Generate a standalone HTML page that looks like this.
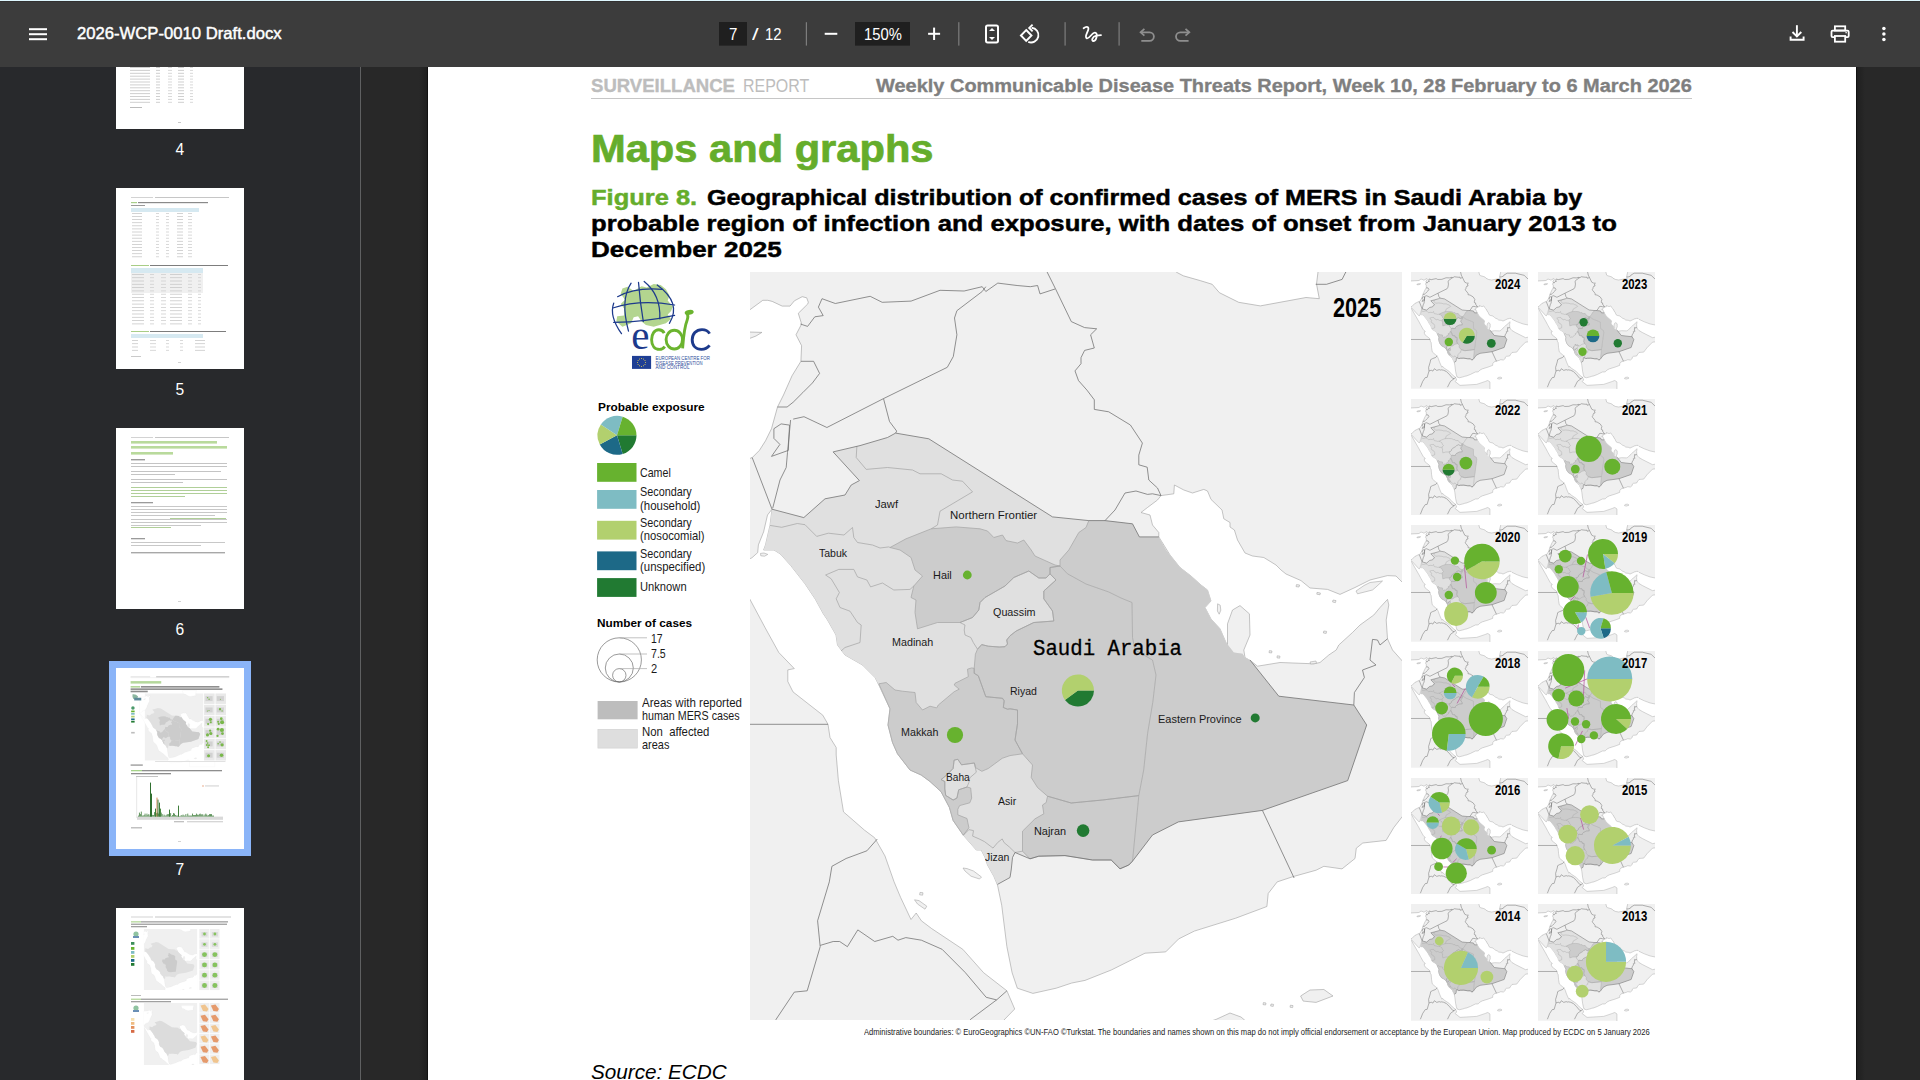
<!DOCTYPE html>
<html><head><meta charset="utf-8"><title>2026-WCP-0010 Draft.docx</title>
<style>
*{margin:0;padding:0;box-sizing:border-box}
html,body{width:1920px;height:1080px;overflow:hidden;background:#282828;font-family:"Liberation Sans",sans-serif}
.abs{position:absolute}
.t{position:absolute;white-space:pre;transform-origin:0 0;line-height:1}
svg{display:block}
</style></head><body>
<div class="abs" style="left:0;top:0;width:1920px;height:1px;background:#dff8ff"></div>
<div class="abs" style="left:0;top:1px;width:1920px;height:1px;background:#333131"></div>
<div class="abs" style="left:0;top:2px;width:1920px;height:65px;background:#3c3c3c"></div>
<svg class="abs" style="left:0;top:0" width="1920" height="67" viewBox="0 0 1920 67"><rect x="29" y="28.2" width="18" height="2" fill="#ffffff"/><rect x="29" y="33.2" width="18" height="2" fill="#ffffff"/><rect x="29" y="38.2" width="18" height="2" fill="#ffffff"/><rect x="719" y="22" width="28" height="23.6" fill="#1f1f1f"/><rect x="855" y="22" width="55" height="23.6" fill="#1f1f1f"/><rect x="805.8" y="22.2" width="1.2" height="23.4" fill="#7d7d7d"/><rect x="958.2" y="22.2" width="1.2" height="23.4" fill="#7d7d7d"/><rect x="1064.5" y="22.2" width="1.2" height="23.4" fill="#7d7d7d"/><rect x="1118.5" y="22.2" width="1.2" height="23.4" fill="#7d7d7d"/><rect x="824.7" y="32.8" width="12.6" height="2" fill="#fff"/><rect x="928.1" y="32.8" width="12" height="2" fill="#fff"/><rect x="933.1" y="27.6" width="2" height="12.4" fill="#fff"/><rect x="986" y="25.4" width="12" height="17" rx="1.6" fill="none" stroke="#fff" stroke-width="2"/><polygon points="989,31.1 992,28.1 995,31.1" fill="#fff"/><polygon points="989,36.9 992,39.9 995,36.9" fill="#fff"/><polygon points="1026.2,30 1031.5,35.5 1026.2,41 1020.9,35.5" fill="none" stroke="#fff" stroke-width="1.9"/><path d="M1028.3,41.8 A7.3,7.3 0 1 0 1031.6,27.8" fill="none" stroke="#fff" stroke-width="1.9"/><path d="M1032.6,24.6 L1029.2,27.9 L1032.6,31.3" fill="none" stroke="#fff" stroke-width="1.9"/><path d="M1083.6,28.2 C1085.5,26.6 1088.6,25.8 1088.4,29 C1088.1,32 1084.2,36.6 1086.6,38.2 C1089,39.6 1091.6,33 1094.6,32.6 C1098.4,32 1096.6,40.8 1093.6,41 C1091,41.2 1092.2,36.4 1096.4,35.6 L1101,35.2" fill="none" stroke="#fff" stroke-width="1.8" stroke-linecap="round" stroke-linejoin="round"/><path d="M1141.2,32.3 L1149.6,32.3 A4.3,4.3 0 0 1 1149.6,40.9 L1141.3,40.9" fill="none" stroke="#8e8e8e" stroke-width="1.8"/><path d="M1144.4,28.9 L1140.6,32.3 L1144.4,35.7" fill="none" stroke="#8e8e8e" stroke-width="1.8"/><path d="M1188.7,32.3 L1180.3,32.3 A4.3,4.3 0 0 0 1180.3,40.9 L1188.6,40.9" fill="none" stroke="#8e8e8e" stroke-width="1.8"/><path d="M1185.5,28.9 L1189.3,32.3 L1185.5,35.7" fill="none" stroke="#8e8e8e" stroke-width="1.8"/><path d="M1796.9,25.2 L1796.9,36.4" stroke="#fff" stroke-width="1.9" fill="none"/><path d="M1792.5,32 L1796.9,36.5 L1801.3,32" stroke="#fff" stroke-width="1.9" fill="none"/><path d="M1790.6,36.6 L1790.6,39.8 L1803.6,39.8 L1803.6,36.6" stroke="#fff" stroke-width="1.9" fill="none"/><rect x="1834.9" y="26.3" width="10.3" height="4.2" fill="none" stroke="#fff" stroke-width="1.8"/><rect x="1831.5" y="30.6" width="17.2" height="6.6" rx="1.2" fill="none" stroke="#fff" stroke-width="1.8"/><rect x="1834.9" y="36" width="10.3" height="5.7" fill="#3c3c3c" stroke="#fff" stroke-width="1.8"/><rect x="1845.5" y="32" width="1.3" height="1.3" fill="#fff"/><circle cx="1883.9" cy="28.6" r="1.75" fill="#fff"/><circle cx="1883.9" cy="34.1" r="1.75" fill="#fff"/><circle cx="1883.9" cy="39.5" r="1.75" fill="#fff"/></svg>
<div class="abs" style="left:0;top:67px;width:360px;height:1013px;background:#28292c;overflow:hidden"><svg class="abs" style="left:0;top:0" width="360" height="1013" viewBox="0 67 360 1013"><rect x="116" y="-52" width="128" height="181" fill="#fff"/><rect x="130" y="67.0" width="20" height="1" fill="#cfcfcf"/><rect x="156" y="67.0" width="4" height="1" fill="#cfcfcf"/><rect x="168" y="67.0" width="4" height="1" fill="#d9d9d9"/><rect x="178" y="67.0" width="6" height="1" fill="#cfcfcf"/><rect x="190" y="67.0" width="3" height="1" fill="#d9d9d9"/><rect x="130" y="69.9" width="20" height="1" fill="#cfcfcf"/><rect x="156" y="69.9" width="4" height="1" fill="#cfcfcf"/><rect x="168" y="69.9" width="4" height="1" fill="#d9d9d9"/><rect x="178" y="69.9" width="6" height="1" fill="#cfcfcf"/><rect x="190" y="69.9" width="3" height="1" fill="#d9d9d9"/><rect x="130" y="72.8" width="20" height="1" fill="#cfcfcf"/><rect x="156" y="72.8" width="4" height="1" fill="#cfcfcf"/><rect x="168" y="72.8" width="4" height="1" fill="#d9d9d9"/><rect x="178" y="72.8" width="6" height="1" fill="#cfcfcf"/><rect x="190" y="72.8" width="3" height="1" fill="#d9d9d9"/><rect x="130" y="75.7" width="20" height="1" fill="#cfcfcf"/><rect x="156" y="75.7" width="4" height="1" fill="#cfcfcf"/><rect x="168" y="75.7" width="4" height="1" fill="#d9d9d9"/><rect x="178" y="75.7" width="6" height="1" fill="#cfcfcf"/><rect x="190" y="75.7" width="3" height="1" fill="#d9d9d9"/><rect x="130" y="78.6" width="20" height="1" fill="#cfcfcf"/><rect x="156" y="78.6" width="4" height="1" fill="#cfcfcf"/><rect x="168" y="78.6" width="4" height="1" fill="#d9d9d9"/><rect x="178" y="78.6" width="6" height="1" fill="#cfcfcf"/><rect x="190" y="78.6" width="3" height="1" fill="#d9d9d9"/><rect x="130" y="81.5" width="20" height="1" fill="#cfcfcf"/><rect x="156" y="81.5" width="4" height="1" fill="#cfcfcf"/><rect x="168" y="81.5" width="4" height="1" fill="#d9d9d9"/><rect x="178" y="81.5" width="6" height="1" fill="#cfcfcf"/><rect x="190" y="81.5" width="3" height="1" fill="#d9d9d9"/><rect x="130" y="84.4" width="20" height="1" fill="#cfcfcf"/><rect x="156" y="84.4" width="4" height="1" fill="#cfcfcf"/><rect x="168" y="84.4" width="4" height="1" fill="#d9d9d9"/><rect x="178" y="84.4" width="6" height="1" fill="#cfcfcf"/><rect x="190" y="84.4" width="3" height="1" fill="#d9d9d9"/><rect x="130" y="87.3" width="20" height="1" fill="#cfcfcf"/><rect x="156" y="87.3" width="4" height="1" fill="#cfcfcf"/><rect x="168" y="87.3" width="4" height="1" fill="#d9d9d9"/><rect x="178" y="87.3" width="6" height="1" fill="#cfcfcf"/><rect x="190" y="87.3" width="3" height="1" fill="#d9d9d9"/><rect x="130" y="90.2" width="20" height="1" fill="#cfcfcf"/><rect x="156" y="90.2" width="4" height="1" fill="#cfcfcf"/><rect x="168" y="90.2" width="4" height="1" fill="#d9d9d9"/><rect x="178" y="90.2" width="6" height="1" fill="#cfcfcf"/><rect x="190" y="90.2" width="3" height="1" fill="#d9d9d9"/><rect x="130" y="93.1" width="20" height="1" fill="#cfcfcf"/><rect x="156" y="93.1" width="4" height="1" fill="#cfcfcf"/><rect x="168" y="93.1" width="4" height="1" fill="#d9d9d9"/><rect x="178" y="93.1" width="6" height="1" fill="#cfcfcf"/><rect x="190" y="93.1" width="3" height="1" fill="#d9d9d9"/><rect x="130" y="96.0" width="20" height="1" fill="#cfcfcf"/><rect x="156" y="96.0" width="4" height="1" fill="#cfcfcf"/><rect x="168" y="96.0" width="4" height="1" fill="#d9d9d9"/><rect x="178" y="96.0" width="6" height="1" fill="#cfcfcf"/><rect x="190" y="96.0" width="3" height="1" fill="#d9d9d9"/><rect x="130" y="98.9" width="20" height="1" fill="#cfcfcf"/><rect x="156" y="98.9" width="4" height="1" fill="#cfcfcf"/><rect x="168" y="98.9" width="4" height="1" fill="#d9d9d9"/><rect x="178" y="98.9" width="6" height="1" fill="#cfcfcf"/><rect x="190" y="98.9" width="3" height="1" fill="#d9d9d9"/><rect x="130" y="101.8" width="20" height="1" fill="#cfcfcf"/><rect x="156" y="101.8" width="4" height="1" fill="#cfcfcf"/><rect x="168" y="101.8" width="4" height="1" fill="#d9d9d9"/><rect x="178" y="101.8" width="6" height="1" fill="#cfcfcf"/><rect x="190" y="101.8" width="3" height="1" fill="#d9d9d9"/><rect x="130" y="107" width="12" height="1" fill="#bbbbbb"/><rect x="178" y="122" width="3" height="1" fill="#c8c8c8"/><rect x="116" y="188" width="128" height="181" fill="#fff"/><rect x="131" y="197" width="22" height="0.8" fill="#c8c8c8"/><rect x="155" y="197" width="74" height="0.8" fill="#b8b8b8"/><rect x="131" y="202" width="6" height="1.2" fill="#a9cf8a"/><rect x="138" y="202" width="70" height="1.2" fill="#8a8a8a"/><rect x="131" y="205" width="14" height="1" fill="#9a9a9a"/><rect x="131" y="208" width="68" height="4" fill="#d6e9f1"/><rect x="132" y="213.0" width="10" height="0.8" fill="#c9c9c9"/><rect x="156" y="213.0" width="3" height="0.8" fill="#d0d0d0"/><rect x="166" y="213.0" width="3" height="0.8" fill="#d0d0d0"/><rect x="177" y="213.0" width="6" height="0.8" fill="#c9c9c9"/><rect x="188" y="213.0" width="4" height="0.8" fill="#d0d0d0"/><rect x="132" y="216.1" width="10" height="0.8" fill="#c9c9c9"/><rect x="156" y="216.1" width="3" height="0.8" fill="#d0d0d0"/><rect x="166" y="216.1" width="3" height="0.8" fill="#d0d0d0"/><rect x="177" y="216.1" width="6" height="0.8" fill="#c9c9c9"/><rect x="188" y="216.1" width="4" height="0.8" fill="#d0d0d0"/><rect x="132" y="219.2" width="10" height="0.8" fill="#c9c9c9"/><rect x="156" y="219.2" width="3" height="0.8" fill="#d0d0d0"/><rect x="166" y="219.2" width="3" height="0.8" fill="#d0d0d0"/><rect x="177" y="219.2" width="6" height="0.8" fill="#c9c9c9"/><rect x="188" y="219.2" width="4" height="0.8" fill="#d0d0d0"/><rect x="132" y="222.3" width="10" height="0.8" fill="#c9c9c9"/><rect x="156" y="222.3" width="3" height="0.8" fill="#d0d0d0"/><rect x="166" y="222.3" width="3" height="0.8" fill="#d0d0d0"/><rect x="177" y="222.3" width="6" height="0.8" fill="#c9c9c9"/><rect x="188" y="222.3" width="4" height="0.8" fill="#d0d0d0"/><rect x="132" y="225.4" width="10" height="0.8" fill="#c9c9c9"/><rect x="156" y="225.4" width="3" height="0.8" fill="#d0d0d0"/><rect x="166" y="225.4" width="3" height="0.8" fill="#d0d0d0"/><rect x="177" y="225.4" width="6" height="0.8" fill="#c9c9c9"/><rect x="188" y="225.4" width="4" height="0.8" fill="#d0d0d0"/><rect x="132" y="228.5" width="10" height="0.8" fill="#c9c9c9"/><rect x="156" y="228.5" width="3" height="0.8" fill="#d0d0d0"/><rect x="166" y="228.5" width="3" height="0.8" fill="#d0d0d0"/><rect x="177" y="228.5" width="6" height="0.8" fill="#c9c9c9"/><rect x="188" y="228.5" width="4" height="0.8" fill="#d0d0d0"/><rect x="132" y="231.6" width="10" height="0.8" fill="#c9c9c9"/><rect x="156" y="231.6" width="3" height="0.8" fill="#d0d0d0"/><rect x="166" y="231.6" width="3" height="0.8" fill="#d0d0d0"/><rect x="177" y="231.6" width="6" height="0.8" fill="#c9c9c9"/><rect x="188" y="231.6" width="4" height="0.8" fill="#d0d0d0"/><rect x="132" y="234.7" width="10" height="0.8" fill="#c9c9c9"/><rect x="156" y="234.7" width="3" height="0.8" fill="#d0d0d0"/><rect x="166" y="234.7" width="3" height="0.8" fill="#d0d0d0"/><rect x="177" y="234.7" width="6" height="0.8" fill="#c9c9c9"/><rect x="188" y="234.7" width="4" height="0.8" fill="#d0d0d0"/><rect x="132" y="237.8" width="10" height="0.8" fill="#c9c9c9"/><rect x="156" y="237.8" width="3" height="0.8" fill="#d0d0d0"/><rect x="166" y="237.8" width="3" height="0.8" fill="#d0d0d0"/><rect x="177" y="237.8" width="6" height="0.8" fill="#c9c9c9"/><rect x="188" y="237.8" width="4" height="0.8" fill="#d0d0d0"/><rect x="132" y="240.9" width="10" height="0.8" fill="#c9c9c9"/><rect x="156" y="240.9" width="3" height="0.8" fill="#d0d0d0"/><rect x="166" y="240.9" width="3" height="0.8" fill="#d0d0d0"/><rect x="177" y="240.9" width="6" height="0.8" fill="#c9c9c9"/><rect x="188" y="240.9" width="4" height="0.8" fill="#d0d0d0"/><rect x="132" y="244.0" width="10" height="0.8" fill="#c9c9c9"/><rect x="156" y="244.0" width="3" height="0.8" fill="#d0d0d0"/><rect x="166" y="244.0" width="3" height="0.8" fill="#d0d0d0"/><rect x="177" y="244.0" width="6" height="0.8" fill="#c9c9c9"/><rect x="188" y="244.0" width="4" height="0.8" fill="#d0d0d0"/><rect x="132" y="247.1" width="10" height="0.8" fill="#c9c9c9"/><rect x="156" y="247.1" width="3" height="0.8" fill="#d0d0d0"/><rect x="166" y="247.1" width="3" height="0.8" fill="#d0d0d0"/><rect x="177" y="247.1" width="6" height="0.8" fill="#c9c9c9"/><rect x="188" y="247.1" width="4" height="0.8" fill="#d0d0d0"/><rect x="132" y="250.2" width="10" height="0.8" fill="#c9c9c9"/><rect x="156" y="250.2" width="3" height="0.8" fill="#d0d0d0"/><rect x="166" y="250.2" width="3" height="0.8" fill="#d0d0d0"/><rect x="177" y="250.2" width="6" height="0.8" fill="#c9c9c9"/><rect x="188" y="250.2" width="4" height="0.8" fill="#d0d0d0"/><rect x="132" y="253.3" width="10" height="0.8" fill="#c9c9c9"/><rect x="156" y="253.3" width="3" height="0.8" fill="#d0d0d0"/><rect x="166" y="253.3" width="3" height="0.8" fill="#d0d0d0"/><rect x="177" y="253.3" width="6" height="0.8" fill="#c9c9c9"/><rect x="188" y="253.3" width="4" height="0.8" fill="#d0d0d0"/><rect x="132" y="256.4" width="10" height="0.8" fill="#c9c9c9"/><rect x="156" y="256.4" width="3" height="0.8" fill="#d0d0d0"/><rect x="166" y="256.4" width="3" height="0.8" fill="#d0d0d0"/><rect x="177" y="256.4" width="6" height="0.8" fill="#c9c9c9"/><rect x="188" y="256.4" width="4" height="0.8" fill="#d0d0d0"/><rect x="131" y="265" width="18" height="1" fill="#a8cd86"/><rect x="150" y="265" width="78" height="1" fill="#7d7d7d"/><rect x="131" y="268" width="72" height="5" fill="#d6e9f1"/><rect x="131" y="273" width="72" height="20" fill="#f0f0f0"/><rect x="132" y="274.0" width="12" height="0.8" fill="#c9c9c9"/><rect x="150" y="274.0" width="4" height="0.8" fill="#d0d0d0"/><rect x="161" y="274.0" width="5" height="0.8" fill="#d0d0d0"/><rect x="170" y="274.0" width="12" height="0.8" fill="#c9c9c9"/><rect x="188" y="274.0" width="4" height="0.8" fill="#d0d0d0"/><rect x="198" y="274.0" width="3" height="0.8" fill="#d0d0d0"/><rect x="132" y="277.3" width="12" height="0.8" fill="#c9c9c9"/><rect x="150" y="277.3" width="4" height="0.8" fill="#d0d0d0"/><rect x="161" y="277.3" width="5" height="0.8" fill="#d0d0d0"/><rect x="170" y="277.3" width="12" height="0.8" fill="#c9c9c9"/><rect x="188" y="277.3" width="4" height="0.8" fill="#d0d0d0"/><rect x="198" y="277.3" width="3" height="0.8" fill="#d0d0d0"/><rect x="132" y="280.6" width="12" height="0.8" fill="#c9c9c9"/><rect x="150" y="280.6" width="4" height="0.8" fill="#d0d0d0"/><rect x="161" y="280.6" width="5" height="0.8" fill="#d0d0d0"/><rect x="170" y="280.6" width="12" height="0.8" fill="#c9c9c9"/><rect x="188" y="280.6" width="4" height="0.8" fill="#d0d0d0"/><rect x="198" y="280.6" width="3" height="0.8" fill="#d0d0d0"/><rect x="132" y="283.9" width="12" height="0.8" fill="#c9c9c9"/><rect x="150" y="283.9" width="4" height="0.8" fill="#d0d0d0"/><rect x="161" y="283.9" width="5" height="0.8" fill="#d0d0d0"/><rect x="170" y="283.9" width="12" height="0.8" fill="#c9c9c9"/><rect x="188" y="283.9" width="4" height="0.8" fill="#d0d0d0"/><rect x="198" y="283.9" width="3" height="0.8" fill="#d0d0d0"/><rect x="132" y="287.2" width="12" height="0.8" fill="#c9c9c9"/><rect x="150" y="287.2" width="4" height="0.8" fill="#d0d0d0"/><rect x="161" y="287.2" width="5" height="0.8" fill="#d0d0d0"/><rect x="170" y="287.2" width="12" height="0.8" fill="#c9c9c9"/><rect x="188" y="287.2" width="4" height="0.8" fill="#d0d0d0"/><rect x="198" y="287.2" width="3" height="0.8" fill="#d0d0d0"/><rect x="132" y="290.5" width="12" height="0.8" fill="#c9c9c9"/><rect x="150" y="290.5" width="4" height="0.8" fill="#d0d0d0"/><rect x="161" y="290.5" width="5" height="0.8" fill="#d0d0d0"/><rect x="170" y="290.5" width="12" height="0.8" fill="#c9c9c9"/><rect x="188" y="290.5" width="4" height="0.8" fill="#d0d0d0"/><rect x="198" y="290.5" width="3" height="0.8" fill="#d0d0d0"/><rect x="132" y="293.8" width="12" height="0.8" fill="#c9c9c9"/><rect x="150" y="293.8" width="4" height="0.8" fill="#d0d0d0"/><rect x="161" y="293.8" width="5" height="0.8" fill="#d0d0d0"/><rect x="170" y="293.8" width="12" height="0.8" fill="#c9c9c9"/><rect x="188" y="293.8" width="4" height="0.8" fill="#d0d0d0"/><rect x="198" y="293.8" width="3" height="0.8" fill="#d0d0d0"/><rect x="132" y="297.1" width="12" height="0.8" fill="#c9c9c9"/><rect x="150" y="297.1" width="4" height="0.8" fill="#d0d0d0"/><rect x="161" y="297.1" width="5" height="0.8" fill="#d0d0d0"/><rect x="170" y="297.1" width="12" height="0.8" fill="#c9c9c9"/><rect x="188" y="297.1" width="4" height="0.8" fill="#d0d0d0"/><rect x="198" y="297.1" width="3" height="0.8" fill="#d0d0d0"/><rect x="132" y="300.4" width="12" height="0.8" fill="#c9c9c9"/><rect x="150" y="300.4" width="4" height="0.8" fill="#d0d0d0"/><rect x="161" y="300.4" width="5" height="0.8" fill="#d0d0d0"/><rect x="170" y="300.4" width="12" height="0.8" fill="#c9c9c9"/><rect x="188" y="300.4" width="4" height="0.8" fill="#d0d0d0"/><rect x="198" y="300.4" width="3" height="0.8" fill="#d0d0d0"/><rect x="132" y="303.7" width="12" height="0.8" fill="#c9c9c9"/><rect x="150" y="303.7" width="4" height="0.8" fill="#d0d0d0"/><rect x="161" y="303.7" width="5" height="0.8" fill="#d0d0d0"/><rect x="170" y="303.7" width="12" height="0.8" fill="#c9c9c9"/><rect x="188" y="303.7" width="4" height="0.8" fill="#d0d0d0"/><rect x="198" y="303.7" width="3" height="0.8" fill="#d0d0d0"/><rect x="132" y="307.0" width="12" height="0.8" fill="#c9c9c9"/><rect x="150" y="307.0" width="4" height="0.8" fill="#d0d0d0"/><rect x="161" y="307.0" width="5" height="0.8" fill="#d0d0d0"/><rect x="170" y="307.0" width="12" height="0.8" fill="#c9c9c9"/><rect x="188" y="307.0" width="4" height="0.8" fill="#d0d0d0"/><rect x="198" y="307.0" width="3" height="0.8" fill="#d0d0d0"/><rect x="132" y="310.3" width="12" height="0.8" fill="#c9c9c9"/><rect x="150" y="310.3" width="4" height="0.8" fill="#d0d0d0"/><rect x="161" y="310.3" width="5" height="0.8" fill="#d0d0d0"/><rect x="170" y="310.3" width="12" height="0.8" fill="#c9c9c9"/><rect x="188" y="310.3" width="4" height="0.8" fill="#d0d0d0"/><rect x="198" y="310.3" width="3" height="0.8" fill="#d0d0d0"/><rect x="132" y="313.6" width="12" height="0.8" fill="#c9c9c9"/><rect x="150" y="313.6" width="4" height="0.8" fill="#d0d0d0"/><rect x="161" y="313.6" width="5" height="0.8" fill="#d0d0d0"/><rect x="170" y="313.6" width="12" height="0.8" fill="#c9c9c9"/><rect x="188" y="313.6" width="4" height="0.8" fill="#d0d0d0"/><rect x="198" y="313.6" width="3" height="0.8" fill="#d0d0d0"/><rect x="132" y="316.9" width="12" height="0.8" fill="#c9c9c9"/><rect x="150" y="316.9" width="4" height="0.8" fill="#d0d0d0"/><rect x="161" y="316.9" width="5" height="0.8" fill="#d0d0d0"/><rect x="170" y="316.9" width="12" height="0.8" fill="#c9c9c9"/><rect x="188" y="316.9" width="4" height="0.8" fill="#d0d0d0"/><rect x="198" y="316.9" width="3" height="0.8" fill="#d0d0d0"/><rect x="132" y="320.2" width="12" height="0.8" fill="#c9c9c9"/><rect x="150" y="320.2" width="4" height="0.8" fill="#d0d0d0"/><rect x="161" y="320.2" width="5" height="0.8" fill="#d0d0d0"/><rect x="170" y="320.2" width="12" height="0.8" fill="#c9c9c9"/><rect x="188" y="320.2" width="4" height="0.8" fill="#d0d0d0"/><rect x="198" y="320.2" width="3" height="0.8" fill="#d0d0d0"/><rect x="132" y="323.5" width="12" height="0.8" fill="#c9c9c9"/><rect x="150" y="323.5" width="4" height="0.8" fill="#d0d0d0"/><rect x="161" y="323.5" width="5" height="0.8" fill="#d0d0d0"/><rect x="170" y="323.5" width="12" height="0.8" fill="#c9c9c9"/><rect x="188" y="323.5" width="4" height="0.8" fill="#d0d0d0"/><rect x="198" y="323.5" width="3" height="0.8" fill="#d0d0d0"/><rect x="131" y="331" width="18" height="1" fill="#a8cd86"/><rect x="150" y="331" width="76" height="1" fill="#7d7d7d"/><rect x="131" y="334" width="72" height="4" fill="#d6e9f1"/><rect x="132" y="340.0" width="6" height="0.8" fill="#c9c9c9"/><rect x="150" y="340.0" width="6" height="0.8" fill="#d0d0d0"/><rect x="166" y="340.0" width="3" height="0.8" fill="#d0d0d0"/><rect x="180" y="340.0" width="3" height="0.8" fill="#d0d0d0"/><rect x="195" y="340.0" width="10" height="0.8" fill="#c9c9c9"/><rect x="132" y="343.3" width="6" height="0.8" fill="#c9c9c9"/><rect x="150" y="343.3" width="6" height="0.8" fill="#d0d0d0"/><rect x="166" y="343.3" width="3" height="0.8" fill="#d0d0d0"/><rect x="180" y="343.3" width="3" height="0.8" fill="#d0d0d0"/><rect x="195" y="343.3" width="10" height="0.8" fill="#c9c9c9"/><rect x="132" y="346.6" width="6" height="0.8" fill="#c9c9c9"/><rect x="150" y="346.6" width="6" height="0.8" fill="#d0d0d0"/><rect x="166" y="346.6" width="3" height="0.8" fill="#d0d0d0"/><rect x="180" y="346.6" width="3" height="0.8" fill="#d0d0d0"/><rect x="195" y="346.6" width="10" height="0.8" fill="#c9c9c9"/><rect x="132" y="349.9" width="6" height="0.8" fill="#c9c9c9"/><rect x="150" y="349.9" width="6" height="0.8" fill="#d0d0d0"/><rect x="166" y="349.9" width="3" height="0.8" fill="#d0d0d0"/><rect x="180" y="349.9" width="3" height="0.8" fill="#d0d0d0"/><rect x="195" y="349.9" width="10" height="0.8" fill="#c9c9c9"/><rect x="131" y="356" width="10" height="0.8" fill="#bdbdbd"/><rect x="178" y="362" width="3" height="0.8" fill="#c8c8c8"/><rect x="116" y="428" width="128" height="181" fill="#fff"/><rect x="131" y="437" width="22" height="0.8" fill="#c8c8c8"/><rect x="155" y="437" width="74" height="0.8" fill="#b8b8b8"/><rect x="131" y="441" width="86" height="2.6" fill="#b9da9c"/><rect x="131" y="446" width="96" height="2.6" fill="#b9da9c"/><rect x="131" y="452" width="42" height="2.6" fill="#b9da9c"/><rect x="131" y="459" width="14" height="1.4" fill="#9a9a9a"/><rect x="131" y="463" width="96" height="1" fill="#c4c4c4"/><rect x="131" y="466" width="96" height="1" fill="#c4c4c4"/><rect x="131" y="471" width="90" height="1" fill="#c4c4c4"/><rect x="131" y="474" width="44" height="1" fill="#c4c4c4"/><rect x="131" y="479" width="96" height="1" fill="#c4c4c4"/><rect x="131" y="482" width="52" height="1" fill="#c4c4c4"/><rect x="131" y="487" width="96" height="1" fill="#b0cf98"/><rect x="131" y="490" width="96" height="1" fill="#b0cf98"/><rect x="131" y="493" width="96" height="1" fill="#b0cf98"/><rect x="131" y="496" width="54" height="1" fill="#b0cf98"/><rect x="131" y="502" width="22" height="1.3" fill="#9a9a9a"/><rect x="131" y="506" width="96" height="1" fill="#c8c8c8"/><rect x="131" y="509" width="96" height="1" fill="#c8c8c8"/><rect x="131" y="512" width="96" height="1" fill="#c8c8c8"/><rect x="131" y="515" width="84" height="1" fill="#c8c8c8"/><rect x="131" y="519" width="96" height="1" fill="#c8c8c8"/><rect x="131" y="522" width="96" height="1" fill="#c8c8c8"/><rect x="131" y="525" width="70" height="1" fill="#c8c8c8"/><rect x="170" y="518" width="56" height="1" fill="#b0cf98"/><rect x="131" y="527" width="40" height="1" fill="#b0cf98"/><rect x="131" y="538" width="14" height="1.3" fill="#9a9a9a"/><rect x="131" y="542" width="94" height="1" fill="#c8c8c8"/><rect x="131" y="545" width="70" height="1" fill="#c8c8c8"/><rect x="131" y="552" width="94" height="1.4" fill="#a8a8a8"/><rect x="178" y="601" width="3" height="0.8" fill="#c8c8c8"/><rect x="109" y="661" width="142" height="195" fill="#8ab4f8"/><rect x="116" y="668" width="128" height="181" fill="#fff"/><g transform="matrix(0.0896,0,0,0.0896,77.65,669.08)"><rect x="591" y="97.4" width="1101" height="2.5" fill="#c6c6c6"/><rect x="591" y="79" width="218" height="14" fill="#e6e6e6"/><rect x="876" y="79" width="816" height="14" fill="#c9c9c9"/><rect x="591" y="134" width="342" height="28" fill="#b5d89c"/><rect x="591" y="189" width="106" height="18" fill="#b3d79a"/><rect x="706" y="189" width="876" height="18" fill="#8e8e8e"/><rect x="591" y="215" width="1025" height="18" fill="#8e8e8e"/><rect x="591" y="241" width="191" height="18" fill="#8e8e8e"/><rect x="750" y="272" width="652" height="748" fill="#f0f0f0"/><polygon points="690.0,313.0 750.0,309.7 762.8,300.3 767.8,300.3 772.2,301.4 782.2,306.1 790.0,306.1 794.4,300.8 802.2,296.7 806.7,297.8 808.3,302.2 807.8,303.9 798.3,313.3 801.6,324.0 796.0,334.8 801.6,345.7 800.9,361.3 792.0,375.8 783.5,395.0 777.5,407.0 771.5,428.7 765.5,440.8 759.4,450.4 752.2,457.6 740.0,462.0 720.0,472.0 700.0,492.0 690.0,496.0" fill="#ffffff" stroke="#9a9a9a" stroke-width="0.6"/><polygon points="735.0,336.0 748.0,332.0 761.9,332.4 756.0,336.0 749.8,338.4 738.0,340.0" fill="#f0f0f0" stroke="#9a9a9a" stroke-width="0.6"/><polygon points="1168.0,240.0 1176.1,272.0 1183.3,275.8 1200.2,280.6 1212.2,284.3 1219.4,292.7 1238.7,302.3 1260.3,305.9 1306.0,297.5 1319.3,298.7 1316.5,284.0 1318.0,272.0 1326.0,240.0" fill="#ffffff" stroke="#9a9a9a" stroke-width="0.6"/><polygon points="772.0,509.2 770.0,525.4 765.5,544.9 763.6,550.0 774.0,550.0 780.4,554.0 790.8,565.6 805.0,583.8 815.4,599.3 823.2,613.6 827.5,620.0 836.0,635.0 837.5,645.0 845.0,655.0 862.5,665.0 875.0,677.5 878.8,685.0 890.0,708.8 888.0,725.0 892.5,742.5 897.5,753.8 910.0,770.0 921.2,775.0 930.0,781.5 941.1,791.7 949.4,807.4 953.1,820.4 963.3,835.2 976.3,850.0 981.2,850.0 985.0,857.5 987.5,865.0 993.8,876.2 997.5,885.0 1001.7,905.2 1004.3,926.0 1006.9,946.7 1012.1,972.7 1017.3,988.2 1032.9,993.4 1056.2,988.2 1071.8,983.0 1085.0,980.4 1111.3,970.0 1145.0,953.2 1165.7,951.9 1178.7,938.9 1194.3,931.1 1235.7,918.2 1266.9,906.5 1268.2,893.5 1277.2,881.9 1292.8,876.7 1316.1,870.2 1323.9,866.3 1342.0,868.9 1355.0,858.5 1356.3,848.2 1362.8,843.0 1386.1,840.4 1393.9,827.4 1403.0,815.7 1436.0,813.0 1459.0,782.6 1498.0,743.0 1530.0,740.0 1530.0,1090.0 1248.0,1090.0 1248.0,1023.0 1241.0,1017.0 1230.0,1013.0 1216.3,1019.3 1155.0,1040.0 1038.0,1047.0 1004.0,1020.0 1014.7,1009.0 1006.9,990.8 983.6,972.7 962.8,949.3 931.7,928.6 921.4,920.8 916.2,913.0 911.0,919.5 900.6,897.4 894.1,881.9 885.0,856.0 874.7,837.8 864.3,830.0 853.9,820.9 843.5,811.9 838.4,780.7 836.2,755.0 836.2,747.5 830.0,737.5 828.0,724.3 822.8,715.2 793.0,691.9 787.8,681.5 787.8,669.9 794.3,668.6 778.8,652.5 765.0,627.5 761.0,620.0 750.3,600.0 700.0,512.0 694.0,504.0 698.0,502.0 750.3,558.5 751.9,557.8 757.7,552.6 758.4,544.9 763.6,531.9 767.5,515.0" fill="#ffffff" stroke="#a0a0a0" stroke-width="0.6"/><polygon points="1300.6,996.0 1310.0,990.0 1323.9,989.5 1333.0,996.0 1316.1,1002.4 1303.2,1001.1" fill="#f0f0f0" stroke="#a0a0a0" stroke-width="0.6"/><polygon points="1161.0,495.6 1173.8,493.8 1174.4,485.0 1183.8,490.0 1192.5,493.0 1203.8,489.4 1207.5,491.0 1211.0,499.4 1222.0,510.0 1223.8,518.8 1230.0,522.5 1230.0,527.0 1234.4,530.0 1237.5,540.0 1245.0,553.0 1252.5,556.0 1263.8,557.5 1276.0,565.0 1281.0,570.0 1286.0,574.0 1301.0,580.6 1310.0,588.0 1327.5,589.4 1340.0,594.4 1355.0,587.5 1370.0,580.0 1387.5,575.6 1396.0,576.0 1402.5,582.5 1440.0,600.0 1480.0,615.0 1530.0,625.0 1530.0,705.0 1498.0,711.6 1428.0,676.0 1402.5,661.2 1392.5,650.0 1387.5,638.8 1386.2,620.0 1388.8,605.0 1387.5,599.4 1380.0,607.5 1373.8,615.0 1360.0,625.0 1352.5,632.5 1338.8,645.0 1336.2,650.0 1328.8,655.0 1320.0,662.5 1313.8,663.8 1280.0,662.5 1257.5,666.2 1251.2,661.2 1245.0,657.5 1243.8,650.0 1250.0,635.0 1249.4,613.8 1240.0,605.6 1232.5,610.0 1227.5,623.8 1227.5,645.0 1226.0,642.5 1220.0,628.8 1211.0,619.0 1205.0,607.5 1211.0,601.0 1207.5,590.0 1201.0,585.0 1191.0,576.0 1180.0,567.5 1170.0,555.0 1158.8,536.9 1158.8,532.5 1152.5,525.0 1150.0,515.0 1141.0,512.5 1147.5,507.5 1157.5,500.0" fill="#ffffff" stroke="#a0a0a0" stroke-width="0.6"/><polygon points="772.0,509.2 803.8,517.6 825.0,498.8 845.0,495.0 851.2,485.0 859.4,480.6 833.1,451.9 860.0,445.6 887.5,437.5 895.6,433.1 928.8,438.8 1052.5,516.9 1088.8,520.6 1105.0,520.6 1132.5,523.8 1139.4,536.9 1158.8,536.9 1166.0,550.0 1170.0,555.0 1180.0,567.5 1191.0,576.0 1201.0,585.0 1207.5,590.0 1211.0,601.0 1205.0,607.5 1211.0,619.0 1220.0,628.8 1226.0,642.5 1233.8,652.5 1242.5,653.8 1245.0,657.5 1250.0,660.0 1278.8,696.2 1353.8,705.0 1366.7,725.0 1347.7,780.6 1262.4,810.4 1178.4,821.9 1152.5,835.0 1132.5,861.2 1128.8,865.0 1120.0,868.8 1111.2,860.0 1092.5,860.0 1065.0,855.6 1038.8,856.2 1030.0,858.8 1015.0,852.5 1012.5,857.5 1011.2,870.0 1010.0,877.5 997.5,884.4 993.8,876.2 987.5,865.0 985.0,857.5 981.2,850.0 976.3,850.0 963.3,835.2 953.1,820.4 949.4,807.4 941.1,791.7 930.0,781.5 921.2,775.0 910.0,770.0 897.5,753.8 892.5,742.5 888.0,725.0 890.0,708.8 878.8,685.0 875.0,677.5 862.5,665.0 845.0,655.0 837.5,645.0 836.0,635.0 827.5,620.0 823.2,613.6 815.4,599.3 805.0,583.8 790.8,565.6 780.4,554.0 774.0,550.0 763.6,550.0 765.5,544.9 770.0,525.4" fill="#e0e0e0"/><polygon points="890.0,547.5 906.0,538.8 931.2,528.8 956.2,526.9 980.0,528.8 987.5,531.0 993.8,537.5 1002.5,535.0 1006.0,540.6 1017.5,543.0 1023.8,540.0 1031.2,550.0 1035.0,556.0 1055.0,565.0 1060.0,566.0 1050.0,567.5 1050.0,573.8 1046.0,578.0 1038.8,578.0 1028.8,571.0 1013.8,577.5 1005.0,586.0 985.0,597.5 980.0,602.5 978.8,610.0 972.5,617.5 960.0,622.5 937.5,622.5 917.5,628.8 915.0,612.5 916.0,600.0 911.0,597.5 913.8,586.0 922.5,576.0 915.0,570.0 911.0,557.5 900.0,550.0" fill="#cccccc"/><polygon points="1060.0,566.0 1067.5,573.8 1086.0,584.0 1108.8,592.0 1121.0,598.0 1132.0,602.5 1132.5,637.5 1135.0,650.0 1152.5,660.0 1156.0,675.0 1152.8,702.2 1147.6,733.3 1143.7,770.0 1138.8,795.6 1102.5,800.0 1071.2,803.0 1047.5,796.2 1037.5,787.5 1031.2,777.5 1032.5,765.0 1022.5,753.8 1015.0,740.0 1017.5,723.8 1017.5,710.0 1010.0,708.8 1007.5,709.2 1003.3,707.5 1004.2,700.8 1002.5,698.3 985.8,696.7 978.3,675.8 974.2,673.3 974.2,668.3 975.4,654.2 977.5,649.2 981.7,644.6 988.3,646.2 999.2,647.0 1005.0,646.7 1007.5,644.0 1006.7,640.0 1010.0,635.8 1016.2,631.0 1033.8,622.5 1053.8,621.0 1052.5,611.0 1043.8,598.8 1043.8,591.0 1056.0,580.0 1050.0,573.8 1050.0,567.5" fill="#cccccc"/><polygon points="1088.8,520.6 1105.0,520.6 1132.5,523.8 1139.4,536.9 1158.8,536.9 1166.0,550.0 1170.0,555.0 1180.0,567.5 1191.0,576.0 1201.0,585.0 1207.5,590.0 1211.0,601.0 1205.0,607.5 1211.0,619.0 1220.0,628.8 1226.0,642.5 1233.8,652.5 1242.5,653.8 1245.0,657.5 1250.0,660.0 1278.8,696.2 1353.8,705.0 1366.7,725.0 1347.7,780.6 1262.4,810.4 1178.4,821.9 1152.5,835.0 1132.5,861.2 1138.8,795.6 1143.7,770.0 1147.6,733.3 1152.8,702.2 1156.0,675.0 1152.5,660.0 1135.0,650.0 1132.5,637.5 1132.0,602.5 1121.0,598.0 1108.8,592.0 1086.0,584.0 1067.5,573.8 1060.0,566.0 1060.0,560.0 1068.8,550.0 1078.8,532.5 1086.0,527.5" fill="#cccccc"/><polygon points="878.8,683.8 886.2,682.5 895.0,690.0 902.5,691.2 915.0,692.5 916.2,702.5 922.5,710.0 930.0,706.2 936.7,707.9 938.3,705.0 954.2,691.7 959.2,689.2 954.2,685.0 955.0,683.3 968.3,676.7 967.5,669.2 971.7,667.9 974.2,668.3 974.2,673.3 978.3,675.8 985.8,696.7 1002.5,698.3 1004.2,700.8 1003.3,707.5 1007.5,709.2 1010.0,708.8 1017.5,710.0 1017.5,723.8 1015.0,740.0 1022.5,753.8 1010.0,755.6 1002.2,758.3 988.3,768.5 981.9,771.3 975.4,767.6 974.4,763.0 961.5,764.8 957.8,759.3 954.1,760.2 953.1,768.5 946.7,775.0 941.1,779.6 944.8,781.5 944.8,788.9 945.7,795.4 953.1,800.0 956.9,798.1 958.7,789.8 967.0,787.0 970.7,788.0 971.7,798.1 969.8,802.8 959.6,805.6 957.8,809.3 957.8,814.8 967.0,818.5 968.9,827.8 963.3,835.2 953.1,820.4 949.4,807.4 941.1,791.7 930.0,781.5 921.2,775.0 910.0,770.0 897.5,753.8 892.5,742.5 888.0,725.0 890.0,708.8" fill="#cccccc"/><polygon points="1047.5,796.2 1071.2,803.0 1102.5,800.0 1138.8,795.6 1132.5,861.2 1128.8,865.0 1120.0,868.8 1111.2,860.0 1092.5,860.0 1065.0,855.6 1038.8,856.2 1030.0,858.8 1022.5,851.2 1022.5,831.2 1035.0,818.8 1043.8,813.8 1042.5,805.0 1046.2,802.5" fill="#cccccc"/><rect x="1411.1" y="272.1" width="117.4" height="116.7" fill="#e9e9e9"/><rect x="1426.1" y="302.1" width="80" height="55" fill="#d2d2d2"/><rect x="1411.1" y="398.5" width="117.4" height="116.7" fill="#e9e9e9"/><rect x="1426.1" y="428.5" width="80" height="55" fill="#d2d2d2"/><rect x="1411.1" y="525.0" width="117.4" height="116.7" fill="#e9e9e9"/><rect x="1426.1" y="555.0" width="80" height="55" fill="#d2d2d2"/><rect x="1411.1" y="651.4" width="117.4" height="116.7" fill="#e9e9e9"/><rect x="1426.1" y="681.4" width="80" height="55" fill="#d2d2d2"/><rect x="1411.1" y="777.8" width="117.4" height="116.7" fill="#e9e9e9"/><rect x="1426.1" y="807.8" width="80" height="55" fill="#d2d2d2"/><rect x="1411.1" y="904.2" width="117.4" height="116.7" fill="#e9e9e9"/><rect x="1426.1" y="934.2" width="80" height="55" fill="#d2d2d2"/><rect x="1538.0" y="272.1" width="117.4" height="116.7" fill="#e9e9e9"/><rect x="1553.0" y="302.1" width="80" height="55" fill="#d2d2d2"/><rect x="1538.0" y="398.5" width="117.4" height="116.7" fill="#e9e9e9"/><rect x="1553.0" y="428.5" width="80" height="55" fill="#d2d2d2"/><rect x="1538.0" y="525.0" width="117.4" height="116.7" fill="#e9e9e9"/><rect x="1553.0" y="555.0" width="80" height="55" fill="#d2d2d2"/><rect x="1538.0" y="651.4" width="117.4" height="116.7" fill="#e9e9e9"/><rect x="1553.0" y="681.4" width="80" height="55" fill="#d2d2d2"/><rect x="1538.0" y="777.8" width="117.4" height="116.7" fill="#e9e9e9"/><rect x="1553.0" y="807.8" width="80" height="55" fill="#d2d2d2"/><rect x="1538.0" y="904.2" width="117.4" height="116.7" fill="#e9e9e9"/><rect x="1553.0" y="934.2" width="80" height="55" fill="#d2d2d2"/><circle cx="1451.1" cy="319.1" r="7" fill="#79b84a"/><circle cx="1467.1" cy="336.1" r="8" fill="#79b84a"/><circle cx="1593.0" cy="336.1" r="6" fill="#79b84a"/><circle cx="1466.1" cy="462.5" r="6" fill="#79b84a"/><circle cx="1449.1" cy="468.5" r="6" fill="#79b84a"/><circle cx="1589.0" cy="448.5" r="13" fill="#79b84a"/><circle cx="1612.0" cy="466.5" r="8" fill="#79b84a"/><circle cx="1482.1" cy="561.0" r="18" fill="#79b84a"/><circle cx="1486.1" cy="593.0" r="11" fill="#79b84a"/><circle cx="1456.1" cy="614.0" r="12" fill="#79b84a"/><circle cx="1603.0" cy="554.0" r="15" fill="#79b84a"/><circle cx="1612.0" cy="593.0" r="22" fill="#79b84a"/><circle cx="1568.0" cy="587.0" r="11" fill="#79b84a"/><circle cx="1575.0" cy="612.0" r="12" fill="#79b84a"/><circle cx="1478.1" cy="687.4" r="12" fill="#79b84a"/><circle cx="1449.1" cy="734.4" r="17" fill="#79b84a"/><circle cx="1486.1" cy="719.4" r="17" fill="#79b84a"/><circle cx="1568.0" cy="670.4" r="16" fill="#79b84a"/><circle cx="1610.0" cy="679.4" r="23" fill="#79b84a"/><circle cx="1616.0" cy="719.4" r="15" fill="#79b84a"/><circle cx="1561.0" cy="746.4" r="13" fill="#79b84a"/><circle cx="1439.1" cy="802.8" r="11" fill="#79b84a"/><circle cx="1451.1" cy="825.8" r="9" fill="#79b84a"/><circle cx="1442.1" cy="847.8" r="11" fill="#79b84a"/><circle cx="1466.1" cy="848.8" r="11" fill="#79b84a"/><circle cx="1456.1" cy="872.8" r="11" fill="#79b84a"/><circle cx="1589.0" cy="814.8" r="9" fill="#79b84a"/><circle cx="1612.0" cy="844.8" r="18" fill="#79b84a"/><circle cx="1568.0" cy="833.8" r="9" fill="#79b84a"/><circle cx="1461.1" cy="968.2" r="17" fill="#79b84a"/><circle cx="1606.0" cy="962.2" r="20" fill="#79b84a"/><circle cx="617" cy="435" r="19.5" fill="#4b9a6a"/><path d="M612,281 Q650,275 675,306 Q672,332 622,334 Q608,310 612,281Z" fill="#8cb7a0"/><rect x="631" y="320" width="79" height="30" fill="#5d8a9a"/><rect x="597" y="463" width="39" height="19" fill="#67b22f"/><rect x="597" y="490" width="39" height="19" fill="#7ebcc3"/><rect x="597" y="521" width="39" height="19" fill="#b2d06e"/><rect x="597" y="551" width="39" height="19" fill="#1d6987"/><rect x="597" y="578" width="39" height="19" fill="#217a32"/><rect x="597" y="701" width="40" height="18" fill="#bdbdbd"/><rect x="864" y="1028" width="786" height="7" fill="#d0d0d0"/><rect x="591" y="1064" width="136" height="15" fill="#9a9a9a"/></g><rect x="131" y="770" width="11" height="1.3" fill="#a6d38a"/><rect x="142" y="770" width="80" height="1.3" fill="#8e8e8e"/><rect x="131" y="773" width="40" height="1.3" fill="#8e8e8e"/><rect x="136" y="776" width="22" height="0.7" fill="#aaa"/><rect x="136.5" y="777" width="0.6" height="41" fill="#d8d8d8"/><rect x="137" y="816.6" width="86" height="3.2" fill="#d9d9d9"/><rect x="138.00" y="815.60" width="0.8" height="1" fill="#3e7d3a"/><rect x="138.95" y="812.60" width="0.8" height="4" fill="#3e7d3a"/><rect x="139.90" y="814.10" width="0.8" height="2.5" fill="#3e7d3a"/><rect x="140.85" y="811.60" width="0.8" height="5" fill="#3e7d3a"/><rect x="141.80" y="815.60" width="0.8" height="1" fill="#3e7d3a"/><rect x="142.75" y="815.60" width="0.8" height="1" fill="#3e7d3a"/><rect x="143.70" y="815.10" width="0.8" height="1.5" fill="#3e7d3a"/><rect x="144.65" y="813.60" width="0.8" height="3" fill="#3e7d3a"/><rect x="145.60" y="815.60" width="0.8" height="1" fill="#3e7d3a"/><rect x="146.55" y="813.60" width="0.8" height="3" fill="#3e7d3a"/><rect x="147.50" y="815.10" width="0.8" height="1.5" fill="#3e7d3a"/><rect x="148.45" y="814.10" width="0.8" height="2.5" fill="#3e7d3a"/><rect x="149.40" y="815.60" width="0.8" height="1" fill="#3e7d3a"/><rect x="150.35" y="814.60" width="0.8" height="2" fill="#3e7d3a"/><rect x="151.30" y="813.60" width="0.8" height="3" fill="#3e7d3a"/><rect x="152.25" y="815.10" width="0.8" height="1.5" fill="#3e7d3a"/><rect x="153.20" y="815.10" width="0.8" height="1.5" fill="#3e7d3a"/><rect x="154.15" y="812.10" width="0.8" height="4.5" fill="#3e7d3a"/><rect x="155.10" y="815.60" width="0.8" height="1" fill="#3e7d3a"/><rect x="156.05" y="813.10" width="0.8" height="3.5" fill="#3e7d3a"/><rect x="157.00" y="812.60" width="0.8" height="4" fill="#3e7d3a"/><rect x="157.95" y="813.60" width="0.8" height="3" fill="#3e7d3a"/><rect x="158.90" y="812.60" width="0.8" height="4" fill="#3e7d3a"/><rect x="159.85" y="811.60" width="0.8" height="5" fill="#3e7d3a"/><rect x="160.80" y="812.60" width="0.8" height="4" fill="#3e7d3a"/><rect x="161.75" y="814.10" width="0.8" height="2.5" fill="#3e7d3a"/><rect x="162.70" y="816.10" width="0.8" height="0.5" fill="#3e7d3a"/><rect x="163.65" y="814.60" width="0.8" height="2" fill="#3e7d3a"/><rect x="164.60" y="815.60" width="0.8" height="1" fill="#3e7d3a"/><rect x="165.55" y="815.60" width="0.8" height="1" fill="#3e7d3a"/><rect x="166.50" y="814.60" width="0.8" height="2" fill="#3e7d3a"/><rect x="167.45" y="814.10" width="0.8" height="2.5" fill="#3e7d3a"/><rect x="168.40" y="814.10" width="0.8" height="2.5" fill="#3e7d3a"/><rect x="169.35" y="814.60" width="0.8" height="2" fill="#3e7d3a"/><rect x="170.30" y="813.10" width="0.8" height="3.5" fill="#3e7d3a"/><rect x="171.25" y="816.10" width="0.8" height="0.5" fill="#3e7d3a"/><rect x="172.20" y="815.10" width="0.8" height="1.5" fill="#3e7d3a"/><rect x="173.15" y="813.10" width="0.8" height="3.5" fill="#3e7d3a"/><rect x="174.10" y="813.60" width="0.8" height="3" fill="#3e7d3a"/><rect x="175.05" y="815.10" width="0.8" height="1.5" fill="#3e7d3a"/><rect x="176.00" y="815.60" width="0.8" height="1" fill="#3e7d3a"/><rect x="176.95" y="815.60" width="0.8" height="1" fill="#3e7d3a"/><rect x="177.90" y="816.10" width="0.8" height="0.5" fill="#3e7d3a"/><rect x="178.85" y="816.10" width="0.8" height="0.5" fill="#3e7d3a"/><rect x="179.80" y="816.10" width="0.8" height="0.5" fill="#3e7d3a"/><rect x="180.75" y="815.10" width="0.8" height="1.5" fill="#3e7d3a"/><rect x="181.70" y="815.60" width="0.8" height="1" fill="#3e7d3a"/><rect x="182.65" y="814.60" width="0.8" height="2" fill="#3e7d3a"/><rect x="183.60" y="815.60" width="0.8" height="1" fill="#3e7d3a"/><rect x="184.55" y="815.60" width="0.8" height="1" fill="#3e7d3a"/><rect x="185.50" y="814.10" width="0.8" height="2.5" fill="#3e7d3a"/><rect x="186.45" y="816.10" width="0.8" height="0.5" fill="#3e7d3a"/><rect x="187.40" y="813.60" width="0.8" height="3" fill="#3e7d3a"/><rect x="188.35" y="815.60" width="0.8" height="1" fill="#3e7d3a"/><rect x="189.30" y="815.60" width="0.8" height="1" fill="#3e7d3a"/><rect x="190.25" y="815.60" width="0.8" height="1" fill="#3e7d3a"/><rect x="191.20" y="815.60" width="0.8" height="1" fill="#3e7d3a"/><rect x="192.15" y="813.60" width="0.8" height="3" fill="#3e7d3a"/><rect x="193.10" y="815.10" width="0.8" height="1.5" fill="#3e7d3a"/><rect x="194.05" y="815.10" width="0.8" height="1.5" fill="#3e7d3a"/><rect x="195.00" y="815.10" width="0.8" height="1.5" fill="#3e7d3a"/><rect x="195.95" y="813.60" width="0.8" height="3" fill="#3e7d3a"/><rect x="196.90" y="814.60" width="0.8" height="2" fill="#3e7d3a"/><rect x="197.85" y="815.10" width="0.8" height="1.5" fill="#3e7d3a"/><rect x="198.80" y="814.10" width="0.8" height="2.5" fill="#3e7d3a"/><rect x="199.75" y="813.60" width="0.8" height="3" fill="#3e7d3a"/><rect x="200.70" y="814.60" width="0.8" height="2" fill="#3e7d3a"/><rect x="201.65" y="814.10" width="0.8" height="2.5" fill="#3e7d3a"/><rect x="202.60" y="814.60" width="0.8" height="2" fill="#3e7d3a"/><rect x="203.55" y="816.10" width="0.8" height="0.5" fill="#3e7d3a"/><rect x="204.50" y="814.60" width="0.8" height="2" fill="#3e7d3a"/><rect x="205.45" y="813.60" width="0.8" height="3" fill="#3e7d3a"/><rect x="206.40" y="814.60" width="0.8" height="2" fill="#3e7d3a"/><rect x="207.35" y="815.60" width="0.8" height="1" fill="#3e7d3a"/><rect x="208.30" y="815.10" width="0.8" height="1.5" fill="#3e7d3a"/><rect x="209.25" y="814.10" width="0.8" height="2.5" fill="#3e7d3a"/><rect x="210.20" y="814.10" width="0.8" height="2.5" fill="#3e7d3a"/><rect x="211.15" y="814.10" width="0.8" height="2.5" fill="#3e7d3a"/><rect x="212.10" y="815.60" width="0.8" height="1" fill="#3e7d3a"/><rect x="213.05" y="815.60" width="0.8" height="1" fill="#3e7d3a"/><rect x="150" y="782.6" width="1" height="34" fill="#2f6f2f"/><rect x="151" y="793.6" width="1" height="23" fill="#2f6f2f"/><rect x="156.5" y="797.6" width="1" height="19" fill="#d98b5f"/><rect x="157.5" y="799.6" width="1" height="17" fill="#3e7d3a"/><rect x="155" y="808.6" width="1" height="8" fill="#3e7d3a"/><rect x="159" y="802.6" width="1" height="14" fill="#3e7d3a"/><rect x="169" y="809.6" width="1" height="7" fill="#3e7d3a"/><rect x="178" y="805.6" width="1" height="11" fill="#3e7d3a"/><rect x="160" y="808.6" width="1" height="8" fill="#4a8a45"/><rect x="202" y="785.6" width="2" height="0.8" fill="#e39a70"/><rect x="205" y="785.6" width="14" height="0.7" fill="#bbb"/><rect x="174" y="821.4" width="10" height="0.8" fill="#999"/><rect x="187" y="821.4" width="36" height="0.8" fill="#bbb"/><rect x="131" y="827.4" width="11" height="0.9" fill="#999"/><rect x="178" y="841" width="3" height="0.8" fill="#c8c8c8"/><rect x="116" y="908" width="128" height="200" fill="#fff"/><rect x="131" y="916.6" width="22" height="0.8" fill="#c8c8c8"/><rect x="155" y="916.6" width="76" height="0.8" fill="#b8b8b8"/><rect x="131" y="921.2" width="10" height="1.3" fill="#b4d89a"/><rect x="141" y="921.2" width="87" height="1.3" fill="#a0a0a0"/><rect x="131" y="923.6" width="96" height="1.3" fill="#a0a0a0"/><rect x="131" y="926" width="16" height="1.3" fill="#a0a0a0"/><defs><clipPath id="th8a"><rect x="143.7" y="929" width="53.7" height="61.2"/></clipPath><clipPath id="th8b"><rect x="143.7" y="1003" width="53.7" height="62"/></clipPath></defs><g clip-path="url(#th8a)"><rect x="143.7" y="929" width="53.7" height="61.2" fill="#f0f0f0"/><g transform="matrix(0.0824,0,0,0.0815,81.9,906.8)"><polygon points="690.0,313.0 750.0,309.7 762.8,300.3 767.8,300.3 772.2,301.4 782.2,306.1 790.0,306.1 794.4,300.8 802.2,296.7 806.7,297.8 808.3,302.2 807.8,303.9 798.3,313.3 801.6,324.0 796.0,334.8 801.6,345.7 800.9,361.3 792.0,375.8 783.5,395.0 777.5,407.0 771.5,428.7 765.5,440.8 759.4,450.4 752.2,457.6 740.0,462.0 720.0,472.0 700.0,492.0 690.0,496.0" fill="#ffffff" stroke="#9a9a9a" stroke-width="0.6"/><polygon points="735.0,336.0 748.0,332.0 761.9,332.4 756.0,336.0 749.8,338.4 738.0,340.0" fill="#f0f0f0" stroke="#9a9a9a" stroke-width="0.6"/><polygon points="1168.0,240.0 1176.1,272.0 1183.3,275.8 1200.2,280.6 1212.2,284.3 1219.4,292.7 1238.7,302.3 1260.3,305.9 1306.0,297.5 1319.3,298.7 1316.5,284.0 1318.0,272.0 1326.0,240.0" fill="#ffffff" stroke="#9a9a9a" stroke-width="0.6"/><polygon points="772.0,509.2 770.0,525.4 765.5,544.9 763.6,550.0 774.0,550.0 780.4,554.0 790.8,565.6 805.0,583.8 815.4,599.3 823.2,613.6 827.5,620.0 836.0,635.0 837.5,645.0 845.0,655.0 862.5,665.0 875.0,677.5 878.8,685.0 890.0,708.8 888.0,725.0 892.5,742.5 897.5,753.8 910.0,770.0 921.2,775.0 930.0,781.5 941.1,791.7 949.4,807.4 953.1,820.4 963.3,835.2 976.3,850.0 981.2,850.0 985.0,857.5 987.5,865.0 993.8,876.2 997.5,885.0 1001.7,905.2 1004.3,926.0 1006.9,946.7 1012.1,972.7 1017.3,988.2 1032.9,993.4 1056.2,988.2 1071.8,983.0 1085.0,980.4 1111.3,970.0 1145.0,953.2 1165.7,951.9 1178.7,938.9 1194.3,931.1 1235.7,918.2 1266.9,906.5 1268.2,893.5 1277.2,881.9 1292.8,876.7 1316.1,870.2 1323.9,866.3 1342.0,868.9 1355.0,858.5 1356.3,848.2 1362.8,843.0 1386.1,840.4 1393.9,827.4 1403.0,815.7 1436.0,813.0 1459.0,782.6 1498.0,743.0 1530.0,740.0 1530.0,1090.0 1248.0,1090.0 1248.0,1023.0 1241.0,1017.0 1230.0,1013.0 1216.3,1019.3 1155.0,1040.0 1038.0,1047.0 1004.0,1020.0 1014.7,1009.0 1006.9,990.8 983.6,972.7 962.8,949.3 931.7,928.6 921.4,920.8 916.2,913.0 911.0,919.5 900.6,897.4 894.1,881.9 885.0,856.0 874.7,837.8 864.3,830.0 853.9,820.9 843.5,811.9 838.4,780.7 836.2,755.0 836.2,747.5 830.0,737.5 828.0,724.3 822.8,715.2 793.0,691.9 787.8,681.5 787.8,669.9 794.3,668.6 778.8,652.5 765.0,627.5 761.0,620.0 750.3,600.0 700.0,512.0 694.0,504.0 698.0,502.0 750.3,558.5 751.9,557.8 757.7,552.6 758.4,544.9 763.6,531.9 767.5,515.0" fill="#ffffff" stroke="#a0a0a0" stroke-width="0.6"/><polygon points="1300.6,996.0 1310.0,990.0 1323.9,989.5 1333.0,996.0 1316.1,1002.4 1303.2,1001.1" fill="#f0f0f0" stroke="#a0a0a0" stroke-width="0.6"/><polygon points="1161.0,495.6 1173.8,493.8 1174.4,485.0 1183.8,490.0 1192.5,493.0 1203.8,489.4 1207.5,491.0 1211.0,499.4 1222.0,510.0 1223.8,518.8 1230.0,522.5 1230.0,527.0 1234.4,530.0 1237.5,540.0 1245.0,553.0 1252.5,556.0 1263.8,557.5 1276.0,565.0 1281.0,570.0 1286.0,574.0 1301.0,580.6 1310.0,588.0 1327.5,589.4 1340.0,594.4 1355.0,587.5 1370.0,580.0 1387.5,575.6 1396.0,576.0 1402.5,582.5 1440.0,600.0 1480.0,615.0 1530.0,625.0 1530.0,705.0 1498.0,711.6 1428.0,676.0 1402.5,661.2 1392.5,650.0 1387.5,638.8 1386.2,620.0 1388.8,605.0 1387.5,599.4 1380.0,607.5 1373.8,615.0 1360.0,625.0 1352.5,632.5 1338.8,645.0 1336.2,650.0 1328.8,655.0 1320.0,662.5 1313.8,663.8 1280.0,662.5 1257.5,666.2 1251.2,661.2 1245.0,657.5 1243.8,650.0 1250.0,635.0 1249.4,613.8 1240.0,605.6 1232.5,610.0 1227.5,623.8 1227.5,645.0 1226.0,642.5 1220.0,628.8 1211.0,619.0 1205.0,607.5 1211.0,601.0 1207.5,590.0 1201.0,585.0 1191.0,576.0 1180.0,567.5 1170.0,555.0 1158.8,536.9 1158.8,532.5 1152.5,525.0 1150.0,515.0 1141.0,512.5 1147.5,507.5 1157.5,500.0" fill="#ffffff" stroke="#a0a0a0" stroke-width="0.6"/><polygon points="772.0,509.2 803.8,517.6 825.0,498.8 845.0,495.0 851.2,485.0 859.4,480.6 833.1,451.9 860.0,445.6 887.5,437.5 895.6,433.1 928.8,438.8 1052.5,516.9 1088.8,520.6 1105.0,520.6 1132.5,523.8 1139.4,536.9 1158.8,536.9 1166.0,550.0 1170.0,555.0 1180.0,567.5 1191.0,576.0 1201.0,585.0 1207.5,590.0 1211.0,601.0 1205.0,607.5 1211.0,619.0 1220.0,628.8 1226.0,642.5 1233.8,652.5 1242.5,653.8 1245.0,657.5 1250.0,660.0 1278.8,696.2 1353.8,705.0 1366.7,725.0 1347.7,780.6 1262.4,810.4 1178.4,821.9 1152.5,835.0 1132.5,861.2 1128.8,865.0 1120.0,868.8 1111.2,860.0 1092.5,860.0 1065.0,855.6 1038.8,856.2 1030.0,858.8 1015.0,852.5 1012.5,857.5 1011.2,870.0 1010.0,877.5 997.5,884.4 993.8,876.2 987.5,865.0 985.0,857.5 981.2,850.0 976.3,850.0 963.3,835.2 953.1,820.4 949.4,807.4 941.1,791.7 930.0,781.5 921.2,775.0 910.0,770.0 897.5,753.8 892.5,742.5 888.0,725.0 890.0,708.8 878.8,685.0 875.0,677.5 862.5,665.0 845.0,655.0 837.5,645.0 836.0,635.0 827.5,620.0 823.2,613.6 815.4,599.3 805.0,583.8 790.8,565.6 780.4,554.0 774.0,550.0 763.6,550.0 765.5,544.9 770.0,525.4" fill="#e0e0e0"/><polygon points="1060.0,566.0 1067.5,573.8 1086.0,584.0 1108.8,592.0 1121.0,598.0 1132.0,602.5 1132.5,637.5 1135.0,650.0 1152.5,660.0 1156.0,675.0 1152.8,702.2 1147.6,733.3 1143.7,770.0 1138.8,795.6 1102.5,800.0 1071.2,803.0 1047.5,796.2 1037.5,787.5 1031.2,777.5 1032.5,765.0 1022.5,753.8 1015.0,740.0 1017.5,723.8 1017.5,710.0 1010.0,708.8 1007.5,709.2 1003.3,707.5 1004.2,700.8 1002.5,698.3 985.8,696.7 978.3,675.8 974.2,673.3 974.2,668.3 975.4,654.2 977.5,649.2 981.7,644.6 988.3,646.2 999.2,647.0 1005.0,646.7 1007.5,644.0 1006.7,640.0 1010.0,635.8 1016.2,631.0 1033.8,622.5 1053.8,621.0 1052.5,611.0 1043.8,598.8 1043.8,591.0 1056.0,580.0 1050.0,573.8 1050.0,567.5" fill="#cccccc"/></g></g><circle cx="136" cy="934" r="2.6" fill="#8fc3a0"/><rect x="133" y="936" width="6" height="2" fill="#6a8fb5"/><rect x="131" y="942" width="3.4" height="2.8" fill="#3d8f5a"/><rect x="131" y="947" width="3.4" height="2.8" fill="#67b22f"/><rect x="131" y="951" width="3.4" height="2.8" fill="#7ebcc3"/><rect x="131" y="955" width="3.4" height="2.8" fill="#b2d06e"/><rect x="131" y="959" width="3.4" height="2.8" fill="#1d6987"/><rect x="131" y="963" width="3.4" height="2.8" fill="#217a32"/><rect x="199.3" y="929.0" width="9.8" height="9.6" fill="#eeeeee"/><rect x="201.5" y="932.0" width="6" height="4.5" fill="#dadada"/><circle cx="204.5" cy="934.0" r="1.4" fill="#86c35e"/><rect x="209.70000000000002" y="929.0" width="9.8" height="9.6" fill="#eeeeee"/><rect x="211.9" y="932.0" width="6" height="4.5" fill="#dadada"/><circle cx="214.9" cy="934.0" r="1.4" fill="#86c35e"/><rect x="199.3" y="939.3" width="9.8" height="9.6" fill="#eeeeee"/><rect x="201.5" y="942.3" width="6" height="4.5" fill="#dadada"/><circle cx="204.5" cy="944.3" r="1.4" fill="#86c35e"/><rect x="209.70000000000002" y="939.3" width="9.8" height="9.6" fill="#eeeeee"/><rect x="211.9" y="942.3" width="6" height="4.5" fill="#dadada"/><circle cx="214.9" cy="944.3" r="1.4" fill="#86c35e"/><rect x="199.3" y="949.6" width="9.8" height="9.6" fill="#eeeeee"/><rect x="201.5" y="952.6" width="6" height="4.5" fill="#dadada"/><circle cx="204.5" cy="954.6" r="2.4" fill="#86c35e"/><rect x="209.70000000000002" y="949.6" width="9.8" height="9.6" fill="#eeeeee"/><rect x="211.9" y="952.6" width="6" height="4.5" fill="#dadada"/><circle cx="214.9" cy="954.6" r="2.4" fill="#86c35e"/><rect x="199.3" y="959.9" width="9.8" height="9.6" fill="#eeeeee"/><rect x="201.5" y="962.9" width="6" height="4.5" fill="#dadada"/><circle cx="204.5" cy="964.9" r="2.4" fill="#86c35e"/><rect x="209.70000000000002" y="959.9" width="9.8" height="9.6" fill="#eeeeee"/><rect x="211.9" y="962.9" width="6" height="4.5" fill="#dadada"/><circle cx="214.9" cy="964.9" r="2.4" fill="#86c35e"/><rect x="199.3" y="970.2" width="9.8" height="9.6" fill="#eeeeee"/><rect x="201.5" y="973.2" width="6" height="4.5" fill="#dadada"/><circle cx="204.5" cy="975.2" r="2.4" fill="#86c35e"/><rect x="209.70000000000002" y="970.2" width="9.8" height="9.6" fill="#eeeeee"/><rect x="211.9" y="973.2" width="6" height="4.5" fill="#dadada"/><circle cx="214.9" cy="975.2" r="2.4" fill="#86c35e"/><rect x="199.3" y="980.5" width="9.8" height="9.6" fill="#eeeeee"/><rect x="201.5" y="983.5" width="6" height="4.5" fill="#dadada"/><circle cx="204.5" cy="985.5" r="2.4" fill="#86c35e"/><rect x="209.70000000000002" y="980.5" width="9.8" height="9.6" fill="#eeeeee"/><rect x="211.9" y="983.5" width="6" height="4.5" fill="#dadada"/><circle cx="214.9" cy="985.5" r="2.4" fill="#86c35e"/><rect x="131" y="995.2" width="10" height="0.8" fill="#aaa"/><rect x="131" y="998.6" width="10" height="1.3" fill="#b4d89a"/><rect x="141" y="998.6" width="87" height="1.3" fill="#a0a0a0"/><rect x="131" y="1001" width="40" height="1.3" fill="#a0a0a0"/><g clip-path="url(#th8b)"><rect x="143.7" y="1003" width="53.7" height="62" fill="#f0f0f0"/><g transform="matrix(0.0795,0,0,0.078,88.3,986.9)"><polygon points="690.0,313.0 750.0,309.7 762.8,300.3 767.8,300.3 772.2,301.4 782.2,306.1 790.0,306.1 794.4,300.8 802.2,296.7 806.7,297.8 808.3,302.2 807.8,303.9 798.3,313.3 801.6,324.0 796.0,334.8 801.6,345.7 800.9,361.3 792.0,375.8 783.5,395.0 777.5,407.0 771.5,428.7 765.5,440.8 759.4,450.4 752.2,457.6 740.0,462.0 720.0,472.0 700.0,492.0 690.0,496.0" fill="#ffffff" stroke="#9a9a9a" stroke-width="0.6"/><polygon points="735.0,336.0 748.0,332.0 761.9,332.4 756.0,336.0 749.8,338.4 738.0,340.0" fill="#f0f0f0" stroke="#9a9a9a" stroke-width="0.6"/><polygon points="1168.0,240.0 1176.1,272.0 1183.3,275.8 1200.2,280.6 1212.2,284.3 1219.4,292.7 1238.7,302.3 1260.3,305.9 1306.0,297.5 1319.3,298.7 1316.5,284.0 1318.0,272.0 1326.0,240.0" fill="#ffffff" stroke="#9a9a9a" stroke-width="0.6"/><polygon points="772.0,509.2 770.0,525.4 765.5,544.9 763.6,550.0 774.0,550.0 780.4,554.0 790.8,565.6 805.0,583.8 815.4,599.3 823.2,613.6 827.5,620.0 836.0,635.0 837.5,645.0 845.0,655.0 862.5,665.0 875.0,677.5 878.8,685.0 890.0,708.8 888.0,725.0 892.5,742.5 897.5,753.8 910.0,770.0 921.2,775.0 930.0,781.5 941.1,791.7 949.4,807.4 953.1,820.4 963.3,835.2 976.3,850.0 981.2,850.0 985.0,857.5 987.5,865.0 993.8,876.2 997.5,885.0 1001.7,905.2 1004.3,926.0 1006.9,946.7 1012.1,972.7 1017.3,988.2 1032.9,993.4 1056.2,988.2 1071.8,983.0 1085.0,980.4 1111.3,970.0 1145.0,953.2 1165.7,951.9 1178.7,938.9 1194.3,931.1 1235.7,918.2 1266.9,906.5 1268.2,893.5 1277.2,881.9 1292.8,876.7 1316.1,870.2 1323.9,866.3 1342.0,868.9 1355.0,858.5 1356.3,848.2 1362.8,843.0 1386.1,840.4 1393.9,827.4 1403.0,815.7 1436.0,813.0 1459.0,782.6 1498.0,743.0 1530.0,740.0 1530.0,1090.0 1248.0,1090.0 1248.0,1023.0 1241.0,1017.0 1230.0,1013.0 1216.3,1019.3 1155.0,1040.0 1038.0,1047.0 1004.0,1020.0 1014.7,1009.0 1006.9,990.8 983.6,972.7 962.8,949.3 931.7,928.6 921.4,920.8 916.2,913.0 911.0,919.5 900.6,897.4 894.1,881.9 885.0,856.0 874.7,837.8 864.3,830.0 853.9,820.9 843.5,811.9 838.4,780.7 836.2,755.0 836.2,747.5 830.0,737.5 828.0,724.3 822.8,715.2 793.0,691.9 787.8,681.5 787.8,669.9 794.3,668.6 778.8,652.5 765.0,627.5 761.0,620.0 750.3,600.0 700.0,512.0 694.0,504.0 698.0,502.0 750.3,558.5 751.9,557.8 757.7,552.6 758.4,544.9 763.6,531.9 767.5,515.0" fill="#ffffff" stroke="#a0a0a0" stroke-width="0.6"/><polygon points="1300.6,996.0 1310.0,990.0 1323.9,989.5 1333.0,996.0 1316.1,1002.4 1303.2,1001.1" fill="#f0f0f0" stroke="#a0a0a0" stroke-width="0.6"/><polygon points="1161.0,495.6 1173.8,493.8 1174.4,485.0 1183.8,490.0 1192.5,493.0 1203.8,489.4 1207.5,491.0 1211.0,499.4 1222.0,510.0 1223.8,518.8 1230.0,522.5 1230.0,527.0 1234.4,530.0 1237.5,540.0 1245.0,553.0 1252.5,556.0 1263.8,557.5 1276.0,565.0 1281.0,570.0 1286.0,574.0 1301.0,580.6 1310.0,588.0 1327.5,589.4 1340.0,594.4 1355.0,587.5 1370.0,580.0 1387.5,575.6 1396.0,576.0 1402.5,582.5 1440.0,600.0 1480.0,615.0 1530.0,625.0 1530.0,705.0 1498.0,711.6 1428.0,676.0 1402.5,661.2 1392.5,650.0 1387.5,638.8 1386.2,620.0 1388.8,605.0 1387.5,599.4 1380.0,607.5 1373.8,615.0 1360.0,625.0 1352.5,632.5 1338.8,645.0 1336.2,650.0 1328.8,655.0 1320.0,662.5 1313.8,663.8 1280.0,662.5 1257.5,666.2 1251.2,661.2 1245.0,657.5 1243.8,650.0 1250.0,635.0 1249.4,613.8 1240.0,605.6 1232.5,610.0 1227.5,623.8 1227.5,645.0 1226.0,642.5 1220.0,628.8 1211.0,619.0 1205.0,607.5 1211.0,601.0 1207.5,590.0 1201.0,585.0 1191.0,576.0 1180.0,567.5 1170.0,555.0 1158.8,536.9 1158.8,532.5 1152.5,525.0 1150.0,515.0 1141.0,512.5 1147.5,507.5 1157.5,500.0" fill="#ffffff" stroke="#a0a0a0" stroke-width="0.6"/><polygon points="772.0,509.2 803.8,517.6 825.0,498.8 845.0,495.0 851.2,485.0 859.4,480.6 833.1,451.9 860.0,445.6 887.5,437.5 895.6,433.1 928.8,438.8 1052.5,516.9 1088.8,520.6 1105.0,520.6 1132.5,523.8 1139.4,536.9 1158.8,536.9 1166.0,550.0 1170.0,555.0 1180.0,567.5 1191.0,576.0 1201.0,585.0 1207.5,590.0 1211.0,601.0 1205.0,607.5 1211.0,619.0 1220.0,628.8 1226.0,642.5 1233.8,652.5 1242.5,653.8 1245.0,657.5 1250.0,660.0 1278.8,696.2 1353.8,705.0 1366.7,725.0 1347.7,780.6 1262.4,810.4 1178.4,821.9 1152.5,835.0 1132.5,861.2 1128.8,865.0 1120.0,868.8 1111.2,860.0 1092.5,860.0 1065.0,855.6 1038.8,856.2 1030.0,858.8 1015.0,852.5 1012.5,857.5 1011.2,870.0 1010.0,877.5 997.5,884.4 993.8,876.2 987.5,865.0 985.0,857.5 981.2,850.0 976.3,850.0 963.3,835.2 953.1,820.4 949.4,807.4 941.1,791.7 930.0,781.5 921.2,775.0 910.0,770.0 897.5,753.8 892.5,742.5 888.0,725.0 890.0,708.8 878.8,685.0 875.0,677.5 862.5,665.0 845.0,655.0 837.5,645.0 836.0,635.0 827.5,620.0 823.2,613.6 815.4,599.3 805.0,583.8 790.8,565.6 780.4,554.0 774.0,550.0 763.6,550.0 765.5,544.9 770.0,525.4" fill="#dcdcdc"/></g></g><circle cx="136" cy="1008" r="2.6" fill="#8fc3a0"/><rect x="133" y="1010" width="6" height="2" fill="#6a8fb5"/><rect x="131" y="1018" width="3.4" height="2.8" fill="#f7e0b0"/><rect x="131" y="1022" width="3.4" height="2.8" fill="#efbb82"/><rect x="131" y="1026" width="3.4" height="2.8" fill="#e3915e"/><rect x="131" y="1030" width="3.4" height="2.8" fill="#d66a45"/><rect x="199.3" y="1003.0" width="9.8" height="9.6" fill="#efefef"/><polygon points="200.5,1005.5 205.0,1004.5 208.5,1009.0 207.0,1011.5 203.0,1011.0" fill="#f0c48e"/><rect x="209.70000000000002" y="1003.0" width="9.8" height="9.6" fill="#efefef"/><polygon points="210.9,1005.5 215.4,1004.5 218.9,1009.0 217.4,1011.5 213.4,1011.0" fill="#e59a6c"/><rect x="199.3" y="1013.3" width="9.8" height="9.6" fill="#efefef"/><polygon points="200.5,1015.8 205.0,1014.8 208.5,1019.3 207.0,1021.8 203.0,1021.3" fill="#e59a6c"/><rect x="209.70000000000002" y="1013.3" width="9.8" height="9.6" fill="#efefef"/><polygon points="210.9,1015.8 215.4,1014.8 218.9,1019.3 217.4,1021.8 213.4,1021.3" fill="#e59a6c"/><rect x="199.3" y="1023.6" width="9.8" height="9.6" fill="#efefef"/><polygon points="200.5,1026.1 205.0,1025.1 208.5,1029.6 207.0,1032.1 203.0,1031.6" fill="#e59a6c"/><rect x="209.70000000000002" y="1023.6" width="9.8" height="9.6" fill="#efefef"/><polygon points="210.9,1026.1 215.4,1025.1 218.9,1029.6 217.4,1032.1 213.4,1031.6" fill="#f0c48e"/><rect x="199.3" y="1033.9" width="9.8" height="9.6" fill="#efefef"/><polygon points="200.5,1036.4 205.0,1035.4 208.5,1039.9 207.0,1042.4 203.0,1041.9" fill="#f0c48e"/><rect x="209.70000000000002" y="1033.9" width="9.8" height="9.6" fill="#efefef"/><polygon points="210.9,1036.4 215.4,1035.4 218.9,1039.9 217.4,1042.4 213.4,1041.9" fill="#e59a6c"/><rect x="199.3" y="1044.2" width="9.8" height="9.6" fill="#efefef"/><polygon points="200.5,1046.7 205.0,1045.7 208.5,1050.2 207.0,1052.7 203.0,1052.2" fill="#e59a6c"/><rect x="209.70000000000002" y="1044.2" width="9.8" height="9.6" fill="#efefef"/><polygon points="210.9,1046.7 215.4,1045.7 218.9,1050.2 217.4,1052.7 213.4,1052.2" fill="#e59a6c"/><rect x="199.3" y="1054.5" width="9.8" height="9.6" fill="#efefef"/><polygon points="200.5,1057.0 205.0,1056.0 208.5,1060.5 207.0,1063.0 203.0,1062.5" fill="#e59a6c"/><rect x="209.70000000000002" y="1054.5" width="9.8" height="9.6" fill="#efefef"/><polygon points="210.9,1057.0 215.4,1056.0 218.9,1060.5 217.4,1063.0 213.4,1062.5" fill="#f0c48e"/></svg></div><div class="abs" style="left:360px;top:67px;width:1px;height:1013px;background:#5f6061"></div>
<div class="abs" style="left:419px;top:67px;width:8px;height:1013px;background:linear-gradient(to right,#282828,#1f1f1f)"></div>
<div class="abs" style="left:427px;top:67px;width:1px;height:1013px;background:#111"></div>
<div class="abs" style="left:1857px;top:67px;width:8px;height:1013px;background:linear-gradient(to left,#282828,#1f1f1f)"></div>
<div class="abs" style="left:1856px;top:67px;width:1px;height:1013px;background:#111"></div>
<div class="abs" style="left:428px;top:67px;width:1428px;height:1013px;background:#fff"></div>
<div class="abs" style="left:591px;top:97.8px;width:1101px;height:1.4px;background:#c6c6c6"></div>
<svg class="abs" style="left:590px;top:275px" width="160" height="490" viewBox="590 275 160 490"><path d="M622.4,288.4 L627.6,286.7 L633.7,291.1 L641.6,286.3 L646.8,287.6 L653.7,284.1 L660.7,285 L665.9,289.3 L669.4,295.4 L667.7,300.6 L672.9,306.7 L671.1,311.1 L667.7,314.6 L671.1,318.9 L665.9,323.3 L653.7,326.7 L645.9,325 L641.6,321.5 L638.1,316.3 L633.7,317.2 L631.1,323.3 L622.4,326.7 L616.3,321.5 L617.2,316.3 L624.1,315.4 L624.1,308.5 L620.7,304.1 L625,299.8 L620.7,293.7Z" fill="#b3d58f"/><g fill="none" stroke="#1d3a8c" stroke-width="1.25" stroke-linecap="round"><path d="M617.6,296.7 Q635,287 662.4,289.3"/><path d="M612.8,308 Q640,299 674.6,305"/><path d="M613.7,322.4 Q645,322 674.6,315.4"/><path d="M613.7,303.2 Q609,316 621.5,333.7"/><path d="M631.1,283.2 Q620,300 628.5,331.1"/><path d="M638.5,282.4 Q640,302 643.3,321.5"/><path d="M644.2,281.5 Q661,295 659.8,318.9"/><path d="M657.2,285 Q682,303 669.4,323.3"/></g><text x="631.2" y="349.4" font-family="Liberation Serif" font-size="41" fill="#1d3a8c">e</text><path d="M664.2,333.2 C662.8,330.4 660.6,329.8 658.8,329.8 C654.4,329.8 651.6,334.2 651.6,339.8 C651.6,345.6 654.8,349.4 659.4,349.4 C661.8,349.4 663.6,348.2 664.8,346.6" fill="none" stroke="#6bb42f" stroke-width="2.9"/><ellipse cx="674.3" cy="339.6" rx="8.2" ry="9.4" fill="none" stroke="#6bb42f" stroke-width="2.9"/><path d="M682.6,348.4 C683.4,338 684,328 687.2,320 C688.4,316.8 687.6,314 686.2,312.4" fill="none" stroke="#6bb42f" stroke-width="2.9"/><ellipse cx="689.2" cy="312.4" rx="4.6" ry="2.4" transform="rotate(-12 689.2 312.4)" fill="#6bb42f"/><path d="M709.6,333.6 C708,330.8 705,329.6 702,329.6 C696,329.6 692.2,334.2 692.2,339.8 C692.2,345.8 696,349.4 701.4,349.4 C704.8,349.4 707.6,347.8 709.6,345.4" fill="none" stroke="#1d3a8c" stroke-width="2.9"/><rect x="632" y="355.9" width="19.1" height="13" fill="#1f3f95"/><circle cx="645.55" cy="362.40" r="0.5" fill="#f1d94a"/><circle cx="645.01" cy="364.40" r="0.5" fill="#f1d94a"/><circle cx="643.55" cy="365.86" r="0.5" fill="#f1d94a"/><circle cx="641.55" cy="366.40" r="0.5" fill="#f1d94a"/><circle cx="639.55" cy="365.86" r="0.5" fill="#f1d94a"/><circle cx="638.09" cy="364.40" r="0.5" fill="#f1d94a"/><circle cx="637.55" cy="362.40" r="0.5" fill="#f1d94a"/><circle cx="638.09" cy="360.40" r="0.5" fill="#f1d94a"/><circle cx="639.55" cy="358.94" r="0.5" fill="#f1d94a"/><circle cx="641.55" cy="358.40" r="0.5" fill="#f1d94a"/><circle cx="643.55" cy="358.94" r="0.5" fill="#f1d94a"/><circle cx="645.01" cy="360.40" r="0.5" fill="#f1d94a"/><text x="655.5" y="360.1" font-family="Liberation Sans" font-size="4.9" fill="#2b4b9b" textLength="54.4" lengthAdjust="spacingAndGlyphs">EUROPEAN CENTRE FOR</text><text x="655.5" y="364.6" font-family="Liberation Sans" font-size="4.9" fill="#2b4b9b" textLength="47" lengthAdjust="spacingAndGlyphs">DISEASE PREVENTION</text><text x="655.5" y="369.1" font-family="Liberation Sans" font-size="4.9" fill="#2b4b9b" textLength="34" lengthAdjust="spacingAndGlyphs">AND CONTROL</text><path d="M617.00,435.30L636.50,435.30A19.50,19.50 0 0 1 622.70,453.95Z" fill="#217a32"/><path d="M617.00,435.30L622.70,453.95A19.50,19.50 0 0 1 599.78,444.45Z" fill="#1d6987"/><path d="M617.00,435.30L599.78,444.45A19.50,19.50 0 0 1 600.83,424.40Z" fill="#b2d06e"/><path d="M617.00,435.30L600.83,424.40A19.50,19.50 0 0 1 622.70,416.65Z" fill="#7ebcc3"/><path d="M617.00,435.30L622.70,416.65A19.50,19.50 0 0 1 636.50,435.30Z" fill="#67b22f"/><rect x="597.1" y="463" width="39.4" height="18.8" fill="#67b22f"/><rect x="597.1" y="490" width="39.4" height="18.8" fill="#7ebcc3"/><rect x="597.1" y="520.8" width="39.4" height="18.8" fill="#b2d06e"/><rect x="597.1" y="551.4" width="39.4" height="18.8" fill="#1d6987"/><rect x="597.1" y="578.1" width="39.4" height="18.8" fill="#217a32"/><circle cx="619.3" cy="659.9" r="22.1" fill="none" stroke="#6e6e6e" stroke-width="0.7"/><line x1="619.3" y1="637.8" x2="647" y2="637.8" stroke="#a8a8a8" stroke-width="0.7"/><circle cx="619.3" cy="668.0" r="14" fill="none" stroke="#6e6e6e" stroke-width="0.7"/><line x1="619.3" y1="654.0" x2="647" y2="654.0" stroke="#a8a8a8" stroke-width="0.7"/><circle cx="619.3" cy="675.3" r="6.7" fill="none" stroke="#6e6e6e" stroke-width="0.7"/><line x1="619.3" y1="668.6" x2="647" y2="668.6" stroke="#a8a8a8" stroke-width="0.7"/><rect x="597.6" y="701" width="40" height="18.3" fill="#bdbdbd"/><rect x="597.9" y="729.3" width="39.4" height="18.8" fill="#dedede" stroke="#cfcfcf" stroke-width="0.6"/></svg>
<svg class="abs" style="left:750px;top:272px" width="652" height="748" viewBox="750 272 652 748"><rect x="750" y="272" width="652" height="748" fill="#f0f0f0"/><polygon points="690.0,313.0 750.0,309.7 762.8,300.3 767.8,300.3 772.2,301.4 782.2,306.1 790.0,306.1 794.4,300.8 802.2,296.7 806.7,297.8 808.3,302.2 807.8,303.9 798.3,313.3 801.6,324.0 796.0,334.8 801.6,345.7 800.9,361.3 792.0,375.8 783.5,395.0 777.5,407.0 771.5,428.7 765.5,440.8 759.4,450.4 752.2,457.6 740.0,462.0 720.0,472.0 700.0,492.0 690.0,496.0" fill="#ffffff" stroke="#9a9a9a" stroke-width="0.6"/><polygon points="735.0,336.0 748.0,332.0 761.9,332.4 756.0,336.0 749.8,338.4 738.0,340.0" fill="#f0f0f0" stroke="#9a9a9a" stroke-width="0.6"/><polygon points="1168.0,240.0 1176.1,272.0 1183.3,275.8 1200.2,280.6 1212.2,284.3 1219.4,292.7 1238.7,302.3 1260.3,305.9 1306.0,297.5 1319.3,298.7 1316.5,284.0 1318.0,272.0 1326.0,240.0" fill="#ffffff" stroke="#9a9a9a" stroke-width="0.6"/><polygon points="772.0,509.2 770.0,525.4 765.5,544.9 763.6,550.0 774.0,550.0 780.4,554.0 790.8,565.6 805.0,583.8 815.4,599.3 823.2,613.6 827.5,620.0 836.0,635.0 837.5,645.0 845.0,655.0 862.5,665.0 875.0,677.5 878.8,685.0 890.0,708.8 888.0,725.0 892.5,742.5 897.5,753.8 910.0,770.0 921.2,775.0 930.0,781.5 941.1,791.7 949.4,807.4 953.1,820.4 963.3,835.2 976.3,850.0 981.2,850.0 985.0,857.5 987.5,865.0 993.8,876.2 997.5,885.0 1001.7,905.2 1004.3,926.0 1006.9,946.7 1012.1,972.7 1017.3,988.2 1032.9,993.4 1056.2,988.2 1071.8,983.0 1085.0,980.4 1111.3,970.0 1145.0,953.2 1165.7,951.9 1178.7,938.9 1194.3,931.1 1235.7,918.2 1266.9,906.5 1268.2,893.5 1277.2,881.9 1292.8,876.7 1316.1,870.2 1323.9,866.3 1342.0,868.9 1355.0,858.5 1356.3,848.2 1362.8,843.0 1386.1,840.4 1393.9,827.4 1403.0,815.7 1436.0,813.0 1459.0,782.6 1498.0,743.0 1530.0,740.0 1530.0,1090.0 1248.0,1090.0 1248.0,1023.0 1241.0,1017.0 1230.0,1013.0 1216.3,1019.3 1155.0,1040.0 1038.0,1047.0 1004.0,1020.0 1014.7,1009.0 1006.9,990.8 983.6,972.7 962.8,949.3 931.7,928.6 921.4,920.8 916.2,913.0 911.0,919.5 900.6,897.4 894.1,881.9 885.0,856.0 874.7,837.8 864.3,830.0 853.9,820.9 843.5,811.9 838.4,780.7 836.2,755.0 836.2,747.5 830.0,737.5 828.0,724.3 822.8,715.2 793.0,691.9 787.8,681.5 787.8,669.9 794.3,668.6 778.8,652.5 765.0,627.5 761.0,620.0 750.3,600.0 700.0,512.0 694.0,504.0 698.0,502.0 750.3,558.5 751.9,557.8 757.7,552.6 758.4,544.9 763.6,531.9 767.5,515.0" fill="#ffffff" stroke="#a0a0a0" stroke-width="0.6"/><polygon points="1300.6,996.0 1310.0,990.0 1323.9,989.5 1333.0,996.0 1316.1,1002.4 1303.2,1001.1" fill="#f0f0f0" stroke="#a0a0a0" stroke-width="0.6"/><polygon points="1161.0,495.6 1173.8,493.8 1174.4,485.0 1183.8,490.0 1192.5,493.0 1203.8,489.4 1207.5,491.0 1211.0,499.4 1222.0,510.0 1223.8,518.8 1230.0,522.5 1230.0,527.0 1234.4,530.0 1237.5,540.0 1245.0,553.0 1252.5,556.0 1263.8,557.5 1276.0,565.0 1281.0,570.0 1286.0,574.0 1301.0,580.6 1310.0,588.0 1327.5,589.4 1340.0,594.4 1355.0,587.5 1370.0,580.0 1387.5,575.6 1396.0,576.0 1402.5,582.5 1440.0,600.0 1480.0,615.0 1530.0,625.0 1530.0,705.0 1498.0,711.6 1428.0,676.0 1402.5,661.2 1392.5,650.0 1387.5,638.8 1386.2,620.0 1388.8,605.0 1387.5,599.4 1380.0,607.5 1373.8,615.0 1360.0,625.0 1352.5,632.5 1338.8,645.0 1336.2,650.0 1328.8,655.0 1320.0,662.5 1313.8,663.8 1280.0,662.5 1257.5,666.2 1251.2,661.2 1245.0,657.5 1243.8,650.0 1250.0,635.0 1249.4,613.8 1240.0,605.6 1232.5,610.0 1227.5,623.8 1227.5,645.0 1226.0,642.5 1220.0,628.8 1211.0,619.0 1205.0,607.5 1211.0,601.0 1207.5,590.0 1201.0,585.0 1191.0,576.0 1180.0,567.5 1170.0,555.0 1158.8,536.9 1158.8,532.5 1152.5,525.0 1150.0,515.0 1141.0,512.5 1147.5,507.5 1157.5,500.0" fill="#ffffff" stroke="#a0a0a0" stroke-width="0.6"/><polygon points="1217.6,603.8 1220.2,605.2 1220.8,610.2 1219.2,614.2 1217.4,611.0" fill="#f0f0f0" stroke="#a8a8a8" stroke-width="0.6"/><polygon points="1356.0,591.0 1364.0,585.5 1370.0,582.5 1382.5,581.0 1376.0,587.0 1372.5,590.0 1357.5,593.8" fill="#f0f0f0" stroke="#a8a8a8" stroke-width="0.6"/><polygon points="1296.5,584.6 1299.6,585.0 1299.0,587.0 1296.0,586.6" fill="#f0f0f0" stroke="#a8a8a8" stroke-width="0.6"/><polygon points="1317.0,592.4 1320.4,593.0 1320.0,594.8 1316.8,594.2" fill="#f0f0f0" stroke="#a8a8a8" stroke-width="0.6"/><polygon points="1333.0,600.0 1336.0,600.6 1335.4,602.6 1332.6,602.0" fill="#f0f0f0" stroke="#a8a8a8" stroke-width="0.6"/><polygon points="1323.8,631.0 1326.6,631.4 1326.2,633.4 1323.4,633.0" fill="#f0f0f0" stroke="#a8a8a8" stroke-width="0.6"/><polygon points="1269.4,650.6 1272.0,651.0 1271.6,653.0 1269.0,652.6" fill="#f0f0f0" stroke="#a8a8a8" stroke-width="0.6"/><polygon points="1277.2,655.8 1280.0,656.2 1279.6,658.2 1277.0,657.8" fill="#f0f0f0" stroke="#a8a8a8" stroke-width="0.6"/><polygon points="1310.0,662.0 1316.0,661.0 1316.5,663.4 1310.6,664.0" fill="#f0f0f0" stroke="#a8a8a8" stroke-width="0.6"/><polygon points="963.0,868.0 967.0,868.6 973.5,871.0 981.5,877.0 979.5,879.0 971.0,876.2 965.0,871.0" fill="#f0f0f0" stroke="#a8a8a8" stroke-width="0.6"/><polygon points="914.5,899.8 919.0,900.6 926.8,906.2 925.0,909.2 917.5,904.0" fill="#f0f0f0" stroke="#a8a8a8" stroke-width="0.6"/><polygon points="920.0,892.4 923.0,892.8 922.6,895.2 919.6,894.8" fill="#f0f0f0" stroke="#a8a8a8" stroke-width="0.6"/><polygon points="1263.4,1002.6 1266.0,1003.0 1265.6,1005.0 1263.0,1004.6" fill="#f0f0f0" stroke="#a8a8a8" stroke-width="0.6"/><polygon points="1271.0,1004.0 1273.6,1004.4 1273.2,1006.4 1270.6,1006.0" fill="#f0f0f0" stroke="#a8a8a8" stroke-width="0.6"/><polygon points="1290.4,1005.2 1293.0,1005.6 1292.6,1007.6 1290.0,1007.2" fill="#f0f0f0" stroke="#a8a8a8" stroke-width="0.6"/><polygon points="760.5,553.4 764.0,553.0 767.8,554.4 764.5,556.2 760.8,555.8" fill="#f0f0f0" stroke="#a8a8a8" stroke-width="0.6"/><polygon points="772.0,509.2 803.8,517.6 825.0,498.8 845.0,495.0 851.2,485.0 859.4,480.6 833.1,451.9 860.0,445.6 887.5,437.5 895.6,433.1 928.8,438.8 1052.5,516.9 1088.8,520.6 1105.0,520.6 1132.5,523.8 1139.4,536.9 1158.8,536.9 1166.0,550.0 1170.0,555.0 1180.0,567.5 1191.0,576.0 1201.0,585.0 1207.5,590.0 1211.0,601.0 1205.0,607.5 1211.0,619.0 1220.0,628.8 1226.0,642.5 1233.8,652.5 1242.5,653.8 1245.0,657.5 1250.0,660.0 1278.8,696.2 1353.8,705.0 1366.7,725.0 1347.7,780.6 1262.4,810.4 1178.4,821.9 1152.5,835.0 1132.5,861.2 1128.8,865.0 1120.0,868.8 1111.2,860.0 1092.5,860.0 1065.0,855.6 1038.8,856.2 1030.0,858.8 1015.0,852.5 1012.5,857.5 1011.2,870.0 1010.0,877.5 997.5,884.4 993.8,876.2 987.5,865.0 985.0,857.5 981.2,850.0 976.3,850.0 963.3,835.2 953.1,820.4 949.4,807.4 941.1,791.7 930.0,781.5 921.2,775.0 910.0,770.0 897.5,753.8 892.5,742.5 888.0,725.0 890.0,708.8 878.8,685.0 875.0,677.5 862.5,665.0 845.0,655.0 837.5,645.0 836.0,635.0 827.5,620.0 823.2,613.6 815.4,599.3 805.0,583.8 790.8,565.6 780.4,554.0 774.0,550.0 763.6,550.0 765.5,544.9 770.0,525.4" fill="#e0e0e0"/><polygon points="890.0,547.5 906.0,538.8 931.2,528.8 956.2,526.9 980.0,528.8 987.5,531.0 993.8,537.5 1002.5,535.0 1006.0,540.6 1017.5,543.0 1023.8,540.0 1031.2,550.0 1035.0,556.0 1055.0,565.0 1060.0,566.0 1050.0,567.5 1050.0,573.8 1046.0,578.0 1038.8,578.0 1028.8,571.0 1013.8,577.5 1005.0,586.0 985.0,597.5 980.0,602.5 978.8,610.0 972.5,617.5 960.0,622.5 937.5,622.5 917.5,628.8 915.0,612.5 916.0,600.0 911.0,597.5 913.8,586.0 922.5,576.0 915.0,570.0 911.0,557.5 900.0,550.0" fill="#cccccc"/><polygon points="1060.0,566.0 1067.5,573.8 1086.0,584.0 1108.8,592.0 1121.0,598.0 1132.0,602.5 1132.5,637.5 1135.0,650.0 1152.5,660.0 1156.0,675.0 1152.8,702.2 1147.6,733.3 1143.7,770.0 1138.8,795.6 1102.5,800.0 1071.2,803.0 1047.5,796.2 1037.5,787.5 1031.2,777.5 1032.5,765.0 1022.5,753.8 1015.0,740.0 1017.5,723.8 1017.5,710.0 1010.0,708.8 1007.5,709.2 1003.3,707.5 1004.2,700.8 1002.5,698.3 985.8,696.7 978.3,675.8 974.2,673.3 974.2,668.3 975.4,654.2 977.5,649.2 981.7,644.6 988.3,646.2 999.2,647.0 1005.0,646.7 1007.5,644.0 1006.7,640.0 1010.0,635.8 1016.2,631.0 1033.8,622.5 1053.8,621.0 1052.5,611.0 1043.8,598.8 1043.8,591.0 1056.0,580.0 1050.0,573.8 1050.0,567.5" fill="#cccccc"/><polygon points="1088.8,520.6 1105.0,520.6 1132.5,523.8 1139.4,536.9 1158.8,536.9 1166.0,550.0 1170.0,555.0 1180.0,567.5 1191.0,576.0 1201.0,585.0 1207.5,590.0 1211.0,601.0 1205.0,607.5 1211.0,619.0 1220.0,628.8 1226.0,642.5 1233.8,652.5 1242.5,653.8 1245.0,657.5 1250.0,660.0 1278.8,696.2 1353.8,705.0 1366.7,725.0 1347.7,780.6 1262.4,810.4 1178.4,821.9 1152.5,835.0 1132.5,861.2 1138.8,795.6 1143.7,770.0 1147.6,733.3 1152.8,702.2 1156.0,675.0 1152.5,660.0 1135.0,650.0 1132.5,637.5 1132.0,602.5 1121.0,598.0 1108.8,592.0 1086.0,584.0 1067.5,573.8 1060.0,566.0 1060.0,560.0 1068.8,550.0 1078.8,532.5 1086.0,527.5" fill="#cccccc"/><polygon points="878.8,683.8 886.2,682.5 895.0,690.0 902.5,691.2 915.0,692.5 916.2,702.5 922.5,710.0 930.0,706.2 936.7,707.9 938.3,705.0 954.2,691.7 959.2,689.2 954.2,685.0 955.0,683.3 968.3,676.7 967.5,669.2 971.7,667.9 974.2,668.3 974.2,673.3 978.3,675.8 985.8,696.7 1002.5,698.3 1004.2,700.8 1003.3,707.5 1007.5,709.2 1010.0,708.8 1017.5,710.0 1017.5,723.8 1015.0,740.0 1022.5,753.8 1010.0,755.6 1002.2,758.3 988.3,768.5 981.9,771.3 975.4,767.6 974.4,763.0 961.5,764.8 957.8,759.3 954.1,760.2 953.1,768.5 946.7,775.0 941.1,779.6 944.8,781.5 944.8,788.9 945.7,795.4 953.1,800.0 956.9,798.1 958.7,789.8 967.0,787.0 970.7,788.0 971.7,798.1 969.8,802.8 959.6,805.6 957.8,809.3 957.8,814.8 967.0,818.5 968.9,827.8 963.3,835.2 953.1,820.4 949.4,807.4 941.1,791.7 930.0,781.5 921.2,775.0 910.0,770.0 897.5,753.8 892.5,742.5 888.0,725.0 890.0,708.8" fill="#cccccc"/><polygon points="1047.5,796.2 1071.2,803.0 1102.5,800.0 1138.8,795.6 1132.5,861.2 1128.8,865.0 1120.0,868.8 1111.2,860.0 1092.5,860.0 1065.0,855.6 1038.8,856.2 1030.0,858.8 1022.5,851.2 1022.5,831.2 1035.0,818.8 1043.8,813.8 1042.5,805.0 1046.2,802.5" fill="#cccccc"/><polygon points="890.0,547.5 906.0,538.8 931.2,528.8 956.2,526.9 980.0,528.8 987.5,531.0 993.8,537.5 1002.5,535.0 1006.0,540.6 1017.5,543.0 1023.8,540.0 1031.2,550.0 1035.0,556.0 1055.0,565.0 1060.0,566.0 1050.0,567.5 1050.0,573.8 1046.0,578.0 1038.8,578.0 1028.8,571.0 1013.8,577.5 1005.0,586.0 985.0,597.5 980.0,602.5 978.8,610.0 972.5,617.5 960.0,622.5 937.5,622.5 917.5,628.8 915.0,612.5 916.0,600.0 911.0,597.5 913.8,586.0 922.5,576.0 915.0,570.0 911.0,557.5 900.0,550.0" fill="none" stroke="#a4a4a4" stroke-width="0.7"/><polygon points="980.0,602.5 985.0,597.5 1005.0,586.0 1013.8,577.5 1028.8,571.0 1038.8,578.0 1046.0,578.0 1050.0,573.8 1056.0,580.0 1043.8,591.0 1043.8,598.8 1052.5,611.0 1053.8,621.0 1033.8,622.5 1016.2,631.0 1010.0,635.8 1006.7,640.0 1007.5,644.0 1005.0,646.7 999.2,647.0 988.3,646.2 981.7,644.6 977.5,649.2 973.3,642.5 970.8,637.5 965.0,635.0 964.2,630.0 965.0,625.0 960.0,622.5 972.5,617.5 978.8,610.0" fill="none" stroke="#a4a4a4" stroke-width="0.7"/><polygon points="1060.0,566.0 1067.5,573.8 1086.0,584.0 1108.8,592.0 1121.0,598.0 1132.0,602.5 1132.5,637.5 1135.0,650.0 1152.5,660.0 1156.0,675.0 1152.8,702.2 1147.6,733.3 1143.7,770.0 1138.8,795.6 1102.5,800.0 1071.2,803.0 1047.5,796.2 1037.5,787.5 1031.2,777.5 1032.5,765.0 1022.5,753.8 1015.0,740.0 1017.5,723.8 1017.5,710.0 1010.0,708.8 1007.5,709.2 1003.3,707.5 1004.2,700.8 1002.5,698.3 985.8,696.7 978.3,675.8 974.2,673.3 974.2,668.3 975.4,654.2 977.5,649.2 981.7,644.6 988.3,646.2 999.2,647.0 1005.0,646.7 1007.5,644.0 1006.7,640.0 1010.0,635.8 1016.2,631.0 1033.8,622.5 1053.8,621.0 1052.5,611.0 1043.8,598.8 1043.8,591.0 1056.0,580.0 1050.0,573.8 1050.0,567.5" fill="none" stroke="#a4a4a4" stroke-width="0.7"/><polygon points="878.8,683.8 886.2,682.5 895.0,690.0 902.5,691.2 915.0,692.5 916.2,702.5 922.5,710.0 930.0,706.2 936.7,707.9 938.3,705.0 954.2,691.7 959.2,689.2 954.2,685.0 955.0,683.3 968.3,676.7 967.5,669.2 971.7,667.9 974.2,668.3 974.2,673.3 978.3,675.8 985.8,696.7 1002.5,698.3 1004.2,700.8 1003.3,707.5 1007.5,709.2 1010.0,708.8 1017.5,710.0 1017.5,723.8 1015.0,740.0 1022.5,753.8 1010.0,755.6 1002.2,758.3 988.3,768.5 981.9,771.3 975.4,767.6 974.4,763.0 961.5,764.8 957.8,759.3 954.1,760.2 953.1,768.5 946.7,775.0 941.1,779.6 944.8,781.5 944.8,788.9 945.7,795.4 953.1,800.0 956.9,798.1 958.7,789.8 967.0,787.0 970.7,788.0 971.7,798.1 969.8,802.8 959.6,805.6 957.8,809.3 957.8,814.8 967.0,818.5 968.9,827.8 963.3,835.2 953.1,820.4 949.4,807.4 941.1,791.7 930.0,781.5 921.2,775.0 910.0,770.0 897.5,753.8 892.5,742.5 888.0,725.0 890.0,708.8" fill="none" stroke="#a4a4a4" stroke-width="0.7"/><polygon points="1047.5,796.2 1071.2,803.0 1102.5,800.0 1138.8,795.6 1132.5,861.2 1128.8,865.0 1120.0,868.8 1111.2,860.0 1092.5,860.0 1065.0,855.6 1038.8,856.2 1030.0,858.8 1022.5,851.2 1022.5,831.2 1035.0,818.8 1043.8,813.8 1042.5,805.0 1046.2,802.5" fill="none" stroke="#a4a4a4" stroke-width="0.7"/><polygon points="941.1,779.6 946.7,775.0 953.1,768.5 954.1,760.2 957.8,759.3 961.5,764.8 974.4,763.0 975.4,767.6 976.3,772.2 969.8,777.8 968.9,782.4 967.0,787.0 958.7,789.8 956.9,798.1 953.1,800.0 945.7,795.4 944.8,788.9 944.8,781.5" fill="none" stroke="#a4a4a4" stroke-width="0.7"/><polyline points="770.0,525.4 781.7,527.3 797.3,523.5 805.0,524.7 816.7,536.4 828.4,533.2 844.0,535.0 852.5,527.5 853.8,537.5 857.5,542.5 872.5,545.0 880.0,548.0 888.8,546.9 890.0,547.5" fill="none" stroke="#a4a4a4" stroke-width="0.7"/><polyline points="856.9,446.2 856.2,457.5 866.2,469.4 887.5,467.5 912.5,470.0 920.0,473.8 941.2,473.8 952.5,480.0 962.5,481.2 972.5,491.9 940.0,511.2 937.5,525.0 931.2,528.8" fill="none" stroke="#a4a4a4" stroke-width="0.7"/><polyline points="1088.8,520.6 1086.0,527.5 1078.8,532.5 1068.8,550.0 1060.0,560.0 1060.0,566.0" fill="none" stroke="#a4a4a4" stroke-width="0.7"/><polyline points="825.6,575.0 838.8,569.4 853.8,569.4 857.5,576.9 866.9,580.0 870.6,586.9 882.5,583.0 893.8,590.0 910.0,589.4 913.8,586.0" fill="none" stroke="#a4a4a4" stroke-width="0.7"/><polyline points="825.6,575.0 831.2,578.8 839.4,592.5 836.2,598.8 840.0,607.5 850.0,611.2 857.5,622.5 861.2,625.0 860.0,642.5 845.0,647.5 841.0,651.0" fill="none" stroke="#a4a4a4" stroke-width="0.7"/><polyline points="1022.5,851.2 1015.0,852.5" fill="none" stroke="#a4a4a4" stroke-width="0.7"/><polyline points="963.3,835.2 968.9,829.6 973.5,830.6 972.6,836.1 979.1,838.9 984.6,841.7 993.0,848.1 997.6,842.6 1002.2,838.9 1004.1,842.6 1009.6,847.2 1015.0,852.5" fill="none" stroke="#a4a4a4" stroke-width="0.7"/><polyline points="752.2,457.6 772.0,509.2" fill="none" stroke="#6e6e6e" stroke-width="0.75"/><polyline points="790.6,420.0 787.5,452.5 786.2,467.5 780.0,480.0 772.7,508.2" fill="none" stroke="#6e6e6e" stroke-width="0.75"/><polyline points="793.2,419.1 804.0,416.7 826.9,427.5 883.5,398.6 947.3,367.3 953.3,356.5 956.9,334.8 954.5,318.0 956.9,310.7 982.2,291.5 985.8,286.7" fill="none" stroke="#6e6e6e" stroke-width="0.75"/><polyline points="883.5,398.6 889.5,421.5 896.7,431.1 895.6,433.1" fill="none" stroke="#6e6e6e" stroke-width="0.75"/><polyline points="800.4,324.0 807.6,326.4 814.8,316.8 823.2,315.6 818.4,307.1 822.0,298.7 835.3,303.5 870.2,296.3 882.2,302.3 911.1,301.1 940.0,290.3 964.1,291.0 982.2,286.7 985.8,291.5 997.8,283.1 1017.1,285.5 1030.3,286.7 1037.6,285.5 1040.0,293.9 1055.0,289.0" fill="none" stroke="#6e6e6e" stroke-width="0.75"/><polyline points="1040.0,240.0 1047.1,272.0 1055.6,289.0 1071.3,321.6 1084.6,327.6 1096.7,328.8 1090.6,334.8 1094.3,348.0 1084.6,350.4 1081.0,357.7 1081.0,363.7 1075.0,370.9 1078.5,380.6 1087.0,390.2 1094.3,399.8 1094.3,409.4 1108.7,411.8 1130.4,425.0 1142.4,443.1 1138.8,455.1 1138.8,464.8 1147.2,467.2 1148.8,480.0 1157.5,488.0 1161.0,495.6" fill="none" stroke="#6e6e6e" stroke-width="0.75"/><polyline points="1105.0,520.6 1115.0,510.0 1125.0,493.0 1136.0,491.0 1147.5,494.4 1152.5,493.8 1161.0,495.6" fill="none" stroke="#6e6e6e" stroke-width="0.75"/><polyline points="800.9,361.3 813.6,361.3 819.6,373.4 812.4,383.0 802.8,392.6 793.2,402.2 787.1,407.0 777.5,407.0" fill="none" stroke="#6e6e6e" stroke-width="0.75"/><polyline points="781.1,423.9 789.5,425.1 788.3,450.4 771.5,456.4 779.9,444.4 773.9,438.4 773.9,428.7 781.1,423.9" fill="none" stroke="#6e6e6e" stroke-width="0.75"/><polyline points="690.0,724.3 828.0,724.3" fill="none" stroke="#6e6e6e" stroke-width="0.75"/><polyline points="877.3,839.0 866.9,850.8 846.1,858.5 831.9,866.3 829.3,881.9 817.6,920.8 820.2,946.7 807.2,990.8 794.3,992.1 776.1,1019.3 760.0,1060.0" fill="none" stroke="#6e6e6e" stroke-width="0.75"/><polyline points="820.2,945.4 833.2,941.5 839.7,941.5 847.4,946.7 857.8,929.9 874.7,941.5 892.8,936.3 898.0,940.2 905.8,937.6 921.4,940.2 942.1,949.3 965.4,972.7 986.2,997.3 996.6,999.9 1006.9,990.8" fill="none" stroke="#6e6e6e" stroke-width="0.75"/><polyline points="996.6,999.9 970.6,1019.3 950.0,1060.0" fill="none" stroke="#6e6e6e" stroke-width="0.75"/><polyline points="1250.0,660.0 1278.8,696.2 1353.8,705.0 1366.7,725.0 1347.7,780.6 1262.4,810.4 1178.4,821.9 1152.5,835.0 1132.5,861.2 1128.8,865.0 1120.0,868.8 1111.2,860.0 1092.5,860.0 1065.0,855.6 1038.8,856.2 1030.0,858.8 1015.0,852.5 1012.5,857.5 1011.2,870.0 1010.0,877.5 997.5,884.4" fill="none" stroke="#6e6e6e" stroke-width="0.75"/><polyline points="772.0,509.2 803.8,517.6 825.0,498.8 845.0,495.0 851.2,485.0 859.4,480.6 833.1,451.9 860.0,445.6 887.5,437.5 895.6,433.1 928.8,438.8 1052.5,516.9 1088.8,520.6 1105.0,520.6 1132.5,523.8 1139.4,536.9 1158.8,536.9" fill="none" stroke="#6e6e6e" stroke-width="0.75"/><polyline points="1353.8,705.0 1354.4,692.5 1364.4,677.5 1362.5,670.0 1376.0,665.0 1370.0,660.0 1372.5,639.4 1377.5,640.0 1380.0,645.0 1387.5,638.8" fill="none" stroke="#6e6e6e" stroke-width="0.75"/><polyline points="1262.4,810.4 1294.1,878.0" fill="none" stroke="#6e6e6e" stroke-width="0.75"/><polyline points="1315.7,284.3 1326.5,284.3 1342.1,279.4 1345.8,272.0 1369.0,258.0 1426.0,258.0 1488.0,273.0 1519.0,302.5 1540.0,320.0" fill="none" stroke="#6e6e6e" stroke-width="0.75"/><circle cx="967.30" cy="575.00" r="4.40" fill="#67b22f"/><circle cx="955.00" cy="735.00" r="8.10" fill="#67b22f"/><circle cx="1255.20" cy="717.90" r="4.50" fill="#217a32"/><circle cx="1083.10" cy="830.60" r="6.30" fill="#217a32"/><path d="M1077.90,690.50L1094.00,690.50A16.10,16.10 0 0 1 1064.94,700.05Z" fill="#217a32"/><path d="M1077.90,690.50L1064.94,700.05A16.10,16.10 0 1 1 1094.00,690.50Z" fill="#b2d06e"/></svg>
<svg class="abs" style="left:1411.1px;top:272.1px" width="117.4" height="116.7" viewBox="0 0 117.4 116.7"><rect width="117.4" height="116.7" fill="#f0f0f0"/><g transform="matrix(0.1425,0,0,0.1422,-98.9,-35.5)" vector-effect="non-scaling-stroke"><polygon points="690.0,313.0 750.0,309.7 762.8,300.3 767.8,300.3 772.2,301.4 782.2,306.1 790.0,306.1 794.4,300.8 802.2,296.7 806.7,297.8 808.3,302.2 807.8,303.9 798.3,313.3 801.6,324.0 796.0,334.8 801.6,345.7 800.9,361.3 792.0,375.8 783.5,395.0 777.5,407.0 771.5,428.7 765.5,440.8 759.4,450.4 752.2,457.6 740.0,462.0 720.0,472.0 700.0,492.0 690.0,496.0" fill="#ffffff" stroke="#9a9a9a" stroke-width="3"/><polygon points="735.0,336.0 748.0,332.0 761.9,332.4 756.0,336.0 749.8,338.4 738.0,340.0" fill="#f0f0f0" stroke="#9a9a9a" stroke-width="3"/><polygon points="1168.0,240.0 1176.1,272.0 1183.3,275.8 1200.2,280.6 1212.2,284.3 1219.4,292.7 1238.7,302.3 1260.3,305.9 1306.0,297.5 1319.3,298.7 1316.5,284.0 1318.0,272.0 1326.0,240.0" fill="#ffffff" stroke="#9a9a9a" stroke-width="3"/><polygon points="772.0,509.2 770.0,525.4 765.5,544.9 763.6,550.0 774.0,550.0 780.4,554.0 790.8,565.6 805.0,583.8 815.4,599.3 823.2,613.6 827.5,620.0 836.0,635.0 837.5,645.0 845.0,655.0 862.5,665.0 875.0,677.5 878.8,685.0 890.0,708.8 888.0,725.0 892.5,742.5 897.5,753.8 910.0,770.0 921.2,775.0 930.0,781.5 941.1,791.7 949.4,807.4 953.1,820.4 963.3,835.2 976.3,850.0 981.2,850.0 985.0,857.5 987.5,865.0 993.8,876.2 997.5,885.0 1001.7,905.2 1004.3,926.0 1006.9,946.7 1012.1,972.7 1017.3,988.2 1032.9,993.4 1056.2,988.2 1071.8,983.0 1085.0,980.4 1111.3,970.0 1145.0,953.2 1165.7,951.9 1178.7,938.9 1194.3,931.1 1235.7,918.2 1266.9,906.5 1268.2,893.5 1277.2,881.9 1292.8,876.7 1316.1,870.2 1323.9,866.3 1342.0,868.9 1355.0,858.5 1356.3,848.2 1362.8,843.0 1386.1,840.4 1393.9,827.4 1403.0,815.7 1436.0,813.0 1459.0,782.6 1498.0,743.0 1530.0,740.0 1530.0,1090.0 1248.0,1090.0 1248.0,1023.0 1241.0,1017.0 1230.0,1013.0 1216.3,1019.3 1155.0,1040.0 1038.0,1047.0 1004.0,1020.0 1014.7,1009.0 1006.9,990.8 983.6,972.7 962.8,949.3 931.7,928.6 921.4,920.8 916.2,913.0 911.0,919.5 900.6,897.4 894.1,881.9 885.0,856.0 874.7,837.8 864.3,830.0 853.9,820.9 843.5,811.9 838.4,780.7 836.2,755.0 836.2,747.5 830.0,737.5 828.0,724.3 822.8,715.2 793.0,691.9 787.8,681.5 787.8,669.9 794.3,668.6 778.8,652.5 765.0,627.5 761.0,620.0 750.3,600.0 700.0,512.0 694.0,504.0 698.0,502.0 750.3,558.5 751.9,557.8 757.7,552.6 758.4,544.9 763.6,531.9 767.5,515.0" fill="#ffffff" stroke="#a0a0a0" stroke-width="3"/><polygon points="1300.6,996.0 1310.0,990.0 1323.9,989.5 1333.0,996.0 1316.1,1002.4 1303.2,1001.1" fill="#f0f0f0" stroke="#a0a0a0" stroke-width="3"/><polygon points="1161.0,495.6 1173.8,493.8 1174.4,485.0 1183.8,490.0 1192.5,493.0 1203.8,489.4 1207.5,491.0 1211.0,499.4 1222.0,510.0 1223.8,518.8 1230.0,522.5 1230.0,527.0 1234.4,530.0 1237.5,540.0 1245.0,553.0 1252.5,556.0 1263.8,557.5 1276.0,565.0 1281.0,570.0 1286.0,574.0 1301.0,580.6 1310.0,588.0 1327.5,589.4 1340.0,594.4 1355.0,587.5 1370.0,580.0 1387.5,575.6 1396.0,576.0 1402.5,582.5 1440.0,600.0 1480.0,615.0 1530.0,625.0 1530.0,705.0 1498.0,711.6 1428.0,676.0 1402.5,661.2 1392.5,650.0 1387.5,638.8 1386.2,620.0 1388.8,605.0 1387.5,599.4 1380.0,607.5 1373.8,615.0 1360.0,625.0 1352.5,632.5 1338.8,645.0 1336.2,650.0 1328.8,655.0 1320.0,662.5 1313.8,663.8 1280.0,662.5 1257.5,666.2 1251.2,661.2 1245.0,657.5 1243.8,650.0 1250.0,635.0 1249.4,613.8 1240.0,605.6 1232.5,610.0 1227.5,623.8 1227.5,645.0 1226.0,642.5 1220.0,628.8 1211.0,619.0 1205.0,607.5 1211.0,601.0 1207.5,590.0 1201.0,585.0 1191.0,576.0 1180.0,567.5 1170.0,555.0 1158.8,536.9 1158.8,532.5 1152.5,525.0 1150.0,515.0 1141.0,512.5 1147.5,507.5 1157.5,500.0" fill="#ffffff" stroke="#a0a0a0" stroke-width="3"/><polygon points="772.0,509.2 803.8,517.6 825.0,498.8 845.0,495.0 851.2,485.0 859.4,480.6 833.1,451.9 860.0,445.6 887.5,437.5 895.6,433.1 928.8,438.8 1052.5,516.9 1088.8,520.6 1105.0,520.6 1132.5,523.8 1139.4,536.9 1158.8,536.9 1166.0,550.0 1170.0,555.0 1180.0,567.5 1191.0,576.0 1201.0,585.0 1207.5,590.0 1211.0,601.0 1205.0,607.5 1211.0,619.0 1220.0,628.8 1226.0,642.5 1233.8,652.5 1242.5,653.8 1245.0,657.5 1250.0,660.0 1278.8,696.2 1353.8,705.0 1366.7,725.0 1347.7,780.6 1262.4,810.4 1178.4,821.9 1152.5,835.0 1132.5,861.2 1128.8,865.0 1120.0,868.8 1111.2,860.0 1092.5,860.0 1065.0,855.6 1038.8,856.2 1030.0,858.8 1015.0,852.5 1012.5,857.5 1011.2,870.0 1010.0,877.5 997.5,884.4 993.8,876.2 987.5,865.0 985.0,857.5 981.2,850.0 976.3,850.0 963.3,835.2 953.1,820.4 949.4,807.4 941.1,791.7 930.0,781.5 921.2,775.0 910.0,770.0 897.5,753.8 892.5,742.5 888.0,725.0 890.0,708.8 878.8,685.0 875.0,677.5 862.5,665.0 845.0,655.0 837.5,645.0 836.0,635.0 827.5,620.0 823.2,613.6 815.4,599.3 805.0,583.8 790.8,565.6 780.4,554.0 774.0,550.0 763.6,550.0 765.5,544.9 770.0,525.4" fill="#e0e0e0"/><polygon points="890.0,547.5 906.0,538.8 931.2,528.8 956.2,526.9 980.0,528.8 987.5,531.0 993.8,537.5 1002.5,535.0 1006.0,540.6 1017.5,543.0 1023.8,540.0 1031.2,550.0 1035.0,556.0 1055.0,565.0 1060.0,566.0 1050.0,567.5 1050.0,573.8 1046.0,578.0 1038.8,578.0 1028.8,571.0 1013.8,577.5 1005.0,586.0 985.0,597.5 980.0,602.5 978.8,610.0 972.5,617.5 960.0,622.5 937.5,622.5 917.5,628.8 915.0,612.5 916.0,600.0 911.0,597.5 913.8,586.0 922.5,576.0 915.0,570.0 911.0,557.5 900.0,550.0" fill="#cccccc"/><polygon points="1060.0,566.0 1067.5,573.8 1086.0,584.0 1108.8,592.0 1121.0,598.0 1132.0,602.5 1132.5,637.5 1135.0,650.0 1152.5,660.0 1156.0,675.0 1152.8,702.2 1147.6,733.3 1143.7,770.0 1138.8,795.6 1102.5,800.0 1071.2,803.0 1047.5,796.2 1037.5,787.5 1031.2,777.5 1032.5,765.0 1022.5,753.8 1015.0,740.0 1017.5,723.8 1017.5,710.0 1010.0,708.8 1007.5,709.2 1003.3,707.5 1004.2,700.8 1002.5,698.3 985.8,696.7 978.3,675.8 974.2,673.3 974.2,668.3 975.4,654.2 977.5,649.2 981.7,644.6 988.3,646.2 999.2,647.0 1005.0,646.7 1007.5,644.0 1006.7,640.0 1010.0,635.8 1016.2,631.0 1033.8,622.5 1053.8,621.0 1052.5,611.0 1043.8,598.8 1043.8,591.0 1056.0,580.0 1050.0,573.8 1050.0,567.5" fill="#cccccc"/><polygon points="1088.8,520.6 1105.0,520.6 1132.5,523.8 1139.4,536.9 1158.8,536.9 1166.0,550.0 1170.0,555.0 1180.0,567.5 1191.0,576.0 1201.0,585.0 1207.5,590.0 1211.0,601.0 1205.0,607.5 1211.0,619.0 1220.0,628.8 1226.0,642.5 1233.8,652.5 1242.5,653.8 1245.0,657.5 1250.0,660.0 1278.8,696.2 1353.8,705.0 1366.7,725.0 1347.7,780.6 1262.4,810.4 1178.4,821.9 1152.5,835.0 1132.5,861.2 1138.8,795.6 1143.7,770.0 1147.6,733.3 1152.8,702.2 1156.0,675.0 1152.5,660.0 1135.0,650.0 1132.5,637.5 1132.0,602.5 1121.0,598.0 1108.8,592.0 1086.0,584.0 1067.5,573.8 1060.0,566.0 1060.0,560.0 1068.8,550.0 1078.8,532.5 1086.0,527.5" fill="#cccccc"/><polygon points="878.8,683.8 886.2,682.5 895.0,690.0 902.5,691.2 915.0,692.5 916.2,702.5 922.5,710.0 930.0,706.2 936.7,707.9 938.3,705.0 954.2,691.7 959.2,689.2 954.2,685.0 955.0,683.3 968.3,676.7 967.5,669.2 971.7,667.9 974.2,668.3 974.2,673.3 978.3,675.8 985.8,696.7 1002.5,698.3 1004.2,700.8 1003.3,707.5 1007.5,709.2 1010.0,708.8 1017.5,710.0 1017.5,723.8 1015.0,740.0 1022.5,753.8 1010.0,755.6 1002.2,758.3 988.3,768.5 981.9,771.3 975.4,767.6 974.4,763.0 961.5,764.8 957.8,759.3 954.1,760.2 953.1,768.5 946.7,775.0 941.1,779.6 944.8,781.5 944.8,788.9 945.7,795.4 953.1,800.0 956.9,798.1 958.7,789.8 967.0,787.0 970.7,788.0 971.7,798.1 969.8,802.8 959.6,805.6 957.8,809.3 957.8,814.8 967.0,818.5 968.9,827.8 963.3,835.2 953.1,820.4 949.4,807.4 941.1,791.7 930.0,781.5 921.2,775.0 910.0,770.0 897.5,753.8 892.5,742.5 888.0,725.0 890.0,708.8" fill="#cccccc"/><polygon points="890.0,547.5 906.0,538.8 931.2,528.8 956.2,526.9 980.0,528.8 987.5,531.0 993.8,537.5 1002.5,535.0 1006.0,540.6 1017.5,543.0 1023.8,540.0 1031.2,550.0 1035.0,556.0 1055.0,565.0 1060.0,566.0 1050.0,567.5 1050.0,573.8 1046.0,578.0 1038.8,578.0 1028.8,571.0 1013.8,577.5 1005.0,586.0 985.0,597.5 980.0,602.5 978.8,610.0 972.5,617.5 960.0,622.5 937.5,622.5 917.5,628.8 915.0,612.5 916.0,600.0 911.0,597.5 913.8,586.0 922.5,576.0 915.0,570.0 911.0,557.5 900.0,550.0" fill="none" stroke="#a4a4a4" stroke-width="2.8"/><polygon points="980.0,602.5 985.0,597.5 1005.0,586.0 1013.8,577.5 1028.8,571.0 1038.8,578.0 1046.0,578.0 1050.0,573.8 1056.0,580.0 1043.8,591.0 1043.8,598.8 1052.5,611.0 1053.8,621.0 1033.8,622.5 1016.2,631.0 1010.0,635.8 1006.7,640.0 1007.5,644.0 1005.0,646.7 999.2,647.0 988.3,646.2 981.7,644.6 977.5,649.2 973.3,642.5 970.8,637.5 965.0,635.0 964.2,630.0 965.0,625.0 960.0,622.5 972.5,617.5 978.8,610.0" fill="none" stroke="#a4a4a4" stroke-width="2.8"/><polygon points="1060.0,566.0 1067.5,573.8 1086.0,584.0 1108.8,592.0 1121.0,598.0 1132.0,602.5 1132.5,637.5 1135.0,650.0 1152.5,660.0 1156.0,675.0 1152.8,702.2 1147.6,733.3 1143.7,770.0 1138.8,795.6 1102.5,800.0 1071.2,803.0 1047.5,796.2 1037.5,787.5 1031.2,777.5 1032.5,765.0 1022.5,753.8 1015.0,740.0 1017.5,723.8 1017.5,710.0 1010.0,708.8 1007.5,709.2 1003.3,707.5 1004.2,700.8 1002.5,698.3 985.8,696.7 978.3,675.8 974.2,673.3 974.2,668.3 975.4,654.2 977.5,649.2 981.7,644.6 988.3,646.2 999.2,647.0 1005.0,646.7 1007.5,644.0 1006.7,640.0 1010.0,635.8 1016.2,631.0 1033.8,622.5 1053.8,621.0 1052.5,611.0 1043.8,598.8 1043.8,591.0 1056.0,580.0 1050.0,573.8 1050.0,567.5" fill="none" stroke="#a4a4a4" stroke-width="2.8"/><polygon points="878.8,683.8 886.2,682.5 895.0,690.0 902.5,691.2 915.0,692.5 916.2,702.5 922.5,710.0 930.0,706.2 936.7,707.9 938.3,705.0 954.2,691.7 959.2,689.2 954.2,685.0 955.0,683.3 968.3,676.7 967.5,669.2 971.7,667.9 974.2,668.3 974.2,673.3 978.3,675.8 985.8,696.7 1002.5,698.3 1004.2,700.8 1003.3,707.5 1007.5,709.2 1010.0,708.8 1017.5,710.0 1017.5,723.8 1015.0,740.0 1022.5,753.8 1010.0,755.6 1002.2,758.3 988.3,768.5 981.9,771.3 975.4,767.6 974.4,763.0 961.5,764.8 957.8,759.3 954.1,760.2 953.1,768.5 946.7,775.0 941.1,779.6 944.8,781.5 944.8,788.9 945.7,795.4 953.1,800.0 956.9,798.1 958.7,789.8 967.0,787.0 970.7,788.0 971.7,798.1 969.8,802.8 959.6,805.6 957.8,809.3 957.8,814.8 967.0,818.5 968.9,827.8 963.3,835.2 953.1,820.4 949.4,807.4 941.1,791.7 930.0,781.5 921.2,775.0 910.0,770.0 897.5,753.8 892.5,742.5 888.0,725.0 890.0,708.8" fill="none" stroke="#a4a4a4" stroke-width="2.8"/><polygon points="1047.5,796.2 1071.2,803.0 1102.5,800.0 1138.8,795.6 1132.5,861.2 1128.8,865.0 1120.0,868.8 1111.2,860.0 1092.5,860.0 1065.0,855.6 1038.8,856.2 1030.0,858.8 1022.5,851.2 1022.5,831.2 1035.0,818.8 1043.8,813.8 1042.5,805.0 1046.2,802.5" fill="none" stroke="#a4a4a4" stroke-width="2.8"/><polygon points="941.1,779.6 946.7,775.0 953.1,768.5 954.1,760.2 957.8,759.3 961.5,764.8 974.4,763.0 975.4,767.6 976.3,772.2 969.8,777.8 968.9,782.4 967.0,787.0 958.7,789.8 956.9,798.1 953.1,800.0 945.7,795.4 944.8,788.9 944.8,781.5" fill="none" stroke="#a4a4a4" stroke-width="2.8"/><polyline points="770.0,525.4 781.7,527.3 797.3,523.5 805.0,524.7 816.7,536.4 828.4,533.2 844.0,535.0 852.5,527.5 853.8,537.5 857.5,542.5 872.5,545.0 880.0,548.0 888.8,546.9 890.0,547.5" fill="none" stroke="#a4a4a4" stroke-width="2.8"/><polyline points="856.9,446.2 856.2,457.5 866.2,469.4 887.5,467.5 912.5,470.0 920.0,473.8 941.2,473.8 952.5,480.0 962.5,481.2 972.5,491.9 940.0,511.2 937.5,525.0 931.2,528.8" fill="none" stroke="#a4a4a4" stroke-width="2.8"/><polyline points="1088.8,520.6 1086.0,527.5 1078.8,532.5 1068.8,550.0 1060.0,560.0 1060.0,566.0" fill="none" stroke="#a4a4a4" stroke-width="2.8"/><polyline points="825.6,575.0 838.8,569.4 853.8,569.4 857.5,576.9 866.9,580.0 870.6,586.9 882.5,583.0 893.8,590.0 910.0,589.4 913.8,586.0" fill="none" stroke="#a4a4a4" stroke-width="2.8"/><polyline points="825.6,575.0 831.2,578.8 839.4,592.5 836.2,598.8 840.0,607.5 850.0,611.2 857.5,622.5 861.2,625.0 860.0,642.5 845.0,647.5 841.0,651.0" fill="none" stroke="#a4a4a4" stroke-width="2.8"/><polyline points="1022.5,851.2 1015.0,852.5" fill="none" stroke="#a4a4a4" stroke-width="2.8"/><polyline points="963.3,835.2 968.9,829.6 973.5,830.6 972.6,836.1 979.1,838.9 984.6,841.7 993.0,848.1 997.6,842.6 1002.2,838.9 1004.1,842.6 1009.6,847.2 1015.0,852.5" fill="none" stroke="#a4a4a4" stroke-width="2.8"/><polyline points="752.2,457.6 772.0,509.2" fill="none" stroke="#6e6e6e" stroke-width="3.6"/><polyline points="790.6,420.0 787.5,452.5 786.2,467.5 780.0,480.0 772.7,508.2" fill="none" stroke="#6e6e6e" stroke-width="3.6"/><polyline points="793.2,419.1 804.0,416.7 826.9,427.5 883.5,398.6 947.3,367.3 953.3,356.5 956.9,334.8 954.5,318.0 956.9,310.7 982.2,291.5 985.8,286.7" fill="none" stroke="#6e6e6e" stroke-width="3.6"/><polyline points="883.5,398.6 889.5,421.5 896.7,431.1 895.6,433.1" fill="none" stroke="#6e6e6e" stroke-width="3.6"/><polyline points="800.4,324.0 807.6,326.4 814.8,316.8 823.2,315.6 818.4,307.1 822.0,298.7 835.3,303.5 870.2,296.3 882.2,302.3 911.1,301.1 940.0,290.3 964.1,291.0 982.2,286.7 985.8,291.5 997.8,283.1 1017.1,285.5 1030.3,286.7 1037.6,285.5 1040.0,293.9 1055.0,289.0" fill="none" stroke="#6e6e6e" stroke-width="3.6"/><polyline points="1040.0,240.0 1047.1,272.0 1055.6,289.0 1071.3,321.6 1084.6,327.6 1096.7,328.8 1090.6,334.8 1094.3,348.0 1084.6,350.4 1081.0,357.7 1081.0,363.7 1075.0,370.9 1078.5,380.6 1087.0,390.2 1094.3,399.8 1094.3,409.4 1108.7,411.8 1130.4,425.0 1142.4,443.1 1138.8,455.1 1138.8,464.8 1147.2,467.2 1148.8,480.0 1157.5,488.0 1161.0,495.6" fill="none" stroke="#6e6e6e" stroke-width="3.6"/><polyline points="1105.0,520.6 1115.0,510.0 1125.0,493.0 1136.0,491.0 1147.5,494.4 1152.5,493.8 1161.0,495.6" fill="none" stroke="#6e6e6e" stroke-width="3.6"/><polyline points="800.9,361.3 813.6,361.3 819.6,373.4 812.4,383.0 802.8,392.6 793.2,402.2 787.1,407.0 777.5,407.0" fill="none" stroke="#6e6e6e" stroke-width="3.6"/><polyline points="781.1,423.9 789.5,425.1 788.3,450.4 771.5,456.4 779.9,444.4 773.9,438.4 773.9,428.7 781.1,423.9" fill="none" stroke="#6e6e6e" stroke-width="3.6"/><polyline points="690.0,724.3 828.0,724.3" fill="none" stroke="#6e6e6e" stroke-width="3.6"/><polyline points="877.3,839.0 866.9,850.8 846.1,858.5 831.9,866.3 829.3,881.9 817.6,920.8 820.2,946.7 807.2,990.8 794.3,992.1 776.1,1019.3 760.0,1060.0" fill="none" stroke="#6e6e6e" stroke-width="3.6"/><polyline points="820.2,945.4 833.2,941.5 839.7,941.5 847.4,946.7 857.8,929.9 874.7,941.5 892.8,936.3 898.0,940.2 905.8,937.6 921.4,940.2 942.1,949.3 965.4,972.7 986.2,997.3 996.6,999.9 1006.9,990.8" fill="none" stroke="#6e6e6e" stroke-width="3.6"/><polyline points="996.6,999.9 970.6,1019.3 950.0,1060.0" fill="none" stroke="#6e6e6e" stroke-width="3.6"/><polyline points="1250.0,660.0 1278.8,696.2 1353.8,705.0 1366.7,725.0 1347.7,780.6 1262.4,810.4 1178.4,821.9 1152.5,835.0 1132.5,861.2 1128.8,865.0 1120.0,868.8 1111.2,860.0 1092.5,860.0 1065.0,855.6 1038.8,856.2 1030.0,858.8 1015.0,852.5 1012.5,857.5 1011.2,870.0 1010.0,877.5 997.5,884.4" fill="none" stroke="#6e6e6e" stroke-width="3.6"/><polyline points="772.0,509.2 803.8,517.6 825.0,498.8 845.0,495.0 851.2,485.0 859.4,480.6 833.1,451.9 860.0,445.6 887.5,437.5 895.6,433.1 928.8,438.8 1052.5,516.9 1088.8,520.6 1105.0,520.6 1132.5,523.8 1139.4,536.9 1158.8,536.9" fill="none" stroke="#6e6e6e" stroke-width="3.6"/><polyline points="1353.8,705.0 1354.4,692.5 1364.4,677.5 1362.5,670.0 1376.0,665.0 1370.0,660.0 1372.5,639.4 1377.5,640.0 1380.0,645.0 1387.5,638.8" fill="none" stroke="#6e6e6e" stroke-width="3.6"/><polyline points="1262.4,810.4 1294.1,878.0" fill="none" stroke="#6e6e6e" stroke-width="3.6"/><polyline points="1315.7,284.3 1326.5,284.3 1342.1,279.4 1345.8,272.0 1369.0,258.0 1426.0,258.0 1488.0,273.0 1519.0,302.5 1540.0,320.0" fill="none" stroke="#6e6e6e" stroke-width="3.6"/></g><path d="M39.10,46.70L45.50,46.70A6.40,6.40 0 0 1 32.70,46.70Z" fill="#217a32"/><path d="M39.10,46.70L32.70,46.70A6.40,6.40 0 0 1 45.50,46.70Z" fill="#b2d06e"/><path d="M55.80,63.70L63.80,63.70A8.00,8.00 0 0 1 51.68,70.56Z" fill="#217a32"/><path d="M55.80,63.70L51.68,70.56A8.00,8.00 0 1 1 63.80,63.70Z" fill="#b2d06e"/><circle cx="37.80" cy="70.00" r="4.20" fill="#67b22f"/><circle cx="80.30" cy="71.30" r="4.40" fill="#217a32"/></svg><svg class="abs" style="left:1538.0px;top:272.1px" width="117.4" height="116.7" viewBox="0 0 117.4 116.7"><rect width="117.4" height="116.7" fill="#f0f0f0"/><g transform="matrix(0.1425,0,0,0.1422,-98.9,-35.5)" vector-effect="non-scaling-stroke"><polygon points="690.0,313.0 750.0,309.7 762.8,300.3 767.8,300.3 772.2,301.4 782.2,306.1 790.0,306.1 794.4,300.8 802.2,296.7 806.7,297.8 808.3,302.2 807.8,303.9 798.3,313.3 801.6,324.0 796.0,334.8 801.6,345.7 800.9,361.3 792.0,375.8 783.5,395.0 777.5,407.0 771.5,428.7 765.5,440.8 759.4,450.4 752.2,457.6 740.0,462.0 720.0,472.0 700.0,492.0 690.0,496.0" fill="#ffffff" stroke="#9a9a9a" stroke-width="3"/><polygon points="735.0,336.0 748.0,332.0 761.9,332.4 756.0,336.0 749.8,338.4 738.0,340.0" fill="#f0f0f0" stroke="#9a9a9a" stroke-width="3"/><polygon points="1168.0,240.0 1176.1,272.0 1183.3,275.8 1200.2,280.6 1212.2,284.3 1219.4,292.7 1238.7,302.3 1260.3,305.9 1306.0,297.5 1319.3,298.7 1316.5,284.0 1318.0,272.0 1326.0,240.0" fill="#ffffff" stroke="#9a9a9a" stroke-width="3"/><polygon points="772.0,509.2 770.0,525.4 765.5,544.9 763.6,550.0 774.0,550.0 780.4,554.0 790.8,565.6 805.0,583.8 815.4,599.3 823.2,613.6 827.5,620.0 836.0,635.0 837.5,645.0 845.0,655.0 862.5,665.0 875.0,677.5 878.8,685.0 890.0,708.8 888.0,725.0 892.5,742.5 897.5,753.8 910.0,770.0 921.2,775.0 930.0,781.5 941.1,791.7 949.4,807.4 953.1,820.4 963.3,835.2 976.3,850.0 981.2,850.0 985.0,857.5 987.5,865.0 993.8,876.2 997.5,885.0 1001.7,905.2 1004.3,926.0 1006.9,946.7 1012.1,972.7 1017.3,988.2 1032.9,993.4 1056.2,988.2 1071.8,983.0 1085.0,980.4 1111.3,970.0 1145.0,953.2 1165.7,951.9 1178.7,938.9 1194.3,931.1 1235.7,918.2 1266.9,906.5 1268.2,893.5 1277.2,881.9 1292.8,876.7 1316.1,870.2 1323.9,866.3 1342.0,868.9 1355.0,858.5 1356.3,848.2 1362.8,843.0 1386.1,840.4 1393.9,827.4 1403.0,815.7 1436.0,813.0 1459.0,782.6 1498.0,743.0 1530.0,740.0 1530.0,1090.0 1248.0,1090.0 1248.0,1023.0 1241.0,1017.0 1230.0,1013.0 1216.3,1019.3 1155.0,1040.0 1038.0,1047.0 1004.0,1020.0 1014.7,1009.0 1006.9,990.8 983.6,972.7 962.8,949.3 931.7,928.6 921.4,920.8 916.2,913.0 911.0,919.5 900.6,897.4 894.1,881.9 885.0,856.0 874.7,837.8 864.3,830.0 853.9,820.9 843.5,811.9 838.4,780.7 836.2,755.0 836.2,747.5 830.0,737.5 828.0,724.3 822.8,715.2 793.0,691.9 787.8,681.5 787.8,669.9 794.3,668.6 778.8,652.5 765.0,627.5 761.0,620.0 750.3,600.0 700.0,512.0 694.0,504.0 698.0,502.0 750.3,558.5 751.9,557.8 757.7,552.6 758.4,544.9 763.6,531.9 767.5,515.0" fill="#ffffff" stroke="#a0a0a0" stroke-width="3"/><polygon points="1300.6,996.0 1310.0,990.0 1323.9,989.5 1333.0,996.0 1316.1,1002.4 1303.2,1001.1" fill="#f0f0f0" stroke="#a0a0a0" stroke-width="3"/><polygon points="1161.0,495.6 1173.8,493.8 1174.4,485.0 1183.8,490.0 1192.5,493.0 1203.8,489.4 1207.5,491.0 1211.0,499.4 1222.0,510.0 1223.8,518.8 1230.0,522.5 1230.0,527.0 1234.4,530.0 1237.5,540.0 1245.0,553.0 1252.5,556.0 1263.8,557.5 1276.0,565.0 1281.0,570.0 1286.0,574.0 1301.0,580.6 1310.0,588.0 1327.5,589.4 1340.0,594.4 1355.0,587.5 1370.0,580.0 1387.5,575.6 1396.0,576.0 1402.5,582.5 1440.0,600.0 1480.0,615.0 1530.0,625.0 1530.0,705.0 1498.0,711.6 1428.0,676.0 1402.5,661.2 1392.5,650.0 1387.5,638.8 1386.2,620.0 1388.8,605.0 1387.5,599.4 1380.0,607.5 1373.8,615.0 1360.0,625.0 1352.5,632.5 1338.8,645.0 1336.2,650.0 1328.8,655.0 1320.0,662.5 1313.8,663.8 1280.0,662.5 1257.5,666.2 1251.2,661.2 1245.0,657.5 1243.8,650.0 1250.0,635.0 1249.4,613.8 1240.0,605.6 1232.5,610.0 1227.5,623.8 1227.5,645.0 1226.0,642.5 1220.0,628.8 1211.0,619.0 1205.0,607.5 1211.0,601.0 1207.5,590.0 1201.0,585.0 1191.0,576.0 1180.0,567.5 1170.0,555.0 1158.8,536.9 1158.8,532.5 1152.5,525.0 1150.0,515.0 1141.0,512.5 1147.5,507.5 1157.5,500.0" fill="#ffffff" stroke="#a0a0a0" stroke-width="3"/><polygon points="772.0,509.2 803.8,517.6 825.0,498.8 845.0,495.0 851.2,485.0 859.4,480.6 833.1,451.9 860.0,445.6 887.5,437.5 895.6,433.1 928.8,438.8 1052.5,516.9 1088.8,520.6 1105.0,520.6 1132.5,523.8 1139.4,536.9 1158.8,536.9 1166.0,550.0 1170.0,555.0 1180.0,567.5 1191.0,576.0 1201.0,585.0 1207.5,590.0 1211.0,601.0 1205.0,607.5 1211.0,619.0 1220.0,628.8 1226.0,642.5 1233.8,652.5 1242.5,653.8 1245.0,657.5 1250.0,660.0 1278.8,696.2 1353.8,705.0 1366.7,725.0 1347.7,780.6 1262.4,810.4 1178.4,821.9 1152.5,835.0 1132.5,861.2 1128.8,865.0 1120.0,868.8 1111.2,860.0 1092.5,860.0 1065.0,855.6 1038.8,856.2 1030.0,858.8 1015.0,852.5 1012.5,857.5 1011.2,870.0 1010.0,877.5 997.5,884.4 993.8,876.2 987.5,865.0 985.0,857.5 981.2,850.0 976.3,850.0 963.3,835.2 953.1,820.4 949.4,807.4 941.1,791.7 930.0,781.5 921.2,775.0 910.0,770.0 897.5,753.8 892.5,742.5 888.0,725.0 890.0,708.8 878.8,685.0 875.0,677.5 862.5,665.0 845.0,655.0 837.5,645.0 836.0,635.0 827.5,620.0 823.2,613.6 815.4,599.3 805.0,583.8 790.8,565.6 780.4,554.0 774.0,550.0 763.6,550.0 765.5,544.9 770.0,525.4" fill="#e0e0e0"/><polygon points="890.0,547.5 906.0,538.8 931.2,528.8 956.2,526.9 980.0,528.8 987.5,531.0 993.8,537.5 1002.5,535.0 1006.0,540.6 1017.5,543.0 1023.8,540.0 1031.2,550.0 1035.0,556.0 1055.0,565.0 1060.0,566.0 1050.0,567.5 1050.0,573.8 1046.0,578.0 1038.8,578.0 1028.8,571.0 1013.8,577.5 1005.0,586.0 985.0,597.5 980.0,602.5 978.8,610.0 972.5,617.5 960.0,622.5 937.5,622.5 917.5,628.8 915.0,612.5 916.0,600.0 911.0,597.5 913.8,586.0 922.5,576.0 915.0,570.0 911.0,557.5 900.0,550.0" fill="#cccccc"/><polygon points="980.0,602.5 985.0,597.5 1005.0,586.0 1013.8,577.5 1028.8,571.0 1038.8,578.0 1046.0,578.0 1050.0,573.8 1056.0,580.0 1043.8,591.0 1043.8,598.8 1052.5,611.0 1053.8,621.0 1033.8,622.5 1016.2,631.0 1010.0,635.8 1006.7,640.0 1007.5,644.0 1005.0,646.7 999.2,647.0 988.3,646.2 981.7,644.6 977.5,649.2 973.3,642.5 970.8,637.5 965.0,635.0 964.2,630.0 965.0,625.0 960.0,622.5 972.5,617.5 978.8,610.0" fill="#cccccc"/><polygon points="1060.0,566.0 1067.5,573.8 1086.0,584.0 1108.8,592.0 1121.0,598.0 1132.0,602.5 1132.5,637.5 1135.0,650.0 1152.5,660.0 1156.0,675.0 1152.8,702.2 1147.6,733.3 1143.7,770.0 1138.8,795.6 1102.5,800.0 1071.2,803.0 1047.5,796.2 1037.5,787.5 1031.2,777.5 1032.5,765.0 1022.5,753.8 1015.0,740.0 1017.5,723.8 1017.5,710.0 1010.0,708.8 1007.5,709.2 1003.3,707.5 1004.2,700.8 1002.5,698.3 985.8,696.7 978.3,675.8 974.2,673.3 974.2,668.3 975.4,654.2 977.5,649.2 981.7,644.6 988.3,646.2 999.2,647.0 1005.0,646.7 1007.5,644.0 1006.7,640.0 1010.0,635.8 1016.2,631.0 1033.8,622.5 1053.8,621.0 1052.5,611.0 1043.8,598.8 1043.8,591.0 1056.0,580.0 1050.0,573.8 1050.0,567.5" fill="#cccccc"/><polygon points="1088.8,520.6 1105.0,520.6 1132.5,523.8 1139.4,536.9 1158.8,536.9 1166.0,550.0 1170.0,555.0 1180.0,567.5 1191.0,576.0 1201.0,585.0 1207.5,590.0 1211.0,601.0 1205.0,607.5 1211.0,619.0 1220.0,628.8 1226.0,642.5 1233.8,652.5 1242.5,653.8 1245.0,657.5 1250.0,660.0 1278.8,696.2 1353.8,705.0 1366.7,725.0 1347.7,780.6 1262.4,810.4 1178.4,821.9 1152.5,835.0 1132.5,861.2 1138.8,795.6 1143.7,770.0 1147.6,733.3 1152.8,702.2 1156.0,675.0 1152.5,660.0 1135.0,650.0 1132.5,637.5 1132.0,602.5 1121.0,598.0 1108.8,592.0 1086.0,584.0 1067.5,573.8 1060.0,566.0 1060.0,560.0 1068.8,550.0 1078.8,532.5 1086.0,527.5" fill="#cccccc"/><polygon points="890.0,547.5 906.0,538.8 931.2,528.8 956.2,526.9 980.0,528.8 987.5,531.0 993.8,537.5 1002.5,535.0 1006.0,540.6 1017.5,543.0 1023.8,540.0 1031.2,550.0 1035.0,556.0 1055.0,565.0 1060.0,566.0 1050.0,567.5 1050.0,573.8 1046.0,578.0 1038.8,578.0 1028.8,571.0 1013.8,577.5 1005.0,586.0 985.0,597.5 980.0,602.5 978.8,610.0 972.5,617.5 960.0,622.5 937.5,622.5 917.5,628.8 915.0,612.5 916.0,600.0 911.0,597.5 913.8,586.0 922.5,576.0 915.0,570.0 911.0,557.5 900.0,550.0" fill="none" stroke="#a4a4a4" stroke-width="2.8"/><polygon points="980.0,602.5 985.0,597.5 1005.0,586.0 1013.8,577.5 1028.8,571.0 1038.8,578.0 1046.0,578.0 1050.0,573.8 1056.0,580.0 1043.8,591.0 1043.8,598.8 1052.5,611.0 1053.8,621.0 1033.8,622.5 1016.2,631.0 1010.0,635.8 1006.7,640.0 1007.5,644.0 1005.0,646.7 999.2,647.0 988.3,646.2 981.7,644.6 977.5,649.2 973.3,642.5 970.8,637.5 965.0,635.0 964.2,630.0 965.0,625.0 960.0,622.5 972.5,617.5 978.8,610.0" fill="none" stroke="#a4a4a4" stroke-width="2.8"/><polygon points="1060.0,566.0 1067.5,573.8 1086.0,584.0 1108.8,592.0 1121.0,598.0 1132.0,602.5 1132.5,637.5 1135.0,650.0 1152.5,660.0 1156.0,675.0 1152.8,702.2 1147.6,733.3 1143.7,770.0 1138.8,795.6 1102.5,800.0 1071.2,803.0 1047.5,796.2 1037.5,787.5 1031.2,777.5 1032.5,765.0 1022.5,753.8 1015.0,740.0 1017.5,723.8 1017.5,710.0 1010.0,708.8 1007.5,709.2 1003.3,707.5 1004.2,700.8 1002.5,698.3 985.8,696.7 978.3,675.8 974.2,673.3 974.2,668.3 975.4,654.2 977.5,649.2 981.7,644.6 988.3,646.2 999.2,647.0 1005.0,646.7 1007.5,644.0 1006.7,640.0 1010.0,635.8 1016.2,631.0 1033.8,622.5 1053.8,621.0 1052.5,611.0 1043.8,598.8 1043.8,591.0 1056.0,580.0 1050.0,573.8 1050.0,567.5" fill="none" stroke="#a4a4a4" stroke-width="2.8"/><polygon points="878.8,683.8 886.2,682.5 895.0,690.0 902.5,691.2 915.0,692.5 916.2,702.5 922.5,710.0 930.0,706.2 936.7,707.9 938.3,705.0 954.2,691.7 959.2,689.2 954.2,685.0 955.0,683.3 968.3,676.7 967.5,669.2 971.7,667.9 974.2,668.3 974.2,673.3 978.3,675.8 985.8,696.7 1002.5,698.3 1004.2,700.8 1003.3,707.5 1007.5,709.2 1010.0,708.8 1017.5,710.0 1017.5,723.8 1015.0,740.0 1022.5,753.8 1010.0,755.6 1002.2,758.3 988.3,768.5 981.9,771.3 975.4,767.6 974.4,763.0 961.5,764.8 957.8,759.3 954.1,760.2 953.1,768.5 946.7,775.0 941.1,779.6 944.8,781.5 944.8,788.9 945.7,795.4 953.1,800.0 956.9,798.1 958.7,789.8 967.0,787.0 970.7,788.0 971.7,798.1 969.8,802.8 959.6,805.6 957.8,809.3 957.8,814.8 967.0,818.5 968.9,827.8 963.3,835.2 953.1,820.4 949.4,807.4 941.1,791.7 930.0,781.5 921.2,775.0 910.0,770.0 897.5,753.8 892.5,742.5 888.0,725.0 890.0,708.8" fill="none" stroke="#a4a4a4" stroke-width="2.8"/><polygon points="1047.5,796.2 1071.2,803.0 1102.5,800.0 1138.8,795.6 1132.5,861.2 1128.8,865.0 1120.0,868.8 1111.2,860.0 1092.5,860.0 1065.0,855.6 1038.8,856.2 1030.0,858.8 1022.5,851.2 1022.5,831.2 1035.0,818.8 1043.8,813.8 1042.5,805.0 1046.2,802.5" fill="none" stroke="#a4a4a4" stroke-width="2.8"/><polygon points="941.1,779.6 946.7,775.0 953.1,768.5 954.1,760.2 957.8,759.3 961.5,764.8 974.4,763.0 975.4,767.6 976.3,772.2 969.8,777.8 968.9,782.4 967.0,787.0 958.7,789.8 956.9,798.1 953.1,800.0 945.7,795.4 944.8,788.9 944.8,781.5" fill="none" stroke="#a4a4a4" stroke-width="2.8"/><polyline points="770.0,525.4 781.7,527.3 797.3,523.5 805.0,524.7 816.7,536.4 828.4,533.2 844.0,535.0 852.5,527.5 853.8,537.5 857.5,542.5 872.5,545.0 880.0,548.0 888.8,546.9 890.0,547.5" fill="none" stroke="#a4a4a4" stroke-width="2.8"/><polyline points="856.9,446.2 856.2,457.5 866.2,469.4 887.5,467.5 912.5,470.0 920.0,473.8 941.2,473.8 952.5,480.0 962.5,481.2 972.5,491.9 940.0,511.2 937.5,525.0 931.2,528.8" fill="none" stroke="#a4a4a4" stroke-width="2.8"/><polyline points="1088.8,520.6 1086.0,527.5 1078.8,532.5 1068.8,550.0 1060.0,560.0 1060.0,566.0" fill="none" stroke="#a4a4a4" stroke-width="2.8"/><polyline points="825.6,575.0 838.8,569.4 853.8,569.4 857.5,576.9 866.9,580.0 870.6,586.9 882.5,583.0 893.8,590.0 910.0,589.4 913.8,586.0" fill="none" stroke="#a4a4a4" stroke-width="2.8"/><polyline points="825.6,575.0 831.2,578.8 839.4,592.5 836.2,598.8 840.0,607.5 850.0,611.2 857.5,622.5 861.2,625.0 860.0,642.5 845.0,647.5 841.0,651.0" fill="none" stroke="#a4a4a4" stroke-width="2.8"/><polyline points="1022.5,851.2 1015.0,852.5" fill="none" stroke="#a4a4a4" stroke-width="2.8"/><polyline points="963.3,835.2 968.9,829.6 973.5,830.6 972.6,836.1 979.1,838.9 984.6,841.7 993.0,848.1 997.6,842.6 1002.2,838.9 1004.1,842.6 1009.6,847.2 1015.0,852.5" fill="none" stroke="#a4a4a4" stroke-width="2.8"/><polyline points="752.2,457.6 772.0,509.2" fill="none" stroke="#6e6e6e" stroke-width="3.6"/><polyline points="790.6,420.0 787.5,452.5 786.2,467.5 780.0,480.0 772.7,508.2" fill="none" stroke="#6e6e6e" stroke-width="3.6"/><polyline points="793.2,419.1 804.0,416.7 826.9,427.5 883.5,398.6 947.3,367.3 953.3,356.5 956.9,334.8 954.5,318.0 956.9,310.7 982.2,291.5 985.8,286.7" fill="none" stroke="#6e6e6e" stroke-width="3.6"/><polyline points="883.5,398.6 889.5,421.5 896.7,431.1 895.6,433.1" fill="none" stroke="#6e6e6e" stroke-width="3.6"/><polyline points="800.4,324.0 807.6,326.4 814.8,316.8 823.2,315.6 818.4,307.1 822.0,298.7 835.3,303.5 870.2,296.3 882.2,302.3 911.1,301.1 940.0,290.3 964.1,291.0 982.2,286.7 985.8,291.5 997.8,283.1 1017.1,285.5 1030.3,286.7 1037.6,285.5 1040.0,293.9 1055.0,289.0" fill="none" stroke="#6e6e6e" stroke-width="3.6"/><polyline points="1040.0,240.0 1047.1,272.0 1055.6,289.0 1071.3,321.6 1084.6,327.6 1096.7,328.8 1090.6,334.8 1094.3,348.0 1084.6,350.4 1081.0,357.7 1081.0,363.7 1075.0,370.9 1078.5,380.6 1087.0,390.2 1094.3,399.8 1094.3,409.4 1108.7,411.8 1130.4,425.0 1142.4,443.1 1138.8,455.1 1138.8,464.8 1147.2,467.2 1148.8,480.0 1157.5,488.0 1161.0,495.6" fill="none" stroke="#6e6e6e" stroke-width="3.6"/><polyline points="1105.0,520.6 1115.0,510.0 1125.0,493.0 1136.0,491.0 1147.5,494.4 1152.5,493.8 1161.0,495.6" fill="none" stroke="#6e6e6e" stroke-width="3.6"/><polyline points="800.9,361.3 813.6,361.3 819.6,373.4 812.4,383.0 802.8,392.6 793.2,402.2 787.1,407.0 777.5,407.0" fill="none" stroke="#6e6e6e" stroke-width="3.6"/><polyline points="781.1,423.9 789.5,425.1 788.3,450.4 771.5,456.4 779.9,444.4 773.9,438.4 773.9,428.7 781.1,423.9" fill="none" stroke="#6e6e6e" stroke-width="3.6"/><polyline points="690.0,724.3 828.0,724.3" fill="none" stroke="#6e6e6e" stroke-width="3.6"/><polyline points="877.3,839.0 866.9,850.8 846.1,858.5 831.9,866.3 829.3,881.9 817.6,920.8 820.2,946.7 807.2,990.8 794.3,992.1 776.1,1019.3 760.0,1060.0" fill="none" stroke="#6e6e6e" stroke-width="3.6"/><polyline points="820.2,945.4 833.2,941.5 839.7,941.5 847.4,946.7 857.8,929.9 874.7,941.5 892.8,936.3 898.0,940.2 905.8,937.6 921.4,940.2 942.1,949.3 965.4,972.7 986.2,997.3 996.6,999.9 1006.9,990.8" fill="none" stroke="#6e6e6e" stroke-width="3.6"/><polyline points="996.6,999.9 970.6,1019.3 950.0,1060.0" fill="none" stroke="#6e6e6e" stroke-width="3.6"/><polyline points="1250.0,660.0 1278.8,696.2 1353.8,705.0 1366.7,725.0 1347.7,780.6 1262.4,810.4 1178.4,821.9 1152.5,835.0 1132.5,861.2 1128.8,865.0 1120.0,868.8 1111.2,860.0 1092.5,860.0 1065.0,855.6 1038.8,856.2 1030.0,858.8 1015.0,852.5 1012.5,857.5 1011.2,870.0 1010.0,877.5 997.5,884.4" fill="none" stroke="#6e6e6e" stroke-width="3.6"/><polyline points="772.0,509.2 803.8,517.6 825.0,498.8 845.0,495.0 851.2,485.0 859.4,480.6 833.1,451.9 860.0,445.6 887.5,437.5 895.6,433.1 928.8,438.8 1052.5,516.9 1088.8,520.6 1105.0,520.6 1132.5,523.8 1139.4,536.9 1158.8,536.9" fill="none" stroke="#6e6e6e" stroke-width="3.6"/><polyline points="1353.8,705.0 1354.4,692.5 1364.4,677.5 1362.5,670.0 1376.0,665.0 1370.0,660.0 1372.5,639.4 1377.5,640.0 1380.0,645.0 1387.5,638.8" fill="none" stroke="#6e6e6e" stroke-width="3.6"/><polyline points="1262.4,810.4 1294.1,878.0" fill="none" stroke="#6e6e6e" stroke-width="3.6"/><polyline points="1315.7,284.3 1326.5,284.3 1342.1,279.4 1345.8,272.0 1369.0,258.0 1426.0,258.0 1488.0,273.0 1519.0,302.5 1540.0,320.0" fill="none" stroke="#6e6e6e" stroke-width="3.6"/></g><circle cx="45.60" cy="50.20" r="4.20" fill="#217a32"/><path d="M55.00,63.90L61.40,63.90A6.40,6.40 0 0 1 48.60,63.90Z" fill="#1d6987"/><path d="M55.00,63.90L48.60,63.90A6.40,6.40 0 0 1 61.40,63.90Z" fill="#67b22f"/><circle cx="44.50" cy="79.80" r="4.20" fill="#67b22f"/><circle cx="79.80" cy="71.30" r="4.20" fill="#217a32"/></svg><svg class="abs" style="left:1411.1px;top:398.5px" width="117.4" height="116.7" viewBox="0 0 117.4 116.7"><rect width="117.4" height="116.7" fill="#f0f0f0"/><g transform="matrix(0.1425,0,0,0.1422,-98.9,-35.5)" vector-effect="non-scaling-stroke"><polygon points="690.0,313.0 750.0,309.7 762.8,300.3 767.8,300.3 772.2,301.4 782.2,306.1 790.0,306.1 794.4,300.8 802.2,296.7 806.7,297.8 808.3,302.2 807.8,303.9 798.3,313.3 801.6,324.0 796.0,334.8 801.6,345.7 800.9,361.3 792.0,375.8 783.5,395.0 777.5,407.0 771.5,428.7 765.5,440.8 759.4,450.4 752.2,457.6 740.0,462.0 720.0,472.0 700.0,492.0 690.0,496.0" fill="#ffffff" stroke="#9a9a9a" stroke-width="3"/><polygon points="735.0,336.0 748.0,332.0 761.9,332.4 756.0,336.0 749.8,338.4 738.0,340.0" fill="#f0f0f0" stroke="#9a9a9a" stroke-width="3"/><polygon points="1168.0,240.0 1176.1,272.0 1183.3,275.8 1200.2,280.6 1212.2,284.3 1219.4,292.7 1238.7,302.3 1260.3,305.9 1306.0,297.5 1319.3,298.7 1316.5,284.0 1318.0,272.0 1326.0,240.0" fill="#ffffff" stroke="#9a9a9a" stroke-width="3"/><polygon points="772.0,509.2 770.0,525.4 765.5,544.9 763.6,550.0 774.0,550.0 780.4,554.0 790.8,565.6 805.0,583.8 815.4,599.3 823.2,613.6 827.5,620.0 836.0,635.0 837.5,645.0 845.0,655.0 862.5,665.0 875.0,677.5 878.8,685.0 890.0,708.8 888.0,725.0 892.5,742.5 897.5,753.8 910.0,770.0 921.2,775.0 930.0,781.5 941.1,791.7 949.4,807.4 953.1,820.4 963.3,835.2 976.3,850.0 981.2,850.0 985.0,857.5 987.5,865.0 993.8,876.2 997.5,885.0 1001.7,905.2 1004.3,926.0 1006.9,946.7 1012.1,972.7 1017.3,988.2 1032.9,993.4 1056.2,988.2 1071.8,983.0 1085.0,980.4 1111.3,970.0 1145.0,953.2 1165.7,951.9 1178.7,938.9 1194.3,931.1 1235.7,918.2 1266.9,906.5 1268.2,893.5 1277.2,881.9 1292.8,876.7 1316.1,870.2 1323.9,866.3 1342.0,868.9 1355.0,858.5 1356.3,848.2 1362.8,843.0 1386.1,840.4 1393.9,827.4 1403.0,815.7 1436.0,813.0 1459.0,782.6 1498.0,743.0 1530.0,740.0 1530.0,1090.0 1248.0,1090.0 1248.0,1023.0 1241.0,1017.0 1230.0,1013.0 1216.3,1019.3 1155.0,1040.0 1038.0,1047.0 1004.0,1020.0 1014.7,1009.0 1006.9,990.8 983.6,972.7 962.8,949.3 931.7,928.6 921.4,920.8 916.2,913.0 911.0,919.5 900.6,897.4 894.1,881.9 885.0,856.0 874.7,837.8 864.3,830.0 853.9,820.9 843.5,811.9 838.4,780.7 836.2,755.0 836.2,747.5 830.0,737.5 828.0,724.3 822.8,715.2 793.0,691.9 787.8,681.5 787.8,669.9 794.3,668.6 778.8,652.5 765.0,627.5 761.0,620.0 750.3,600.0 700.0,512.0 694.0,504.0 698.0,502.0 750.3,558.5 751.9,557.8 757.7,552.6 758.4,544.9 763.6,531.9 767.5,515.0" fill="#ffffff" stroke="#a0a0a0" stroke-width="3"/><polygon points="1300.6,996.0 1310.0,990.0 1323.9,989.5 1333.0,996.0 1316.1,1002.4 1303.2,1001.1" fill="#f0f0f0" stroke="#a0a0a0" stroke-width="3"/><polygon points="1161.0,495.6 1173.8,493.8 1174.4,485.0 1183.8,490.0 1192.5,493.0 1203.8,489.4 1207.5,491.0 1211.0,499.4 1222.0,510.0 1223.8,518.8 1230.0,522.5 1230.0,527.0 1234.4,530.0 1237.5,540.0 1245.0,553.0 1252.5,556.0 1263.8,557.5 1276.0,565.0 1281.0,570.0 1286.0,574.0 1301.0,580.6 1310.0,588.0 1327.5,589.4 1340.0,594.4 1355.0,587.5 1370.0,580.0 1387.5,575.6 1396.0,576.0 1402.5,582.5 1440.0,600.0 1480.0,615.0 1530.0,625.0 1530.0,705.0 1498.0,711.6 1428.0,676.0 1402.5,661.2 1392.5,650.0 1387.5,638.8 1386.2,620.0 1388.8,605.0 1387.5,599.4 1380.0,607.5 1373.8,615.0 1360.0,625.0 1352.5,632.5 1338.8,645.0 1336.2,650.0 1328.8,655.0 1320.0,662.5 1313.8,663.8 1280.0,662.5 1257.5,666.2 1251.2,661.2 1245.0,657.5 1243.8,650.0 1250.0,635.0 1249.4,613.8 1240.0,605.6 1232.5,610.0 1227.5,623.8 1227.5,645.0 1226.0,642.5 1220.0,628.8 1211.0,619.0 1205.0,607.5 1211.0,601.0 1207.5,590.0 1201.0,585.0 1191.0,576.0 1180.0,567.5 1170.0,555.0 1158.8,536.9 1158.8,532.5 1152.5,525.0 1150.0,515.0 1141.0,512.5 1147.5,507.5 1157.5,500.0" fill="#ffffff" stroke="#a0a0a0" stroke-width="3"/><polygon points="772.0,509.2 803.8,517.6 825.0,498.8 845.0,495.0 851.2,485.0 859.4,480.6 833.1,451.9 860.0,445.6 887.5,437.5 895.6,433.1 928.8,438.8 1052.5,516.9 1088.8,520.6 1105.0,520.6 1132.5,523.8 1139.4,536.9 1158.8,536.9 1166.0,550.0 1170.0,555.0 1180.0,567.5 1191.0,576.0 1201.0,585.0 1207.5,590.0 1211.0,601.0 1205.0,607.5 1211.0,619.0 1220.0,628.8 1226.0,642.5 1233.8,652.5 1242.5,653.8 1245.0,657.5 1250.0,660.0 1278.8,696.2 1353.8,705.0 1366.7,725.0 1347.7,780.6 1262.4,810.4 1178.4,821.9 1152.5,835.0 1132.5,861.2 1128.8,865.0 1120.0,868.8 1111.2,860.0 1092.5,860.0 1065.0,855.6 1038.8,856.2 1030.0,858.8 1015.0,852.5 1012.5,857.5 1011.2,870.0 1010.0,877.5 997.5,884.4 993.8,876.2 987.5,865.0 985.0,857.5 981.2,850.0 976.3,850.0 963.3,835.2 953.1,820.4 949.4,807.4 941.1,791.7 930.0,781.5 921.2,775.0 910.0,770.0 897.5,753.8 892.5,742.5 888.0,725.0 890.0,708.8 878.8,685.0 875.0,677.5 862.5,665.0 845.0,655.0 837.5,645.0 836.0,635.0 827.5,620.0 823.2,613.6 815.4,599.3 805.0,583.8 790.8,565.6 780.4,554.0 774.0,550.0 763.6,550.0 765.5,544.9 770.0,525.4" fill="#e0e0e0"/><polygon points="1060.0,566.0 1067.5,573.8 1086.0,584.0 1108.8,592.0 1121.0,598.0 1132.0,602.5 1132.5,637.5 1135.0,650.0 1152.5,660.0 1156.0,675.0 1152.8,702.2 1147.6,733.3 1143.7,770.0 1138.8,795.6 1102.5,800.0 1071.2,803.0 1047.5,796.2 1037.5,787.5 1031.2,777.5 1032.5,765.0 1022.5,753.8 1015.0,740.0 1017.5,723.8 1017.5,710.0 1010.0,708.8 1007.5,709.2 1003.3,707.5 1004.2,700.8 1002.5,698.3 985.8,696.7 978.3,675.8 974.2,673.3 974.2,668.3 975.4,654.2 977.5,649.2 981.7,644.6 988.3,646.2 999.2,647.0 1005.0,646.7 1007.5,644.0 1006.7,640.0 1010.0,635.8 1016.2,631.0 1033.8,622.5 1053.8,621.0 1052.5,611.0 1043.8,598.8 1043.8,591.0 1056.0,580.0 1050.0,573.8 1050.0,567.5" fill="#cccccc"/><polygon points="878.8,683.8 886.2,682.5 895.0,690.0 902.5,691.2 915.0,692.5 916.2,702.5 922.5,710.0 930.0,706.2 936.7,707.9 938.3,705.0 954.2,691.7 959.2,689.2 954.2,685.0 955.0,683.3 968.3,676.7 967.5,669.2 971.7,667.9 974.2,668.3 974.2,673.3 978.3,675.8 985.8,696.7 1002.5,698.3 1004.2,700.8 1003.3,707.5 1007.5,709.2 1010.0,708.8 1017.5,710.0 1017.5,723.8 1015.0,740.0 1022.5,753.8 1010.0,755.6 1002.2,758.3 988.3,768.5 981.9,771.3 975.4,767.6 974.4,763.0 961.5,764.8 957.8,759.3 954.1,760.2 953.1,768.5 946.7,775.0 941.1,779.6 944.8,781.5 944.8,788.9 945.7,795.4 953.1,800.0 956.9,798.1 958.7,789.8 967.0,787.0 970.7,788.0 971.7,798.1 969.8,802.8 959.6,805.6 957.8,809.3 957.8,814.8 967.0,818.5 968.9,827.8 963.3,835.2 953.1,820.4 949.4,807.4 941.1,791.7 930.0,781.5 921.2,775.0 910.0,770.0 897.5,753.8 892.5,742.5 888.0,725.0 890.0,708.8" fill="#cccccc"/><polygon points="890.0,547.5 906.0,538.8 931.2,528.8 956.2,526.9 980.0,528.8 987.5,531.0 993.8,537.5 1002.5,535.0 1006.0,540.6 1017.5,543.0 1023.8,540.0 1031.2,550.0 1035.0,556.0 1055.0,565.0 1060.0,566.0 1050.0,567.5 1050.0,573.8 1046.0,578.0 1038.8,578.0 1028.8,571.0 1013.8,577.5 1005.0,586.0 985.0,597.5 980.0,602.5 978.8,610.0 972.5,617.5 960.0,622.5 937.5,622.5 917.5,628.8 915.0,612.5 916.0,600.0 911.0,597.5 913.8,586.0 922.5,576.0 915.0,570.0 911.0,557.5 900.0,550.0" fill="none" stroke="#a4a4a4" stroke-width="2.8"/><polygon points="980.0,602.5 985.0,597.5 1005.0,586.0 1013.8,577.5 1028.8,571.0 1038.8,578.0 1046.0,578.0 1050.0,573.8 1056.0,580.0 1043.8,591.0 1043.8,598.8 1052.5,611.0 1053.8,621.0 1033.8,622.5 1016.2,631.0 1010.0,635.8 1006.7,640.0 1007.5,644.0 1005.0,646.7 999.2,647.0 988.3,646.2 981.7,644.6 977.5,649.2 973.3,642.5 970.8,637.5 965.0,635.0 964.2,630.0 965.0,625.0 960.0,622.5 972.5,617.5 978.8,610.0" fill="none" stroke="#a4a4a4" stroke-width="2.8"/><polygon points="1060.0,566.0 1067.5,573.8 1086.0,584.0 1108.8,592.0 1121.0,598.0 1132.0,602.5 1132.5,637.5 1135.0,650.0 1152.5,660.0 1156.0,675.0 1152.8,702.2 1147.6,733.3 1143.7,770.0 1138.8,795.6 1102.5,800.0 1071.2,803.0 1047.5,796.2 1037.5,787.5 1031.2,777.5 1032.5,765.0 1022.5,753.8 1015.0,740.0 1017.5,723.8 1017.5,710.0 1010.0,708.8 1007.5,709.2 1003.3,707.5 1004.2,700.8 1002.5,698.3 985.8,696.7 978.3,675.8 974.2,673.3 974.2,668.3 975.4,654.2 977.5,649.2 981.7,644.6 988.3,646.2 999.2,647.0 1005.0,646.7 1007.5,644.0 1006.7,640.0 1010.0,635.8 1016.2,631.0 1033.8,622.5 1053.8,621.0 1052.5,611.0 1043.8,598.8 1043.8,591.0 1056.0,580.0 1050.0,573.8 1050.0,567.5" fill="none" stroke="#a4a4a4" stroke-width="2.8"/><polygon points="878.8,683.8 886.2,682.5 895.0,690.0 902.5,691.2 915.0,692.5 916.2,702.5 922.5,710.0 930.0,706.2 936.7,707.9 938.3,705.0 954.2,691.7 959.2,689.2 954.2,685.0 955.0,683.3 968.3,676.7 967.5,669.2 971.7,667.9 974.2,668.3 974.2,673.3 978.3,675.8 985.8,696.7 1002.5,698.3 1004.2,700.8 1003.3,707.5 1007.5,709.2 1010.0,708.8 1017.5,710.0 1017.5,723.8 1015.0,740.0 1022.5,753.8 1010.0,755.6 1002.2,758.3 988.3,768.5 981.9,771.3 975.4,767.6 974.4,763.0 961.5,764.8 957.8,759.3 954.1,760.2 953.1,768.5 946.7,775.0 941.1,779.6 944.8,781.5 944.8,788.9 945.7,795.4 953.1,800.0 956.9,798.1 958.7,789.8 967.0,787.0 970.7,788.0 971.7,798.1 969.8,802.8 959.6,805.6 957.8,809.3 957.8,814.8 967.0,818.5 968.9,827.8 963.3,835.2 953.1,820.4 949.4,807.4 941.1,791.7 930.0,781.5 921.2,775.0 910.0,770.0 897.5,753.8 892.5,742.5 888.0,725.0 890.0,708.8" fill="none" stroke="#a4a4a4" stroke-width="2.8"/><polygon points="1047.5,796.2 1071.2,803.0 1102.5,800.0 1138.8,795.6 1132.5,861.2 1128.8,865.0 1120.0,868.8 1111.2,860.0 1092.5,860.0 1065.0,855.6 1038.8,856.2 1030.0,858.8 1022.5,851.2 1022.5,831.2 1035.0,818.8 1043.8,813.8 1042.5,805.0 1046.2,802.5" fill="none" stroke="#a4a4a4" stroke-width="2.8"/><polygon points="941.1,779.6 946.7,775.0 953.1,768.5 954.1,760.2 957.8,759.3 961.5,764.8 974.4,763.0 975.4,767.6 976.3,772.2 969.8,777.8 968.9,782.4 967.0,787.0 958.7,789.8 956.9,798.1 953.1,800.0 945.7,795.4 944.8,788.9 944.8,781.5" fill="none" stroke="#a4a4a4" stroke-width="2.8"/><polyline points="770.0,525.4 781.7,527.3 797.3,523.5 805.0,524.7 816.7,536.4 828.4,533.2 844.0,535.0 852.5,527.5 853.8,537.5 857.5,542.5 872.5,545.0 880.0,548.0 888.8,546.9 890.0,547.5" fill="none" stroke="#a4a4a4" stroke-width="2.8"/><polyline points="856.9,446.2 856.2,457.5 866.2,469.4 887.5,467.5 912.5,470.0 920.0,473.8 941.2,473.8 952.5,480.0 962.5,481.2 972.5,491.9 940.0,511.2 937.5,525.0 931.2,528.8" fill="none" stroke="#a4a4a4" stroke-width="2.8"/><polyline points="1088.8,520.6 1086.0,527.5 1078.8,532.5 1068.8,550.0 1060.0,560.0 1060.0,566.0" fill="none" stroke="#a4a4a4" stroke-width="2.8"/><polyline points="825.6,575.0 838.8,569.4 853.8,569.4 857.5,576.9 866.9,580.0 870.6,586.9 882.5,583.0 893.8,590.0 910.0,589.4 913.8,586.0" fill="none" stroke="#a4a4a4" stroke-width="2.8"/><polyline points="825.6,575.0 831.2,578.8 839.4,592.5 836.2,598.8 840.0,607.5 850.0,611.2 857.5,622.5 861.2,625.0 860.0,642.5 845.0,647.5 841.0,651.0" fill="none" stroke="#a4a4a4" stroke-width="2.8"/><polyline points="1022.5,851.2 1015.0,852.5" fill="none" stroke="#a4a4a4" stroke-width="2.8"/><polyline points="963.3,835.2 968.9,829.6 973.5,830.6 972.6,836.1 979.1,838.9 984.6,841.7 993.0,848.1 997.6,842.6 1002.2,838.9 1004.1,842.6 1009.6,847.2 1015.0,852.5" fill="none" stroke="#a4a4a4" stroke-width="2.8"/><polyline points="752.2,457.6 772.0,509.2" fill="none" stroke="#6e6e6e" stroke-width="3.6"/><polyline points="790.6,420.0 787.5,452.5 786.2,467.5 780.0,480.0 772.7,508.2" fill="none" stroke="#6e6e6e" stroke-width="3.6"/><polyline points="793.2,419.1 804.0,416.7 826.9,427.5 883.5,398.6 947.3,367.3 953.3,356.5 956.9,334.8 954.5,318.0 956.9,310.7 982.2,291.5 985.8,286.7" fill="none" stroke="#6e6e6e" stroke-width="3.6"/><polyline points="883.5,398.6 889.5,421.5 896.7,431.1 895.6,433.1" fill="none" stroke="#6e6e6e" stroke-width="3.6"/><polyline points="800.4,324.0 807.6,326.4 814.8,316.8 823.2,315.6 818.4,307.1 822.0,298.7 835.3,303.5 870.2,296.3 882.2,302.3 911.1,301.1 940.0,290.3 964.1,291.0 982.2,286.7 985.8,291.5 997.8,283.1 1017.1,285.5 1030.3,286.7 1037.6,285.5 1040.0,293.9 1055.0,289.0" fill="none" stroke="#6e6e6e" stroke-width="3.6"/><polyline points="1040.0,240.0 1047.1,272.0 1055.6,289.0 1071.3,321.6 1084.6,327.6 1096.7,328.8 1090.6,334.8 1094.3,348.0 1084.6,350.4 1081.0,357.7 1081.0,363.7 1075.0,370.9 1078.5,380.6 1087.0,390.2 1094.3,399.8 1094.3,409.4 1108.7,411.8 1130.4,425.0 1142.4,443.1 1138.8,455.1 1138.8,464.8 1147.2,467.2 1148.8,480.0 1157.5,488.0 1161.0,495.6" fill="none" stroke="#6e6e6e" stroke-width="3.6"/><polyline points="1105.0,520.6 1115.0,510.0 1125.0,493.0 1136.0,491.0 1147.5,494.4 1152.5,493.8 1161.0,495.6" fill="none" stroke="#6e6e6e" stroke-width="3.6"/><polyline points="800.9,361.3 813.6,361.3 819.6,373.4 812.4,383.0 802.8,392.6 793.2,402.2 787.1,407.0 777.5,407.0" fill="none" stroke="#6e6e6e" stroke-width="3.6"/><polyline points="781.1,423.9 789.5,425.1 788.3,450.4 771.5,456.4 779.9,444.4 773.9,438.4 773.9,428.7 781.1,423.9" fill="none" stroke="#6e6e6e" stroke-width="3.6"/><polyline points="690.0,724.3 828.0,724.3" fill="none" stroke="#6e6e6e" stroke-width="3.6"/><polyline points="877.3,839.0 866.9,850.8 846.1,858.5 831.9,866.3 829.3,881.9 817.6,920.8 820.2,946.7 807.2,990.8 794.3,992.1 776.1,1019.3 760.0,1060.0" fill="none" stroke="#6e6e6e" stroke-width="3.6"/><polyline points="820.2,945.4 833.2,941.5 839.7,941.5 847.4,946.7 857.8,929.9 874.7,941.5 892.8,936.3 898.0,940.2 905.8,937.6 921.4,940.2 942.1,949.3 965.4,972.7 986.2,997.3 996.6,999.9 1006.9,990.8" fill="none" stroke="#6e6e6e" stroke-width="3.6"/><polyline points="996.6,999.9 970.6,1019.3 950.0,1060.0" fill="none" stroke="#6e6e6e" stroke-width="3.6"/><polyline points="1250.0,660.0 1278.8,696.2 1353.8,705.0 1366.7,725.0 1347.7,780.6 1262.4,810.4 1178.4,821.9 1152.5,835.0 1132.5,861.2 1128.8,865.0 1120.0,868.8 1111.2,860.0 1092.5,860.0 1065.0,855.6 1038.8,856.2 1030.0,858.8 1015.0,852.5 1012.5,857.5 1011.2,870.0 1010.0,877.5 997.5,884.4" fill="none" stroke="#6e6e6e" stroke-width="3.6"/><polyline points="772.0,509.2 803.8,517.6 825.0,498.8 845.0,495.0 851.2,485.0 859.4,480.6 833.1,451.9 860.0,445.6 887.5,437.5 895.6,433.1 928.8,438.8 1052.5,516.9 1088.8,520.6 1105.0,520.6 1132.5,523.8 1139.4,536.9 1158.8,536.9" fill="none" stroke="#6e6e6e" stroke-width="3.6"/><polyline points="1353.8,705.0 1354.4,692.5 1364.4,677.5 1362.5,670.0 1376.0,665.0 1370.0,660.0 1372.5,639.4 1377.5,640.0 1380.0,645.0 1387.5,638.8" fill="none" stroke="#6e6e6e" stroke-width="3.6"/><polyline points="1262.4,810.4 1294.1,878.0" fill="none" stroke="#6e6e6e" stroke-width="3.6"/><polyline points="1315.7,284.3 1326.5,284.3 1342.1,279.4 1345.8,272.0 1369.0,258.0 1426.0,258.0 1488.0,273.0 1519.0,302.5 1540.0,320.0" fill="none" stroke="#6e6e6e" stroke-width="3.6"/></g><circle cx="54.90" cy="64.10" r="6.40" fill="#67b22f"/><path d="M37.60,70.70L43.60,70.70A6.00,6.00 0 0 1 31.60,70.70Z" fill="#217a32"/><path d="M37.60,70.70L31.60,70.70A6.00,6.00 0 0 1 43.60,70.70Z" fill="#67b22f"/></svg><svg class="abs" style="left:1538.0px;top:398.5px" width="117.4" height="116.7" viewBox="0 0 117.4 116.7"><rect width="117.4" height="116.7" fill="#f0f0f0"/><g transform="matrix(0.1425,0,0,0.1422,-98.9,-35.5)" vector-effect="non-scaling-stroke"><polygon points="690.0,313.0 750.0,309.7 762.8,300.3 767.8,300.3 772.2,301.4 782.2,306.1 790.0,306.1 794.4,300.8 802.2,296.7 806.7,297.8 808.3,302.2 807.8,303.9 798.3,313.3 801.6,324.0 796.0,334.8 801.6,345.7 800.9,361.3 792.0,375.8 783.5,395.0 777.5,407.0 771.5,428.7 765.5,440.8 759.4,450.4 752.2,457.6 740.0,462.0 720.0,472.0 700.0,492.0 690.0,496.0" fill="#ffffff" stroke="#9a9a9a" stroke-width="3"/><polygon points="735.0,336.0 748.0,332.0 761.9,332.4 756.0,336.0 749.8,338.4 738.0,340.0" fill="#f0f0f0" stroke="#9a9a9a" stroke-width="3"/><polygon points="1168.0,240.0 1176.1,272.0 1183.3,275.8 1200.2,280.6 1212.2,284.3 1219.4,292.7 1238.7,302.3 1260.3,305.9 1306.0,297.5 1319.3,298.7 1316.5,284.0 1318.0,272.0 1326.0,240.0" fill="#ffffff" stroke="#9a9a9a" stroke-width="3"/><polygon points="772.0,509.2 770.0,525.4 765.5,544.9 763.6,550.0 774.0,550.0 780.4,554.0 790.8,565.6 805.0,583.8 815.4,599.3 823.2,613.6 827.5,620.0 836.0,635.0 837.5,645.0 845.0,655.0 862.5,665.0 875.0,677.5 878.8,685.0 890.0,708.8 888.0,725.0 892.5,742.5 897.5,753.8 910.0,770.0 921.2,775.0 930.0,781.5 941.1,791.7 949.4,807.4 953.1,820.4 963.3,835.2 976.3,850.0 981.2,850.0 985.0,857.5 987.5,865.0 993.8,876.2 997.5,885.0 1001.7,905.2 1004.3,926.0 1006.9,946.7 1012.1,972.7 1017.3,988.2 1032.9,993.4 1056.2,988.2 1071.8,983.0 1085.0,980.4 1111.3,970.0 1145.0,953.2 1165.7,951.9 1178.7,938.9 1194.3,931.1 1235.7,918.2 1266.9,906.5 1268.2,893.5 1277.2,881.9 1292.8,876.7 1316.1,870.2 1323.9,866.3 1342.0,868.9 1355.0,858.5 1356.3,848.2 1362.8,843.0 1386.1,840.4 1393.9,827.4 1403.0,815.7 1436.0,813.0 1459.0,782.6 1498.0,743.0 1530.0,740.0 1530.0,1090.0 1248.0,1090.0 1248.0,1023.0 1241.0,1017.0 1230.0,1013.0 1216.3,1019.3 1155.0,1040.0 1038.0,1047.0 1004.0,1020.0 1014.7,1009.0 1006.9,990.8 983.6,972.7 962.8,949.3 931.7,928.6 921.4,920.8 916.2,913.0 911.0,919.5 900.6,897.4 894.1,881.9 885.0,856.0 874.7,837.8 864.3,830.0 853.9,820.9 843.5,811.9 838.4,780.7 836.2,755.0 836.2,747.5 830.0,737.5 828.0,724.3 822.8,715.2 793.0,691.9 787.8,681.5 787.8,669.9 794.3,668.6 778.8,652.5 765.0,627.5 761.0,620.0 750.3,600.0 700.0,512.0 694.0,504.0 698.0,502.0 750.3,558.5 751.9,557.8 757.7,552.6 758.4,544.9 763.6,531.9 767.5,515.0" fill="#ffffff" stroke="#a0a0a0" stroke-width="3"/><polygon points="1300.6,996.0 1310.0,990.0 1323.9,989.5 1333.0,996.0 1316.1,1002.4 1303.2,1001.1" fill="#f0f0f0" stroke="#a0a0a0" stroke-width="3"/><polygon points="1161.0,495.6 1173.8,493.8 1174.4,485.0 1183.8,490.0 1192.5,493.0 1203.8,489.4 1207.5,491.0 1211.0,499.4 1222.0,510.0 1223.8,518.8 1230.0,522.5 1230.0,527.0 1234.4,530.0 1237.5,540.0 1245.0,553.0 1252.5,556.0 1263.8,557.5 1276.0,565.0 1281.0,570.0 1286.0,574.0 1301.0,580.6 1310.0,588.0 1327.5,589.4 1340.0,594.4 1355.0,587.5 1370.0,580.0 1387.5,575.6 1396.0,576.0 1402.5,582.5 1440.0,600.0 1480.0,615.0 1530.0,625.0 1530.0,705.0 1498.0,711.6 1428.0,676.0 1402.5,661.2 1392.5,650.0 1387.5,638.8 1386.2,620.0 1388.8,605.0 1387.5,599.4 1380.0,607.5 1373.8,615.0 1360.0,625.0 1352.5,632.5 1338.8,645.0 1336.2,650.0 1328.8,655.0 1320.0,662.5 1313.8,663.8 1280.0,662.5 1257.5,666.2 1251.2,661.2 1245.0,657.5 1243.8,650.0 1250.0,635.0 1249.4,613.8 1240.0,605.6 1232.5,610.0 1227.5,623.8 1227.5,645.0 1226.0,642.5 1220.0,628.8 1211.0,619.0 1205.0,607.5 1211.0,601.0 1207.5,590.0 1201.0,585.0 1191.0,576.0 1180.0,567.5 1170.0,555.0 1158.8,536.9 1158.8,532.5 1152.5,525.0 1150.0,515.0 1141.0,512.5 1147.5,507.5 1157.5,500.0" fill="#ffffff" stroke="#a0a0a0" stroke-width="3"/><polygon points="772.0,509.2 803.8,517.6 825.0,498.8 845.0,495.0 851.2,485.0 859.4,480.6 833.1,451.9 860.0,445.6 887.5,437.5 895.6,433.1 928.8,438.8 1052.5,516.9 1088.8,520.6 1105.0,520.6 1132.5,523.8 1139.4,536.9 1158.8,536.9 1166.0,550.0 1170.0,555.0 1180.0,567.5 1191.0,576.0 1201.0,585.0 1207.5,590.0 1211.0,601.0 1205.0,607.5 1211.0,619.0 1220.0,628.8 1226.0,642.5 1233.8,652.5 1242.5,653.8 1245.0,657.5 1250.0,660.0 1278.8,696.2 1353.8,705.0 1366.7,725.0 1347.7,780.6 1262.4,810.4 1178.4,821.9 1152.5,835.0 1132.5,861.2 1128.8,865.0 1120.0,868.8 1111.2,860.0 1092.5,860.0 1065.0,855.6 1038.8,856.2 1030.0,858.8 1015.0,852.5 1012.5,857.5 1011.2,870.0 1010.0,877.5 997.5,884.4 993.8,876.2 987.5,865.0 985.0,857.5 981.2,850.0 976.3,850.0 963.3,835.2 953.1,820.4 949.4,807.4 941.1,791.7 930.0,781.5 921.2,775.0 910.0,770.0 897.5,753.8 892.5,742.5 888.0,725.0 890.0,708.8 878.8,685.0 875.0,677.5 862.5,665.0 845.0,655.0 837.5,645.0 836.0,635.0 827.5,620.0 823.2,613.6 815.4,599.3 805.0,583.8 790.8,565.6 780.4,554.0 774.0,550.0 763.6,550.0 765.5,544.9 770.0,525.4" fill="#e0e0e0"/><polygon points="1060.0,566.0 1067.5,573.8 1086.0,584.0 1108.8,592.0 1121.0,598.0 1132.0,602.5 1132.5,637.5 1135.0,650.0 1152.5,660.0 1156.0,675.0 1152.8,702.2 1147.6,733.3 1143.7,770.0 1138.8,795.6 1102.5,800.0 1071.2,803.0 1047.5,796.2 1037.5,787.5 1031.2,777.5 1032.5,765.0 1022.5,753.8 1015.0,740.0 1017.5,723.8 1017.5,710.0 1010.0,708.8 1007.5,709.2 1003.3,707.5 1004.2,700.8 1002.5,698.3 985.8,696.7 978.3,675.8 974.2,673.3 974.2,668.3 975.4,654.2 977.5,649.2 981.7,644.6 988.3,646.2 999.2,647.0 1005.0,646.7 1007.5,644.0 1006.7,640.0 1010.0,635.8 1016.2,631.0 1033.8,622.5 1053.8,621.0 1052.5,611.0 1043.8,598.8 1043.8,591.0 1056.0,580.0 1050.0,573.8 1050.0,567.5" fill="#cccccc"/><polygon points="1088.8,520.6 1105.0,520.6 1132.5,523.8 1139.4,536.9 1158.8,536.9 1166.0,550.0 1170.0,555.0 1180.0,567.5 1191.0,576.0 1201.0,585.0 1207.5,590.0 1211.0,601.0 1205.0,607.5 1211.0,619.0 1220.0,628.8 1226.0,642.5 1233.8,652.5 1242.5,653.8 1245.0,657.5 1250.0,660.0 1278.8,696.2 1353.8,705.0 1366.7,725.0 1347.7,780.6 1262.4,810.4 1178.4,821.9 1152.5,835.0 1132.5,861.2 1138.8,795.6 1143.7,770.0 1147.6,733.3 1152.8,702.2 1156.0,675.0 1152.5,660.0 1135.0,650.0 1132.5,637.5 1132.0,602.5 1121.0,598.0 1108.8,592.0 1086.0,584.0 1067.5,573.8 1060.0,566.0 1060.0,560.0 1068.8,550.0 1078.8,532.5 1086.0,527.5" fill="#cccccc"/><polygon points="878.8,683.8 886.2,682.5 895.0,690.0 902.5,691.2 915.0,692.5 916.2,702.5 922.5,710.0 930.0,706.2 936.7,707.9 938.3,705.0 954.2,691.7 959.2,689.2 954.2,685.0 955.0,683.3 968.3,676.7 967.5,669.2 971.7,667.9 974.2,668.3 974.2,673.3 978.3,675.8 985.8,696.7 1002.5,698.3 1004.2,700.8 1003.3,707.5 1007.5,709.2 1010.0,708.8 1017.5,710.0 1017.5,723.8 1015.0,740.0 1022.5,753.8 1010.0,755.6 1002.2,758.3 988.3,768.5 981.9,771.3 975.4,767.6 974.4,763.0 961.5,764.8 957.8,759.3 954.1,760.2 953.1,768.5 946.7,775.0 941.1,779.6 944.8,781.5 944.8,788.9 945.7,795.4 953.1,800.0 956.9,798.1 958.7,789.8 967.0,787.0 970.7,788.0 971.7,798.1 969.8,802.8 959.6,805.6 957.8,809.3 957.8,814.8 967.0,818.5 968.9,827.8 963.3,835.2 953.1,820.4 949.4,807.4 941.1,791.7 930.0,781.5 921.2,775.0 910.0,770.0 897.5,753.8 892.5,742.5 888.0,725.0 890.0,708.8" fill="#cccccc"/><polygon points="890.0,547.5 906.0,538.8 931.2,528.8 956.2,526.9 980.0,528.8 987.5,531.0 993.8,537.5 1002.5,535.0 1006.0,540.6 1017.5,543.0 1023.8,540.0 1031.2,550.0 1035.0,556.0 1055.0,565.0 1060.0,566.0 1050.0,567.5 1050.0,573.8 1046.0,578.0 1038.8,578.0 1028.8,571.0 1013.8,577.5 1005.0,586.0 985.0,597.5 980.0,602.5 978.8,610.0 972.5,617.5 960.0,622.5 937.5,622.5 917.5,628.8 915.0,612.5 916.0,600.0 911.0,597.5 913.8,586.0 922.5,576.0 915.0,570.0 911.0,557.5 900.0,550.0" fill="none" stroke="#a4a4a4" stroke-width="2.8"/><polygon points="980.0,602.5 985.0,597.5 1005.0,586.0 1013.8,577.5 1028.8,571.0 1038.8,578.0 1046.0,578.0 1050.0,573.8 1056.0,580.0 1043.8,591.0 1043.8,598.8 1052.5,611.0 1053.8,621.0 1033.8,622.5 1016.2,631.0 1010.0,635.8 1006.7,640.0 1007.5,644.0 1005.0,646.7 999.2,647.0 988.3,646.2 981.7,644.6 977.5,649.2 973.3,642.5 970.8,637.5 965.0,635.0 964.2,630.0 965.0,625.0 960.0,622.5 972.5,617.5 978.8,610.0" fill="none" stroke="#a4a4a4" stroke-width="2.8"/><polygon points="1060.0,566.0 1067.5,573.8 1086.0,584.0 1108.8,592.0 1121.0,598.0 1132.0,602.5 1132.5,637.5 1135.0,650.0 1152.5,660.0 1156.0,675.0 1152.8,702.2 1147.6,733.3 1143.7,770.0 1138.8,795.6 1102.5,800.0 1071.2,803.0 1047.5,796.2 1037.5,787.5 1031.2,777.5 1032.5,765.0 1022.5,753.8 1015.0,740.0 1017.5,723.8 1017.5,710.0 1010.0,708.8 1007.5,709.2 1003.3,707.5 1004.2,700.8 1002.5,698.3 985.8,696.7 978.3,675.8 974.2,673.3 974.2,668.3 975.4,654.2 977.5,649.2 981.7,644.6 988.3,646.2 999.2,647.0 1005.0,646.7 1007.5,644.0 1006.7,640.0 1010.0,635.8 1016.2,631.0 1033.8,622.5 1053.8,621.0 1052.5,611.0 1043.8,598.8 1043.8,591.0 1056.0,580.0 1050.0,573.8 1050.0,567.5" fill="none" stroke="#a4a4a4" stroke-width="2.8"/><polygon points="878.8,683.8 886.2,682.5 895.0,690.0 902.5,691.2 915.0,692.5 916.2,702.5 922.5,710.0 930.0,706.2 936.7,707.9 938.3,705.0 954.2,691.7 959.2,689.2 954.2,685.0 955.0,683.3 968.3,676.7 967.5,669.2 971.7,667.9 974.2,668.3 974.2,673.3 978.3,675.8 985.8,696.7 1002.5,698.3 1004.2,700.8 1003.3,707.5 1007.5,709.2 1010.0,708.8 1017.5,710.0 1017.5,723.8 1015.0,740.0 1022.5,753.8 1010.0,755.6 1002.2,758.3 988.3,768.5 981.9,771.3 975.4,767.6 974.4,763.0 961.5,764.8 957.8,759.3 954.1,760.2 953.1,768.5 946.7,775.0 941.1,779.6 944.8,781.5 944.8,788.9 945.7,795.4 953.1,800.0 956.9,798.1 958.7,789.8 967.0,787.0 970.7,788.0 971.7,798.1 969.8,802.8 959.6,805.6 957.8,809.3 957.8,814.8 967.0,818.5 968.9,827.8 963.3,835.2 953.1,820.4 949.4,807.4 941.1,791.7 930.0,781.5 921.2,775.0 910.0,770.0 897.5,753.8 892.5,742.5 888.0,725.0 890.0,708.8" fill="none" stroke="#a4a4a4" stroke-width="2.8"/><polygon points="1047.5,796.2 1071.2,803.0 1102.5,800.0 1138.8,795.6 1132.5,861.2 1128.8,865.0 1120.0,868.8 1111.2,860.0 1092.5,860.0 1065.0,855.6 1038.8,856.2 1030.0,858.8 1022.5,851.2 1022.5,831.2 1035.0,818.8 1043.8,813.8 1042.5,805.0 1046.2,802.5" fill="none" stroke="#a4a4a4" stroke-width="2.8"/><polygon points="941.1,779.6 946.7,775.0 953.1,768.5 954.1,760.2 957.8,759.3 961.5,764.8 974.4,763.0 975.4,767.6 976.3,772.2 969.8,777.8 968.9,782.4 967.0,787.0 958.7,789.8 956.9,798.1 953.1,800.0 945.7,795.4 944.8,788.9 944.8,781.5" fill="none" stroke="#a4a4a4" stroke-width="2.8"/><polyline points="770.0,525.4 781.7,527.3 797.3,523.5 805.0,524.7 816.7,536.4 828.4,533.2 844.0,535.0 852.5,527.5 853.8,537.5 857.5,542.5 872.5,545.0 880.0,548.0 888.8,546.9 890.0,547.5" fill="none" stroke="#a4a4a4" stroke-width="2.8"/><polyline points="856.9,446.2 856.2,457.5 866.2,469.4 887.5,467.5 912.5,470.0 920.0,473.8 941.2,473.8 952.5,480.0 962.5,481.2 972.5,491.9 940.0,511.2 937.5,525.0 931.2,528.8" fill="none" stroke="#a4a4a4" stroke-width="2.8"/><polyline points="1088.8,520.6 1086.0,527.5 1078.8,532.5 1068.8,550.0 1060.0,560.0 1060.0,566.0" fill="none" stroke="#a4a4a4" stroke-width="2.8"/><polyline points="825.6,575.0 838.8,569.4 853.8,569.4 857.5,576.9 866.9,580.0 870.6,586.9 882.5,583.0 893.8,590.0 910.0,589.4 913.8,586.0" fill="none" stroke="#a4a4a4" stroke-width="2.8"/><polyline points="825.6,575.0 831.2,578.8 839.4,592.5 836.2,598.8 840.0,607.5 850.0,611.2 857.5,622.5 861.2,625.0 860.0,642.5 845.0,647.5 841.0,651.0" fill="none" stroke="#a4a4a4" stroke-width="2.8"/><polyline points="1022.5,851.2 1015.0,852.5" fill="none" stroke="#a4a4a4" stroke-width="2.8"/><polyline points="963.3,835.2 968.9,829.6 973.5,830.6 972.6,836.1 979.1,838.9 984.6,841.7 993.0,848.1 997.6,842.6 1002.2,838.9 1004.1,842.6 1009.6,847.2 1015.0,852.5" fill="none" stroke="#a4a4a4" stroke-width="2.8"/><polyline points="752.2,457.6 772.0,509.2" fill="none" stroke="#6e6e6e" stroke-width="3.6"/><polyline points="790.6,420.0 787.5,452.5 786.2,467.5 780.0,480.0 772.7,508.2" fill="none" stroke="#6e6e6e" stroke-width="3.6"/><polyline points="793.2,419.1 804.0,416.7 826.9,427.5 883.5,398.6 947.3,367.3 953.3,356.5 956.9,334.8 954.5,318.0 956.9,310.7 982.2,291.5 985.8,286.7" fill="none" stroke="#6e6e6e" stroke-width="3.6"/><polyline points="883.5,398.6 889.5,421.5 896.7,431.1 895.6,433.1" fill="none" stroke="#6e6e6e" stroke-width="3.6"/><polyline points="800.4,324.0 807.6,326.4 814.8,316.8 823.2,315.6 818.4,307.1 822.0,298.7 835.3,303.5 870.2,296.3 882.2,302.3 911.1,301.1 940.0,290.3 964.1,291.0 982.2,286.7 985.8,291.5 997.8,283.1 1017.1,285.5 1030.3,286.7 1037.6,285.5 1040.0,293.9 1055.0,289.0" fill="none" stroke="#6e6e6e" stroke-width="3.6"/><polyline points="1040.0,240.0 1047.1,272.0 1055.6,289.0 1071.3,321.6 1084.6,327.6 1096.7,328.8 1090.6,334.8 1094.3,348.0 1084.6,350.4 1081.0,357.7 1081.0,363.7 1075.0,370.9 1078.5,380.6 1087.0,390.2 1094.3,399.8 1094.3,409.4 1108.7,411.8 1130.4,425.0 1142.4,443.1 1138.8,455.1 1138.8,464.8 1147.2,467.2 1148.8,480.0 1157.5,488.0 1161.0,495.6" fill="none" stroke="#6e6e6e" stroke-width="3.6"/><polyline points="1105.0,520.6 1115.0,510.0 1125.0,493.0 1136.0,491.0 1147.5,494.4 1152.5,493.8 1161.0,495.6" fill="none" stroke="#6e6e6e" stroke-width="3.6"/><polyline points="800.9,361.3 813.6,361.3 819.6,373.4 812.4,383.0 802.8,392.6 793.2,402.2 787.1,407.0 777.5,407.0" fill="none" stroke="#6e6e6e" stroke-width="3.6"/><polyline points="781.1,423.9 789.5,425.1 788.3,450.4 771.5,456.4 779.9,444.4 773.9,438.4 773.9,428.7 781.1,423.9" fill="none" stroke="#6e6e6e" stroke-width="3.6"/><polyline points="690.0,724.3 828.0,724.3" fill="none" stroke="#6e6e6e" stroke-width="3.6"/><polyline points="877.3,839.0 866.9,850.8 846.1,858.5 831.9,866.3 829.3,881.9 817.6,920.8 820.2,946.7 807.2,990.8 794.3,992.1 776.1,1019.3 760.0,1060.0" fill="none" stroke="#6e6e6e" stroke-width="3.6"/><polyline points="820.2,945.4 833.2,941.5 839.7,941.5 847.4,946.7 857.8,929.9 874.7,941.5 892.8,936.3 898.0,940.2 905.8,937.6 921.4,940.2 942.1,949.3 965.4,972.7 986.2,997.3 996.6,999.9 1006.9,990.8" fill="none" stroke="#6e6e6e" stroke-width="3.6"/><polyline points="996.6,999.9 970.6,1019.3 950.0,1060.0" fill="none" stroke="#6e6e6e" stroke-width="3.6"/><polyline points="1250.0,660.0 1278.8,696.2 1353.8,705.0 1366.7,725.0 1347.7,780.6 1262.4,810.4 1178.4,821.9 1152.5,835.0 1132.5,861.2 1128.8,865.0 1120.0,868.8 1111.2,860.0 1092.5,860.0 1065.0,855.6 1038.8,856.2 1030.0,858.8 1015.0,852.5 1012.5,857.5 1011.2,870.0 1010.0,877.5 997.5,884.4" fill="none" stroke="#6e6e6e" stroke-width="3.6"/><polyline points="772.0,509.2 803.8,517.6 825.0,498.8 845.0,495.0 851.2,485.0 859.4,480.6 833.1,451.9 860.0,445.6 887.5,437.5 895.6,433.1 928.8,438.8 1052.5,516.9 1088.8,520.6 1105.0,520.6 1132.5,523.8 1139.4,536.9 1158.8,536.9" fill="none" stroke="#6e6e6e" stroke-width="3.6"/><polyline points="1353.8,705.0 1354.4,692.5 1364.4,677.5 1362.5,670.0 1376.0,665.0 1370.0,660.0 1372.5,639.4 1377.5,640.0 1380.0,645.0 1387.5,638.8" fill="none" stroke="#6e6e6e" stroke-width="3.6"/><polyline points="1262.4,810.4 1294.1,878.0" fill="none" stroke="#6e6e6e" stroke-width="3.6"/><polyline points="1315.7,284.3 1326.5,284.3 1342.1,279.4 1345.8,272.0 1369.0,258.0 1426.0,258.0 1488.0,273.0 1519.0,302.5 1540.0,320.0" fill="none" stroke="#6e6e6e" stroke-width="3.6"/></g><circle cx="50.70" cy="49.90" r="13.10" fill="#67b22f"/><circle cx="74.30" cy="67.70" r="8.00" fill="#67b22f"/><circle cx="37.30" cy="70.10" r="4.40" fill="#67b22f"/></svg><svg class="abs" style="left:1411.1px;top:525.0px" width="117.4" height="116.7" viewBox="0 0 117.4 116.7"><rect width="117.4" height="116.7" fill="#f0f0f0"/><g transform="matrix(0.1425,0,0,0.1422,-98.9,-35.5)" vector-effect="non-scaling-stroke"><polygon points="690.0,313.0 750.0,309.7 762.8,300.3 767.8,300.3 772.2,301.4 782.2,306.1 790.0,306.1 794.4,300.8 802.2,296.7 806.7,297.8 808.3,302.2 807.8,303.9 798.3,313.3 801.6,324.0 796.0,334.8 801.6,345.7 800.9,361.3 792.0,375.8 783.5,395.0 777.5,407.0 771.5,428.7 765.5,440.8 759.4,450.4 752.2,457.6 740.0,462.0 720.0,472.0 700.0,492.0 690.0,496.0" fill="#ffffff" stroke="#9a9a9a" stroke-width="3"/><polygon points="735.0,336.0 748.0,332.0 761.9,332.4 756.0,336.0 749.8,338.4 738.0,340.0" fill="#f0f0f0" stroke="#9a9a9a" stroke-width="3"/><polygon points="1168.0,240.0 1176.1,272.0 1183.3,275.8 1200.2,280.6 1212.2,284.3 1219.4,292.7 1238.7,302.3 1260.3,305.9 1306.0,297.5 1319.3,298.7 1316.5,284.0 1318.0,272.0 1326.0,240.0" fill="#ffffff" stroke="#9a9a9a" stroke-width="3"/><polygon points="772.0,509.2 770.0,525.4 765.5,544.9 763.6,550.0 774.0,550.0 780.4,554.0 790.8,565.6 805.0,583.8 815.4,599.3 823.2,613.6 827.5,620.0 836.0,635.0 837.5,645.0 845.0,655.0 862.5,665.0 875.0,677.5 878.8,685.0 890.0,708.8 888.0,725.0 892.5,742.5 897.5,753.8 910.0,770.0 921.2,775.0 930.0,781.5 941.1,791.7 949.4,807.4 953.1,820.4 963.3,835.2 976.3,850.0 981.2,850.0 985.0,857.5 987.5,865.0 993.8,876.2 997.5,885.0 1001.7,905.2 1004.3,926.0 1006.9,946.7 1012.1,972.7 1017.3,988.2 1032.9,993.4 1056.2,988.2 1071.8,983.0 1085.0,980.4 1111.3,970.0 1145.0,953.2 1165.7,951.9 1178.7,938.9 1194.3,931.1 1235.7,918.2 1266.9,906.5 1268.2,893.5 1277.2,881.9 1292.8,876.7 1316.1,870.2 1323.9,866.3 1342.0,868.9 1355.0,858.5 1356.3,848.2 1362.8,843.0 1386.1,840.4 1393.9,827.4 1403.0,815.7 1436.0,813.0 1459.0,782.6 1498.0,743.0 1530.0,740.0 1530.0,1090.0 1248.0,1090.0 1248.0,1023.0 1241.0,1017.0 1230.0,1013.0 1216.3,1019.3 1155.0,1040.0 1038.0,1047.0 1004.0,1020.0 1014.7,1009.0 1006.9,990.8 983.6,972.7 962.8,949.3 931.7,928.6 921.4,920.8 916.2,913.0 911.0,919.5 900.6,897.4 894.1,881.9 885.0,856.0 874.7,837.8 864.3,830.0 853.9,820.9 843.5,811.9 838.4,780.7 836.2,755.0 836.2,747.5 830.0,737.5 828.0,724.3 822.8,715.2 793.0,691.9 787.8,681.5 787.8,669.9 794.3,668.6 778.8,652.5 765.0,627.5 761.0,620.0 750.3,600.0 700.0,512.0 694.0,504.0 698.0,502.0 750.3,558.5 751.9,557.8 757.7,552.6 758.4,544.9 763.6,531.9 767.5,515.0" fill="#ffffff" stroke="#a0a0a0" stroke-width="3"/><polygon points="1300.6,996.0 1310.0,990.0 1323.9,989.5 1333.0,996.0 1316.1,1002.4 1303.2,1001.1" fill="#f0f0f0" stroke="#a0a0a0" stroke-width="3"/><polygon points="1161.0,495.6 1173.8,493.8 1174.4,485.0 1183.8,490.0 1192.5,493.0 1203.8,489.4 1207.5,491.0 1211.0,499.4 1222.0,510.0 1223.8,518.8 1230.0,522.5 1230.0,527.0 1234.4,530.0 1237.5,540.0 1245.0,553.0 1252.5,556.0 1263.8,557.5 1276.0,565.0 1281.0,570.0 1286.0,574.0 1301.0,580.6 1310.0,588.0 1327.5,589.4 1340.0,594.4 1355.0,587.5 1370.0,580.0 1387.5,575.6 1396.0,576.0 1402.5,582.5 1440.0,600.0 1480.0,615.0 1530.0,625.0 1530.0,705.0 1498.0,711.6 1428.0,676.0 1402.5,661.2 1392.5,650.0 1387.5,638.8 1386.2,620.0 1388.8,605.0 1387.5,599.4 1380.0,607.5 1373.8,615.0 1360.0,625.0 1352.5,632.5 1338.8,645.0 1336.2,650.0 1328.8,655.0 1320.0,662.5 1313.8,663.8 1280.0,662.5 1257.5,666.2 1251.2,661.2 1245.0,657.5 1243.8,650.0 1250.0,635.0 1249.4,613.8 1240.0,605.6 1232.5,610.0 1227.5,623.8 1227.5,645.0 1226.0,642.5 1220.0,628.8 1211.0,619.0 1205.0,607.5 1211.0,601.0 1207.5,590.0 1201.0,585.0 1191.0,576.0 1180.0,567.5 1170.0,555.0 1158.8,536.9 1158.8,532.5 1152.5,525.0 1150.0,515.0 1141.0,512.5 1147.5,507.5 1157.5,500.0" fill="#ffffff" stroke="#a0a0a0" stroke-width="3"/><polygon points="772.0,509.2 803.8,517.6 825.0,498.8 845.0,495.0 851.2,485.0 859.4,480.6 833.1,451.9 860.0,445.6 887.5,437.5 895.6,433.1 928.8,438.8 1052.5,516.9 1088.8,520.6 1105.0,520.6 1132.5,523.8 1139.4,536.9 1158.8,536.9 1166.0,550.0 1170.0,555.0 1180.0,567.5 1191.0,576.0 1201.0,585.0 1207.5,590.0 1211.0,601.0 1205.0,607.5 1211.0,619.0 1220.0,628.8 1226.0,642.5 1233.8,652.5 1242.5,653.8 1245.0,657.5 1250.0,660.0 1278.8,696.2 1353.8,705.0 1366.7,725.0 1347.7,780.6 1262.4,810.4 1178.4,821.9 1152.5,835.0 1132.5,861.2 1128.8,865.0 1120.0,868.8 1111.2,860.0 1092.5,860.0 1065.0,855.6 1038.8,856.2 1030.0,858.8 1015.0,852.5 1012.5,857.5 1011.2,870.0 1010.0,877.5 997.5,884.4 993.8,876.2 987.5,865.0 985.0,857.5 981.2,850.0 976.3,850.0 963.3,835.2 953.1,820.4 949.4,807.4 941.1,791.7 930.0,781.5 921.2,775.0 910.0,770.0 897.5,753.8 892.5,742.5 888.0,725.0 890.0,708.8 878.8,685.0 875.0,677.5 862.5,665.0 845.0,655.0 837.5,645.0 836.0,635.0 827.5,620.0 823.2,613.6 815.4,599.3 805.0,583.8 790.8,565.6 780.4,554.0 774.0,550.0 763.6,550.0 765.5,544.9 770.0,525.4" fill="#e0e0e0"/><polygon points="890.0,547.5 906.0,538.8 931.2,528.8 956.2,526.9 980.0,528.8 987.5,531.0 993.8,537.5 1002.5,535.0 1006.0,540.6 1017.5,543.0 1023.8,540.0 1031.2,550.0 1035.0,556.0 1055.0,565.0 1060.0,566.0 1050.0,567.5 1050.0,573.8 1046.0,578.0 1038.8,578.0 1028.8,571.0 1013.8,577.5 1005.0,586.0 985.0,597.5 980.0,602.5 978.8,610.0 972.5,617.5 960.0,622.5 937.5,622.5 917.5,628.8 915.0,612.5 916.0,600.0 911.0,597.5 913.8,586.0 922.5,576.0 915.0,570.0 911.0,557.5 900.0,550.0" fill="#cccccc"/><polygon points="980.0,602.5 985.0,597.5 1005.0,586.0 1013.8,577.5 1028.8,571.0 1038.8,578.0 1046.0,578.0 1050.0,573.8 1056.0,580.0 1043.8,591.0 1043.8,598.8 1052.5,611.0 1053.8,621.0 1033.8,622.5 1016.2,631.0 1010.0,635.8 1006.7,640.0 1007.5,644.0 1005.0,646.7 999.2,647.0 988.3,646.2 981.7,644.6 977.5,649.2 973.3,642.5 970.8,637.5 965.0,635.0 964.2,630.0 965.0,625.0 960.0,622.5 972.5,617.5 978.8,610.0" fill="#cccccc"/><polygon points="1060.0,566.0 1067.5,573.8 1086.0,584.0 1108.8,592.0 1121.0,598.0 1132.0,602.5 1132.5,637.5 1135.0,650.0 1152.5,660.0 1156.0,675.0 1152.8,702.2 1147.6,733.3 1143.7,770.0 1138.8,795.6 1102.5,800.0 1071.2,803.0 1047.5,796.2 1037.5,787.5 1031.2,777.5 1032.5,765.0 1022.5,753.8 1015.0,740.0 1017.5,723.8 1017.5,710.0 1010.0,708.8 1007.5,709.2 1003.3,707.5 1004.2,700.8 1002.5,698.3 985.8,696.7 978.3,675.8 974.2,673.3 974.2,668.3 975.4,654.2 977.5,649.2 981.7,644.6 988.3,646.2 999.2,647.0 1005.0,646.7 1007.5,644.0 1006.7,640.0 1010.0,635.8 1016.2,631.0 1033.8,622.5 1053.8,621.0 1052.5,611.0 1043.8,598.8 1043.8,591.0 1056.0,580.0 1050.0,573.8 1050.0,567.5" fill="#cccccc"/><polygon points="1088.8,520.6 1105.0,520.6 1132.5,523.8 1139.4,536.9 1158.8,536.9 1166.0,550.0 1170.0,555.0 1180.0,567.5 1191.0,576.0 1201.0,585.0 1207.5,590.0 1211.0,601.0 1205.0,607.5 1211.0,619.0 1220.0,628.8 1226.0,642.5 1233.8,652.5 1242.5,653.8 1245.0,657.5 1250.0,660.0 1278.8,696.2 1353.8,705.0 1366.7,725.0 1347.7,780.6 1262.4,810.4 1178.4,821.9 1152.5,835.0 1132.5,861.2 1138.8,795.6 1143.7,770.0 1147.6,733.3 1152.8,702.2 1156.0,675.0 1152.5,660.0 1135.0,650.0 1132.5,637.5 1132.0,602.5 1121.0,598.0 1108.8,592.0 1086.0,584.0 1067.5,573.8 1060.0,566.0 1060.0,560.0 1068.8,550.0 1078.8,532.5 1086.0,527.5" fill="#cccccc"/><polygon points="878.8,683.8 886.2,682.5 895.0,690.0 902.5,691.2 915.0,692.5 916.2,702.5 922.5,710.0 930.0,706.2 936.7,707.9 938.3,705.0 954.2,691.7 959.2,689.2 954.2,685.0 955.0,683.3 968.3,676.7 967.5,669.2 971.7,667.9 974.2,668.3 974.2,673.3 978.3,675.8 985.8,696.7 1002.5,698.3 1004.2,700.8 1003.3,707.5 1007.5,709.2 1010.0,708.8 1017.5,710.0 1017.5,723.8 1015.0,740.0 1022.5,753.8 1010.0,755.6 1002.2,758.3 988.3,768.5 981.9,771.3 975.4,767.6 974.4,763.0 961.5,764.8 957.8,759.3 954.1,760.2 953.1,768.5 946.7,775.0 941.1,779.6 944.8,781.5 944.8,788.9 945.7,795.4 953.1,800.0 956.9,798.1 958.7,789.8 967.0,787.0 970.7,788.0 971.7,798.1 969.8,802.8 959.6,805.6 957.8,809.3 957.8,814.8 967.0,818.5 968.9,827.8 963.3,835.2 953.1,820.4 949.4,807.4 941.1,791.7 930.0,781.5 921.2,775.0 910.0,770.0 897.5,753.8 892.5,742.5 888.0,725.0 890.0,708.8" fill="#cccccc"/><polygon points="1047.5,796.2 1071.2,803.0 1102.5,800.0 1138.8,795.6 1132.5,861.2 1128.8,865.0 1120.0,868.8 1111.2,860.0 1092.5,860.0 1065.0,855.6 1038.8,856.2 1030.0,858.8 1022.5,851.2 1022.5,831.2 1035.0,818.8 1043.8,813.8 1042.5,805.0 1046.2,802.5" fill="#cccccc"/><polygon points="890.0,547.5 906.0,538.8 931.2,528.8 956.2,526.9 980.0,528.8 987.5,531.0 993.8,537.5 1002.5,535.0 1006.0,540.6 1017.5,543.0 1023.8,540.0 1031.2,550.0 1035.0,556.0 1055.0,565.0 1060.0,566.0 1050.0,567.5 1050.0,573.8 1046.0,578.0 1038.8,578.0 1028.8,571.0 1013.8,577.5 1005.0,586.0 985.0,597.5 980.0,602.5 978.8,610.0 972.5,617.5 960.0,622.5 937.5,622.5 917.5,628.8 915.0,612.5 916.0,600.0 911.0,597.5 913.8,586.0 922.5,576.0 915.0,570.0 911.0,557.5 900.0,550.0" fill="none" stroke="#a4a4a4" stroke-width="2.8"/><polygon points="980.0,602.5 985.0,597.5 1005.0,586.0 1013.8,577.5 1028.8,571.0 1038.8,578.0 1046.0,578.0 1050.0,573.8 1056.0,580.0 1043.8,591.0 1043.8,598.8 1052.5,611.0 1053.8,621.0 1033.8,622.5 1016.2,631.0 1010.0,635.8 1006.7,640.0 1007.5,644.0 1005.0,646.7 999.2,647.0 988.3,646.2 981.7,644.6 977.5,649.2 973.3,642.5 970.8,637.5 965.0,635.0 964.2,630.0 965.0,625.0 960.0,622.5 972.5,617.5 978.8,610.0" fill="none" stroke="#a4a4a4" stroke-width="2.8"/><polygon points="1060.0,566.0 1067.5,573.8 1086.0,584.0 1108.8,592.0 1121.0,598.0 1132.0,602.5 1132.5,637.5 1135.0,650.0 1152.5,660.0 1156.0,675.0 1152.8,702.2 1147.6,733.3 1143.7,770.0 1138.8,795.6 1102.5,800.0 1071.2,803.0 1047.5,796.2 1037.5,787.5 1031.2,777.5 1032.5,765.0 1022.5,753.8 1015.0,740.0 1017.5,723.8 1017.5,710.0 1010.0,708.8 1007.5,709.2 1003.3,707.5 1004.2,700.8 1002.5,698.3 985.8,696.7 978.3,675.8 974.2,673.3 974.2,668.3 975.4,654.2 977.5,649.2 981.7,644.6 988.3,646.2 999.2,647.0 1005.0,646.7 1007.5,644.0 1006.7,640.0 1010.0,635.8 1016.2,631.0 1033.8,622.5 1053.8,621.0 1052.5,611.0 1043.8,598.8 1043.8,591.0 1056.0,580.0 1050.0,573.8 1050.0,567.5" fill="none" stroke="#a4a4a4" stroke-width="2.8"/><polygon points="878.8,683.8 886.2,682.5 895.0,690.0 902.5,691.2 915.0,692.5 916.2,702.5 922.5,710.0 930.0,706.2 936.7,707.9 938.3,705.0 954.2,691.7 959.2,689.2 954.2,685.0 955.0,683.3 968.3,676.7 967.5,669.2 971.7,667.9 974.2,668.3 974.2,673.3 978.3,675.8 985.8,696.7 1002.5,698.3 1004.2,700.8 1003.3,707.5 1007.5,709.2 1010.0,708.8 1017.5,710.0 1017.5,723.8 1015.0,740.0 1022.5,753.8 1010.0,755.6 1002.2,758.3 988.3,768.5 981.9,771.3 975.4,767.6 974.4,763.0 961.5,764.8 957.8,759.3 954.1,760.2 953.1,768.5 946.7,775.0 941.1,779.6 944.8,781.5 944.8,788.9 945.7,795.4 953.1,800.0 956.9,798.1 958.7,789.8 967.0,787.0 970.7,788.0 971.7,798.1 969.8,802.8 959.6,805.6 957.8,809.3 957.8,814.8 967.0,818.5 968.9,827.8 963.3,835.2 953.1,820.4 949.4,807.4 941.1,791.7 930.0,781.5 921.2,775.0 910.0,770.0 897.5,753.8 892.5,742.5 888.0,725.0 890.0,708.8" fill="none" stroke="#a4a4a4" stroke-width="2.8"/><polygon points="1047.5,796.2 1071.2,803.0 1102.5,800.0 1138.8,795.6 1132.5,861.2 1128.8,865.0 1120.0,868.8 1111.2,860.0 1092.5,860.0 1065.0,855.6 1038.8,856.2 1030.0,858.8 1022.5,851.2 1022.5,831.2 1035.0,818.8 1043.8,813.8 1042.5,805.0 1046.2,802.5" fill="none" stroke="#a4a4a4" stroke-width="2.8"/><polygon points="941.1,779.6 946.7,775.0 953.1,768.5 954.1,760.2 957.8,759.3 961.5,764.8 974.4,763.0 975.4,767.6 976.3,772.2 969.8,777.8 968.9,782.4 967.0,787.0 958.7,789.8 956.9,798.1 953.1,800.0 945.7,795.4 944.8,788.9 944.8,781.5" fill="none" stroke="#a4a4a4" stroke-width="2.8"/><polyline points="770.0,525.4 781.7,527.3 797.3,523.5 805.0,524.7 816.7,536.4 828.4,533.2 844.0,535.0 852.5,527.5 853.8,537.5 857.5,542.5 872.5,545.0 880.0,548.0 888.8,546.9 890.0,547.5" fill="none" stroke="#a4a4a4" stroke-width="2.8"/><polyline points="856.9,446.2 856.2,457.5 866.2,469.4 887.5,467.5 912.5,470.0 920.0,473.8 941.2,473.8 952.5,480.0 962.5,481.2 972.5,491.9 940.0,511.2 937.5,525.0 931.2,528.8" fill="none" stroke="#a4a4a4" stroke-width="2.8"/><polyline points="1088.8,520.6 1086.0,527.5 1078.8,532.5 1068.8,550.0 1060.0,560.0 1060.0,566.0" fill="none" stroke="#a4a4a4" stroke-width="2.8"/><polyline points="825.6,575.0 838.8,569.4 853.8,569.4 857.5,576.9 866.9,580.0 870.6,586.9 882.5,583.0 893.8,590.0 910.0,589.4 913.8,586.0" fill="none" stroke="#a4a4a4" stroke-width="2.8"/><polyline points="825.6,575.0 831.2,578.8 839.4,592.5 836.2,598.8 840.0,607.5 850.0,611.2 857.5,622.5 861.2,625.0 860.0,642.5 845.0,647.5 841.0,651.0" fill="none" stroke="#a4a4a4" stroke-width="2.8"/><polyline points="1022.5,851.2 1015.0,852.5" fill="none" stroke="#a4a4a4" stroke-width="2.8"/><polyline points="963.3,835.2 968.9,829.6 973.5,830.6 972.6,836.1 979.1,838.9 984.6,841.7 993.0,848.1 997.6,842.6 1002.2,838.9 1004.1,842.6 1009.6,847.2 1015.0,852.5" fill="none" stroke="#a4a4a4" stroke-width="2.8"/><polyline points="752.2,457.6 772.0,509.2" fill="none" stroke="#6e6e6e" stroke-width="3.6"/><polyline points="790.6,420.0 787.5,452.5 786.2,467.5 780.0,480.0 772.7,508.2" fill="none" stroke="#6e6e6e" stroke-width="3.6"/><polyline points="793.2,419.1 804.0,416.7 826.9,427.5 883.5,398.6 947.3,367.3 953.3,356.5 956.9,334.8 954.5,318.0 956.9,310.7 982.2,291.5 985.8,286.7" fill="none" stroke="#6e6e6e" stroke-width="3.6"/><polyline points="883.5,398.6 889.5,421.5 896.7,431.1 895.6,433.1" fill="none" stroke="#6e6e6e" stroke-width="3.6"/><polyline points="800.4,324.0 807.6,326.4 814.8,316.8 823.2,315.6 818.4,307.1 822.0,298.7 835.3,303.5 870.2,296.3 882.2,302.3 911.1,301.1 940.0,290.3 964.1,291.0 982.2,286.7 985.8,291.5 997.8,283.1 1017.1,285.5 1030.3,286.7 1037.6,285.5 1040.0,293.9 1055.0,289.0" fill="none" stroke="#6e6e6e" stroke-width="3.6"/><polyline points="1040.0,240.0 1047.1,272.0 1055.6,289.0 1071.3,321.6 1084.6,327.6 1096.7,328.8 1090.6,334.8 1094.3,348.0 1084.6,350.4 1081.0,357.7 1081.0,363.7 1075.0,370.9 1078.5,380.6 1087.0,390.2 1094.3,399.8 1094.3,409.4 1108.7,411.8 1130.4,425.0 1142.4,443.1 1138.8,455.1 1138.8,464.8 1147.2,467.2 1148.8,480.0 1157.5,488.0 1161.0,495.6" fill="none" stroke="#6e6e6e" stroke-width="3.6"/><polyline points="1105.0,520.6 1115.0,510.0 1125.0,493.0 1136.0,491.0 1147.5,494.4 1152.5,493.8 1161.0,495.6" fill="none" stroke="#6e6e6e" stroke-width="3.6"/><polyline points="800.9,361.3 813.6,361.3 819.6,373.4 812.4,383.0 802.8,392.6 793.2,402.2 787.1,407.0 777.5,407.0" fill="none" stroke="#6e6e6e" stroke-width="3.6"/><polyline points="781.1,423.9 789.5,425.1 788.3,450.4 771.5,456.4 779.9,444.4 773.9,438.4 773.9,428.7 781.1,423.9" fill="none" stroke="#6e6e6e" stroke-width="3.6"/><polyline points="690.0,724.3 828.0,724.3" fill="none" stroke="#6e6e6e" stroke-width="3.6"/><polyline points="877.3,839.0 866.9,850.8 846.1,858.5 831.9,866.3 829.3,881.9 817.6,920.8 820.2,946.7 807.2,990.8 794.3,992.1 776.1,1019.3 760.0,1060.0" fill="none" stroke="#6e6e6e" stroke-width="3.6"/><polyline points="820.2,945.4 833.2,941.5 839.7,941.5 847.4,946.7 857.8,929.9 874.7,941.5 892.8,936.3 898.0,940.2 905.8,937.6 921.4,940.2 942.1,949.3 965.4,972.7 986.2,997.3 996.6,999.9 1006.9,990.8" fill="none" stroke="#6e6e6e" stroke-width="3.6"/><polyline points="996.6,999.9 970.6,1019.3 950.0,1060.0" fill="none" stroke="#6e6e6e" stroke-width="3.6"/><polyline points="1250.0,660.0 1278.8,696.2 1353.8,705.0 1366.7,725.0 1347.7,780.6 1262.4,810.4 1178.4,821.9 1152.5,835.0 1132.5,861.2 1128.8,865.0 1120.0,868.8 1111.2,860.0 1092.5,860.0 1065.0,855.6 1038.8,856.2 1030.0,858.8 1015.0,852.5 1012.5,857.5 1011.2,870.0 1010.0,877.5 997.5,884.4" fill="none" stroke="#6e6e6e" stroke-width="3.6"/><polyline points="772.0,509.2 803.8,517.6 825.0,498.8 845.0,495.0 851.2,485.0 859.4,480.6 833.1,451.9 860.0,445.6 887.5,437.5 895.6,433.1 928.8,438.8 1052.5,516.9 1088.8,520.6 1105.0,520.6 1132.5,523.8 1139.4,536.9 1158.8,536.9" fill="none" stroke="#6e6e6e" stroke-width="3.6"/><polyline points="1353.8,705.0 1354.4,692.5 1364.4,677.5 1362.5,670.0 1376.0,665.0 1370.0,660.0 1372.5,639.4 1377.5,640.0 1380.0,645.0 1387.5,638.8" fill="none" stroke="#6e6e6e" stroke-width="3.6"/><polyline points="1262.4,810.4 1294.1,878.0" fill="none" stroke="#6e6e6e" stroke-width="3.6"/><polyline points="1315.7,284.3 1326.5,284.3 1342.1,279.4 1345.8,272.0 1369.0,258.0 1426.0,258.0 1488.0,273.0 1519.0,302.5 1540.0,320.0" fill="none" stroke="#6e6e6e" stroke-width="3.6"/></g><line x1="53.3" y1="40" x2="55.6" y2="63.3" stroke="#b14f9a" stroke-width="0.7"/><path d="M70.90,36.50L88.70,36.50A17.80,17.80 0 0 1 55.33,45.13Z" fill="#b2d06e"/><path d="M70.90,36.50L55.33,45.13A17.80,17.80 0 1 1 88.70,36.50Z" fill="#67b22f"/><circle cx="43.90" cy="35.60" r="4.20" fill="#67b22f"/><circle cx="46.10" cy="52.00" r="4.20" fill="#67b22f"/><circle cx="37.80" cy="70.00" r="4.20" fill="#67b22f"/><circle cx="74.80" cy="67.80" r="10.90" fill="#67b22f"/><circle cx="45.20" cy="88.90" r="12.00" fill="#b2d06e"/></svg><svg class="abs" style="left:1538.0px;top:525.0px" width="117.4" height="116.7" viewBox="0 0 117.4 116.7"><rect width="117.4" height="116.7" fill="#f0f0f0"/><g transform="matrix(0.1425,0,0,0.1422,-98.9,-35.5)" vector-effect="non-scaling-stroke"><polygon points="690.0,313.0 750.0,309.7 762.8,300.3 767.8,300.3 772.2,301.4 782.2,306.1 790.0,306.1 794.4,300.8 802.2,296.7 806.7,297.8 808.3,302.2 807.8,303.9 798.3,313.3 801.6,324.0 796.0,334.8 801.6,345.7 800.9,361.3 792.0,375.8 783.5,395.0 777.5,407.0 771.5,428.7 765.5,440.8 759.4,450.4 752.2,457.6 740.0,462.0 720.0,472.0 700.0,492.0 690.0,496.0" fill="#ffffff" stroke="#9a9a9a" stroke-width="3"/><polygon points="735.0,336.0 748.0,332.0 761.9,332.4 756.0,336.0 749.8,338.4 738.0,340.0" fill="#f0f0f0" stroke="#9a9a9a" stroke-width="3"/><polygon points="1168.0,240.0 1176.1,272.0 1183.3,275.8 1200.2,280.6 1212.2,284.3 1219.4,292.7 1238.7,302.3 1260.3,305.9 1306.0,297.5 1319.3,298.7 1316.5,284.0 1318.0,272.0 1326.0,240.0" fill="#ffffff" stroke="#9a9a9a" stroke-width="3"/><polygon points="772.0,509.2 770.0,525.4 765.5,544.9 763.6,550.0 774.0,550.0 780.4,554.0 790.8,565.6 805.0,583.8 815.4,599.3 823.2,613.6 827.5,620.0 836.0,635.0 837.5,645.0 845.0,655.0 862.5,665.0 875.0,677.5 878.8,685.0 890.0,708.8 888.0,725.0 892.5,742.5 897.5,753.8 910.0,770.0 921.2,775.0 930.0,781.5 941.1,791.7 949.4,807.4 953.1,820.4 963.3,835.2 976.3,850.0 981.2,850.0 985.0,857.5 987.5,865.0 993.8,876.2 997.5,885.0 1001.7,905.2 1004.3,926.0 1006.9,946.7 1012.1,972.7 1017.3,988.2 1032.9,993.4 1056.2,988.2 1071.8,983.0 1085.0,980.4 1111.3,970.0 1145.0,953.2 1165.7,951.9 1178.7,938.9 1194.3,931.1 1235.7,918.2 1266.9,906.5 1268.2,893.5 1277.2,881.9 1292.8,876.7 1316.1,870.2 1323.9,866.3 1342.0,868.9 1355.0,858.5 1356.3,848.2 1362.8,843.0 1386.1,840.4 1393.9,827.4 1403.0,815.7 1436.0,813.0 1459.0,782.6 1498.0,743.0 1530.0,740.0 1530.0,1090.0 1248.0,1090.0 1248.0,1023.0 1241.0,1017.0 1230.0,1013.0 1216.3,1019.3 1155.0,1040.0 1038.0,1047.0 1004.0,1020.0 1014.7,1009.0 1006.9,990.8 983.6,972.7 962.8,949.3 931.7,928.6 921.4,920.8 916.2,913.0 911.0,919.5 900.6,897.4 894.1,881.9 885.0,856.0 874.7,837.8 864.3,830.0 853.9,820.9 843.5,811.9 838.4,780.7 836.2,755.0 836.2,747.5 830.0,737.5 828.0,724.3 822.8,715.2 793.0,691.9 787.8,681.5 787.8,669.9 794.3,668.6 778.8,652.5 765.0,627.5 761.0,620.0 750.3,600.0 700.0,512.0 694.0,504.0 698.0,502.0 750.3,558.5 751.9,557.8 757.7,552.6 758.4,544.9 763.6,531.9 767.5,515.0" fill="#ffffff" stroke="#a0a0a0" stroke-width="3"/><polygon points="1300.6,996.0 1310.0,990.0 1323.9,989.5 1333.0,996.0 1316.1,1002.4 1303.2,1001.1" fill="#f0f0f0" stroke="#a0a0a0" stroke-width="3"/><polygon points="1161.0,495.6 1173.8,493.8 1174.4,485.0 1183.8,490.0 1192.5,493.0 1203.8,489.4 1207.5,491.0 1211.0,499.4 1222.0,510.0 1223.8,518.8 1230.0,522.5 1230.0,527.0 1234.4,530.0 1237.5,540.0 1245.0,553.0 1252.5,556.0 1263.8,557.5 1276.0,565.0 1281.0,570.0 1286.0,574.0 1301.0,580.6 1310.0,588.0 1327.5,589.4 1340.0,594.4 1355.0,587.5 1370.0,580.0 1387.5,575.6 1396.0,576.0 1402.5,582.5 1440.0,600.0 1480.0,615.0 1530.0,625.0 1530.0,705.0 1498.0,711.6 1428.0,676.0 1402.5,661.2 1392.5,650.0 1387.5,638.8 1386.2,620.0 1388.8,605.0 1387.5,599.4 1380.0,607.5 1373.8,615.0 1360.0,625.0 1352.5,632.5 1338.8,645.0 1336.2,650.0 1328.8,655.0 1320.0,662.5 1313.8,663.8 1280.0,662.5 1257.5,666.2 1251.2,661.2 1245.0,657.5 1243.8,650.0 1250.0,635.0 1249.4,613.8 1240.0,605.6 1232.5,610.0 1227.5,623.8 1227.5,645.0 1226.0,642.5 1220.0,628.8 1211.0,619.0 1205.0,607.5 1211.0,601.0 1207.5,590.0 1201.0,585.0 1191.0,576.0 1180.0,567.5 1170.0,555.0 1158.8,536.9 1158.8,532.5 1152.5,525.0 1150.0,515.0 1141.0,512.5 1147.5,507.5 1157.5,500.0" fill="#ffffff" stroke="#a0a0a0" stroke-width="3"/><polygon points="772.0,509.2 803.8,517.6 825.0,498.8 845.0,495.0 851.2,485.0 859.4,480.6 833.1,451.9 860.0,445.6 887.5,437.5 895.6,433.1 928.8,438.8 1052.5,516.9 1088.8,520.6 1105.0,520.6 1132.5,523.8 1139.4,536.9 1158.8,536.9 1166.0,550.0 1170.0,555.0 1180.0,567.5 1191.0,576.0 1201.0,585.0 1207.5,590.0 1211.0,601.0 1205.0,607.5 1211.0,619.0 1220.0,628.8 1226.0,642.5 1233.8,652.5 1242.5,653.8 1245.0,657.5 1250.0,660.0 1278.8,696.2 1353.8,705.0 1366.7,725.0 1347.7,780.6 1262.4,810.4 1178.4,821.9 1152.5,835.0 1132.5,861.2 1128.8,865.0 1120.0,868.8 1111.2,860.0 1092.5,860.0 1065.0,855.6 1038.8,856.2 1030.0,858.8 1015.0,852.5 1012.5,857.5 1011.2,870.0 1010.0,877.5 997.5,884.4 993.8,876.2 987.5,865.0 985.0,857.5 981.2,850.0 976.3,850.0 963.3,835.2 953.1,820.4 949.4,807.4 941.1,791.7 930.0,781.5 921.2,775.0 910.0,770.0 897.5,753.8 892.5,742.5 888.0,725.0 890.0,708.8 878.8,685.0 875.0,677.5 862.5,665.0 845.0,655.0 837.5,645.0 836.0,635.0 827.5,620.0 823.2,613.6 815.4,599.3 805.0,583.8 790.8,565.6 780.4,554.0 774.0,550.0 763.6,550.0 765.5,544.9 770.0,525.4" fill="#cccccc"/><polygon points="890.0,547.5 906.0,538.8 931.2,528.8 956.2,526.9 980.0,528.8 987.5,531.0 993.8,537.5 1002.5,535.0 1006.0,540.6 1017.5,543.0 1023.8,540.0 1031.2,550.0 1035.0,556.0 1055.0,565.0 1060.0,566.0 1050.0,567.5 1050.0,573.8 1046.0,578.0 1038.8,578.0 1028.8,571.0 1013.8,577.5 1005.0,586.0 985.0,597.5 980.0,602.5 978.8,610.0 972.5,617.5 960.0,622.5 937.5,622.5 917.5,628.8 915.0,612.5 916.0,600.0 911.0,597.5 913.8,586.0 922.5,576.0 915.0,570.0 911.0,557.5 900.0,550.0" fill="none" stroke="#a4a4a4" stroke-width="2.8"/><polygon points="980.0,602.5 985.0,597.5 1005.0,586.0 1013.8,577.5 1028.8,571.0 1038.8,578.0 1046.0,578.0 1050.0,573.8 1056.0,580.0 1043.8,591.0 1043.8,598.8 1052.5,611.0 1053.8,621.0 1033.8,622.5 1016.2,631.0 1010.0,635.8 1006.7,640.0 1007.5,644.0 1005.0,646.7 999.2,647.0 988.3,646.2 981.7,644.6 977.5,649.2 973.3,642.5 970.8,637.5 965.0,635.0 964.2,630.0 965.0,625.0 960.0,622.5 972.5,617.5 978.8,610.0" fill="none" stroke="#a4a4a4" stroke-width="2.8"/><polygon points="1060.0,566.0 1067.5,573.8 1086.0,584.0 1108.8,592.0 1121.0,598.0 1132.0,602.5 1132.5,637.5 1135.0,650.0 1152.5,660.0 1156.0,675.0 1152.8,702.2 1147.6,733.3 1143.7,770.0 1138.8,795.6 1102.5,800.0 1071.2,803.0 1047.5,796.2 1037.5,787.5 1031.2,777.5 1032.5,765.0 1022.5,753.8 1015.0,740.0 1017.5,723.8 1017.5,710.0 1010.0,708.8 1007.5,709.2 1003.3,707.5 1004.2,700.8 1002.5,698.3 985.8,696.7 978.3,675.8 974.2,673.3 974.2,668.3 975.4,654.2 977.5,649.2 981.7,644.6 988.3,646.2 999.2,647.0 1005.0,646.7 1007.5,644.0 1006.7,640.0 1010.0,635.8 1016.2,631.0 1033.8,622.5 1053.8,621.0 1052.5,611.0 1043.8,598.8 1043.8,591.0 1056.0,580.0 1050.0,573.8 1050.0,567.5" fill="none" stroke="#a4a4a4" stroke-width="2.8"/><polygon points="878.8,683.8 886.2,682.5 895.0,690.0 902.5,691.2 915.0,692.5 916.2,702.5 922.5,710.0 930.0,706.2 936.7,707.9 938.3,705.0 954.2,691.7 959.2,689.2 954.2,685.0 955.0,683.3 968.3,676.7 967.5,669.2 971.7,667.9 974.2,668.3 974.2,673.3 978.3,675.8 985.8,696.7 1002.5,698.3 1004.2,700.8 1003.3,707.5 1007.5,709.2 1010.0,708.8 1017.5,710.0 1017.5,723.8 1015.0,740.0 1022.5,753.8 1010.0,755.6 1002.2,758.3 988.3,768.5 981.9,771.3 975.4,767.6 974.4,763.0 961.5,764.8 957.8,759.3 954.1,760.2 953.1,768.5 946.7,775.0 941.1,779.6 944.8,781.5 944.8,788.9 945.7,795.4 953.1,800.0 956.9,798.1 958.7,789.8 967.0,787.0 970.7,788.0 971.7,798.1 969.8,802.8 959.6,805.6 957.8,809.3 957.8,814.8 967.0,818.5 968.9,827.8 963.3,835.2 953.1,820.4 949.4,807.4 941.1,791.7 930.0,781.5 921.2,775.0 910.0,770.0 897.5,753.8 892.5,742.5 888.0,725.0 890.0,708.8" fill="none" stroke="#a4a4a4" stroke-width="2.8"/><polygon points="1047.5,796.2 1071.2,803.0 1102.5,800.0 1138.8,795.6 1132.5,861.2 1128.8,865.0 1120.0,868.8 1111.2,860.0 1092.5,860.0 1065.0,855.6 1038.8,856.2 1030.0,858.8 1022.5,851.2 1022.5,831.2 1035.0,818.8 1043.8,813.8 1042.5,805.0 1046.2,802.5" fill="none" stroke="#a4a4a4" stroke-width="2.8"/><polygon points="941.1,779.6 946.7,775.0 953.1,768.5 954.1,760.2 957.8,759.3 961.5,764.8 974.4,763.0 975.4,767.6 976.3,772.2 969.8,777.8 968.9,782.4 967.0,787.0 958.7,789.8 956.9,798.1 953.1,800.0 945.7,795.4 944.8,788.9 944.8,781.5" fill="none" stroke="#a4a4a4" stroke-width="2.8"/><polyline points="770.0,525.4 781.7,527.3 797.3,523.5 805.0,524.7 816.7,536.4 828.4,533.2 844.0,535.0 852.5,527.5 853.8,537.5 857.5,542.5 872.5,545.0 880.0,548.0 888.8,546.9 890.0,547.5" fill="none" stroke="#a4a4a4" stroke-width="2.8"/><polyline points="856.9,446.2 856.2,457.5 866.2,469.4 887.5,467.5 912.5,470.0 920.0,473.8 941.2,473.8 952.5,480.0 962.5,481.2 972.5,491.9 940.0,511.2 937.5,525.0 931.2,528.8" fill="none" stroke="#a4a4a4" stroke-width="2.8"/><polyline points="1088.8,520.6 1086.0,527.5 1078.8,532.5 1068.8,550.0 1060.0,560.0 1060.0,566.0" fill="none" stroke="#a4a4a4" stroke-width="2.8"/><polyline points="825.6,575.0 838.8,569.4 853.8,569.4 857.5,576.9 866.9,580.0 870.6,586.9 882.5,583.0 893.8,590.0 910.0,589.4 913.8,586.0" fill="none" stroke="#a4a4a4" stroke-width="2.8"/><polyline points="825.6,575.0 831.2,578.8 839.4,592.5 836.2,598.8 840.0,607.5 850.0,611.2 857.5,622.5 861.2,625.0 860.0,642.5 845.0,647.5 841.0,651.0" fill="none" stroke="#a4a4a4" stroke-width="2.8"/><polyline points="1022.5,851.2 1015.0,852.5" fill="none" stroke="#a4a4a4" stroke-width="2.8"/><polyline points="963.3,835.2 968.9,829.6 973.5,830.6 972.6,836.1 979.1,838.9 984.6,841.7 993.0,848.1 997.6,842.6 1002.2,838.9 1004.1,842.6 1009.6,847.2 1015.0,852.5" fill="none" stroke="#a4a4a4" stroke-width="2.8"/><polyline points="752.2,457.6 772.0,509.2" fill="none" stroke="#6e6e6e" stroke-width="3.6"/><polyline points="790.6,420.0 787.5,452.5 786.2,467.5 780.0,480.0 772.7,508.2" fill="none" stroke="#6e6e6e" stroke-width="3.6"/><polyline points="793.2,419.1 804.0,416.7 826.9,427.5 883.5,398.6 947.3,367.3 953.3,356.5 956.9,334.8 954.5,318.0 956.9,310.7 982.2,291.5 985.8,286.7" fill="none" stroke="#6e6e6e" stroke-width="3.6"/><polyline points="883.5,398.6 889.5,421.5 896.7,431.1 895.6,433.1" fill="none" stroke="#6e6e6e" stroke-width="3.6"/><polyline points="800.4,324.0 807.6,326.4 814.8,316.8 823.2,315.6 818.4,307.1 822.0,298.7 835.3,303.5 870.2,296.3 882.2,302.3 911.1,301.1 940.0,290.3 964.1,291.0 982.2,286.7 985.8,291.5 997.8,283.1 1017.1,285.5 1030.3,286.7 1037.6,285.5 1040.0,293.9 1055.0,289.0" fill="none" stroke="#6e6e6e" stroke-width="3.6"/><polyline points="1040.0,240.0 1047.1,272.0 1055.6,289.0 1071.3,321.6 1084.6,327.6 1096.7,328.8 1090.6,334.8 1094.3,348.0 1084.6,350.4 1081.0,357.7 1081.0,363.7 1075.0,370.9 1078.5,380.6 1087.0,390.2 1094.3,399.8 1094.3,409.4 1108.7,411.8 1130.4,425.0 1142.4,443.1 1138.8,455.1 1138.8,464.8 1147.2,467.2 1148.8,480.0 1157.5,488.0 1161.0,495.6" fill="none" stroke="#6e6e6e" stroke-width="3.6"/><polyline points="1105.0,520.6 1115.0,510.0 1125.0,493.0 1136.0,491.0 1147.5,494.4 1152.5,493.8 1161.0,495.6" fill="none" stroke="#6e6e6e" stroke-width="3.6"/><polyline points="800.9,361.3 813.6,361.3 819.6,373.4 812.4,383.0 802.8,392.6 793.2,402.2 787.1,407.0 777.5,407.0" fill="none" stroke="#6e6e6e" stroke-width="3.6"/><polyline points="781.1,423.9 789.5,425.1 788.3,450.4 771.5,456.4 779.9,444.4 773.9,438.4 773.9,428.7 781.1,423.9" fill="none" stroke="#6e6e6e" stroke-width="3.6"/><polyline points="690.0,724.3 828.0,724.3" fill="none" stroke="#6e6e6e" stroke-width="3.6"/><polyline points="877.3,839.0 866.9,850.8 846.1,858.5 831.9,866.3 829.3,881.9 817.6,920.8 820.2,946.7 807.2,990.8 794.3,992.1 776.1,1019.3 760.0,1060.0" fill="none" stroke="#6e6e6e" stroke-width="3.6"/><polyline points="820.2,945.4 833.2,941.5 839.7,941.5 847.4,946.7 857.8,929.9 874.7,941.5 892.8,936.3 898.0,940.2 905.8,937.6 921.4,940.2 942.1,949.3 965.4,972.7 986.2,997.3 996.6,999.9 1006.9,990.8" fill="none" stroke="#6e6e6e" stroke-width="3.6"/><polyline points="996.6,999.9 970.6,1019.3 950.0,1060.0" fill="none" stroke="#6e6e6e" stroke-width="3.6"/><polyline points="1250.0,660.0 1278.8,696.2 1353.8,705.0 1366.7,725.0 1347.7,780.6 1262.4,810.4 1178.4,821.9 1152.5,835.0 1132.5,861.2 1128.8,865.0 1120.0,868.8 1111.2,860.0 1092.5,860.0 1065.0,855.6 1038.8,856.2 1030.0,858.8 1015.0,852.5 1012.5,857.5 1011.2,870.0 1010.0,877.5 997.5,884.4" fill="none" stroke="#6e6e6e" stroke-width="3.6"/><polyline points="772.0,509.2 803.8,517.6 825.0,498.8 845.0,495.0 851.2,485.0 859.4,480.6 833.1,451.9 860.0,445.6 887.5,437.5 895.6,433.1 928.8,438.8 1052.5,516.9 1088.8,520.6 1105.0,520.6 1132.5,523.8 1139.4,536.9 1158.8,536.9" fill="none" stroke="#6e6e6e" stroke-width="3.6"/><polyline points="1353.8,705.0 1354.4,692.5 1364.4,677.5 1362.5,670.0 1376.0,665.0 1370.0,660.0 1372.5,639.4 1377.5,640.0 1380.0,645.0 1387.5,638.8" fill="none" stroke="#6e6e6e" stroke-width="3.6"/><polyline points="1262.4,810.4 1294.1,878.0" fill="none" stroke="#6e6e6e" stroke-width="3.6"/><polyline points="1315.7,284.3 1326.5,284.3 1342.1,279.4 1345.8,272.0 1369.0,258.0 1426.0,258.0 1488.0,273.0 1519.0,302.5 1540.0,320.0" fill="none" stroke="#6e6e6e" stroke-width="3.6"/></g><line x1="49.5" y1="29.5" x2="45" y2="52.3" stroke="#b14f9a" stroke-width="0.7"/><line x1="36.7" y1="71.3" x2="32.2" y2="75.7" stroke="#b14f9a" stroke-width="0.7"/><line x1="47.8" y1="92.2" x2="51.7" y2="103.3" stroke="#b14f9a" stroke-width="0.7"/><line x1="40.6" y1="99.5" x2="39.5" y2="104.5" stroke="#b14f9a" stroke-width="0.7"/><path d="M65.00,28.90L80.00,28.90A15.00,15.00 0 0 1 76.66,38.34Z" fill="#b2d06e"/><path d="M65.00,28.90L76.66,38.34A15.00,15.00 0 0 1 67.35,43.72Z" fill="#7ebcc3"/><path d="M65.00,28.90L67.35,43.72A15.00,15.00 0 1 1 80.00,28.90Z" fill="#67b22f"/><circle cx="27.20" cy="31.10" r="6.40" fill="#67b22f"/><circle cx="43.00" cy="35.90" r="4.20" fill="#67b22f"/><circle cx="20.80" cy="44.20" r="4.20" fill="#67b22f"/><circle cx="29.80" cy="61.90" r="10.90" fill="#67b22f"/><path d="M73.90,68.00L95.60,68.00A21.70,21.70 0 0 1 52.53,71.77Z" fill="#b2d06e"/><path d="M73.90,68.00L52.53,71.77A21.70,21.70 0 0 1 68.28,47.04Z" fill="#7ebcc3"/><path d="M73.90,68.00L68.28,47.04A21.70,21.70 0 0 1 95.60,68.00Z" fill="#67b22f"/><path d="M37.00,87.20L48.90,87.20A11.90,11.90 0 0 1 43.13,97.40Z" fill="#7ebcc3"/><path d="M37.00,87.20L43.13,97.40A11.90,11.90 0 1 1 48.90,87.20Z" fill="#67b22f"/><circle cx="43.30" cy="106.10" r="4.20" fill="#7ebcc3"/><path d="M62.50,103.30L72.90,103.30A10.40,10.40 0 0 1 65.71,113.19Z" fill="#1d6987"/><path d="M62.50,103.30L65.71,113.19A10.40,10.40 0 1 1 65.54,93.35Z" fill="#7ebcc3"/><path d="M62.50,103.30L65.54,93.35A10.40,10.40 0 0 1 72.90,103.30Z" fill="#67b22f"/></svg><svg class="abs" style="left:1411.1px;top:651.4px" width="117.4" height="116.7" viewBox="0 0 117.4 116.7"><rect width="117.4" height="116.7" fill="#f0f0f0"/><g transform="matrix(0.1425,0,0,0.1422,-98.9,-35.5)" vector-effect="non-scaling-stroke"><polygon points="690.0,313.0 750.0,309.7 762.8,300.3 767.8,300.3 772.2,301.4 782.2,306.1 790.0,306.1 794.4,300.8 802.2,296.7 806.7,297.8 808.3,302.2 807.8,303.9 798.3,313.3 801.6,324.0 796.0,334.8 801.6,345.7 800.9,361.3 792.0,375.8 783.5,395.0 777.5,407.0 771.5,428.7 765.5,440.8 759.4,450.4 752.2,457.6 740.0,462.0 720.0,472.0 700.0,492.0 690.0,496.0" fill="#ffffff" stroke="#9a9a9a" stroke-width="3"/><polygon points="735.0,336.0 748.0,332.0 761.9,332.4 756.0,336.0 749.8,338.4 738.0,340.0" fill="#f0f0f0" stroke="#9a9a9a" stroke-width="3"/><polygon points="1168.0,240.0 1176.1,272.0 1183.3,275.8 1200.2,280.6 1212.2,284.3 1219.4,292.7 1238.7,302.3 1260.3,305.9 1306.0,297.5 1319.3,298.7 1316.5,284.0 1318.0,272.0 1326.0,240.0" fill="#ffffff" stroke="#9a9a9a" stroke-width="3"/><polygon points="772.0,509.2 770.0,525.4 765.5,544.9 763.6,550.0 774.0,550.0 780.4,554.0 790.8,565.6 805.0,583.8 815.4,599.3 823.2,613.6 827.5,620.0 836.0,635.0 837.5,645.0 845.0,655.0 862.5,665.0 875.0,677.5 878.8,685.0 890.0,708.8 888.0,725.0 892.5,742.5 897.5,753.8 910.0,770.0 921.2,775.0 930.0,781.5 941.1,791.7 949.4,807.4 953.1,820.4 963.3,835.2 976.3,850.0 981.2,850.0 985.0,857.5 987.5,865.0 993.8,876.2 997.5,885.0 1001.7,905.2 1004.3,926.0 1006.9,946.7 1012.1,972.7 1017.3,988.2 1032.9,993.4 1056.2,988.2 1071.8,983.0 1085.0,980.4 1111.3,970.0 1145.0,953.2 1165.7,951.9 1178.7,938.9 1194.3,931.1 1235.7,918.2 1266.9,906.5 1268.2,893.5 1277.2,881.9 1292.8,876.7 1316.1,870.2 1323.9,866.3 1342.0,868.9 1355.0,858.5 1356.3,848.2 1362.8,843.0 1386.1,840.4 1393.9,827.4 1403.0,815.7 1436.0,813.0 1459.0,782.6 1498.0,743.0 1530.0,740.0 1530.0,1090.0 1248.0,1090.0 1248.0,1023.0 1241.0,1017.0 1230.0,1013.0 1216.3,1019.3 1155.0,1040.0 1038.0,1047.0 1004.0,1020.0 1014.7,1009.0 1006.9,990.8 983.6,972.7 962.8,949.3 931.7,928.6 921.4,920.8 916.2,913.0 911.0,919.5 900.6,897.4 894.1,881.9 885.0,856.0 874.7,837.8 864.3,830.0 853.9,820.9 843.5,811.9 838.4,780.7 836.2,755.0 836.2,747.5 830.0,737.5 828.0,724.3 822.8,715.2 793.0,691.9 787.8,681.5 787.8,669.9 794.3,668.6 778.8,652.5 765.0,627.5 761.0,620.0 750.3,600.0 700.0,512.0 694.0,504.0 698.0,502.0 750.3,558.5 751.9,557.8 757.7,552.6 758.4,544.9 763.6,531.9 767.5,515.0" fill="#ffffff" stroke="#a0a0a0" stroke-width="3"/><polygon points="1300.6,996.0 1310.0,990.0 1323.9,989.5 1333.0,996.0 1316.1,1002.4 1303.2,1001.1" fill="#f0f0f0" stroke="#a0a0a0" stroke-width="3"/><polygon points="1161.0,495.6 1173.8,493.8 1174.4,485.0 1183.8,490.0 1192.5,493.0 1203.8,489.4 1207.5,491.0 1211.0,499.4 1222.0,510.0 1223.8,518.8 1230.0,522.5 1230.0,527.0 1234.4,530.0 1237.5,540.0 1245.0,553.0 1252.5,556.0 1263.8,557.5 1276.0,565.0 1281.0,570.0 1286.0,574.0 1301.0,580.6 1310.0,588.0 1327.5,589.4 1340.0,594.4 1355.0,587.5 1370.0,580.0 1387.5,575.6 1396.0,576.0 1402.5,582.5 1440.0,600.0 1480.0,615.0 1530.0,625.0 1530.0,705.0 1498.0,711.6 1428.0,676.0 1402.5,661.2 1392.5,650.0 1387.5,638.8 1386.2,620.0 1388.8,605.0 1387.5,599.4 1380.0,607.5 1373.8,615.0 1360.0,625.0 1352.5,632.5 1338.8,645.0 1336.2,650.0 1328.8,655.0 1320.0,662.5 1313.8,663.8 1280.0,662.5 1257.5,666.2 1251.2,661.2 1245.0,657.5 1243.8,650.0 1250.0,635.0 1249.4,613.8 1240.0,605.6 1232.5,610.0 1227.5,623.8 1227.5,645.0 1226.0,642.5 1220.0,628.8 1211.0,619.0 1205.0,607.5 1211.0,601.0 1207.5,590.0 1201.0,585.0 1191.0,576.0 1180.0,567.5 1170.0,555.0 1158.8,536.9 1158.8,532.5 1152.5,525.0 1150.0,515.0 1141.0,512.5 1147.5,507.5 1157.5,500.0" fill="#ffffff" stroke="#a0a0a0" stroke-width="3"/><polygon points="772.0,509.2 803.8,517.6 825.0,498.8 845.0,495.0 851.2,485.0 859.4,480.6 833.1,451.9 860.0,445.6 887.5,437.5 895.6,433.1 928.8,438.8 1052.5,516.9 1088.8,520.6 1105.0,520.6 1132.5,523.8 1139.4,536.9 1158.8,536.9 1166.0,550.0 1170.0,555.0 1180.0,567.5 1191.0,576.0 1201.0,585.0 1207.5,590.0 1211.0,601.0 1205.0,607.5 1211.0,619.0 1220.0,628.8 1226.0,642.5 1233.8,652.5 1242.5,653.8 1245.0,657.5 1250.0,660.0 1278.8,696.2 1353.8,705.0 1366.7,725.0 1347.7,780.6 1262.4,810.4 1178.4,821.9 1152.5,835.0 1132.5,861.2 1128.8,865.0 1120.0,868.8 1111.2,860.0 1092.5,860.0 1065.0,855.6 1038.8,856.2 1030.0,858.8 1015.0,852.5 1012.5,857.5 1011.2,870.0 1010.0,877.5 997.5,884.4 993.8,876.2 987.5,865.0 985.0,857.5 981.2,850.0 976.3,850.0 963.3,835.2 953.1,820.4 949.4,807.4 941.1,791.7 930.0,781.5 921.2,775.0 910.0,770.0 897.5,753.8 892.5,742.5 888.0,725.0 890.0,708.8 878.8,685.0 875.0,677.5 862.5,665.0 845.0,655.0 837.5,645.0 836.0,635.0 827.5,620.0 823.2,613.6 815.4,599.3 805.0,583.8 790.8,565.6 780.4,554.0 774.0,550.0 763.6,550.0 765.5,544.9 770.0,525.4" fill="#cccccc"/><polygon points="890.0,547.5 906.0,538.8 931.2,528.8 956.2,526.9 980.0,528.8 987.5,531.0 993.8,537.5 1002.5,535.0 1006.0,540.6 1017.5,543.0 1023.8,540.0 1031.2,550.0 1035.0,556.0 1055.0,565.0 1060.0,566.0 1050.0,567.5 1050.0,573.8 1046.0,578.0 1038.8,578.0 1028.8,571.0 1013.8,577.5 1005.0,586.0 985.0,597.5 980.0,602.5 978.8,610.0 972.5,617.5 960.0,622.5 937.5,622.5 917.5,628.8 915.0,612.5 916.0,600.0 911.0,597.5 913.8,586.0 922.5,576.0 915.0,570.0 911.0,557.5 900.0,550.0" fill="none" stroke="#a4a4a4" stroke-width="2.8"/><polygon points="980.0,602.5 985.0,597.5 1005.0,586.0 1013.8,577.5 1028.8,571.0 1038.8,578.0 1046.0,578.0 1050.0,573.8 1056.0,580.0 1043.8,591.0 1043.8,598.8 1052.5,611.0 1053.8,621.0 1033.8,622.5 1016.2,631.0 1010.0,635.8 1006.7,640.0 1007.5,644.0 1005.0,646.7 999.2,647.0 988.3,646.2 981.7,644.6 977.5,649.2 973.3,642.5 970.8,637.5 965.0,635.0 964.2,630.0 965.0,625.0 960.0,622.5 972.5,617.5 978.8,610.0" fill="none" stroke="#a4a4a4" stroke-width="2.8"/><polygon points="1060.0,566.0 1067.5,573.8 1086.0,584.0 1108.8,592.0 1121.0,598.0 1132.0,602.5 1132.5,637.5 1135.0,650.0 1152.5,660.0 1156.0,675.0 1152.8,702.2 1147.6,733.3 1143.7,770.0 1138.8,795.6 1102.5,800.0 1071.2,803.0 1047.5,796.2 1037.5,787.5 1031.2,777.5 1032.5,765.0 1022.5,753.8 1015.0,740.0 1017.5,723.8 1017.5,710.0 1010.0,708.8 1007.5,709.2 1003.3,707.5 1004.2,700.8 1002.5,698.3 985.8,696.7 978.3,675.8 974.2,673.3 974.2,668.3 975.4,654.2 977.5,649.2 981.7,644.6 988.3,646.2 999.2,647.0 1005.0,646.7 1007.5,644.0 1006.7,640.0 1010.0,635.8 1016.2,631.0 1033.8,622.5 1053.8,621.0 1052.5,611.0 1043.8,598.8 1043.8,591.0 1056.0,580.0 1050.0,573.8 1050.0,567.5" fill="none" stroke="#a4a4a4" stroke-width="2.8"/><polygon points="878.8,683.8 886.2,682.5 895.0,690.0 902.5,691.2 915.0,692.5 916.2,702.5 922.5,710.0 930.0,706.2 936.7,707.9 938.3,705.0 954.2,691.7 959.2,689.2 954.2,685.0 955.0,683.3 968.3,676.7 967.5,669.2 971.7,667.9 974.2,668.3 974.2,673.3 978.3,675.8 985.8,696.7 1002.5,698.3 1004.2,700.8 1003.3,707.5 1007.5,709.2 1010.0,708.8 1017.5,710.0 1017.5,723.8 1015.0,740.0 1022.5,753.8 1010.0,755.6 1002.2,758.3 988.3,768.5 981.9,771.3 975.4,767.6 974.4,763.0 961.5,764.8 957.8,759.3 954.1,760.2 953.1,768.5 946.7,775.0 941.1,779.6 944.8,781.5 944.8,788.9 945.7,795.4 953.1,800.0 956.9,798.1 958.7,789.8 967.0,787.0 970.7,788.0 971.7,798.1 969.8,802.8 959.6,805.6 957.8,809.3 957.8,814.8 967.0,818.5 968.9,827.8 963.3,835.2 953.1,820.4 949.4,807.4 941.1,791.7 930.0,781.5 921.2,775.0 910.0,770.0 897.5,753.8 892.5,742.5 888.0,725.0 890.0,708.8" fill="none" stroke="#a4a4a4" stroke-width="2.8"/><polygon points="1047.5,796.2 1071.2,803.0 1102.5,800.0 1138.8,795.6 1132.5,861.2 1128.8,865.0 1120.0,868.8 1111.2,860.0 1092.5,860.0 1065.0,855.6 1038.8,856.2 1030.0,858.8 1022.5,851.2 1022.5,831.2 1035.0,818.8 1043.8,813.8 1042.5,805.0 1046.2,802.5" fill="none" stroke="#a4a4a4" stroke-width="2.8"/><polygon points="941.1,779.6 946.7,775.0 953.1,768.5 954.1,760.2 957.8,759.3 961.5,764.8 974.4,763.0 975.4,767.6 976.3,772.2 969.8,777.8 968.9,782.4 967.0,787.0 958.7,789.8 956.9,798.1 953.1,800.0 945.7,795.4 944.8,788.9 944.8,781.5" fill="none" stroke="#a4a4a4" stroke-width="2.8"/><polyline points="770.0,525.4 781.7,527.3 797.3,523.5 805.0,524.7 816.7,536.4 828.4,533.2 844.0,535.0 852.5,527.5 853.8,537.5 857.5,542.5 872.5,545.0 880.0,548.0 888.8,546.9 890.0,547.5" fill="none" stroke="#a4a4a4" stroke-width="2.8"/><polyline points="856.9,446.2 856.2,457.5 866.2,469.4 887.5,467.5 912.5,470.0 920.0,473.8 941.2,473.8 952.5,480.0 962.5,481.2 972.5,491.9 940.0,511.2 937.5,525.0 931.2,528.8" fill="none" stroke="#a4a4a4" stroke-width="2.8"/><polyline points="1088.8,520.6 1086.0,527.5 1078.8,532.5 1068.8,550.0 1060.0,560.0 1060.0,566.0" fill="none" stroke="#a4a4a4" stroke-width="2.8"/><polyline points="825.6,575.0 838.8,569.4 853.8,569.4 857.5,576.9 866.9,580.0 870.6,586.9 882.5,583.0 893.8,590.0 910.0,589.4 913.8,586.0" fill="none" stroke="#a4a4a4" stroke-width="2.8"/><polyline points="825.6,575.0 831.2,578.8 839.4,592.5 836.2,598.8 840.0,607.5 850.0,611.2 857.5,622.5 861.2,625.0 860.0,642.5 845.0,647.5 841.0,651.0" fill="none" stroke="#a4a4a4" stroke-width="2.8"/><polyline points="1022.5,851.2 1015.0,852.5" fill="none" stroke="#a4a4a4" stroke-width="2.8"/><polyline points="963.3,835.2 968.9,829.6 973.5,830.6 972.6,836.1 979.1,838.9 984.6,841.7 993.0,848.1 997.6,842.6 1002.2,838.9 1004.1,842.6 1009.6,847.2 1015.0,852.5" fill="none" stroke="#a4a4a4" stroke-width="2.8"/><polyline points="752.2,457.6 772.0,509.2" fill="none" stroke="#6e6e6e" stroke-width="3.6"/><polyline points="790.6,420.0 787.5,452.5 786.2,467.5 780.0,480.0 772.7,508.2" fill="none" stroke="#6e6e6e" stroke-width="3.6"/><polyline points="793.2,419.1 804.0,416.7 826.9,427.5 883.5,398.6 947.3,367.3 953.3,356.5 956.9,334.8 954.5,318.0 956.9,310.7 982.2,291.5 985.8,286.7" fill="none" stroke="#6e6e6e" stroke-width="3.6"/><polyline points="883.5,398.6 889.5,421.5 896.7,431.1 895.6,433.1" fill="none" stroke="#6e6e6e" stroke-width="3.6"/><polyline points="800.4,324.0 807.6,326.4 814.8,316.8 823.2,315.6 818.4,307.1 822.0,298.7 835.3,303.5 870.2,296.3 882.2,302.3 911.1,301.1 940.0,290.3 964.1,291.0 982.2,286.7 985.8,291.5 997.8,283.1 1017.1,285.5 1030.3,286.7 1037.6,285.5 1040.0,293.9 1055.0,289.0" fill="none" stroke="#6e6e6e" stroke-width="3.6"/><polyline points="1040.0,240.0 1047.1,272.0 1055.6,289.0 1071.3,321.6 1084.6,327.6 1096.7,328.8 1090.6,334.8 1094.3,348.0 1084.6,350.4 1081.0,357.7 1081.0,363.7 1075.0,370.9 1078.5,380.6 1087.0,390.2 1094.3,399.8 1094.3,409.4 1108.7,411.8 1130.4,425.0 1142.4,443.1 1138.8,455.1 1138.8,464.8 1147.2,467.2 1148.8,480.0 1157.5,488.0 1161.0,495.6" fill="none" stroke="#6e6e6e" stroke-width="3.6"/><polyline points="1105.0,520.6 1115.0,510.0 1125.0,493.0 1136.0,491.0 1147.5,494.4 1152.5,493.8 1161.0,495.6" fill="none" stroke="#6e6e6e" stroke-width="3.6"/><polyline points="800.9,361.3 813.6,361.3 819.6,373.4 812.4,383.0 802.8,392.6 793.2,402.2 787.1,407.0 777.5,407.0" fill="none" stroke="#6e6e6e" stroke-width="3.6"/><polyline points="781.1,423.9 789.5,425.1 788.3,450.4 771.5,456.4 779.9,444.4 773.9,438.4 773.9,428.7 781.1,423.9" fill="none" stroke="#6e6e6e" stroke-width="3.6"/><polyline points="690.0,724.3 828.0,724.3" fill="none" stroke="#6e6e6e" stroke-width="3.6"/><polyline points="877.3,839.0 866.9,850.8 846.1,858.5 831.9,866.3 829.3,881.9 817.6,920.8 820.2,946.7 807.2,990.8 794.3,992.1 776.1,1019.3 760.0,1060.0" fill="none" stroke="#6e6e6e" stroke-width="3.6"/><polyline points="820.2,945.4 833.2,941.5 839.7,941.5 847.4,946.7 857.8,929.9 874.7,941.5 892.8,936.3 898.0,940.2 905.8,937.6 921.4,940.2 942.1,949.3 965.4,972.7 986.2,997.3 996.6,999.9 1006.9,990.8" fill="none" stroke="#6e6e6e" stroke-width="3.6"/><polyline points="996.6,999.9 970.6,1019.3 950.0,1060.0" fill="none" stroke="#6e6e6e" stroke-width="3.6"/><polyline points="1250.0,660.0 1278.8,696.2 1353.8,705.0 1366.7,725.0 1347.7,780.6 1262.4,810.4 1178.4,821.9 1152.5,835.0 1132.5,861.2 1128.8,865.0 1120.0,868.8 1111.2,860.0 1092.5,860.0 1065.0,855.6 1038.8,856.2 1030.0,858.8 1015.0,852.5 1012.5,857.5 1011.2,870.0 1010.0,877.5 997.5,884.4" fill="none" stroke="#6e6e6e" stroke-width="3.6"/><polyline points="772.0,509.2 803.8,517.6 825.0,498.8 845.0,495.0 851.2,485.0 859.4,480.6 833.1,451.9 860.0,445.6 887.5,437.5 895.6,433.1 928.8,438.8 1052.5,516.9 1088.8,520.6 1105.0,520.6 1132.5,523.8 1139.4,536.9 1158.8,536.9" fill="none" stroke="#6e6e6e" stroke-width="3.6"/><polyline points="1353.8,705.0 1354.4,692.5 1364.4,677.5 1362.5,670.0 1376.0,665.0 1370.0,660.0 1372.5,639.4 1377.5,640.0 1380.0,645.0 1387.5,638.8" fill="none" stroke="#6e6e6e" stroke-width="3.6"/><polyline points="1262.4,810.4 1294.1,878.0" fill="none" stroke="#6e6e6e" stroke-width="3.6"/><polyline points="1315.7,284.3 1326.5,284.3 1342.1,279.4 1345.8,272.0 1369.0,258.0 1426.0,258.0 1488.0,273.0 1519.0,302.5 1540.0,320.0" fill="none" stroke="#6e6e6e" stroke-width="3.6"/></g><line x1="41.1" y1="32.7" x2="43.9" y2="36" stroke="#b14f9a" stroke-width="0.7"/><line x1="54.5" y1="37.1" x2="46.1" y2="52.4" stroke="#b14f9a" stroke-width="0.7"/><path d="M43.90,24.70L52.00,24.70A8.10,8.10 0 0 1 40.22,31.92Z" fill="#b2d06e"/><path d="M43.90,24.70L40.22,31.92A8.10,8.10 0 1 1 52.00,24.70Z" fill="#67b22f"/><path d="M39.20,41.90L45.60,41.90A6.40,6.40 0 0 1 32.80,41.90Z" fill="#7ebcc3"/><path d="M39.20,41.90L32.80,41.90A6.40,6.40 0 0 1 45.60,41.90Z" fill="#67b22f"/><path d="M66.70,35.80L78.60,35.80A11.90,11.90 0 0 1 60.93,46.21Z" fill="#b2d06e"/><path d="M66.70,35.80L60.93,46.21A11.90,11.90 0 1 1 72.65,25.49Z" fill="#7ebcc3"/><path d="M66.70,35.80L72.65,25.49A11.90,11.90 0 0 1 78.60,35.80Z" fill="#67b22f"/><circle cx="30.60" cy="57.10" r="6.40" fill="#67b22f"/><path d="M37.80,83.00L54.60,83.00A16.80,16.80 0 0 1 35.75,99.67Z" fill="#7ebcc3"/><path d="M37.80,83.00L35.75,99.67A16.80,16.80 0 1 1 54.60,83.00Z" fill="#67b22f"/><circle cx="74.80" cy="68.00" r="17.10" fill="#67b22f"/></svg><svg class="abs" style="left:1538.0px;top:651.4px" width="117.4" height="116.7" viewBox="0 0 117.4 116.7"><rect width="117.4" height="116.7" fill="#f0f0f0"/><g transform="matrix(0.1425,0,0,0.1422,-98.9,-35.5)" vector-effect="non-scaling-stroke"><polygon points="690.0,313.0 750.0,309.7 762.8,300.3 767.8,300.3 772.2,301.4 782.2,306.1 790.0,306.1 794.4,300.8 802.2,296.7 806.7,297.8 808.3,302.2 807.8,303.9 798.3,313.3 801.6,324.0 796.0,334.8 801.6,345.7 800.9,361.3 792.0,375.8 783.5,395.0 777.5,407.0 771.5,428.7 765.5,440.8 759.4,450.4 752.2,457.6 740.0,462.0 720.0,472.0 700.0,492.0 690.0,496.0" fill="#ffffff" stroke="#9a9a9a" stroke-width="3"/><polygon points="735.0,336.0 748.0,332.0 761.9,332.4 756.0,336.0 749.8,338.4 738.0,340.0" fill="#f0f0f0" stroke="#9a9a9a" stroke-width="3"/><polygon points="1168.0,240.0 1176.1,272.0 1183.3,275.8 1200.2,280.6 1212.2,284.3 1219.4,292.7 1238.7,302.3 1260.3,305.9 1306.0,297.5 1319.3,298.7 1316.5,284.0 1318.0,272.0 1326.0,240.0" fill="#ffffff" stroke="#9a9a9a" stroke-width="3"/><polygon points="772.0,509.2 770.0,525.4 765.5,544.9 763.6,550.0 774.0,550.0 780.4,554.0 790.8,565.6 805.0,583.8 815.4,599.3 823.2,613.6 827.5,620.0 836.0,635.0 837.5,645.0 845.0,655.0 862.5,665.0 875.0,677.5 878.8,685.0 890.0,708.8 888.0,725.0 892.5,742.5 897.5,753.8 910.0,770.0 921.2,775.0 930.0,781.5 941.1,791.7 949.4,807.4 953.1,820.4 963.3,835.2 976.3,850.0 981.2,850.0 985.0,857.5 987.5,865.0 993.8,876.2 997.5,885.0 1001.7,905.2 1004.3,926.0 1006.9,946.7 1012.1,972.7 1017.3,988.2 1032.9,993.4 1056.2,988.2 1071.8,983.0 1085.0,980.4 1111.3,970.0 1145.0,953.2 1165.7,951.9 1178.7,938.9 1194.3,931.1 1235.7,918.2 1266.9,906.5 1268.2,893.5 1277.2,881.9 1292.8,876.7 1316.1,870.2 1323.9,866.3 1342.0,868.9 1355.0,858.5 1356.3,848.2 1362.8,843.0 1386.1,840.4 1393.9,827.4 1403.0,815.7 1436.0,813.0 1459.0,782.6 1498.0,743.0 1530.0,740.0 1530.0,1090.0 1248.0,1090.0 1248.0,1023.0 1241.0,1017.0 1230.0,1013.0 1216.3,1019.3 1155.0,1040.0 1038.0,1047.0 1004.0,1020.0 1014.7,1009.0 1006.9,990.8 983.6,972.7 962.8,949.3 931.7,928.6 921.4,920.8 916.2,913.0 911.0,919.5 900.6,897.4 894.1,881.9 885.0,856.0 874.7,837.8 864.3,830.0 853.9,820.9 843.5,811.9 838.4,780.7 836.2,755.0 836.2,747.5 830.0,737.5 828.0,724.3 822.8,715.2 793.0,691.9 787.8,681.5 787.8,669.9 794.3,668.6 778.8,652.5 765.0,627.5 761.0,620.0 750.3,600.0 700.0,512.0 694.0,504.0 698.0,502.0 750.3,558.5 751.9,557.8 757.7,552.6 758.4,544.9 763.6,531.9 767.5,515.0" fill="#ffffff" stroke="#a0a0a0" stroke-width="3"/><polygon points="1300.6,996.0 1310.0,990.0 1323.9,989.5 1333.0,996.0 1316.1,1002.4 1303.2,1001.1" fill="#f0f0f0" stroke="#a0a0a0" stroke-width="3"/><polygon points="1161.0,495.6 1173.8,493.8 1174.4,485.0 1183.8,490.0 1192.5,493.0 1203.8,489.4 1207.5,491.0 1211.0,499.4 1222.0,510.0 1223.8,518.8 1230.0,522.5 1230.0,527.0 1234.4,530.0 1237.5,540.0 1245.0,553.0 1252.5,556.0 1263.8,557.5 1276.0,565.0 1281.0,570.0 1286.0,574.0 1301.0,580.6 1310.0,588.0 1327.5,589.4 1340.0,594.4 1355.0,587.5 1370.0,580.0 1387.5,575.6 1396.0,576.0 1402.5,582.5 1440.0,600.0 1480.0,615.0 1530.0,625.0 1530.0,705.0 1498.0,711.6 1428.0,676.0 1402.5,661.2 1392.5,650.0 1387.5,638.8 1386.2,620.0 1388.8,605.0 1387.5,599.4 1380.0,607.5 1373.8,615.0 1360.0,625.0 1352.5,632.5 1338.8,645.0 1336.2,650.0 1328.8,655.0 1320.0,662.5 1313.8,663.8 1280.0,662.5 1257.5,666.2 1251.2,661.2 1245.0,657.5 1243.8,650.0 1250.0,635.0 1249.4,613.8 1240.0,605.6 1232.5,610.0 1227.5,623.8 1227.5,645.0 1226.0,642.5 1220.0,628.8 1211.0,619.0 1205.0,607.5 1211.0,601.0 1207.5,590.0 1201.0,585.0 1191.0,576.0 1180.0,567.5 1170.0,555.0 1158.8,536.9 1158.8,532.5 1152.5,525.0 1150.0,515.0 1141.0,512.5 1147.5,507.5 1157.5,500.0" fill="#ffffff" stroke="#a0a0a0" stroke-width="3"/><polygon points="772.0,509.2 803.8,517.6 825.0,498.8 845.0,495.0 851.2,485.0 859.4,480.6 833.1,451.9 860.0,445.6 887.5,437.5 895.6,433.1 928.8,438.8 1052.5,516.9 1088.8,520.6 1105.0,520.6 1132.5,523.8 1139.4,536.9 1158.8,536.9 1166.0,550.0 1170.0,555.0 1180.0,567.5 1191.0,576.0 1201.0,585.0 1207.5,590.0 1211.0,601.0 1205.0,607.5 1211.0,619.0 1220.0,628.8 1226.0,642.5 1233.8,652.5 1242.5,653.8 1245.0,657.5 1250.0,660.0 1278.8,696.2 1353.8,705.0 1366.7,725.0 1347.7,780.6 1262.4,810.4 1178.4,821.9 1152.5,835.0 1132.5,861.2 1128.8,865.0 1120.0,868.8 1111.2,860.0 1092.5,860.0 1065.0,855.6 1038.8,856.2 1030.0,858.8 1015.0,852.5 1012.5,857.5 1011.2,870.0 1010.0,877.5 997.5,884.4 993.8,876.2 987.5,865.0 985.0,857.5 981.2,850.0 976.3,850.0 963.3,835.2 953.1,820.4 949.4,807.4 941.1,791.7 930.0,781.5 921.2,775.0 910.0,770.0 897.5,753.8 892.5,742.5 888.0,725.0 890.0,708.8 878.8,685.0 875.0,677.5 862.5,665.0 845.0,655.0 837.5,645.0 836.0,635.0 827.5,620.0 823.2,613.6 815.4,599.3 805.0,583.8 790.8,565.6 780.4,554.0 774.0,550.0 763.6,550.0 765.5,544.9 770.0,525.4" fill="#cccccc"/><polygon points="890.0,547.5 906.0,538.8 931.2,528.8 956.2,526.9 980.0,528.8 987.5,531.0 993.8,537.5 1002.5,535.0 1006.0,540.6 1017.5,543.0 1023.8,540.0 1031.2,550.0 1035.0,556.0 1055.0,565.0 1060.0,566.0 1050.0,567.5 1050.0,573.8 1046.0,578.0 1038.8,578.0 1028.8,571.0 1013.8,577.5 1005.0,586.0 985.0,597.5 980.0,602.5 978.8,610.0 972.5,617.5 960.0,622.5 937.5,622.5 917.5,628.8 915.0,612.5 916.0,600.0 911.0,597.5 913.8,586.0 922.5,576.0 915.0,570.0 911.0,557.5 900.0,550.0" fill="none" stroke="#a4a4a4" stroke-width="2.8"/><polygon points="980.0,602.5 985.0,597.5 1005.0,586.0 1013.8,577.5 1028.8,571.0 1038.8,578.0 1046.0,578.0 1050.0,573.8 1056.0,580.0 1043.8,591.0 1043.8,598.8 1052.5,611.0 1053.8,621.0 1033.8,622.5 1016.2,631.0 1010.0,635.8 1006.7,640.0 1007.5,644.0 1005.0,646.7 999.2,647.0 988.3,646.2 981.7,644.6 977.5,649.2 973.3,642.5 970.8,637.5 965.0,635.0 964.2,630.0 965.0,625.0 960.0,622.5 972.5,617.5 978.8,610.0" fill="none" stroke="#a4a4a4" stroke-width="2.8"/><polygon points="1060.0,566.0 1067.5,573.8 1086.0,584.0 1108.8,592.0 1121.0,598.0 1132.0,602.5 1132.5,637.5 1135.0,650.0 1152.5,660.0 1156.0,675.0 1152.8,702.2 1147.6,733.3 1143.7,770.0 1138.8,795.6 1102.5,800.0 1071.2,803.0 1047.5,796.2 1037.5,787.5 1031.2,777.5 1032.5,765.0 1022.5,753.8 1015.0,740.0 1017.5,723.8 1017.5,710.0 1010.0,708.8 1007.5,709.2 1003.3,707.5 1004.2,700.8 1002.5,698.3 985.8,696.7 978.3,675.8 974.2,673.3 974.2,668.3 975.4,654.2 977.5,649.2 981.7,644.6 988.3,646.2 999.2,647.0 1005.0,646.7 1007.5,644.0 1006.7,640.0 1010.0,635.8 1016.2,631.0 1033.8,622.5 1053.8,621.0 1052.5,611.0 1043.8,598.8 1043.8,591.0 1056.0,580.0 1050.0,573.8 1050.0,567.5" fill="none" stroke="#a4a4a4" stroke-width="2.8"/><polygon points="878.8,683.8 886.2,682.5 895.0,690.0 902.5,691.2 915.0,692.5 916.2,702.5 922.5,710.0 930.0,706.2 936.7,707.9 938.3,705.0 954.2,691.7 959.2,689.2 954.2,685.0 955.0,683.3 968.3,676.7 967.5,669.2 971.7,667.9 974.2,668.3 974.2,673.3 978.3,675.8 985.8,696.7 1002.5,698.3 1004.2,700.8 1003.3,707.5 1007.5,709.2 1010.0,708.8 1017.5,710.0 1017.5,723.8 1015.0,740.0 1022.5,753.8 1010.0,755.6 1002.2,758.3 988.3,768.5 981.9,771.3 975.4,767.6 974.4,763.0 961.5,764.8 957.8,759.3 954.1,760.2 953.1,768.5 946.7,775.0 941.1,779.6 944.8,781.5 944.8,788.9 945.7,795.4 953.1,800.0 956.9,798.1 958.7,789.8 967.0,787.0 970.7,788.0 971.7,798.1 969.8,802.8 959.6,805.6 957.8,809.3 957.8,814.8 967.0,818.5 968.9,827.8 963.3,835.2 953.1,820.4 949.4,807.4 941.1,791.7 930.0,781.5 921.2,775.0 910.0,770.0 897.5,753.8 892.5,742.5 888.0,725.0 890.0,708.8" fill="none" stroke="#a4a4a4" stroke-width="2.8"/><polygon points="1047.5,796.2 1071.2,803.0 1102.5,800.0 1138.8,795.6 1132.5,861.2 1128.8,865.0 1120.0,868.8 1111.2,860.0 1092.5,860.0 1065.0,855.6 1038.8,856.2 1030.0,858.8 1022.5,851.2 1022.5,831.2 1035.0,818.8 1043.8,813.8 1042.5,805.0 1046.2,802.5" fill="none" stroke="#a4a4a4" stroke-width="2.8"/><polygon points="941.1,779.6 946.7,775.0 953.1,768.5 954.1,760.2 957.8,759.3 961.5,764.8 974.4,763.0 975.4,767.6 976.3,772.2 969.8,777.8 968.9,782.4 967.0,787.0 958.7,789.8 956.9,798.1 953.1,800.0 945.7,795.4 944.8,788.9 944.8,781.5" fill="none" stroke="#a4a4a4" stroke-width="2.8"/><polyline points="770.0,525.4 781.7,527.3 797.3,523.5 805.0,524.7 816.7,536.4 828.4,533.2 844.0,535.0 852.5,527.5 853.8,537.5 857.5,542.5 872.5,545.0 880.0,548.0 888.8,546.9 890.0,547.5" fill="none" stroke="#a4a4a4" stroke-width="2.8"/><polyline points="856.9,446.2 856.2,457.5 866.2,469.4 887.5,467.5 912.5,470.0 920.0,473.8 941.2,473.8 952.5,480.0 962.5,481.2 972.5,491.9 940.0,511.2 937.5,525.0 931.2,528.8" fill="none" stroke="#a4a4a4" stroke-width="2.8"/><polyline points="1088.8,520.6 1086.0,527.5 1078.8,532.5 1068.8,550.0 1060.0,560.0 1060.0,566.0" fill="none" stroke="#a4a4a4" stroke-width="2.8"/><polyline points="825.6,575.0 838.8,569.4 853.8,569.4 857.5,576.9 866.9,580.0 870.6,586.9 882.5,583.0 893.8,590.0 910.0,589.4 913.8,586.0" fill="none" stroke="#a4a4a4" stroke-width="2.8"/><polyline points="825.6,575.0 831.2,578.8 839.4,592.5 836.2,598.8 840.0,607.5 850.0,611.2 857.5,622.5 861.2,625.0 860.0,642.5 845.0,647.5 841.0,651.0" fill="none" stroke="#a4a4a4" stroke-width="2.8"/><polyline points="1022.5,851.2 1015.0,852.5" fill="none" stroke="#a4a4a4" stroke-width="2.8"/><polyline points="963.3,835.2 968.9,829.6 973.5,830.6 972.6,836.1 979.1,838.9 984.6,841.7 993.0,848.1 997.6,842.6 1002.2,838.9 1004.1,842.6 1009.6,847.2 1015.0,852.5" fill="none" stroke="#a4a4a4" stroke-width="2.8"/><polyline points="752.2,457.6 772.0,509.2" fill="none" stroke="#6e6e6e" stroke-width="3.6"/><polyline points="790.6,420.0 787.5,452.5 786.2,467.5 780.0,480.0 772.7,508.2" fill="none" stroke="#6e6e6e" stroke-width="3.6"/><polyline points="793.2,419.1 804.0,416.7 826.9,427.5 883.5,398.6 947.3,367.3 953.3,356.5 956.9,334.8 954.5,318.0 956.9,310.7 982.2,291.5 985.8,286.7" fill="none" stroke="#6e6e6e" stroke-width="3.6"/><polyline points="883.5,398.6 889.5,421.5 896.7,431.1 895.6,433.1" fill="none" stroke="#6e6e6e" stroke-width="3.6"/><polyline points="800.4,324.0 807.6,326.4 814.8,316.8 823.2,315.6 818.4,307.1 822.0,298.7 835.3,303.5 870.2,296.3 882.2,302.3 911.1,301.1 940.0,290.3 964.1,291.0 982.2,286.7 985.8,291.5 997.8,283.1 1017.1,285.5 1030.3,286.7 1037.6,285.5 1040.0,293.9 1055.0,289.0" fill="none" stroke="#6e6e6e" stroke-width="3.6"/><polyline points="1040.0,240.0 1047.1,272.0 1055.6,289.0 1071.3,321.6 1084.6,327.6 1096.7,328.8 1090.6,334.8 1094.3,348.0 1084.6,350.4 1081.0,357.7 1081.0,363.7 1075.0,370.9 1078.5,380.6 1087.0,390.2 1094.3,399.8 1094.3,409.4 1108.7,411.8 1130.4,425.0 1142.4,443.1 1138.8,455.1 1138.8,464.8 1147.2,467.2 1148.8,480.0 1157.5,488.0 1161.0,495.6" fill="none" stroke="#6e6e6e" stroke-width="3.6"/><polyline points="1105.0,520.6 1115.0,510.0 1125.0,493.0 1136.0,491.0 1147.5,494.4 1152.5,493.8 1161.0,495.6" fill="none" stroke="#6e6e6e" stroke-width="3.6"/><polyline points="800.9,361.3 813.6,361.3 819.6,373.4 812.4,383.0 802.8,392.6 793.2,402.2 787.1,407.0 777.5,407.0" fill="none" stroke="#6e6e6e" stroke-width="3.6"/><polyline points="781.1,423.9 789.5,425.1 788.3,450.4 771.5,456.4 779.9,444.4 773.9,438.4 773.9,428.7 781.1,423.9" fill="none" stroke="#6e6e6e" stroke-width="3.6"/><polyline points="690.0,724.3 828.0,724.3" fill="none" stroke="#6e6e6e" stroke-width="3.6"/><polyline points="877.3,839.0 866.9,850.8 846.1,858.5 831.9,866.3 829.3,881.9 817.6,920.8 820.2,946.7 807.2,990.8 794.3,992.1 776.1,1019.3 760.0,1060.0" fill="none" stroke="#6e6e6e" stroke-width="3.6"/><polyline points="820.2,945.4 833.2,941.5 839.7,941.5 847.4,946.7 857.8,929.9 874.7,941.5 892.8,936.3 898.0,940.2 905.8,937.6 921.4,940.2 942.1,949.3 965.4,972.7 986.2,997.3 996.6,999.9 1006.9,990.8" fill="none" stroke="#6e6e6e" stroke-width="3.6"/><polyline points="996.6,999.9 970.6,1019.3 950.0,1060.0" fill="none" stroke="#6e6e6e" stroke-width="3.6"/><polyline points="1250.0,660.0 1278.8,696.2 1353.8,705.0 1366.7,725.0 1347.7,780.6 1262.4,810.4 1178.4,821.9 1152.5,835.0 1132.5,861.2 1128.8,865.0 1120.0,868.8 1111.2,860.0 1092.5,860.0 1065.0,855.6 1038.8,856.2 1030.0,858.8 1015.0,852.5 1012.5,857.5 1011.2,870.0 1010.0,877.5 997.5,884.4" fill="none" stroke="#6e6e6e" stroke-width="3.6"/><polyline points="772.0,509.2 803.8,517.6 825.0,498.8 845.0,495.0 851.2,485.0 859.4,480.6 833.1,451.9 860.0,445.6 887.5,437.5 895.6,433.1 928.8,438.8 1052.5,516.9 1088.8,520.6 1105.0,520.6 1132.5,523.8 1139.4,536.9 1158.8,536.9" fill="none" stroke="#6e6e6e" stroke-width="3.6"/><polyline points="1353.8,705.0 1354.4,692.5 1364.4,677.5 1362.5,670.0 1376.0,665.0 1370.0,660.0 1372.5,639.4 1377.5,640.0 1380.0,645.0 1387.5,638.8" fill="none" stroke="#6e6e6e" stroke-width="3.6"/><polyline points="1262.4,810.4 1294.1,878.0" fill="none" stroke="#6e6e6e" stroke-width="3.6"/><polyline points="1315.7,284.3 1326.5,284.3 1342.1,279.4 1345.8,272.0 1369.0,258.0 1426.0,258.0 1488.0,273.0 1519.0,302.5 1540.0,320.0" fill="none" stroke="#6e6e6e" stroke-width="3.6"/></g><line x1="27.2" y1="37.1" x2="49" y2="28" stroke="#b14f9a" stroke-width="0.7"/><line x1="46.7" y1="19.4" x2="45.1" y2="52.1" stroke="#b14f9a" stroke-width="0.7"/><line x1="28.9" y1="57.1" x2="30.6" y2="67.7" stroke="#b14f9a" stroke-width="0.7"/><line x1="44.5" y1="79.9" x2="37.2" y2="94.6" stroke="#b14f9a" stroke-width="0.7"/><circle cx="30.30" cy="19.10" r="16.00" fill="#67b22f"/><path d="M71.70,28.00L94.30,28.00A22.60,22.60 0 0 1 49.10,28.00Z" fill="#b2d06e"/><path d="M71.70,28.00L49.10,28.00A22.60,22.60 0 0 1 94.30,28.00Z" fill="#7ebcc3"/><circle cx="20.60" cy="44.10" r="6.40" fill="#67b22f"/><circle cx="38.30" cy="47.50" r="8.00" fill="#67b22f"/><circle cx="19.50" cy="68.80" r="10.90" fill="#67b22f"/><circle cx="37.00" cy="70.50" r="4.20" fill="#67b22f"/><circle cx="48.10" cy="73.20" r="4.20" fill="#67b22f"/><circle cx="55.90" cy="84.40" r="4.20" fill="#67b22f"/><circle cx="43.30" cy="88.00" r="4.20" fill="#67b22f"/><path d="M78.00,67.90L93.00,67.90A15.00,15.00 0 0 1 89.15,77.94Z" fill="#b2d06e"/><path d="M78.00,67.90L89.15,77.94A15.00,15.00 0 1 1 93.00,67.90Z" fill="#67b22f"/><path d="M23.10,95.20L36.00,95.20A12.90,12.90 0 0 1 20.42,107.82Z" fill="#b2d06e"/><path d="M23.10,95.20L20.42,107.82A12.90,12.90 0 1 1 36.00,95.20Z" fill="#67b22f"/></svg><svg class="abs" style="left:1411.1px;top:777.8px" width="117.4" height="116.7" viewBox="0 0 117.4 116.7"><rect width="117.4" height="116.7" fill="#f0f0f0"/><g transform="matrix(0.1425,0,0,0.1422,-98.9,-35.5)" vector-effect="non-scaling-stroke"><polygon points="690.0,313.0 750.0,309.7 762.8,300.3 767.8,300.3 772.2,301.4 782.2,306.1 790.0,306.1 794.4,300.8 802.2,296.7 806.7,297.8 808.3,302.2 807.8,303.9 798.3,313.3 801.6,324.0 796.0,334.8 801.6,345.7 800.9,361.3 792.0,375.8 783.5,395.0 777.5,407.0 771.5,428.7 765.5,440.8 759.4,450.4 752.2,457.6 740.0,462.0 720.0,472.0 700.0,492.0 690.0,496.0" fill="#ffffff" stroke="#9a9a9a" stroke-width="3"/><polygon points="735.0,336.0 748.0,332.0 761.9,332.4 756.0,336.0 749.8,338.4 738.0,340.0" fill="#f0f0f0" stroke="#9a9a9a" stroke-width="3"/><polygon points="1168.0,240.0 1176.1,272.0 1183.3,275.8 1200.2,280.6 1212.2,284.3 1219.4,292.7 1238.7,302.3 1260.3,305.9 1306.0,297.5 1319.3,298.7 1316.5,284.0 1318.0,272.0 1326.0,240.0" fill="#ffffff" stroke="#9a9a9a" stroke-width="3"/><polygon points="772.0,509.2 770.0,525.4 765.5,544.9 763.6,550.0 774.0,550.0 780.4,554.0 790.8,565.6 805.0,583.8 815.4,599.3 823.2,613.6 827.5,620.0 836.0,635.0 837.5,645.0 845.0,655.0 862.5,665.0 875.0,677.5 878.8,685.0 890.0,708.8 888.0,725.0 892.5,742.5 897.5,753.8 910.0,770.0 921.2,775.0 930.0,781.5 941.1,791.7 949.4,807.4 953.1,820.4 963.3,835.2 976.3,850.0 981.2,850.0 985.0,857.5 987.5,865.0 993.8,876.2 997.5,885.0 1001.7,905.2 1004.3,926.0 1006.9,946.7 1012.1,972.7 1017.3,988.2 1032.9,993.4 1056.2,988.2 1071.8,983.0 1085.0,980.4 1111.3,970.0 1145.0,953.2 1165.7,951.9 1178.7,938.9 1194.3,931.1 1235.7,918.2 1266.9,906.5 1268.2,893.5 1277.2,881.9 1292.8,876.7 1316.1,870.2 1323.9,866.3 1342.0,868.9 1355.0,858.5 1356.3,848.2 1362.8,843.0 1386.1,840.4 1393.9,827.4 1403.0,815.7 1436.0,813.0 1459.0,782.6 1498.0,743.0 1530.0,740.0 1530.0,1090.0 1248.0,1090.0 1248.0,1023.0 1241.0,1017.0 1230.0,1013.0 1216.3,1019.3 1155.0,1040.0 1038.0,1047.0 1004.0,1020.0 1014.7,1009.0 1006.9,990.8 983.6,972.7 962.8,949.3 931.7,928.6 921.4,920.8 916.2,913.0 911.0,919.5 900.6,897.4 894.1,881.9 885.0,856.0 874.7,837.8 864.3,830.0 853.9,820.9 843.5,811.9 838.4,780.7 836.2,755.0 836.2,747.5 830.0,737.5 828.0,724.3 822.8,715.2 793.0,691.9 787.8,681.5 787.8,669.9 794.3,668.6 778.8,652.5 765.0,627.5 761.0,620.0 750.3,600.0 700.0,512.0 694.0,504.0 698.0,502.0 750.3,558.5 751.9,557.8 757.7,552.6 758.4,544.9 763.6,531.9 767.5,515.0" fill="#ffffff" stroke="#a0a0a0" stroke-width="3"/><polygon points="1300.6,996.0 1310.0,990.0 1323.9,989.5 1333.0,996.0 1316.1,1002.4 1303.2,1001.1" fill="#f0f0f0" stroke="#a0a0a0" stroke-width="3"/><polygon points="1161.0,495.6 1173.8,493.8 1174.4,485.0 1183.8,490.0 1192.5,493.0 1203.8,489.4 1207.5,491.0 1211.0,499.4 1222.0,510.0 1223.8,518.8 1230.0,522.5 1230.0,527.0 1234.4,530.0 1237.5,540.0 1245.0,553.0 1252.5,556.0 1263.8,557.5 1276.0,565.0 1281.0,570.0 1286.0,574.0 1301.0,580.6 1310.0,588.0 1327.5,589.4 1340.0,594.4 1355.0,587.5 1370.0,580.0 1387.5,575.6 1396.0,576.0 1402.5,582.5 1440.0,600.0 1480.0,615.0 1530.0,625.0 1530.0,705.0 1498.0,711.6 1428.0,676.0 1402.5,661.2 1392.5,650.0 1387.5,638.8 1386.2,620.0 1388.8,605.0 1387.5,599.4 1380.0,607.5 1373.8,615.0 1360.0,625.0 1352.5,632.5 1338.8,645.0 1336.2,650.0 1328.8,655.0 1320.0,662.5 1313.8,663.8 1280.0,662.5 1257.5,666.2 1251.2,661.2 1245.0,657.5 1243.8,650.0 1250.0,635.0 1249.4,613.8 1240.0,605.6 1232.5,610.0 1227.5,623.8 1227.5,645.0 1226.0,642.5 1220.0,628.8 1211.0,619.0 1205.0,607.5 1211.0,601.0 1207.5,590.0 1201.0,585.0 1191.0,576.0 1180.0,567.5 1170.0,555.0 1158.8,536.9 1158.8,532.5 1152.5,525.0 1150.0,515.0 1141.0,512.5 1147.5,507.5 1157.5,500.0" fill="#ffffff" stroke="#a0a0a0" stroke-width="3"/><polygon points="772.0,509.2 803.8,517.6 825.0,498.8 845.0,495.0 851.2,485.0 859.4,480.6 833.1,451.9 860.0,445.6 887.5,437.5 895.6,433.1 928.8,438.8 1052.5,516.9 1088.8,520.6 1105.0,520.6 1132.5,523.8 1139.4,536.9 1158.8,536.9 1166.0,550.0 1170.0,555.0 1180.0,567.5 1191.0,576.0 1201.0,585.0 1207.5,590.0 1211.0,601.0 1205.0,607.5 1211.0,619.0 1220.0,628.8 1226.0,642.5 1233.8,652.5 1242.5,653.8 1245.0,657.5 1250.0,660.0 1278.8,696.2 1353.8,705.0 1366.7,725.0 1347.7,780.6 1262.4,810.4 1178.4,821.9 1152.5,835.0 1132.5,861.2 1128.8,865.0 1120.0,868.8 1111.2,860.0 1092.5,860.0 1065.0,855.6 1038.8,856.2 1030.0,858.8 1015.0,852.5 1012.5,857.5 1011.2,870.0 1010.0,877.5 997.5,884.4 993.8,876.2 987.5,865.0 985.0,857.5 981.2,850.0 976.3,850.0 963.3,835.2 953.1,820.4 949.4,807.4 941.1,791.7 930.0,781.5 921.2,775.0 910.0,770.0 897.5,753.8 892.5,742.5 888.0,725.0 890.0,708.8 878.8,685.0 875.0,677.5 862.5,665.0 845.0,655.0 837.5,645.0 836.0,635.0 827.5,620.0 823.2,613.6 815.4,599.3 805.0,583.8 790.8,565.6 780.4,554.0 774.0,550.0 763.6,550.0 765.5,544.9 770.0,525.4" fill="#cccccc"/><polygon points="890.0,547.5 906.0,538.8 931.2,528.8 956.2,526.9 980.0,528.8 987.5,531.0 993.8,537.5 1002.5,535.0 1006.0,540.6 1017.5,543.0 1023.8,540.0 1031.2,550.0 1035.0,556.0 1055.0,565.0 1060.0,566.0 1050.0,567.5 1050.0,573.8 1046.0,578.0 1038.8,578.0 1028.8,571.0 1013.8,577.5 1005.0,586.0 985.0,597.5 980.0,602.5 978.8,610.0 972.5,617.5 960.0,622.5 937.5,622.5 917.5,628.8 915.0,612.5 916.0,600.0 911.0,597.5 913.8,586.0 922.5,576.0 915.0,570.0 911.0,557.5 900.0,550.0" fill="none" stroke="#a4a4a4" stroke-width="2.8"/><polygon points="980.0,602.5 985.0,597.5 1005.0,586.0 1013.8,577.5 1028.8,571.0 1038.8,578.0 1046.0,578.0 1050.0,573.8 1056.0,580.0 1043.8,591.0 1043.8,598.8 1052.5,611.0 1053.8,621.0 1033.8,622.5 1016.2,631.0 1010.0,635.8 1006.7,640.0 1007.5,644.0 1005.0,646.7 999.2,647.0 988.3,646.2 981.7,644.6 977.5,649.2 973.3,642.5 970.8,637.5 965.0,635.0 964.2,630.0 965.0,625.0 960.0,622.5 972.5,617.5 978.8,610.0" fill="none" stroke="#a4a4a4" stroke-width="2.8"/><polygon points="1060.0,566.0 1067.5,573.8 1086.0,584.0 1108.8,592.0 1121.0,598.0 1132.0,602.5 1132.5,637.5 1135.0,650.0 1152.5,660.0 1156.0,675.0 1152.8,702.2 1147.6,733.3 1143.7,770.0 1138.8,795.6 1102.5,800.0 1071.2,803.0 1047.5,796.2 1037.5,787.5 1031.2,777.5 1032.5,765.0 1022.5,753.8 1015.0,740.0 1017.5,723.8 1017.5,710.0 1010.0,708.8 1007.5,709.2 1003.3,707.5 1004.2,700.8 1002.5,698.3 985.8,696.7 978.3,675.8 974.2,673.3 974.2,668.3 975.4,654.2 977.5,649.2 981.7,644.6 988.3,646.2 999.2,647.0 1005.0,646.7 1007.5,644.0 1006.7,640.0 1010.0,635.8 1016.2,631.0 1033.8,622.5 1053.8,621.0 1052.5,611.0 1043.8,598.8 1043.8,591.0 1056.0,580.0 1050.0,573.8 1050.0,567.5" fill="none" stroke="#a4a4a4" stroke-width="2.8"/><polygon points="878.8,683.8 886.2,682.5 895.0,690.0 902.5,691.2 915.0,692.5 916.2,702.5 922.5,710.0 930.0,706.2 936.7,707.9 938.3,705.0 954.2,691.7 959.2,689.2 954.2,685.0 955.0,683.3 968.3,676.7 967.5,669.2 971.7,667.9 974.2,668.3 974.2,673.3 978.3,675.8 985.8,696.7 1002.5,698.3 1004.2,700.8 1003.3,707.5 1007.5,709.2 1010.0,708.8 1017.5,710.0 1017.5,723.8 1015.0,740.0 1022.5,753.8 1010.0,755.6 1002.2,758.3 988.3,768.5 981.9,771.3 975.4,767.6 974.4,763.0 961.5,764.8 957.8,759.3 954.1,760.2 953.1,768.5 946.7,775.0 941.1,779.6 944.8,781.5 944.8,788.9 945.7,795.4 953.1,800.0 956.9,798.1 958.7,789.8 967.0,787.0 970.7,788.0 971.7,798.1 969.8,802.8 959.6,805.6 957.8,809.3 957.8,814.8 967.0,818.5 968.9,827.8 963.3,835.2 953.1,820.4 949.4,807.4 941.1,791.7 930.0,781.5 921.2,775.0 910.0,770.0 897.5,753.8 892.5,742.5 888.0,725.0 890.0,708.8" fill="none" stroke="#a4a4a4" stroke-width="2.8"/><polygon points="1047.5,796.2 1071.2,803.0 1102.5,800.0 1138.8,795.6 1132.5,861.2 1128.8,865.0 1120.0,868.8 1111.2,860.0 1092.5,860.0 1065.0,855.6 1038.8,856.2 1030.0,858.8 1022.5,851.2 1022.5,831.2 1035.0,818.8 1043.8,813.8 1042.5,805.0 1046.2,802.5" fill="none" stroke="#a4a4a4" stroke-width="2.8"/><polygon points="941.1,779.6 946.7,775.0 953.1,768.5 954.1,760.2 957.8,759.3 961.5,764.8 974.4,763.0 975.4,767.6 976.3,772.2 969.8,777.8 968.9,782.4 967.0,787.0 958.7,789.8 956.9,798.1 953.1,800.0 945.7,795.4 944.8,788.9 944.8,781.5" fill="none" stroke="#a4a4a4" stroke-width="2.8"/><polyline points="770.0,525.4 781.7,527.3 797.3,523.5 805.0,524.7 816.7,536.4 828.4,533.2 844.0,535.0 852.5,527.5 853.8,537.5 857.5,542.5 872.5,545.0 880.0,548.0 888.8,546.9 890.0,547.5" fill="none" stroke="#a4a4a4" stroke-width="2.8"/><polyline points="856.9,446.2 856.2,457.5 866.2,469.4 887.5,467.5 912.5,470.0 920.0,473.8 941.2,473.8 952.5,480.0 962.5,481.2 972.5,491.9 940.0,511.2 937.5,525.0 931.2,528.8" fill="none" stroke="#a4a4a4" stroke-width="2.8"/><polyline points="1088.8,520.6 1086.0,527.5 1078.8,532.5 1068.8,550.0 1060.0,560.0 1060.0,566.0" fill="none" stroke="#a4a4a4" stroke-width="2.8"/><polyline points="825.6,575.0 838.8,569.4 853.8,569.4 857.5,576.9 866.9,580.0 870.6,586.9 882.5,583.0 893.8,590.0 910.0,589.4 913.8,586.0" fill="none" stroke="#a4a4a4" stroke-width="2.8"/><polyline points="825.6,575.0 831.2,578.8 839.4,592.5 836.2,598.8 840.0,607.5 850.0,611.2 857.5,622.5 861.2,625.0 860.0,642.5 845.0,647.5 841.0,651.0" fill="none" stroke="#a4a4a4" stroke-width="2.8"/><polyline points="1022.5,851.2 1015.0,852.5" fill="none" stroke="#a4a4a4" stroke-width="2.8"/><polyline points="963.3,835.2 968.9,829.6 973.5,830.6 972.6,836.1 979.1,838.9 984.6,841.7 993.0,848.1 997.6,842.6 1002.2,838.9 1004.1,842.6 1009.6,847.2 1015.0,852.5" fill="none" stroke="#a4a4a4" stroke-width="2.8"/><polyline points="752.2,457.6 772.0,509.2" fill="none" stroke="#6e6e6e" stroke-width="3.6"/><polyline points="790.6,420.0 787.5,452.5 786.2,467.5 780.0,480.0 772.7,508.2" fill="none" stroke="#6e6e6e" stroke-width="3.6"/><polyline points="793.2,419.1 804.0,416.7 826.9,427.5 883.5,398.6 947.3,367.3 953.3,356.5 956.9,334.8 954.5,318.0 956.9,310.7 982.2,291.5 985.8,286.7" fill="none" stroke="#6e6e6e" stroke-width="3.6"/><polyline points="883.5,398.6 889.5,421.5 896.7,431.1 895.6,433.1" fill="none" stroke="#6e6e6e" stroke-width="3.6"/><polyline points="800.4,324.0 807.6,326.4 814.8,316.8 823.2,315.6 818.4,307.1 822.0,298.7 835.3,303.5 870.2,296.3 882.2,302.3 911.1,301.1 940.0,290.3 964.1,291.0 982.2,286.7 985.8,291.5 997.8,283.1 1017.1,285.5 1030.3,286.7 1037.6,285.5 1040.0,293.9 1055.0,289.0" fill="none" stroke="#6e6e6e" stroke-width="3.6"/><polyline points="1040.0,240.0 1047.1,272.0 1055.6,289.0 1071.3,321.6 1084.6,327.6 1096.7,328.8 1090.6,334.8 1094.3,348.0 1084.6,350.4 1081.0,357.7 1081.0,363.7 1075.0,370.9 1078.5,380.6 1087.0,390.2 1094.3,399.8 1094.3,409.4 1108.7,411.8 1130.4,425.0 1142.4,443.1 1138.8,455.1 1138.8,464.8 1147.2,467.2 1148.8,480.0 1157.5,488.0 1161.0,495.6" fill="none" stroke="#6e6e6e" stroke-width="3.6"/><polyline points="1105.0,520.6 1115.0,510.0 1125.0,493.0 1136.0,491.0 1147.5,494.4 1152.5,493.8 1161.0,495.6" fill="none" stroke="#6e6e6e" stroke-width="3.6"/><polyline points="800.9,361.3 813.6,361.3 819.6,373.4 812.4,383.0 802.8,392.6 793.2,402.2 787.1,407.0 777.5,407.0" fill="none" stroke="#6e6e6e" stroke-width="3.6"/><polyline points="781.1,423.9 789.5,425.1 788.3,450.4 771.5,456.4 779.9,444.4 773.9,438.4 773.9,428.7 781.1,423.9" fill="none" stroke="#6e6e6e" stroke-width="3.6"/><polyline points="690.0,724.3 828.0,724.3" fill="none" stroke="#6e6e6e" stroke-width="3.6"/><polyline points="877.3,839.0 866.9,850.8 846.1,858.5 831.9,866.3 829.3,881.9 817.6,920.8 820.2,946.7 807.2,990.8 794.3,992.1 776.1,1019.3 760.0,1060.0" fill="none" stroke="#6e6e6e" stroke-width="3.6"/><polyline points="820.2,945.4 833.2,941.5 839.7,941.5 847.4,946.7 857.8,929.9 874.7,941.5 892.8,936.3 898.0,940.2 905.8,937.6 921.4,940.2 942.1,949.3 965.4,972.7 986.2,997.3 996.6,999.9 1006.9,990.8" fill="none" stroke="#6e6e6e" stroke-width="3.6"/><polyline points="996.6,999.9 970.6,1019.3 950.0,1060.0" fill="none" stroke="#6e6e6e" stroke-width="3.6"/><polyline points="1250.0,660.0 1278.8,696.2 1353.8,705.0 1366.7,725.0 1347.7,780.6 1262.4,810.4 1178.4,821.9 1152.5,835.0 1132.5,861.2 1128.8,865.0 1120.0,868.8 1111.2,860.0 1092.5,860.0 1065.0,855.6 1038.8,856.2 1030.0,858.8 1015.0,852.5 1012.5,857.5 1011.2,870.0 1010.0,877.5 997.5,884.4" fill="none" stroke="#6e6e6e" stroke-width="3.6"/><polyline points="772.0,509.2 803.8,517.6 825.0,498.8 845.0,495.0 851.2,485.0 859.4,480.6 833.1,451.9 860.0,445.6 887.5,437.5 895.6,433.1 928.8,438.8 1052.5,516.9 1088.8,520.6 1105.0,520.6 1132.5,523.8 1139.4,536.9 1158.8,536.9" fill="none" stroke="#6e6e6e" stroke-width="3.6"/><polyline points="1353.8,705.0 1354.4,692.5 1364.4,677.5 1362.5,670.0 1376.0,665.0 1370.0,660.0 1372.5,639.4 1377.5,640.0 1380.0,645.0 1387.5,638.8" fill="none" stroke="#6e6e6e" stroke-width="3.6"/><polyline points="1262.4,810.4 1294.1,878.0" fill="none" stroke="#6e6e6e" stroke-width="3.6"/><polyline points="1315.7,284.3 1326.5,284.3 1342.1,279.4 1345.8,272.0 1369.0,258.0 1426.0,258.0 1488.0,273.0 1519.0,302.5 1540.0,320.0" fill="none" stroke="#6e6e6e" stroke-width="3.6"/></g><line x1="26.7" y1="35.7" x2="28.7" y2="37.6" stroke="#b14f9a" stroke-width="0.7"/><line x1="28.9" y1="59.6" x2="30.6" y2="58" stroke="#b14f9a" stroke-width="0.7"/><line x1="32.2" y1="89" x2="44.4" y2="89" stroke="#b14f9a" stroke-width="0.7"/><line x1="41.7" y1="84.6" x2="45.6" y2="80.8" stroke="#b14f9a" stroke-width="0.7"/><path d="M28.30,24.60L38.90,24.60A10.60,10.60 0 0 1 31.04,34.84Z" fill="#b2d06e"/><path d="M28.30,24.60L31.04,34.84A10.60,10.60 0 0 1 19.51,18.67Z" fill="#7ebcc3"/><path d="M28.30,24.60L19.51,18.67A10.60,10.60 0 0 1 38.90,24.60Z" fill="#67b22f"/><path d="M21.70,44.60L28.00,44.60A6.30,6.30 0 0 1 15.40,44.60Z" fill="#7ebcc3"/><path d="M21.70,44.60L15.40,44.60A6.30,6.30 0 0 1 28.00,44.60Z" fill="#67b22f"/><circle cx="40.20" cy="48.00" r="9.40" fill="#b2d06e"/><circle cx="60.20" cy="49.40" r="8.10" fill="#b2d06e"/><circle cx="30.80" cy="70.50" r="10.80" fill="#67b22f"/><path d="M55.00,71.00L65.80,71.00A10.80,10.80 0 0 1 57.80,81.43Z" fill="#b2d06e"/><path d="M55.00,71.00L57.80,81.43A10.80,10.80 0 0 1 45.74,65.44Z" fill="#7ebcc3"/><path d="M55.00,71.00L45.74,65.44A10.80,10.80 0 0 1 65.80,71.00Z" fill="#67b22f"/><circle cx="80.60" cy="72.20" r="4.40" fill="#67b22f"/><circle cx="27.60" cy="88.70" r="4.40" fill="#67b22f"/><circle cx="45.30" cy="95.20" r="10.60" fill="#67b22f"/></svg><svg class="abs" style="left:1538.0px;top:777.8px" width="117.4" height="116.7" viewBox="0 0 117.4 116.7"><rect width="117.4" height="116.7" fill="#f0f0f0"/><g transform="matrix(0.1425,0,0,0.1422,-98.9,-35.5)" vector-effect="non-scaling-stroke"><polygon points="690.0,313.0 750.0,309.7 762.8,300.3 767.8,300.3 772.2,301.4 782.2,306.1 790.0,306.1 794.4,300.8 802.2,296.7 806.7,297.8 808.3,302.2 807.8,303.9 798.3,313.3 801.6,324.0 796.0,334.8 801.6,345.7 800.9,361.3 792.0,375.8 783.5,395.0 777.5,407.0 771.5,428.7 765.5,440.8 759.4,450.4 752.2,457.6 740.0,462.0 720.0,472.0 700.0,492.0 690.0,496.0" fill="#ffffff" stroke="#9a9a9a" stroke-width="3"/><polygon points="735.0,336.0 748.0,332.0 761.9,332.4 756.0,336.0 749.8,338.4 738.0,340.0" fill="#f0f0f0" stroke="#9a9a9a" stroke-width="3"/><polygon points="1168.0,240.0 1176.1,272.0 1183.3,275.8 1200.2,280.6 1212.2,284.3 1219.4,292.7 1238.7,302.3 1260.3,305.9 1306.0,297.5 1319.3,298.7 1316.5,284.0 1318.0,272.0 1326.0,240.0" fill="#ffffff" stroke="#9a9a9a" stroke-width="3"/><polygon points="772.0,509.2 770.0,525.4 765.5,544.9 763.6,550.0 774.0,550.0 780.4,554.0 790.8,565.6 805.0,583.8 815.4,599.3 823.2,613.6 827.5,620.0 836.0,635.0 837.5,645.0 845.0,655.0 862.5,665.0 875.0,677.5 878.8,685.0 890.0,708.8 888.0,725.0 892.5,742.5 897.5,753.8 910.0,770.0 921.2,775.0 930.0,781.5 941.1,791.7 949.4,807.4 953.1,820.4 963.3,835.2 976.3,850.0 981.2,850.0 985.0,857.5 987.5,865.0 993.8,876.2 997.5,885.0 1001.7,905.2 1004.3,926.0 1006.9,946.7 1012.1,972.7 1017.3,988.2 1032.9,993.4 1056.2,988.2 1071.8,983.0 1085.0,980.4 1111.3,970.0 1145.0,953.2 1165.7,951.9 1178.7,938.9 1194.3,931.1 1235.7,918.2 1266.9,906.5 1268.2,893.5 1277.2,881.9 1292.8,876.7 1316.1,870.2 1323.9,866.3 1342.0,868.9 1355.0,858.5 1356.3,848.2 1362.8,843.0 1386.1,840.4 1393.9,827.4 1403.0,815.7 1436.0,813.0 1459.0,782.6 1498.0,743.0 1530.0,740.0 1530.0,1090.0 1248.0,1090.0 1248.0,1023.0 1241.0,1017.0 1230.0,1013.0 1216.3,1019.3 1155.0,1040.0 1038.0,1047.0 1004.0,1020.0 1014.7,1009.0 1006.9,990.8 983.6,972.7 962.8,949.3 931.7,928.6 921.4,920.8 916.2,913.0 911.0,919.5 900.6,897.4 894.1,881.9 885.0,856.0 874.7,837.8 864.3,830.0 853.9,820.9 843.5,811.9 838.4,780.7 836.2,755.0 836.2,747.5 830.0,737.5 828.0,724.3 822.8,715.2 793.0,691.9 787.8,681.5 787.8,669.9 794.3,668.6 778.8,652.5 765.0,627.5 761.0,620.0 750.3,600.0 700.0,512.0 694.0,504.0 698.0,502.0 750.3,558.5 751.9,557.8 757.7,552.6 758.4,544.9 763.6,531.9 767.5,515.0" fill="#ffffff" stroke="#a0a0a0" stroke-width="3"/><polygon points="1300.6,996.0 1310.0,990.0 1323.9,989.5 1333.0,996.0 1316.1,1002.4 1303.2,1001.1" fill="#f0f0f0" stroke="#a0a0a0" stroke-width="3"/><polygon points="1161.0,495.6 1173.8,493.8 1174.4,485.0 1183.8,490.0 1192.5,493.0 1203.8,489.4 1207.5,491.0 1211.0,499.4 1222.0,510.0 1223.8,518.8 1230.0,522.5 1230.0,527.0 1234.4,530.0 1237.5,540.0 1245.0,553.0 1252.5,556.0 1263.8,557.5 1276.0,565.0 1281.0,570.0 1286.0,574.0 1301.0,580.6 1310.0,588.0 1327.5,589.4 1340.0,594.4 1355.0,587.5 1370.0,580.0 1387.5,575.6 1396.0,576.0 1402.5,582.5 1440.0,600.0 1480.0,615.0 1530.0,625.0 1530.0,705.0 1498.0,711.6 1428.0,676.0 1402.5,661.2 1392.5,650.0 1387.5,638.8 1386.2,620.0 1388.8,605.0 1387.5,599.4 1380.0,607.5 1373.8,615.0 1360.0,625.0 1352.5,632.5 1338.8,645.0 1336.2,650.0 1328.8,655.0 1320.0,662.5 1313.8,663.8 1280.0,662.5 1257.5,666.2 1251.2,661.2 1245.0,657.5 1243.8,650.0 1250.0,635.0 1249.4,613.8 1240.0,605.6 1232.5,610.0 1227.5,623.8 1227.5,645.0 1226.0,642.5 1220.0,628.8 1211.0,619.0 1205.0,607.5 1211.0,601.0 1207.5,590.0 1201.0,585.0 1191.0,576.0 1180.0,567.5 1170.0,555.0 1158.8,536.9 1158.8,532.5 1152.5,525.0 1150.0,515.0 1141.0,512.5 1147.5,507.5 1157.5,500.0" fill="#ffffff" stroke="#a0a0a0" stroke-width="3"/><polygon points="772.0,509.2 803.8,517.6 825.0,498.8 845.0,495.0 851.2,485.0 859.4,480.6 833.1,451.9 860.0,445.6 887.5,437.5 895.6,433.1 928.8,438.8 1052.5,516.9 1088.8,520.6 1105.0,520.6 1132.5,523.8 1139.4,536.9 1158.8,536.9 1166.0,550.0 1170.0,555.0 1180.0,567.5 1191.0,576.0 1201.0,585.0 1207.5,590.0 1211.0,601.0 1205.0,607.5 1211.0,619.0 1220.0,628.8 1226.0,642.5 1233.8,652.5 1242.5,653.8 1245.0,657.5 1250.0,660.0 1278.8,696.2 1353.8,705.0 1366.7,725.0 1347.7,780.6 1262.4,810.4 1178.4,821.9 1152.5,835.0 1132.5,861.2 1128.8,865.0 1120.0,868.8 1111.2,860.0 1092.5,860.0 1065.0,855.6 1038.8,856.2 1030.0,858.8 1015.0,852.5 1012.5,857.5 1011.2,870.0 1010.0,877.5 997.5,884.4 993.8,876.2 987.5,865.0 985.0,857.5 981.2,850.0 976.3,850.0 963.3,835.2 953.1,820.4 949.4,807.4 941.1,791.7 930.0,781.5 921.2,775.0 910.0,770.0 897.5,753.8 892.5,742.5 888.0,725.0 890.0,708.8 878.8,685.0 875.0,677.5 862.5,665.0 845.0,655.0 837.5,645.0 836.0,635.0 827.5,620.0 823.2,613.6 815.4,599.3 805.0,583.8 790.8,565.6 780.4,554.0 774.0,550.0 763.6,550.0 765.5,544.9 770.0,525.4" fill="#cccccc"/><polygon points="890.0,547.5 906.0,538.8 931.2,528.8 956.2,526.9 980.0,528.8 987.5,531.0 993.8,537.5 1002.5,535.0 1006.0,540.6 1017.5,543.0 1023.8,540.0 1031.2,550.0 1035.0,556.0 1055.0,565.0 1060.0,566.0 1050.0,567.5 1050.0,573.8 1046.0,578.0 1038.8,578.0 1028.8,571.0 1013.8,577.5 1005.0,586.0 985.0,597.5 980.0,602.5 978.8,610.0 972.5,617.5 960.0,622.5 937.5,622.5 917.5,628.8 915.0,612.5 916.0,600.0 911.0,597.5 913.8,586.0 922.5,576.0 915.0,570.0 911.0,557.5 900.0,550.0" fill="none" stroke="#a4a4a4" stroke-width="2.8"/><polygon points="980.0,602.5 985.0,597.5 1005.0,586.0 1013.8,577.5 1028.8,571.0 1038.8,578.0 1046.0,578.0 1050.0,573.8 1056.0,580.0 1043.8,591.0 1043.8,598.8 1052.5,611.0 1053.8,621.0 1033.8,622.5 1016.2,631.0 1010.0,635.8 1006.7,640.0 1007.5,644.0 1005.0,646.7 999.2,647.0 988.3,646.2 981.7,644.6 977.5,649.2 973.3,642.5 970.8,637.5 965.0,635.0 964.2,630.0 965.0,625.0 960.0,622.5 972.5,617.5 978.8,610.0" fill="none" stroke="#a4a4a4" stroke-width="2.8"/><polygon points="1060.0,566.0 1067.5,573.8 1086.0,584.0 1108.8,592.0 1121.0,598.0 1132.0,602.5 1132.5,637.5 1135.0,650.0 1152.5,660.0 1156.0,675.0 1152.8,702.2 1147.6,733.3 1143.7,770.0 1138.8,795.6 1102.5,800.0 1071.2,803.0 1047.5,796.2 1037.5,787.5 1031.2,777.5 1032.5,765.0 1022.5,753.8 1015.0,740.0 1017.5,723.8 1017.5,710.0 1010.0,708.8 1007.5,709.2 1003.3,707.5 1004.2,700.8 1002.5,698.3 985.8,696.7 978.3,675.8 974.2,673.3 974.2,668.3 975.4,654.2 977.5,649.2 981.7,644.6 988.3,646.2 999.2,647.0 1005.0,646.7 1007.5,644.0 1006.7,640.0 1010.0,635.8 1016.2,631.0 1033.8,622.5 1053.8,621.0 1052.5,611.0 1043.8,598.8 1043.8,591.0 1056.0,580.0 1050.0,573.8 1050.0,567.5" fill="none" stroke="#a4a4a4" stroke-width="2.8"/><polygon points="878.8,683.8 886.2,682.5 895.0,690.0 902.5,691.2 915.0,692.5 916.2,702.5 922.5,710.0 930.0,706.2 936.7,707.9 938.3,705.0 954.2,691.7 959.2,689.2 954.2,685.0 955.0,683.3 968.3,676.7 967.5,669.2 971.7,667.9 974.2,668.3 974.2,673.3 978.3,675.8 985.8,696.7 1002.5,698.3 1004.2,700.8 1003.3,707.5 1007.5,709.2 1010.0,708.8 1017.5,710.0 1017.5,723.8 1015.0,740.0 1022.5,753.8 1010.0,755.6 1002.2,758.3 988.3,768.5 981.9,771.3 975.4,767.6 974.4,763.0 961.5,764.8 957.8,759.3 954.1,760.2 953.1,768.5 946.7,775.0 941.1,779.6 944.8,781.5 944.8,788.9 945.7,795.4 953.1,800.0 956.9,798.1 958.7,789.8 967.0,787.0 970.7,788.0 971.7,798.1 969.8,802.8 959.6,805.6 957.8,809.3 957.8,814.8 967.0,818.5 968.9,827.8 963.3,835.2 953.1,820.4 949.4,807.4 941.1,791.7 930.0,781.5 921.2,775.0 910.0,770.0 897.5,753.8 892.5,742.5 888.0,725.0 890.0,708.8" fill="none" stroke="#a4a4a4" stroke-width="2.8"/><polygon points="1047.5,796.2 1071.2,803.0 1102.5,800.0 1138.8,795.6 1132.5,861.2 1128.8,865.0 1120.0,868.8 1111.2,860.0 1092.5,860.0 1065.0,855.6 1038.8,856.2 1030.0,858.8 1022.5,851.2 1022.5,831.2 1035.0,818.8 1043.8,813.8 1042.5,805.0 1046.2,802.5" fill="none" stroke="#a4a4a4" stroke-width="2.8"/><polygon points="941.1,779.6 946.7,775.0 953.1,768.5 954.1,760.2 957.8,759.3 961.5,764.8 974.4,763.0 975.4,767.6 976.3,772.2 969.8,777.8 968.9,782.4 967.0,787.0 958.7,789.8 956.9,798.1 953.1,800.0 945.7,795.4 944.8,788.9 944.8,781.5" fill="none" stroke="#a4a4a4" stroke-width="2.8"/><polyline points="770.0,525.4 781.7,527.3 797.3,523.5 805.0,524.7 816.7,536.4 828.4,533.2 844.0,535.0 852.5,527.5 853.8,537.5 857.5,542.5 872.5,545.0 880.0,548.0 888.8,546.9 890.0,547.5" fill="none" stroke="#a4a4a4" stroke-width="2.8"/><polyline points="856.9,446.2 856.2,457.5 866.2,469.4 887.5,467.5 912.5,470.0 920.0,473.8 941.2,473.8 952.5,480.0 962.5,481.2 972.5,491.9 940.0,511.2 937.5,525.0 931.2,528.8" fill="none" stroke="#a4a4a4" stroke-width="2.8"/><polyline points="1088.8,520.6 1086.0,527.5 1078.8,532.5 1068.8,550.0 1060.0,560.0 1060.0,566.0" fill="none" stroke="#a4a4a4" stroke-width="2.8"/><polyline points="825.6,575.0 838.8,569.4 853.8,569.4 857.5,576.9 866.9,580.0 870.6,586.9 882.5,583.0 893.8,590.0 910.0,589.4 913.8,586.0" fill="none" stroke="#a4a4a4" stroke-width="2.8"/><polyline points="825.6,575.0 831.2,578.8 839.4,592.5 836.2,598.8 840.0,607.5 850.0,611.2 857.5,622.5 861.2,625.0 860.0,642.5 845.0,647.5 841.0,651.0" fill="none" stroke="#a4a4a4" stroke-width="2.8"/><polyline points="1022.5,851.2 1015.0,852.5" fill="none" stroke="#a4a4a4" stroke-width="2.8"/><polyline points="963.3,835.2 968.9,829.6 973.5,830.6 972.6,836.1 979.1,838.9 984.6,841.7 993.0,848.1 997.6,842.6 1002.2,838.9 1004.1,842.6 1009.6,847.2 1015.0,852.5" fill="none" stroke="#a4a4a4" stroke-width="2.8"/><polyline points="752.2,457.6 772.0,509.2" fill="none" stroke="#6e6e6e" stroke-width="3.6"/><polyline points="790.6,420.0 787.5,452.5 786.2,467.5 780.0,480.0 772.7,508.2" fill="none" stroke="#6e6e6e" stroke-width="3.6"/><polyline points="793.2,419.1 804.0,416.7 826.9,427.5 883.5,398.6 947.3,367.3 953.3,356.5 956.9,334.8 954.5,318.0 956.9,310.7 982.2,291.5 985.8,286.7" fill="none" stroke="#6e6e6e" stroke-width="3.6"/><polyline points="883.5,398.6 889.5,421.5 896.7,431.1 895.6,433.1" fill="none" stroke="#6e6e6e" stroke-width="3.6"/><polyline points="800.4,324.0 807.6,326.4 814.8,316.8 823.2,315.6 818.4,307.1 822.0,298.7 835.3,303.5 870.2,296.3 882.2,302.3 911.1,301.1 940.0,290.3 964.1,291.0 982.2,286.7 985.8,291.5 997.8,283.1 1017.1,285.5 1030.3,286.7 1037.6,285.5 1040.0,293.9 1055.0,289.0" fill="none" stroke="#6e6e6e" stroke-width="3.6"/><polyline points="1040.0,240.0 1047.1,272.0 1055.6,289.0 1071.3,321.6 1084.6,327.6 1096.7,328.8 1090.6,334.8 1094.3,348.0 1084.6,350.4 1081.0,357.7 1081.0,363.7 1075.0,370.9 1078.5,380.6 1087.0,390.2 1094.3,399.8 1094.3,409.4 1108.7,411.8 1130.4,425.0 1142.4,443.1 1138.8,455.1 1138.8,464.8 1147.2,467.2 1148.8,480.0 1157.5,488.0 1161.0,495.6" fill="none" stroke="#6e6e6e" stroke-width="3.6"/><polyline points="1105.0,520.6 1115.0,510.0 1125.0,493.0 1136.0,491.0 1147.5,494.4 1152.5,493.8 1161.0,495.6" fill="none" stroke="#6e6e6e" stroke-width="3.6"/><polyline points="800.9,361.3 813.6,361.3 819.6,373.4 812.4,383.0 802.8,392.6 793.2,402.2 787.1,407.0 777.5,407.0" fill="none" stroke="#6e6e6e" stroke-width="3.6"/><polyline points="781.1,423.9 789.5,425.1 788.3,450.4 771.5,456.4 779.9,444.4 773.9,438.4 773.9,428.7 781.1,423.9" fill="none" stroke="#6e6e6e" stroke-width="3.6"/><polyline points="690.0,724.3 828.0,724.3" fill="none" stroke="#6e6e6e" stroke-width="3.6"/><polyline points="877.3,839.0 866.9,850.8 846.1,858.5 831.9,866.3 829.3,881.9 817.6,920.8 820.2,946.7 807.2,990.8 794.3,992.1 776.1,1019.3 760.0,1060.0" fill="none" stroke="#6e6e6e" stroke-width="3.6"/><polyline points="820.2,945.4 833.2,941.5 839.7,941.5 847.4,946.7 857.8,929.9 874.7,941.5 892.8,936.3 898.0,940.2 905.8,937.6 921.4,940.2 942.1,949.3 965.4,972.7 986.2,997.3 996.6,999.9 1006.9,990.8" fill="none" stroke="#6e6e6e" stroke-width="3.6"/><polyline points="996.6,999.9 970.6,1019.3 950.0,1060.0" fill="none" stroke="#6e6e6e" stroke-width="3.6"/><polyline points="1250.0,660.0 1278.8,696.2 1353.8,705.0 1366.7,725.0 1347.7,780.6 1262.4,810.4 1178.4,821.9 1152.5,835.0 1132.5,861.2 1128.8,865.0 1120.0,868.8 1111.2,860.0 1092.5,860.0 1065.0,855.6 1038.8,856.2 1030.0,858.8 1015.0,852.5 1012.5,857.5 1011.2,870.0 1010.0,877.5 997.5,884.4" fill="none" stroke="#6e6e6e" stroke-width="3.6"/><polyline points="772.0,509.2 803.8,517.6 825.0,498.8 845.0,495.0 851.2,485.0 859.4,480.6 833.1,451.9 860.0,445.6 887.5,437.5 895.6,433.1 928.8,438.8 1052.5,516.9 1088.8,520.6 1105.0,520.6 1132.5,523.8 1139.4,536.9 1158.8,536.9" fill="none" stroke="#6e6e6e" stroke-width="3.6"/><polyline points="1353.8,705.0 1354.4,692.5 1364.4,677.5 1362.5,670.0 1376.0,665.0 1370.0,660.0 1372.5,639.4 1377.5,640.0 1380.0,645.0 1387.5,638.8" fill="none" stroke="#6e6e6e" stroke-width="3.6"/><polyline points="1262.4,810.4 1294.1,878.0" fill="none" stroke="#6e6e6e" stroke-width="3.6"/><polyline points="1315.7,284.3 1326.5,284.3 1342.1,279.4 1345.8,272.0 1369.0,258.0 1426.0,258.0 1488.0,273.0 1519.0,302.5 1540.0,320.0" fill="none" stroke="#6e6e6e" stroke-width="3.6"/></g><line x1="42.6" y1="40.2" x2="45.6" y2="51.6" stroke="#b14f9a" stroke-width="0.7"/><circle cx="51.50" cy="36.60" r="9.40" fill="#b2d06e"/><circle cx="29.80" cy="56.10" r="9.40" fill="#b2d06e"/><circle cx="37.20" cy="77.70" r="9.60" fill="#b2d06e"/><path d="M74.40,67.40L92.90,67.40A18.50,18.50 0 1 1 90.73,58.71Z" fill="#b2d06e"/><path d="M74.40,67.40L90.73,58.71A18.50,18.50 0 0 1 92.90,67.40Z" fill="#7ebcc3"/></svg><svg class="abs" style="left:1411.1px;top:904.2px" width="117.4" height="116.7" viewBox="0 0 117.4 116.7"><rect width="117.4" height="116.7" fill="#f0f0f0"/><g transform="matrix(0.1425,0,0,0.1422,-98.9,-35.5)" vector-effect="non-scaling-stroke"><polygon points="690.0,313.0 750.0,309.7 762.8,300.3 767.8,300.3 772.2,301.4 782.2,306.1 790.0,306.1 794.4,300.8 802.2,296.7 806.7,297.8 808.3,302.2 807.8,303.9 798.3,313.3 801.6,324.0 796.0,334.8 801.6,345.7 800.9,361.3 792.0,375.8 783.5,395.0 777.5,407.0 771.5,428.7 765.5,440.8 759.4,450.4 752.2,457.6 740.0,462.0 720.0,472.0 700.0,492.0 690.0,496.0" fill="#ffffff" stroke="#9a9a9a" stroke-width="3"/><polygon points="735.0,336.0 748.0,332.0 761.9,332.4 756.0,336.0 749.8,338.4 738.0,340.0" fill="#f0f0f0" stroke="#9a9a9a" stroke-width="3"/><polygon points="1168.0,240.0 1176.1,272.0 1183.3,275.8 1200.2,280.6 1212.2,284.3 1219.4,292.7 1238.7,302.3 1260.3,305.9 1306.0,297.5 1319.3,298.7 1316.5,284.0 1318.0,272.0 1326.0,240.0" fill="#ffffff" stroke="#9a9a9a" stroke-width="3"/><polygon points="772.0,509.2 770.0,525.4 765.5,544.9 763.6,550.0 774.0,550.0 780.4,554.0 790.8,565.6 805.0,583.8 815.4,599.3 823.2,613.6 827.5,620.0 836.0,635.0 837.5,645.0 845.0,655.0 862.5,665.0 875.0,677.5 878.8,685.0 890.0,708.8 888.0,725.0 892.5,742.5 897.5,753.8 910.0,770.0 921.2,775.0 930.0,781.5 941.1,791.7 949.4,807.4 953.1,820.4 963.3,835.2 976.3,850.0 981.2,850.0 985.0,857.5 987.5,865.0 993.8,876.2 997.5,885.0 1001.7,905.2 1004.3,926.0 1006.9,946.7 1012.1,972.7 1017.3,988.2 1032.9,993.4 1056.2,988.2 1071.8,983.0 1085.0,980.4 1111.3,970.0 1145.0,953.2 1165.7,951.9 1178.7,938.9 1194.3,931.1 1235.7,918.2 1266.9,906.5 1268.2,893.5 1277.2,881.9 1292.8,876.7 1316.1,870.2 1323.9,866.3 1342.0,868.9 1355.0,858.5 1356.3,848.2 1362.8,843.0 1386.1,840.4 1393.9,827.4 1403.0,815.7 1436.0,813.0 1459.0,782.6 1498.0,743.0 1530.0,740.0 1530.0,1090.0 1248.0,1090.0 1248.0,1023.0 1241.0,1017.0 1230.0,1013.0 1216.3,1019.3 1155.0,1040.0 1038.0,1047.0 1004.0,1020.0 1014.7,1009.0 1006.9,990.8 983.6,972.7 962.8,949.3 931.7,928.6 921.4,920.8 916.2,913.0 911.0,919.5 900.6,897.4 894.1,881.9 885.0,856.0 874.7,837.8 864.3,830.0 853.9,820.9 843.5,811.9 838.4,780.7 836.2,755.0 836.2,747.5 830.0,737.5 828.0,724.3 822.8,715.2 793.0,691.9 787.8,681.5 787.8,669.9 794.3,668.6 778.8,652.5 765.0,627.5 761.0,620.0 750.3,600.0 700.0,512.0 694.0,504.0 698.0,502.0 750.3,558.5 751.9,557.8 757.7,552.6 758.4,544.9 763.6,531.9 767.5,515.0" fill="#ffffff" stroke="#a0a0a0" stroke-width="3"/><polygon points="1300.6,996.0 1310.0,990.0 1323.9,989.5 1333.0,996.0 1316.1,1002.4 1303.2,1001.1" fill="#f0f0f0" stroke="#a0a0a0" stroke-width="3"/><polygon points="1161.0,495.6 1173.8,493.8 1174.4,485.0 1183.8,490.0 1192.5,493.0 1203.8,489.4 1207.5,491.0 1211.0,499.4 1222.0,510.0 1223.8,518.8 1230.0,522.5 1230.0,527.0 1234.4,530.0 1237.5,540.0 1245.0,553.0 1252.5,556.0 1263.8,557.5 1276.0,565.0 1281.0,570.0 1286.0,574.0 1301.0,580.6 1310.0,588.0 1327.5,589.4 1340.0,594.4 1355.0,587.5 1370.0,580.0 1387.5,575.6 1396.0,576.0 1402.5,582.5 1440.0,600.0 1480.0,615.0 1530.0,625.0 1530.0,705.0 1498.0,711.6 1428.0,676.0 1402.5,661.2 1392.5,650.0 1387.5,638.8 1386.2,620.0 1388.8,605.0 1387.5,599.4 1380.0,607.5 1373.8,615.0 1360.0,625.0 1352.5,632.5 1338.8,645.0 1336.2,650.0 1328.8,655.0 1320.0,662.5 1313.8,663.8 1280.0,662.5 1257.5,666.2 1251.2,661.2 1245.0,657.5 1243.8,650.0 1250.0,635.0 1249.4,613.8 1240.0,605.6 1232.5,610.0 1227.5,623.8 1227.5,645.0 1226.0,642.5 1220.0,628.8 1211.0,619.0 1205.0,607.5 1211.0,601.0 1207.5,590.0 1201.0,585.0 1191.0,576.0 1180.0,567.5 1170.0,555.0 1158.8,536.9 1158.8,532.5 1152.5,525.0 1150.0,515.0 1141.0,512.5 1147.5,507.5 1157.5,500.0" fill="#ffffff" stroke="#a0a0a0" stroke-width="3"/><polygon points="772.0,509.2 803.8,517.6 825.0,498.8 845.0,495.0 851.2,485.0 859.4,480.6 833.1,451.9 860.0,445.6 887.5,437.5 895.6,433.1 928.8,438.8 1052.5,516.9 1088.8,520.6 1105.0,520.6 1132.5,523.8 1139.4,536.9 1158.8,536.9 1166.0,550.0 1170.0,555.0 1180.0,567.5 1191.0,576.0 1201.0,585.0 1207.5,590.0 1211.0,601.0 1205.0,607.5 1211.0,619.0 1220.0,628.8 1226.0,642.5 1233.8,652.5 1242.5,653.8 1245.0,657.5 1250.0,660.0 1278.8,696.2 1353.8,705.0 1366.7,725.0 1347.7,780.6 1262.4,810.4 1178.4,821.9 1152.5,835.0 1132.5,861.2 1128.8,865.0 1120.0,868.8 1111.2,860.0 1092.5,860.0 1065.0,855.6 1038.8,856.2 1030.0,858.8 1015.0,852.5 1012.5,857.5 1011.2,870.0 1010.0,877.5 997.5,884.4 993.8,876.2 987.5,865.0 985.0,857.5 981.2,850.0 976.3,850.0 963.3,835.2 953.1,820.4 949.4,807.4 941.1,791.7 930.0,781.5 921.2,775.0 910.0,770.0 897.5,753.8 892.5,742.5 888.0,725.0 890.0,708.8 878.8,685.0 875.0,677.5 862.5,665.0 845.0,655.0 837.5,645.0 836.0,635.0 827.5,620.0 823.2,613.6 815.4,599.3 805.0,583.8 790.8,565.6 780.4,554.0 774.0,550.0 763.6,550.0 765.5,544.9 770.0,525.4" fill="#cccccc"/><polygon points="890.0,547.5 906.0,538.8 931.2,528.8 956.2,526.9 980.0,528.8 987.5,531.0 993.8,537.5 1002.5,535.0 1006.0,540.6 1017.5,543.0 1023.8,540.0 1031.2,550.0 1035.0,556.0 1055.0,565.0 1060.0,566.0 1050.0,567.5 1050.0,573.8 1046.0,578.0 1038.8,578.0 1028.8,571.0 1013.8,577.5 1005.0,586.0 985.0,597.5 980.0,602.5 978.8,610.0 972.5,617.5 960.0,622.5 937.5,622.5 917.5,628.8 915.0,612.5 916.0,600.0 911.0,597.5 913.8,586.0 922.5,576.0 915.0,570.0 911.0,557.5 900.0,550.0" fill="none" stroke="#a4a4a4" stroke-width="2.8"/><polygon points="980.0,602.5 985.0,597.5 1005.0,586.0 1013.8,577.5 1028.8,571.0 1038.8,578.0 1046.0,578.0 1050.0,573.8 1056.0,580.0 1043.8,591.0 1043.8,598.8 1052.5,611.0 1053.8,621.0 1033.8,622.5 1016.2,631.0 1010.0,635.8 1006.7,640.0 1007.5,644.0 1005.0,646.7 999.2,647.0 988.3,646.2 981.7,644.6 977.5,649.2 973.3,642.5 970.8,637.5 965.0,635.0 964.2,630.0 965.0,625.0 960.0,622.5 972.5,617.5 978.8,610.0" fill="none" stroke="#a4a4a4" stroke-width="2.8"/><polygon points="1060.0,566.0 1067.5,573.8 1086.0,584.0 1108.8,592.0 1121.0,598.0 1132.0,602.5 1132.5,637.5 1135.0,650.0 1152.5,660.0 1156.0,675.0 1152.8,702.2 1147.6,733.3 1143.7,770.0 1138.8,795.6 1102.5,800.0 1071.2,803.0 1047.5,796.2 1037.5,787.5 1031.2,777.5 1032.5,765.0 1022.5,753.8 1015.0,740.0 1017.5,723.8 1017.5,710.0 1010.0,708.8 1007.5,709.2 1003.3,707.5 1004.2,700.8 1002.5,698.3 985.8,696.7 978.3,675.8 974.2,673.3 974.2,668.3 975.4,654.2 977.5,649.2 981.7,644.6 988.3,646.2 999.2,647.0 1005.0,646.7 1007.5,644.0 1006.7,640.0 1010.0,635.8 1016.2,631.0 1033.8,622.5 1053.8,621.0 1052.5,611.0 1043.8,598.8 1043.8,591.0 1056.0,580.0 1050.0,573.8 1050.0,567.5" fill="none" stroke="#a4a4a4" stroke-width="2.8"/><polygon points="878.8,683.8 886.2,682.5 895.0,690.0 902.5,691.2 915.0,692.5 916.2,702.5 922.5,710.0 930.0,706.2 936.7,707.9 938.3,705.0 954.2,691.7 959.2,689.2 954.2,685.0 955.0,683.3 968.3,676.7 967.5,669.2 971.7,667.9 974.2,668.3 974.2,673.3 978.3,675.8 985.8,696.7 1002.5,698.3 1004.2,700.8 1003.3,707.5 1007.5,709.2 1010.0,708.8 1017.5,710.0 1017.5,723.8 1015.0,740.0 1022.5,753.8 1010.0,755.6 1002.2,758.3 988.3,768.5 981.9,771.3 975.4,767.6 974.4,763.0 961.5,764.8 957.8,759.3 954.1,760.2 953.1,768.5 946.7,775.0 941.1,779.6 944.8,781.5 944.8,788.9 945.7,795.4 953.1,800.0 956.9,798.1 958.7,789.8 967.0,787.0 970.7,788.0 971.7,798.1 969.8,802.8 959.6,805.6 957.8,809.3 957.8,814.8 967.0,818.5 968.9,827.8 963.3,835.2 953.1,820.4 949.4,807.4 941.1,791.7 930.0,781.5 921.2,775.0 910.0,770.0 897.5,753.8 892.5,742.5 888.0,725.0 890.0,708.8" fill="none" stroke="#a4a4a4" stroke-width="2.8"/><polygon points="1047.5,796.2 1071.2,803.0 1102.5,800.0 1138.8,795.6 1132.5,861.2 1128.8,865.0 1120.0,868.8 1111.2,860.0 1092.5,860.0 1065.0,855.6 1038.8,856.2 1030.0,858.8 1022.5,851.2 1022.5,831.2 1035.0,818.8 1043.8,813.8 1042.5,805.0 1046.2,802.5" fill="none" stroke="#a4a4a4" stroke-width="2.8"/><polygon points="941.1,779.6 946.7,775.0 953.1,768.5 954.1,760.2 957.8,759.3 961.5,764.8 974.4,763.0 975.4,767.6 976.3,772.2 969.8,777.8 968.9,782.4 967.0,787.0 958.7,789.8 956.9,798.1 953.1,800.0 945.7,795.4 944.8,788.9 944.8,781.5" fill="none" stroke="#a4a4a4" stroke-width="2.8"/><polyline points="770.0,525.4 781.7,527.3 797.3,523.5 805.0,524.7 816.7,536.4 828.4,533.2 844.0,535.0 852.5,527.5 853.8,537.5 857.5,542.5 872.5,545.0 880.0,548.0 888.8,546.9 890.0,547.5" fill="none" stroke="#a4a4a4" stroke-width="2.8"/><polyline points="856.9,446.2 856.2,457.5 866.2,469.4 887.5,467.5 912.5,470.0 920.0,473.8 941.2,473.8 952.5,480.0 962.5,481.2 972.5,491.9 940.0,511.2 937.5,525.0 931.2,528.8" fill="none" stroke="#a4a4a4" stroke-width="2.8"/><polyline points="1088.8,520.6 1086.0,527.5 1078.8,532.5 1068.8,550.0 1060.0,560.0 1060.0,566.0" fill="none" stroke="#a4a4a4" stroke-width="2.8"/><polyline points="825.6,575.0 838.8,569.4 853.8,569.4 857.5,576.9 866.9,580.0 870.6,586.9 882.5,583.0 893.8,590.0 910.0,589.4 913.8,586.0" fill="none" stroke="#a4a4a4" stroke-width="2.8"/><polyline points="825.6,575.0 831.2,578.8 839.4,592.5 836.2,598.8 840.0,607.5 850.0,611.2 857.5,622.5 861.2,625.0 860.0,642.5 845.0,647.5 841.0,651.0" fill="none" stroke="#a4a4a4" stroke-width="2.8"/><polyline points="1022.5,851.2 1015.0,852.5" fill="none" stroke="#a4a4a4" stroke-width="2.8"/><polyline points="963.3,835.2 968.9,829.6 973.5,830.6 972.6,836.1 979.1,838.9 984.6,841.7 993.0,848.1 997.6,842.6 1002.2,838.9 1004.1,842.6 1009.6,847.2 1015.0,852.5" fill="none" stroke="#a4a4a4" stroke-width="2.8"/><polyline points="752.2,457.6 772.0,509.2" fill="none" stroke="#6e6e6e" stroke-width="3.6"/><polyline points="790.6,420.0 787.5,452.5 786.2,467.5 780.0,480.0 772.7,508.2" fill="none" stroke="#6e6e6e" stroke-width="3.6"/><polyline points="793.2,419.1 804.0,416.7 826.9,427.5 883.5,398.6 947.3,367.3 953.3,356.5 956.9,334.8 954.5,318.0 956.9,310.7 982.2,291.5 985.8,286.7" fill="none" stroke="#6e6e6e" stroke-width="3.6"/><polyline points="883.5,398.6 889.5,421.5 896.7,431.1 895.6,433.1" fill="none" stroke="#6e6e6e" stroke-width="3.6"/><polyline points="800.4,324.0 807.6,326.4 814.8,316.8 823.2,315.6 818.4,307.1 822.0,298.7 835.3,303.5 870.2,296.3 882.2,302.3 911.1,301.1 940.0,290.3 964.1,291.0 982.2,286.7 985.8,291.5 997.8,283.1 1017.1,285.5 1030.3,286.7 1037.6,285.5 1040.0,293.9 1055.0,289.0" fill="none" stroke="#6e6e6e" stroke-width="3.6"/><polyline points="1040.0,240.0 1047.1,272.0 1055.6,289.0 1071.3,321.6 1084.6,327.6 1096.7,328.8 1090.6,334.8 1094.3,348.0 1084.6,350.4 1081.0,357.7 1081.0,363.7 1075.0,370.9 1078.5,380.6 1087.0,390.2 1094.3,399.8 1094.3,409.4 1108.7,411.8 1130.4,425.0 1142.4,443.1 1138.8,455.1 1138.8,464.8 1147.2,467.2 1148.8,480.0 1157.5,488.0 1161.0,495.6" fill="none" stroke="#6e6e6e" stroke-width="3.6"/><polyline points="1105.0,520.6 1115.0,510.0 1125.0,493.0 1136.0,491.0 1147.5,494.4 1152.5,493.8 1161.0,495.6" fill="none" stroke="#6e6e6e" stroke-width="3.6"/><polyline points="800.9,361.3 813.6,361.3 819.6,373.4 812.4,383.0 802.8,392.6 793.2,402.2 787.1,407.0 777.5,407.0" fill="none" stroke="#6e6e6e" stroke-width="3.6"/><polyline points="781.1,423.9 789.5,425.1 788.3,450.4 771.5,456.4 779.9,444.4 773.9,438.4 773.9,428.7 781.1,423.9" fill="none" stroke="#6e6e6e" stroke-width="3.6"/><polyline points="690.0,724.3 828.0,724.3" fill="none" stroke="#6e6e6e" stroke-width="3.6"/><polyline points="877.3,839.0 866.9,850.8 846.1,858.5 831.9,866.3 829.3,881.9 817.6,920.8 820.2,946.7 807.2,990.8 794.3,992.1 776.1,1019.3 760.0,1060.0" fill="none" stroke="#6e6e6e" stroke-width="3.6"/><polyline points="820.2,945.4 833.2,941.5 839.7,941.5 847.4,946.7 857.8,929.9 874.7,941.5 892.8,936.3 898.0,940.2 905.8,937.6 921.4,940.2 942.1,949.3 965.4,972.7 986.2,997.3 996.6,999.9 1006.9,990.8" fill="none" stroke="#6e6e6e" stroke-width="3.6"/><polyline points="996.6,999.9 970.6,1019.3 950.0,1060.0" fill="none" stroke="#6e6e6e" stroke-width="3.6"/><polyline points="1250.0,660.0 1278.8,696.2 1353.8,705.0 1366.7,725.0 1347.7,780.6 1262.4,810.4 1178.4,821.9 1152.5,835.0 1132.5,861.2 1128.8,865.0 1120.0,868.8 1111.2,860.0 1092.5,860.0 1065.0,855.6 1038.8,856.2 1030.0,858.8 1015.0,852.5 1012.5,857.5 1011.2,870.0 1010.0,877.5 997.5,884.4" fill="none" stroke="#6e6e6e" stroke-width="3.6"/><polyline points="772.0,509.2 803.8,517.6 825.0,498.8 845.0,495.0 851.2,485.0 859.4,480.6 833.1,451.9 860.0,445.6 887.5,437.5 895.6,433.1 928.8,438.8 1052.5,516.9 1088.8,520.6 1105.0,520.6 1132.5,523.8 1139.4,536.9 1158.8,536.9" fill="none" stroke="#6e6e6e" stroke-width="3.6"/><polyline points="1353.8,705.0 1354.4,692.5 1364.4,677.5 1362.5,670.0 1376.0,665.0 1370.0,660.0 1372.5,639.4 1377.5,640.0 1380.0,645.0 1387.5,638.8" fill="none" stroke="#6e6e6e" stroke-width="3.6"/><polyline points="1262.4,810.4 1294.1,878.0" fill="none" stroke="#6e6e6e" stroke-width="3.6"/><polyline points="1315.7,284.3 1326.5,284.3 1342.1,279.4 1345.8,272.0 1369.0,258.0 1426.0,258.0 1488.0,273.0 1519.0,302.5 1540.0,320.0" fill="none" stroke="#6e6e6e" stroke-width="3.6"/></g><circle cx="28.30" cy="37.00" r="4.40" fill="#b2d06e"/><path d="M50.00,63.90L67.10,63.90A17.10,17.10 0 1 1 56.96,48.28Z" fill="#b2d06e"/><path d="M50.00,63.90L56.96,48.28A17.10,17.10 0 0 1 67.10,63.90Z" fill="#7ebcc3"/><circle cx="75.90" cy="73.10" r="6.40" fill="#b2d06e"/></svg><svg class="abs" style="left:1538.0px;top:904.2px" width="117.4" height="116.7" viewBox="0 0 117.4 116.7"><rect width="117.4" height="116.7" fill="#f0f0f0"/><g transform="matrix(0.1425,0,0,0.1422,-98.9,-35.5)" vector-effect="non-scaling-stroke"><polygon points="690.0,313.0 750.0,309.7 762.8,300.3 767.8,300.3 772.2,301.4 782.2,306.1 790.0,306.1 794.4,300.8 802.2,296.7 806.7,297.8 808.3,302.2 807.8,303.9 798.3,313.3 801.6,324.0 796.0,334.8 801.6,345.7 800.9,361.3 792.0,375.8 783.5,395.0 777.5,407.0 771.5,428.7 765.5,440.8 759.4,450.4 752.2,457.6 740.0,462.0 720.0,472.0 700.0,492.0 690.0,496.0" fill="#ffffff" stroke="#9a9a9a" stroke-width="3"/><polygon points="735.0,336.0 748.0,332.0 761.9,332.4 756.0,336.0 749.8,338.4 738.0,340.0" fill="#f0f0f0" stroke="#9a9a9a" stroke-width="3"/><polygon points="1168.0,240.0 1176.1,272.0 1183.3,275.8 1200.2,280.6 1212.2,284.3 1219.4,292.7 1238.7,302.3 1260.3,305.9 1306.0,297.5 1319.3,298.7 1316.5,284.0 1318.0,272.0 1326.0,240.0" fill="#ffffff" stroke="#9a9a9a" stroke-width="3"/><polygon points="772.0,509.2 770.0,525.4 765.5,544.9 763.6,550.0 774.0,550.0 780.4,554.0 790.8,565.6 805.0,583.8 815.4,599.3 823.2,613.6 827.5,620.0 836.0,635.0 837.5,645.0 845.0,655.0 862.5,665.0 875.0,677.5 878.8,685.0 890.0,708.8 888.0,725.0 892.5,742.5 897.5,753.8 910.0,770.0 921.2,775.0 930.0,781.5 941.1,791.7 949.4,807.4 953.1,820.4 963.3,835.2 976.3,850.0 981.2,850.0 985.0,857.5 987.5,865.0 993.8,876.2 997.5,885.0 1001.7,905.2 1004.3,926.0 1006.9,946.7 1012.1,972.7 1017.3,988.2 1032.9,993.4 1056.2,988.2 1071.8,983.0 1085.0,980.4 1111.3,970.0 1145.0,953.2 1165.7,951.9 1178.7,938.9 1194.3,931.1 1235.7,918.2 1266.9,906.5 1268.2,893.5 1277.2,881.9 1292.8,876.7 1316.1,870.2 1323.9,866.3 1342.0,868.9 1355.0,858.5 1356.3,848.2 1362.8,843.0 1386.1,840.4 1393.9,827.4 1403.0,815.7 1436.0,813.0 1459.0,782.6 1498.0,743.0 1530.0,740.0 1530.0,1090.0 1248.0,1090.0 1248.0,1023.0 1241.0,1017.0 1230.0,1013.0 1216.3,1019.3 1155.0,1040.0 1038.0,1047.0 1004.0,1020.0 1014.7,1009.0 1006.9,990.8 983.6,972.7 962.8,949.3 931.7,928.6 921.4,920.8 916.2,913.0 911.0,919.5 900.6,897.4 894.1,881.9 885.0,856.0 874.7,837.8 864.3,830.0 853.9,820.9 843.5,811.9 838.4,780.7 836.2,755.0 836.2,747.5 830.0,737.5 828.0,724.3 822.8,715.2 793.0,691.9 787.8,681.5 787.8,669.9 794.3,668.6 778.8,652.5 765.0,627.5 761.0,620.0 750.3,600.0 700.0,512.0 694.0,504.0 698.0,502.0 750.3,558.5 751.9,557.8 757.7,552.6 758.4,544.9 763.6,531.9 767.5,515.0" fill="#ffffff" stroke="#a0a0a0" stroke-width="3"/><polygon points="1300.6,996.0 1310.0,990.0 1323.9,989.5 1333.0,996.0 1316.1,1002.4 1303.2,1001.1" fill="#f0f0f0" stroke="#a0a0a0" stroke-width="3"/><polygon points="1161.0,495.6 1173.8,493.8 1174.4,485.0 1183.8,490.0 1192.5,493.0 1203.8,489.4 1207.5,491.0 1211.0,499.4 1222.0,510.0 1223.8,518.8 1230.0,522.5 1230.0,527.0 1234.4,530.0 1237.5,540.0 1245.0,553.0 1252.5,556.0 1263.8,557.5 1276.0,565.0 1281.0,570.0 1286.0,574.0 1301.0,580.6 1310.0,588.0 1327.5,589.4 1340.0,594.4 1355.0,587.5 1370.0,580.0 1387.5,575.6 1396.0,576.0 1402.5,582.5 1440.0,600.0 1480.0,615.0 1530.0,625.0 1530.0,705.0 1498.0,711.6 1428.0,676.0 1402.5,661.2 1392.5,650.0 1387.5,638.8 1386.2,620.0 1388.8,605.0 1387.5,599.4 1380.0,607.5 1373.8,615.0 1360.0,625.0 1352.5,632.5 1338.8,645.0 1336.2,650.0 1328.8,655.0 1320.0,662.5 1313.8,663.8 1280.0,662.5 1257.5,666.2 1251.2,661.2 1245.0,657.5 1243.8,650.0 1250.0,635.0 1249.4,613.8 1240.0,605.6 1232.5,610.0 1227.5,623.8 1227.5,645.0 1226.0,642.5 1220.0,628.8 1211.0,619.0 1205.0,607.5 1211.0,601.0 1207.5,590.0 1201.0,585.0 1191.0,576.0 1180.0,567.5 1170.0,555.0 1158.8,536.9 1158.8,532.5 1152.5,525.0 1150.0,515.0 1141.0,512.5 1147.5,507.5 1157.5,500.0" fill="#ffffff" stroke="#a0a0a0" stroke-width="3"/><polygon points="772.0,509.2 803.8,517.6 825.0,498.8 845.0,495.0 851.2,485.0 859.4,480.6 833.1,451.9 860.0,445.6 887.5,437.5 895.6,433.1 928.8,438.8 1052.5,516.9 1088.8,520.6 1105.0,520.6 1132.5,523.8 1139.4,536.9 1158.8,536.9 1166.0,550.0 1170.0,555.0 1180.0,567.5 1191.0,576.0 1201.0,585.0 1207.5,590.0 1211.0,601.0 1205.0,607.5 1211.0,619.0 1220.0,628.8 1226.0,642.5 1233.8,652.5 1242.5,653.8 1245.0,657.5 1250.0,660.0 1278.8,696.2 1353.8,705.0 1366.7,725.0 1347.7,780.6 1262.4,810.4 1178.4,821.9 1152.5,835.0 1132.5,861.2 1128.8,865.0 1120.0,868.8 1111.2,860.0 1092.5,860.0 1065.0,855.6 1038.8,856.2 1030.0,858.8 1015.0,852.5 1012.5,857.5 1011.2,870.0 1010.0,877.5 997.5,884.4 993.8,876.2 987.5,865.0 985.0,857.5 981.2,850.0 976.3,850.0 963.3,835.2 953.1,820.4 949.4,807.4 941.1,791.7 930.0,781.5 921.2,775.0 910.0,770.0 897.5,753.8 892.5,742.5 888.0,725.0 890.0,708.8 878.8,685.0 875.0,677.5 862.5,665.0 845.0,655.0 837.5,645.0 836.0,635.0 827.5,620.0 823.2,613.6 815.4,599.3 805.0,583.8 790.8,565.6 780.4,554.0 774.0,550.0 763.6,550.0 765.5,544.9 770.0,525.4" fill="#e0e0e0"/><polygon points="890.0,547.5 906.0,538.8 931.2,528.8 956.2,526.9 980.0,528.8 987.5,531.0 993.8,537.5 1002.5,535.0 1006.0,540.6 1017.5,543.0 1023.8,540.0 1031.2,550.0 1035.0,556.0 1055.0,565.0 1060.0,566.0 1050.0,567.5 1050.0,573.8 1046.0,578.0 1038.8,578.0 1028.8,571.0 1013.8,577.5 1005.0,586.0 985.0,597.5 980.0,602.5 978.8,610.0 972.5,617.5 960.0,622.5 937.5,622.5 917.5,628.8 915.0,612.5 916.0,600.0 911.0,597.5 913.8,586.0 922.5,576.0 915.0,570.0 911.0,557.5 900.0,550.0" fill="#cccccc"/><polygon points="1060.0,566.0 1067.5,573.8 1086.0,584.0 1108.8,592.0 1121.0,598.0 1132.0,602.5 1132.5,637.5 1135.0,650.0 1152.5,660.0 1156.0,675.0 1152.8,702.2 1147.6,733.3 1143.7,770.0 1138.8,795.6 1102.5,800.0 1071.2,803.0 1047.5,796.2 1037.5,787.5 1031.2,777.5 1032.5,765.0 1022.5,753.8 1015.0,740.0 1017.5,723.8 1017.5,710.0 1010.0,708.8 1007.5,709.2 1003.3,707.5 1004.2,700.8 1002.5,698.3 985.8,696.7 978.3,675.8 974.2,673.3 974.2,668.3 975.4,654.2 977.5,649.2 981.7,644.6 988.3,646.2 999.2,647.0 1005.0,646.7 1007.5,644.0 1006.7,640.0 1010.0,635.8 1016.2,631.0 1033.8,622.5 1053.8,621.0 1052.5,611.0 1043.8,598.8 1043.8,591.0 1056.0,580.0 1050.0,573.8 1050.0,567.5" fill="#cccccc"/><polygon points="1088.8,520.6 1105.0,520.6 1132.5,523.8 1139.4,536.9 1158.8,536.9 1166.0,550.0 1170.0,555.0 1180.0,567.5 1191.0,576.0 1201.0,585.0 1207.5,590.0 1211.0,601.0 1205.0,607.5 1211.0,619.0 1220.0,628.8 1226.0,642.5 1233.8,652.5 1242.5,653.8 1245.0,657.5 1250.0,660.0 1278.8,696.2 1353.8,705.0 1366.7,725.0 1347.7,780.6 1262.4,810.4 1178.4,821.9 1152.5,835.0 1132.5,861.2 1138.8,795.6 1143.7,770.0 1147.6,733.3 1152.8,702.2 1156.0,675.0 1152.5,660.0 1135.0,650.0 1132.5,637.5 1132.0,602.5 1121.0,598.0 1108.8,592.0 1086.0,584.0 1067.5,573.8 1060.0,566.0 1060.0,560.0 1068.8,550.0 1078.8,532.5 1086.0,527.5" fill="#cccccc"/><polygon points="878.8,683.8 886.2,682.5 895.0,690.0 902.5,691.2 915.0,692.5 916.2,702.5 922.5,710.0 930.0,706.2 936.7,707.9 938.3,705.0 954.2,691.7 959.2,689.2 954.2,685.0 955.0,683.3 968.3,676.7 967.5,669.2 971.7,667.9 974.2,668.3 974.2,673.3 978.3,675.8 985.8,696.7 1002.5,698.3 1004.2,700.8 1003.3,707.5 1007.5,709.2 1010.0,708.8 1017.5,710.0 1017.5,723.8 1015.0,740.0 1022.5,753.8 1010.0,755.6 1002.2,758.3 988.3,768.5 981.9,771.3 975.4,767.6 974.4,763.0 961.5,764.8 957.8,759.3 954.1,760.2 953.1,768.5 946.7,775.0 941.1,779.6 944.8,781.5 944.8,788.9 945.7,795.4 953.1,800.0 956.9,798.1 958.7,789.8 967.0,787.0 970.7,788.0 971.7,798.1 969.8,802.8 959.6,805.6 957.8,809.3 957.8,814.8 967.0,818.5 968.9,827.8 963.3,835.2 953.1,820.4 949.4,807.4 941.1,791.7 930.0,781.5 921.2,775.0 910.0,770.0 897.5,753.8 892.5,742.5 888.0,725.0 890.0,708.8" fill="#cccccc"/><polygon points="890.0,547.5 906.0,538.8 931.2,528.8 956.2,526.9 980.0,528.8 987.5,531.0 993.8,537.5 1002.5,535.0 1006.0,540.6 1017.5,543.0 1023.8,540.0 1031.2,550.0 1035.0,556.0 1055.0,565.0 1060.0,566.0 1050.0,567.5 1050.0,573.8 1046.0,578.0 1038.8,578.0 1028.8,571.0 1013.8,577.5 1005.0,586.0 985.0,597.5 980.0,602.5 978.8,610.0 972.5,617.5 960.0,622.5 937.5,622.5 917.5,628.8 915.0,612.5 916.0,600.0 911.0,597.5 913.8,586.0 922.5,576.0 915.0,570.0 911.0,557.5 900.0,550.0" fill="none" stroke="#a4a4a4" stroke-width="2.8"/><polygon points="980.0,602.5 985.0,597.5 1005.0,586.0 1013.8,577.5 1028.8,571.0 1038.8,578.0 1046.0,578.0 1050.0,573.8 1056.0,580.0 1043.8,591.0 1043.8,598.8 1052.5,611.0 1053.8,621.0 1033.8,622.5 1016.2,631.0 1010.0,635.8 1006.7,640.0 1007.5,644.0 1005.0,646.7 999.2,647.0 988.3,646.2 981.7,644.6 977.5,649.2 973.3,642.5 970.8,637.5 965.0,635.0 964.2,630.0 965.0,625.0 960.0,622.5 972.5,617.5 978.8,610.0" fill="none" stroke="#a4a4a4" stroke-width="2.8"/><polygon points="1060.0,566.0 1067.5,573.8 1086.0,584.0 1108.8,592.0 1121.0,598.0 1132.0,602.5 1132.5,637.5 1135.0,650.0 1152.5,660.0 1156.0,675.0 1152.8,702.2 1147.6,733.3 1143.7,770.0 1138.8,795.6 1102.5,800.0 1071.2,803.0 1047.5,796.2 1037.5,787.5 1031.2,777.5 1032.5,765.0 1022.5,753.8 1015.0,740.0 1017.5,723.8 1017.5,710.0 1010.0,708.8 1007.5,709.2 1003.3,707.5 1004.2,700.8 1002.5,698.3 985.8,696.7 978.3,675.8 974.2,673.3 974.2,668.3 975.4,654.2 977.5,649.2 981.7,644.6 988.3,646.2 999.2,647.0 1005.0,646.7 1007.5,644.0 1006.7,640.0 1010.0,635.8 1016.2,631.0 1033.8,622.5 1053.8,621.0 1052.5,611.0 1043.8,598.8 1043.8,591.0 1056.0,580.0 1050.0,573.8 1050.0,567.5" fill="none" stroke="#a4a4a4" stroke-width="2.8"/><polygon points="878.8,683.8 886.2,682.5 895.0,690.0 902.5,691.2 915.0,692.5 916.2,702.5 922.5,710.0 930.0,706.2 936.7,707.9 938.3,705.0 954.2,691.7 959.2,689.2 954.2,685.0 955.0,683.3 968.3,676.7 967.5,669.2 971.7,667.9 974.2,668.3 974.2,673.3 978.3,675.8 985.8,696.7 1002.5,698.3 1004.2,700.8 1003.3,707.5 1007.5,709.2 1010.0,708.8 1017.5,710.0 1017.5,723.8 1015.0,740.0 1022.5,753.8 1010.0,755.6 1002.2,758.3 988.3,768.5 981.9,771.3 975.4,767.6 974.4,763.0 961.5,764.8 957.8,759.3 954.1,760.2 953.1,768.5 946.7,775.0 941.1,779.6 944.8,781.5 944.8,788.9 945.7,795.4 953.1,800.0 956.9,798.1 958.7,789.8 967.0,787.0 970.7,788.0 971.7,798.1 969.8,802.8 959.6,805.6 957.8,809.3 957.8,814.8 967.0,818.5 968.9,827.8 963.3,835.2 953.1,820.4 949.4,807.4 941.1,791.7 930.0,781.5 921.2,775.0 910.0,770.0 897.5,753.8 892.5,742.5 888.0,725.0 890.0,708.8" fill="none" stroke="#a4a4a4" stroke-width="2.8"/><polygon points="1047.5,796.2 1071.2,803.0 1102.5,800.0 1138.8,795.6 1132.5,861.2 1128.8,865.0 1120.0,868.8 1111.2,860.0 1092.5,860.0 1065.0,855.6 1038.8,856.2 1030.0,858.8 1022.5,851.2 1022.5,831.2 1035.0,818.8 1043.8,813.8 1042.5,805.0 1046.2,802.5" fill="none" stroke="#a4a4a4" stroke-width="2.8"/><polygon points="941.1,779.6 946.7,775.0 953.1,768.5 954.1,760.2 957.8,759.3 961.5,764.8 974.4,763.0 975.4,767.6 976.3,772.2 969.8,777.8 968.9,782.4 967.0,787.0 958.7,789.8 956.9,798.1 953.1,800.0 945.7,795.4 944.8,788.9 944.8,781.5" fill="none" stroke="#a4a4a4" stroke-width="2.8"/><polyline points="770.0,525.4 781.7,527.3 797.3,523.5 805.0,524.7 816.7,536.4 828.4,533.2 844.0,535.0 852.5,527.5 853.8,537.5 857.5,542.5 872.5,545.0 880.0,548.0 888.8,546.9 890.0,547.5" fill="none" stroke="#a4a4a4" stroke-width="2.8"/><polyline points="856.9,446.2 856.2,457.5 866.2,469.4 887.5,467.5 912.5,470.0 920.0,473.8 941.2,473.8 952.5,480.0 962.5,481.2 972.5,491.9 940.0,511.2 937.5,525.0 931.2,528.8" fill="none" stroke="#a4a4a4" stroke-width="2.8"/><polyline points="1088.8,520.6 1086.0,527.5 1078.8,532.5 1068.8,550.0 1060.0,560.0 1060.0,566.0" fill="none" stroke="#a4a4a4" stroke-width="2.8"/><polyline points="825.6,575.0 838.8,569.4 853.8,569.4 857.5,576.9 866.9,580.0 870.6,586.9 882.5,583.0 893.8,590.0 910.0,589.4 913.8,586.0" fill="none" stroke="#a4a4a4" stroke-width="2.8"/><polyline points="825.6,575.0 831.2,578.8 839.4,592.5 836.2,598.8 840.0,607.5 850.0,611.2 857.5,622.5 861.2,625.0 860.0,642.5 845.0,647.5 841.0,651.0" fill="none" stroke="#a4a4a4" stroke-width="2.8"/><polyline points="1022.5,851.2 1015.0,852.5" fill="none" stroke="#a4a4a4" stroke-width="2.8"/><polyline points="963.3,835.2 968.9,829.6 973.5,830.6 972.6,836.1 979.1,838.9 984.6,841.7 993.0,848.1 997.6,842.6 1002.2,838.9 1004.1,842.6 1009.6,847.2 1015.0,852.5" fill="none" stroke="#a4a4a4" stroke-width="2.8"/><polyline points="752.2,457.6 772.0,509.2" fill="none" stroke="#6e6e6e" stroke-width="3.6"/><polyline points="790.6,420.0 787.5,452.5 786.2,467.5 780.0,480.0 772.7,508.2" fill="none" stroke="#6e6e6e" stroke-width="3.6"/><polyline points="793.2,419.1 804.0,416.7 826.9,427.5 883.5,398.6 947.3,367.3 953.3,356.5 956.9,334.8 954.5,318.0 956.9,310.7 982.2,291.5 985.8,286.7" fill="none" stroke="#6e6e6e" stroke-width="3.6"/><polyline points="883.5,398.6 889.5,421.5 896.7,431.1 895.6,433.1" fill="none" stroke="#6e6e6e" stroke-width="3.6"/><polyline points="800.4,324.0 807.6,326.4 814.8,316.8 823.2,315.6 818.4,307.1 822.0,298.7 835.3,303.5 870.2,296.3 882.2,302.3 911.1,301.1 940.0,290.3 964.1,291.0 982.2,286.7 985.8,291.5 997.8,283.1 1017.1,285.5 1030.3,286.7 1037.6,285.5 1040.0,293.9 1055.0,289.0" fill="none" stroke="#6e6e6e" stroke-width="3.6"/><polyline points="1040.0,240.0 1047.1,272.0 1055.6,289.0 1071.3,321.6 1084.6,327.6 1096.7,328.8 1090.6,334.8 1094.3,348.0 1084.6,350.4 1081.0,357.7 1081.0,363.7 1075.0,370.9 1078.5,380.6 1087.0,390.2 1094.3,399.8 1094.3,409.4 1108.7,411.8 1130.4,425.0 1142.4,443.1 1138.8,455.1 1138.8,464.8 1147.2,467.2 1148.8,480.0 1157.5,488.0 1161.0,495.6" fill="none" stroke="#6e6e6e" stroke-width="3.6"/><polyline points="1105.0,520.6 1115.0,510.0 1125.0,493.0 1136.0,491.0 1147.5,494.4 1152.5,493.8 1161.0,495.6" fill="none" stroke="#6e6e6e" stroke-width="3.6"/><polyline points="800.9,361.3 813.6,361.3 819.6,373.4 812.4,383.0 802.8,392.6 793.2,402.2 787.1,407.0 777.5,407.0" fill="none" stroke="#6e6e6e" stroke-width="3.6"/><polyline points="781.1,423.9 789.5,425.1 788.3,450.4 771.5,456.4 779.9,444.4 773.9,438.4 773.9,428.7 781.1,423.9" fill="none" stroke="#6e6e6e" stroke-width="3.6"/><polyline points="690.0,724.3 828.0,724.3" fill="none" stroke="#6e6e6e" stroke-width="3.6"/><polyline points="877.3,839.0 866.9,850.8 846.1,858.5 831.9,866.3 829.3,881.9 817.6,920.8 820.2,946.7 807.2,990.8 794.3,992.1 776.1,1019.3 760.0,1060.0" fill="none" stroke="#6e6e6e" stroke-width="3.6"/><polyline points="820.2,945.4 833.2,941.5 839.7,941.5 847.4,946.7 857.8,929.9 874.7,941.5 892.8,936.3 898.0,940.2 905.8,937.6 921.4,940.2 942.1,949.3 965.4,972.7 986.2,997.3 996.6,999.9 1006.9,990.8" fill="none" stroke="#6e6e6e" stroke-width="3.6"/><polyline points="996.6,999.9 970.6,1019.3 950.0,1060.0" fill="none" stroke="#6e6e6e" stroke-width="3.6"/><polyline points="1250.0,660.0 1278.8,696.2 1353.8,705.0 1366.7,725.0 1347.7,780.6 1262.4,810.4 1178.4,821.9 1152.5,835.0 1132.5,861.2 1128.8,865.0 1120.0,868.8 1111.2,860.0 1092.5,860.0 1065.0,855.6 1038.8,856.2 1030.0,858.8 1015.0,852.5 1012.5,857.5 1011.2,870.0 1010.0,877.5 997.5,884.4" fill="none" stroke="#6e6e6e" stroke-width="3.6"/><polyline points="772.0,509.2 803.8,517.6 825.0,498.8 845.0,495.0 851.2,485.0 859.4,480.6 833.1,451.9 860.0,445.6 887.5,437.5 895.6,433.1 928.8,438.8 1052.5,516.9 1088.8,520.6 1105.0,520.6 1132.5,523.8 1139.4,536.9 1158.8,536.9" fill="none" stroke="#6e6e6e" stroke-width="3.6"/><polyline points="1353.8,705.0 1354.4,692.5 1364.4,677.5 1362.5,670.0 1376.0,665.0 1370.0,660.0 1372.5,639.4 1377.5,640.0 1380.0,645.0 1387.5,638.8" fill="none" stroke="#6e6e6e" stroke-width="3.6"/><polyline points="1262.4,810.4 1294.1,878.0" fill="none" stroke="#6e6e6e" stroke-width="3.6"/><polyline points="1315.7,284.3 1326.5,284.3 1342.1,279.4 1345.8,272.0 1369.0,258.0 1426.0,258.0 1488.0,273.0 1519.0,302.5 1540.0,320.0" fill="none" stroke="#6e6e6e" stroke-width="3.6"/></g><path d="M68.00,57.80L88.10,57.80A20.10,20.10 0 1 1 68.00,37.70Z" fill="#b2d06e"/><path d="M68.00,57.80L68.00,37.70A20.10,20.10 0 0 1 88.10,57.80Z" fill="#7ebcc3"/><circle cx="36.90" cy="70.00" r="8.20" fill="#b2d06e"/><circle cx="44.20" cy="87.20" r="6.40" fill="#b2d06e"/></svg>
<div class="t" style="left:77.00px;top:24.67px;font-size:16.5px;font-weight:normal;font-style:normal;color:#ffffff;font-family:'Liberation Sans', sans-serif;transform:scaleX(1.0094);-webkit-text-stroke:0.45px #fff;">2026-WCP-0010 Draft.docx</div>
<div class="t" style="left:728.50px;top:26.08px;font-size:16.5px;font-weight:normal;font-style:normal;color:#ffffff;font-family:'Liberation Sans', sans-serif;transform:scaleX(0.9143);">7</div>
<div class="t" style="left:751.50px;top:26.08px;font-size:16.5px;font-weight:normal;font-style:normal;color:#ffffff;font-family:'Liberation Sans', sans-serif;transform:scaleX(1.4367);">/</div>
<div class="t" style="left:764.80px;top:26.08px;font-size:16.5px;font-weight:normal;font-style:normal;color:#ffffff;font-family:'Liberation Sans', sans-serif;transform:scaleX(0.9042);">12</div>
<div class="t" style="left:863.60px;top:26.08px;font-size:16.5px;font-weight:normal;font-style:normal;color:#ffffff;font-family:'Liberation Sans', sans-serif;transform:scaleX(0.8957);">150%</div>
<div class="t" style="left:175.50px;top:142.44px;font-size:15.6px;font-weight:normal;font-style:normal;color:#ffffff;font-family:'Liberation Sans', sans-serif;">4</div>
<div class="t" style="left:175.50px;top:382.44px;font-size:15.6px;font-weight:normal;font-style:normal;color:#ffffff;font-family:'Liberation Sans', sans-serif;">5</div>
<div class="t" style="left:175.50px;top:622.44px;font-size:15.6px;font-weight:normal;font-style:normal;color:#ffffff;font-family:'Liberation Sans', sans-serif;">6</div>
<div class="t" style="left:175.50px;top:862.44px;font-size:15.6px;font-weight:normal;font-style:normal;color:#ffffff;font-family:'Liberation Sans', sans-serif;">7</div>
<div class="t" style="left:591.00px;top:77.14px;font-size:18.9px;font-weight:bold;font-style:normal;color:#bdbdbd;font-family:'Liberation Sans', sans-serif;transform:scaleX(0.9822);-webkit-text-stroke:0.35px #bdbdbd;">SURVEILLANCE</div>
<div class="t" style="left:742.50px;top:77.14px;font-size:18.9px;font-weight:normal;font-style:normal;color:#bdbdbd;font-family:'Liberation Sans', sans-serif;transform:scaleX(0.8458);">REPORT</div>
<div class="t" style="left:875.80px;top:77.14px;font-size:18.9px;font-weight:bold;font-style:normal;color:#7f7f7f;font-family:'Liberation Sans', sans-serif;transform:scaleX(1.0567);-webkit-text-stroke:0.35px #7f7f7f;">Weekly Communicable Disease Threats Report, Week 10, 28 February to 6 March 2026</div>
<div class="t" style="left:591.00px;top:128.88px;font-size:39.2px;font-weight:bold;font-style:normal;color:#65ad2b;font-family:'Liberation Sans', sans-serif;transform:scaleX(1.0628);-webkit-text-stroke:0.7px #65ad2b;">Maps and graphs</div>
<div class="t" style="left:591.00px;top:186.77px;font-size:21.8px;font-weight:bold;font-style:normal;color:#65ad2b;font-family:'Liberation Sans', sans-serif;transform:scaleX(1.1690);-webkit-text-stroke:0.45px #65ad2b;">Figure 8.</div>
<div class="t" style="left:706.60px;top:186.77px;font-size:21.8px;font-weight:bold;font-style:normal;color:#000;font-family:'Liberation Sans', sans-serif;transform:scaleX(1.1501);-webkit-text-stroke:0.45px #000;">Geographical distribution of confirmed cases of MERS in Saudi Arabia by</div>
<div class="t" style="left:591.00px;top:212.97px;font-size:21.8px;font-weight:bold;font-style:normal;color:#000;font-family:'Liberation Sans', sans-serif;transform:scaleX(1.1780);-webkit-text-stroke:0.45px #000;">probable region of infection and exposure, with dates of onset from January 2013 to</div>
<div class="t" style="left:591.00px;top:238.57px;font-size:21.8px;font-weight:bold;font-style:normal;color:#000;font-family:'Liberation Sans', sans-serif;transform:scaleX(1.1927);-webkit-text-stroke:0.45px #000;">December 2025</div>
<div class="t" style="left:597.70px;top:401.24px;font-size:11.6px;font-weight:bold;font-style:normal;color:#000;font-family:'Liberation Sans', sans-serif;transform:scaleX(1.0221);">Probable exposure</div>
<div class="t" style="left:639.80px;top:467.58px;font-size:11.9px;font-weight:normal;font-style:normal;color:#1a1a1a;font-family:'Liberation Sans', sans-serif;transform:scaleX(0.8960);">Camel</div>
<div class="t" style="left:639.80px;top:487.08px;font-size:11.9px;font-weight:normal;font-style:normal;color:#1a1a1a;font-family:'Liberation Sans', sans-serif;transform:scaleX(0.9110);">Secondary</div>
<div class="t" style="left:639.80px;top:500.88px;font-size:11.9px;font-weight:normal;font-style:normal;color:#1a1a1a;font-family:'Liberation Sans', sans-serif;transform:scaleX(0.9616);">(household)</div>
<div class="t" style="left:639.80px;top:517.88px;font-size:11.9px;font-weight:normal;font-style:normal;color:#1a1a1a;font-family:'Liberation Sans', sans-serif;transform:scaleX(0.9110);">Secondary</div>
<div class="t" style="left:639.80px;top:531.18px;font-size:11.9px;font-weight:normal;font-style:normal;color:#1a1a1a;font-family:'Liberation Sans', sans-serif;transform:scaleX(0.9460);">(nosocomial)</div>
<div class="t" style="left:639.80px;top:548.68px;font-size:11.9px;font-weight:normal;font-style:normal;color:#1a1a1a;font-family:'Liberation Sans', sans-serif;transform:scaleX(0.9110);">Secondary</div>
<div class="t" style="left:639.80px;top:561.99px;font-size:11.9px;font-weight:normal;font-style:normal;color:#1a1a1a;font-family:'Liberation Sans', sans-serif;transform:scaleX(0.9577);">(unspecified)</div>
<div class="t" style="left:639.80px;top:582.28px;font-size:11.9px;font-weight:normal;font-style:normal;color:#1a1a1a;font-family:'Liberation Sans', sans-serif;transform:scaleX(0.9399);">Unknown</div>
<div class="t" style="left:596.80px;top:616.54px;font-size:11.6px;font-weight:bold;font-style:normal;color:#000;font-family:'Liberation Sans', sans-serif;transform:scaleX(1.0178);">Number of cases</div>
<div class="t" style="left:650.90px;top:633.68px;font-size:11.9px;font-weight:normal;font-style:normal;color:#1a1a1a;font-family:'Liberation Sans', sans-serif;transform:scaleX(0.8765);">17</div>
<div class="t" style="left:650.90px;top:649.49px;font-size:11.9px;font-weight:normal;font-style:normal;color:#1a1a1a;font-family:'Liberation Sans', sans-serif;transform:scaleX(0.8892);">7.5</div>
<div class="t" style="left:650.90px;top:664.28px;font-size:11.9px;font-weight:normal;font-style:normal;color:#1a1a1a;font-family:'Liberation Sans', sans-serif;transform:scaleX(0.9358);">2</div>
<div class="t" style="left:642.00px;top:698.08px;font-size:11.9px;font-weight:normal;font-style:normal;color:#1a1a1a;font-family:'Liberation Sans', sans-serif;transform:scaleX(0.9698);">Areas with reported</div>
<div class="t" style="left:642.00px;top:711.38px;font-size:11.9px;font-weight:normal;font-style:normal;color:#1a1a1a;font-family:'Liberation Sans', sans-serif;transform:scaleX(0.9014);">human MERS cases</div>
<div class="t" style="left:642.00px;top:726.88px;font-size:11.9px;font-weight:normal;font-style:normal;color:#1a1a1a;font-family:'Liberation Sans', sans-serif;transform:scaleX(0.9558);">Non  affected</div>
<div class="t" style="left:642.00px;top:740.28px;font-size:11.9px;font-weight:normal;font-style:normal;color:#1a1a1a;font-family:'Liberation Sans', sans-serif;transform:scaleX(0.9210);">areas</div>
<div class="t" style="left:875.00px;top:499.07px;font-size:11.8px;font-weight:normal;font-style:normal;color:#1a1a1a;font-family:'Liberation Sans', sans-serif;transform:scaleX(0.9520);">Jawf</div>
<div class="t" style="left:949.70px;top:509.67px;font-size:11.8px;font-weight:normal;font-style:normal;color:#1a1a1a;font-family:'Liberation Sans', sans-serif;transform:scaleX(0.9707);">Northern Frontier</div>
<div class="t" style="left:819.40px;top:548.47px;font-size:11.8px;font-weight:normal;font-style:normal;color:#1a1a1a;font-family:'Liberation Sans', sans-serif;transform:scaleX(0.8925);">Tabuk</div>
<div class="t" style="left:932.50px;top:570.37px;font-size:11.8px;font-weight:normal;font-style:normal;color:#1a1a1a;font-family:'Liberation Sans', sans-serif;transform:scaleX(0.9248);">Hail</div>
<div class="t" style="left:891.90px;top:636.97px;font-size:11.8px;font-weight:normal;font-style:normal;color:#1a1a1a;font-family:'Liberation Sans', sans-serif;transform:scaleX(0.9102);">Madinah</div>
<div class="t" style="left:992.50px;top:606.57px;font-size:11.8px;font-weight:normal;font-style:normal;color:#1a1a1a;font-family:'Liberation Sans', sans-serif;transform:scaleX(0.9131);">Quassim</div>
<div class="t" style="left:1010.00px;top:685.67px;font-size:11.8px;font-weight:normal;font-style:normal;color:#1a1a1a;font-family:'Liberation Sans', sans-serif;transform:scaleX(0.8916);">Riyad</div>
<div class="t" style="left:900.60px;top:727.17px;font-size:11.8px;font-weight:normal;font-style:normal;color:#1a1a1a;font-family:'Liberation Sans', sans-serif;transform:scaleX(0.9077);">Makkah</div>
<div class="t" style="left:946.30px;top:772.17px;font-size:11.8px;font-weight:normal;font-style:normal;color:#1a1a1a;font-family:'Liberation Sans', sans-serif;transform:scaleX(0.8599);">Baha</div>
<div class="t" style="left:998.10px;top:795.97px;font-size:11.8px;font-weight:normal;font-style:normal;color:#1a1a1a;font-family:'Liberation Sans', sans-serif;transform:scaleX(0.8953);">Asir</div>
<div class="t" style="left:1033.50px;top:825.97px;font-size:11.8px;font-weight:normal;font-style:normal;color:#1a1a1a;font-family:'Liberation Sans', sans-serif;transform:scaleX(0.9233);">Najran</div>
<div class="t" style="left:985.00px;top:851.57px;font-size:11.8px;font-weight:normal;font-style:normal;color:#1a1a1a;font-family:'Liberation Sans', sans-serif;transform:scaleX(0.8858);">Jizan</div>
<div class="t" style="left:1158.40px;top:713.67px;font-size:11.8px;font-weight:normal;font-style:normal;color:#1a1a1a;font-family:'Liberation Sans', sans-serif;transform:scaleX(0.9305);">Eastern Province</div>
<div class="t" style="left:1033.00px;top:637.75px;font-size:22.3px;font-weight:normal;font-style:normal;color:#000;font-family:'Liberation Mono', monospace;transform:scaleX(0.9279);-webkit-text-stroke:0.3px #000;">Saudi Arabia</div>
<div class="t" style="left:1332.50px;top:294.24px;font-size:27.6px;font-weight:bold;font-style:normal;color:#000;font-family:'Liberation Sans', sans-serif;transform:scaleX(0.7851);">2025</div>
<div class="t" style="left:863.50px;top:1027.57px;font-size:9.1px;font-weight:normal;font-style:normal;color:#1a1a1a;font-family:'Liberation Sans', sans-serif;transform:scaleX(0.8351);">Administrative boundaries: © EuroGeographics ©UN-FAO ©Turkstat. The boundaries and names shown on this map do not imply official endorsement or acceptance by the European Union. Map produced by ECDC on 5 January 2026</div>
<div class="t" style="left:591.00px;top:1061.17px;font-size:21.1px;font-weight:normal;font-style:italic;color:#000;font-family:'Liberation Sans', sans-serif;transform:scaleX(0.9810);">Source: ECDC</div>
<div class="t" style="left:1495.40px;top:277.97px;font-size:13.8px;font-weight:bold;font-style:normal;color:#000;font-family:'Liberation Sans', sans-serif;transform:scaleX(0.8208);">2024</div>
<div class="t" style="left:1622.30px;top:277.97px;font-size:13.8px;font-weight:bold;font-style:normal;color:#000;font-family:'Liberation Sans', sans-serif;transform:scaleX(0.8208);">2023</div>
<div class="t" style="left:1495.40px;top:404.37px;font-size:13.8px;font-weight:bold;font-style:normal;color:#000;font-family:'Liberation Sans', sans-serif;transform:scaleX(0.8208);">2022</div>
<div class="t" style="left:1622.30px;top:404.37px;font-size:13.8px;font-weight:bold;font-style:normal;color:#000;font-family:'Liberation Sans', sans-serif;transform:scaleX(0.8208);">2021</div>
<div class="t" style="left:1495.40px;top:530.87px;font-size:13.8px;font-weight:bold;font-style:normal;color:#000;font-family:'Liberation Sans', sans-serif;transform:scaleX(0.8208);">2020</div>
<div class="t" style="left:1622.30px;top:530.87px;font-size:13.8px;font-weight:bold;font-style:normal;color:#000;font-family:'Liberation Sans', sans-serif;transform:scaleX(0.8208);">2019</div>
<div class="t" style="left:1495.40px;top:657.27px;font-size:13.8px;font-weight:bold;font-style:normal;color:#000;font-family:'Liberation Sans', sans-serif;transform:scaleX(0.8208);">2018</div>
<div class="t" style="left:1622.30px;top:657.27px;font-size:13.8px;font-weight:bold;font-style:normal;color:#000;font-family:'Liberation Sans', sans-serif;transform:scaleX(0.8208);">2017</div>
<div class="t" style="left:1495.40px;top:783.67px;font-size:13.8px;font-weight:bold;font-style:normal;color:#000;font-family:'Liberation Sans', sans-serif;transform:scaleX(0.8208);">2016</div>
<div class="t" style="left:1622.30px;top:783.67px;font-size:13.8px;font-weight:bold;font-style:normal;color:#000;font-family:'Liberation Sans', sans-serif;transform:scaleX(0.8208);">2015</div>
<div class="t" style="left:1495.40px;top:910.07px;font-size:13.8px;font-weight:bold;font-style:normal;color:#000;font-family:'Liberation Sans', sans-serif;transform:scaleX(0.8208);">2014</div>
<div class="t" style="left:1622.30px;top:910.07px;font-size:13.8px;font-weight:bold;font-style:normal;color:#000;font-family:'Liberation Sans', sans-serif;transform:scaleX(0.8208);">2013</div>
</body></html>
